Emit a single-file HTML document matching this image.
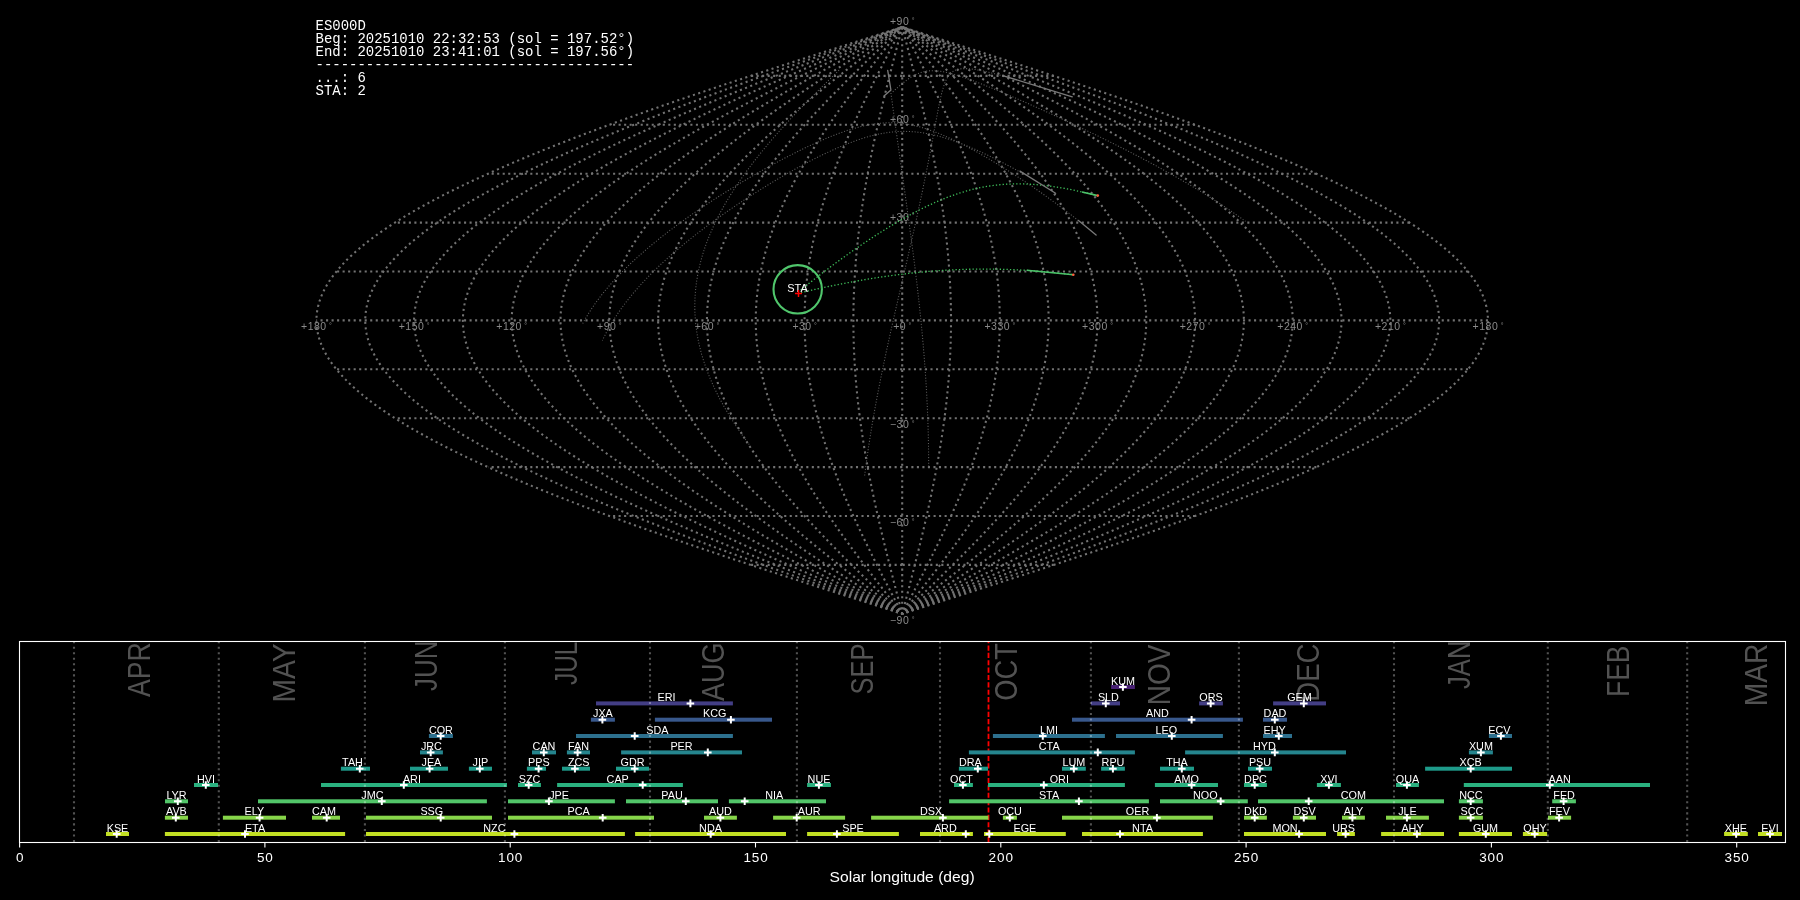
<!DOCTYPE html><html><head><meta charset="utf-8"><style>html,body{margin:0;padding:0;background:#000;width:1800px;height:900px;overflow:hidden}svg{display:block;will-change:transform}</style></head><body><svg width="1800" height="900" viewBox="0 0 1800 900"><rect width="1800" height="900" fill="#000"/><g stroke="#727272" stroke-width="2.08" stroke-dasharray="2.08 3.44" fill="none"><polyline stroke-dashoffset="1.04" points="902.20,613.80 904.76,612.98 907.31,612.17 909.87,611.36 912.42,610.54 914.98,609.72 917.53,608.91 920.09,608.10 922.64,607.28 925.20,606.46 927.75,605.65 930.30,604.84 932.86,604.02 935.41,603.20 937.96,602.39 940.51,601.57 943.06,600.76 945.61,599.94 948.16,599.13 950.71,598.31 953.25,597.50 955.80,596.68 958.34,595.87 960.89,595.05 963.43,594.24 965.97,593.42 968.51,592.61 971.05,591.79 973.59,590.98 976.12,590.16 978.66,589.35 981.19,588.53 983.72,587.72 986.25,586.90 988.78,586.09 991.31,585.27 993.83,584.46 996.36,583.64 998.88,582.83 1001.40,582.01 1003.92,581.20 1006.43,580.38 1008.95,579.57 1011.46,578.75 1013.97,577.94 1016.48,577.12 1018.98,576.31 1021.48,575.49 1023.99,574.68 1026.48,573.87 1028.98,573.05 1031.47,572.23 1033.97,571.42 1036.46,570.61 1038.94,569.79 1041.43,568.97 1043.91,568.16 1046.39,567.35 1048.86,566.53 1051.33,565.71 1053.80,564.90 1056.27,564.08 1058.74,563.27 1061.20,562.45 1063.66,561.64 1066.11,560.82 1068.56,560.01 1071.01,559.19 1073.46,558.38 1075.90,557.56 1078.34,556.75 1080.78,555.93 1083.21,555.12 1085.64,554.30 1088.06,553.49 1090.49,552.67 1092.90,551.86 1095.32,551.04 1097.73,550.23 1100.14,549.41 1102.54,548.60 1104.94,547.78 1107.34,546.97 1109.73,546.15 1112.12,545.34 1114.50,544.52 1116.88,543.71 1119.26,542.89 1121.63,542.08 1124.00,541.26 1126.36,540.45 1128.72,539.63 1131.07,538.82 1133.42,538.00 1135.77,537.19 1138.11,536.38 1140.45,535.56 1142.78,534.75 1145.11,533.93 1147.43,533.12 1149.75,532.30 1152.07,531.48 1154.37,530.67 1156.68,529.86 1158.98,529.04 1161.27,528.22 1163.56,527.41 1165.85,526.60 1168.13,525.78 1170.40,524.96 1172.67,524.15 1174.94,523.33 1177.20,522.52 1179.45,521.70 1181.70,520.89 1183.94,520.07 1186.18,519.26 1188.41,518.44 1190.64,517.63 1192.86,516.81 1195.08,516.00 1197.29,515.18 1199.49,514.37 1201.69,513.55 1203.89,512.74 1206.07,511.92 1208.26,511.11 1210.43,510.29 1212.60,509.48 1214.77,508.66 1216.93,507.85 1219.08,507.03 1221.23,506.22 1223.37,505.40 1225.50,504.59 1227.63,503.77 1229.75,502.96 1231.87,502.14 1233.98,501.33 1236.08,500.51 1238.18,499.70 1240.27,498.88 1242.35,498.07 1244.43,497.25 1246.50,496.44 1248.56,495.62 1250.62,494.81 1252.67,494.00 1254.72,493.18 1256.75,492.36 1258.79,491.55 1260.81,490.73 1262.83,489.92 1264.84,489.10 1266.84,488.29 1268.84,487.47 1270.83,486.66 1272.81,485.84 1274.79,485.03 1276.76,484.21 1278.72,483.40 1280.67,482.58 1282.62,481.77 1284.56,480.95 1286.49,480.14 1288.42,479.32 1290.33,478.51 1292.24,477.69 1294.15,476.88 1296.04,476.06 1297.93,475.25 1299.81,474.43 1301.68,473.62 1303.55,472.80 1305.41,471.99 1307.26,471.17 1309.10,470.36 1310.93,469.54 1312.76,468.73 1314.58,467.91 1316.39,467.10 1318.20,466.28 1319.99,465.47 1321.78,464.65 1323.56,463.84 1325.33,463.02 1327.09,462.21 1328.85,461.39 1330.59,460.58 1332.33,459.76 1334.06,458.95 1335.79,458.13 1337.50,457.32 1339.21,456.50 1340.91,455.69 1342.59,454.88 1344.28,454.06 1345.95,453.25 1347.61,452.43 1349.27,451.62 1350.92,450.80 1352.55,449.98 1354.18,449.17 1355.81,448.35 1357.42,447.54 1359.02,446.72 1360.62,445.91 1362.20,445.09 1363.78,444.28 1365.35,443.46 1366.91,442.65 1368.46,441.83 1370.01,441.02 1371.54,440.20 1373.06,439.39 1374.58,438.57 1376.09,437.76 1377.58,436.94 1379.07,436.13 1380.55,435.31 1382.02,434.50 1383.48,433.68 1384.94,432.87 1386.38,432.05 1387.81,431.24 1389.24,430.42 1390.65,429.61 1392.06,428.79 1393.46,427.98 1394.84,427.16 1396.22,426.35 1397.59,425.53 1398.95,424.72 1400.30,423.90 1401.64,423.09 1402.97,422.27 1404.29,421.46 1405.60,420.64 1406.90,419.83 1408.20,419.01 1409.48,418.20 1410.75,417.38 1412.02,416.57 1413.27,415.75 1414.51,414.94 1415.75,414.12 1416.97,413.31 1418.19,412.50 1419.39,411.68 1420.59,410.86 1421.77,410.05 1422.95,409.23 1424.11,408.42 1425.27,407.60 1426.41,406.79 1427.55,405.97 1428.67,405.16 1429.79,404.34 1430.89,403.53 1431.99,402.71 1433.08,401.90 1434.15,401.08 1435.22,400.27 1436.27,399.45 1437.31,398.64 1438.35,397.82 1439.37,397.01 1440.39,396.19 1441.39,395.38 1442.38,394.56 1443.37,393.75 1444.34,392.93 1445.30,392.12 1446.26,391.30 1447.20,390.49 1448.13,389.67 1449.05,388.86 1449.96,388.04 1450.86,387.23 1451.75,386.41 1452.63,385.60 1453.50,384.78 1454.36,383.97 1455.21,383.15 1456.04,382.34 1456.87,381.52 1457.69,380.71 1458.49,379.89 1459.29,379.08 1460.07,378.26 1460.85,377.45 1461.61,376.63 1462.36,375.82 1463.10,375.00 1463.83,374.19 1464.55,373.38 1465.26,372.56 1465.96,371.75 1466.65,370.93 1467.33,370.11 1468.00,369.30 1468.65,368.48 1469.30,367.67 1469.93,366.85 1470.56,366.04 1471.17,365.22 1471.77,364.41 1472.36,363.59 1472.94,362.78 1473.51,361.96 1474.07,361.15 1474.62,360.33 1475.16,359.52 1475.68,358.70 1476.20,357.89 1476.70,357.07 1477.19,356.26 1477.68,355.44 1478.15,354.63 1478.61,353.81 1479.06,353.00 1479.50,352.18 1479.92,351.37 1480.34,350.55 1480.74,349.74 1481.14,348.92 1481.52,348.11 1481.89,347.29 1482.26,346.48 1482.61,345.66 1482.94,344.85 1483.27,344.03 1483.59,343.22 1483.90,342.40 1484.19,341.59 1484.47,340.77 1484.75,339.96 1485.01,339.14 1485.26,338.33 1485.50,337.51 1485.73,336.70 1485.94,335.88 1486.15,335.07 1486.35,334.25 1486.53,333.44 1486.70,332.62 1486.86,331.81 1487.01,331.00 1487.15,330.18 1487.28,329.36 1487.40,328.55 1487.50,327.73 1487.60,326.92 1487.68,326.10 1487.76,325.29 1487.82,324.47 1487.87,323.66 1487.91,322.84 1487.93,322.03 1487.95,321.21 1487.96,320.40 1487.95,319.58 1487.93,318.77 1487.91,317.95 1487.87,317.14 1487.82,316.32 1487.76,315.51 1487.68,314.69 1487.60,313.88 1487.50,313.06 1487.40,312.25 1487.28,311.44 1487.15,310.62 1487.01,309.80 1486.86,308.99 1486.70,308.17 1486.53,307.36 1486.35,306.54 1486.15,305.73 1485.94,304.91 1485.73,304.10 1485.50,303.28 1485.26,302.47 1485.01,301.65 1484.75,300.84 1484.47,300.02 1484.19,299.21 1483.90,298.39 1483.59,297.58 1483.27,296.76 1482.94,295.95 1482.61,295.13 1482.26,294.32 1481.89,293.50 1481.52,292.69 1481.14,291.88 1480.74,291.06 1480.34,290.25 1479.92,289.43 1479.50,288.62 1479.06,287.80 1478.61,286.98 1478.15,286.17 1477.68,285.35 1477.19,284.54 1476.70,283.72 1476.20,282.91 1475.68,282.09 1475.16,281.28 1474.62,280.46 1474.07,279.65 1473.51,278.83 1472.94,278.02 1472.36,277.20 1471.77,276.39 1471.17,275.57 1470.56,274.76 1469.93,273.94 1469.30,273.13 1468.65,272.31 1468.00,271.50 1467.33,270.69 1466.65,269.87 1465.96,269.05 1465.26,268.24 1464.55,267.42 1463.83,266.61 1463.10,265.79 1462.36,264.98 1461.61,264.16 1460.85,263.35 1460.07,262.53 1459.29,261.72 1458.49,260.90 1457.69,260.09 1456.87,259.27 1456.04,258.46 1455.21,257.64 1454.36,256.83 1453.50,256.01 1452.63,255.20 1451.75,254.38 1450.86,253.57 1449.96,252.75 1449.05,251.94 1448.13,251.12 1447.20,250.31 1446.26,249.49 1445.30,248.68 1444.34,247.86 1443.37,247.05 1442.38,246.23 1441.39,245.42 1440.39,244.60 1439.37,243.79 1438.35,242.97 1437.31,242.16 1436.27,241.34 1435.22,240.53 1434.15,239.71 1433.08,238.90 1431.99,238.08 1430.89,237.27 1429.79,236.45 1428.67,235.64 1427.55,234.82 1426.41,234.01 1425.27,233.19 1424.11,232.38 1422.95,231.56 1421.77,230.75 1420.59,229.94 1419.39,229.12 1418.19,228.30 1416.97,227.49 1415.75,226.67 1414.51,225.86 1413.27,225.04 1412.02,224.23 1410.75,223.41 1409.48,222.60 1408.20,221.78 1406.90,220.97 1405.60,220.15 1404.29,219.34 1402.97,218.52 1401.64,217.71 1400.30,216.89 1398.95,216.08 1397.59,215.26 1396.22,214.45 1394.84,213.63 1393.46,212.82 1392.06,212.00 1390.65,211.19 1389.24,210.38 1387.81,209.56 1386.38,208.75 1384.94,207.93 1383.48,207.11 1382.02,206.30 1380.55,205.48 1379.07,204.67 1377.58,203.85 1376.09,203.04 1374.58,202.22 1373.06,201.41 1371.54,200.59 1370.01,199.78 1368.46,198.96 1366.91,198.15 1365.35,197.33 1363.78,196.52 1362.20,195.70 1360.62,194.89 1359.02,194.07 1357.42,193.26 1355.81,192.44 1354.18,191.63 1352.55,190.81 1350.92,190.00 1349.27,189.18 1347.61,188.37 1345.95,187.55 1344.28,186.74 1342.59,185.92 1340.91,185.11 1339.21,184.29 1337.50,183.48 1335.79,182.66 1334.06,181.85 1332.33,181.03 1330.59,180.22 1328.85,179.40 1327.09,178.59 1325.33,177.77 1323.56,176.96 1321.78,176.14 1319.99,175.33 1318.20,174.51 1316.39,173.70 1314.58,172.88 1312.76,172.07 1310.93,171.25 1309.10,170.44 1307.26,169.62 1305.41,168.81 1303.55,167.99 1301.68,167.18 1299.81,166.36 1297.93,165.55 1296.04,164.73 1294.15,163.92 1292.24,163.10 1290.33,162.29 1288.42,161.47 1286.49,160.66 1284.56,159.84 1282.62,159.03 1280.67,158.21 1278.72,157.40 1276.76,156.58 1274.79,155.77 1272.81,154.95 1270.83,154.14 1268.84,153.32 1266.84,152.51 1264.84,151.69 1262.83,150.88 1260.81,150.06 1258.79,149.25 1256.75,148.44 1254.72,147.62 1252.67,146.80 1250.62,145.99 1248.56,145.17 1246.50,144.36 1244.43,143.54 1242.35,142.73 1240.27,141.91 1238.18,141.10 1236.08,140.28 1233.98,139.47 1231.87,138.66 1229.75,137.84 1227.63,137.02 1225.50,136.21 1223.37,135.39 1221.23,134.58 1219.08,133.76 1216.93,132.95 1214.77,132.13 1212.60,131.32 1210.43,130.50 1208.26,129.69 1206.07,128.88 1203.89,128.06 1201.69,127.24 1199.49,126.43 1197.29,125.61 1195.08,124.80 1192.86,123.98 1190.64,123.17 1188.41,122.35 1186.18,121.54 1183.94,120.72 1181.70,119.91 1179.45,119.09 1177.20,118.28 1174.94,117.47 1172.67,116.65 1170.40,115.83 1168.13,115.02 1165.85,114.20 1163.56,113.39 1161.27,112.57 1158.98,111.76 1156.68,110.94 1154.37,110.13 1152.07,109.31 1149.75,108.50 1147.43,107.69 1145.11,106.87 1142.78,106.05 1140.45,105.24 1138.11,104.42 1135.77,103.61 1133.42,102.79 1131.07,101.98 1128.72,101.16 1126.36,100.35 1124.00,99.53 1121.63,98.72 1119.26,97.91 1116.88,97.09 1114.50,96.28 1112.12,95.46 1109.73,94.64 1107.34,93.83 1104.94,93.01 1102.54,92.20 1100.14,91.38 1097.73,90.57 1095.32,89.75 1092.90,88.94 1090.49,88.12 1088.06,87.31 1085.64,86.50 1083.21,85.68 1080.78,84.86 1078.34,84.05 1075.90,83.23 1073.46,82.42 1071.01,81.60 1068.56,80.79 1066.11,79.97 1063.66,79.16 1061.20,78.34 1058.74,77.53 1056.27,76.72 1053.80,75.90 1051.33,75.08 1048.86,74.27 1046.39,73.45 1043.91,72.64 1041.43,71.82 1038.94,71.01 1036.46,70.19 1033.97,69.38 1031.47,68.56 1028.98,67.75 1026.48,66.94 1023.99,66.12 1021.48,65.31 1018.98,64.49 1016.48,63.68 1013.97,62.86 1011.46,62.05 1008.95,61.23 1006.43,60.42 1003.92,59.60 1001.40,58.78 998.88,57.97 996.36,57.15 993.83,56.34 991.31,55.52 988.78,54.71 986.25,53.89 983.72,53.08 981.19,52.26 978.66,51.45 976.12,50.63 973.59,49.82 971.05,49.00 968.51,48.19 965.97,47.38 963.43,46.56 960.89,45.75 958.34,44.93 955.80,44.12 953.25,43.30 950.71,42.49 948.16,41.67 945.61,40.86 943.06,40.04 940.51,39.23 937.96,38.41 935.41,37.59 932.86,36.78 930.30,35.96 927.75,35.15 925.20,34.33 922.64,33.52 920.09,32.70 917.53,31.89 914.98,31.07 912.42,30.26 909.87,29.44 907.31,28.63 904.76,27.81 902.20,27.00"/><polyline stroke-dashoffset="1.04" points="902.20,613.80 904.54,612.98 906.89,612.17 909.23,611.36 911.57,610.54 913.91,609.72 916.26,608.91 918.60,608.10 920.94,607.28 923.28,606.46 925.62,605.65 927.96,604.84 930.30,604.02 932.64,603.20 934.98,602.39 937.32,601.57 939.66,600.76 941.99,599.94 944.33,599.13 946.66,598.31 949.00,597.50 951.33,596.68 953.66,595.87 956.00,595.05 958.33,594.24 960.66,593.42 962.98,592.61 965.31,591.79 967.64,590.98 969.96,590.16 972.29,589.35 974.61,588.53 976.93,587.72 979.25,586.90 981.57,586.09 983.88,585.27 986.20,584.46 988.51,583.64 990.82,582.83 993.13,582.01 995.44,581.20 997.75,580.38 1000.05,579.57 1002.35,578.75 1004.65,577.94 1006.95,577.12 1009.25,576.31 1011.54,575.49 1013.84,574.68 1016.13,573.87 1018.42,573.05 1020.70,572.23 1022.99,571.42 1025.27,570.61 1027.55,569.79 1029.82,568.97 1032.10,568.16 1034.37,567.35 1036.64,566.53 1038.91,565.71 1041.17,564.90 1043.43,564.08 1045.69,563.27 1047.95,562.45 1050.20,561.64 1052.45,560.82 1054.70,560.01 1056.94,559.19 1059.19,558.38 1061.43,557.56 1063.66,556.75 1065.89,555.93 1068.12,555.12 1070.35,554.30 1072.57,553.49 1074.79,552.67 1077.01,551.86 1079.23,551.04 1081.44,550.23 1083.64,549.41 1085.85,548.60 1088.05,547.78 1090.24,546.97 1092.43,546.15 1094.62,545.34 1096.81,544.52 1098.99,543.71 1101.17,542.89 1103.34,542.08 1105.51,541.26 1107.68,540.45 1109.84,539.63 1112.00,538.82 1114.15,538.00 1116.31,537.19 1118.45,536.38 1120.59,535.56 1122.73,534.75 1124.87,533.93 1127.00,533.12 1129.12,532.30 1131.24,531.48 1133.36,530.67 1135.47,529.86 1137.58,529.04 1139.68,528.22 1141.78,527.41 1143.88,526.60 1145.97,525.78 1148.05,524.96 1150.13,524.15 1152.21,523.33 1154.28,522.52 1156.35,521.70 1158.41,520.89 1160.46,520.07 1162.52,519.26 1164.56,518.44 1166.60,517.63 1168.64,516.81 1170.67,516.00 1172.70,515.18 1174.72,514.37 1176.74,513.55 1178.75,512.74 1180.75,511.92 1182.75,511.11 1184.75,510.29 1186.74,509.48 1188.72,508.66 1190.70,507.85 1192.67,507.03 1194.64,506.22 1196.60,505.40 1198.56,504.59 1200.51,503.77 1202.45,502.96 1204.39,502.14 1206.33,501.33 1208.26,500.51 1210.18,499.70 1212.09,498.88 1214.00,498.07 1215.91,497.25 1217.81,496.44 1219.70,495.62 1221.59,494.81 1223.47,494.00 1225.34,493.18 1227.21,492.36 1229.07,491.55 1230.93,490.73 1232.78,489.92 1234.62,489.10 1236.45,488.29 1238.29,487.47 1240.11,486.66 1241.93,485.84 1243.74,485.03 1245.54,484.21 1247.34,483.40 1249.13,482.58 1250.92,481.77 1252.69,480.95 1254.47,480.14 1256.23,479.32 1257.99,478.51 1259.74,477.69 1261.48,476.88 1263.22,476.06 1264.95,475.25 1266.68,474.43 1268.39,473.62 1270.10,472.80 1271.81,471.99 1273.50,471.17 1275.19,470.36 1276.87,469.54 1278.55,468.73 1280.22,467.91 1281.88,467.10 1283.53,466.28 1285.17,465.47 1286.81,464.65 1288.44,463.84 1290.07,463.02 1291.68,462.21 1293.29,461.39 1294.90,460.58 1296.49,459.76 1298.08,458.95 1299.65,458.13 1301.23,457.32 1302.79,456.50 1304.35,455.69 1305.90,454.88 1307.44,454.06 1308.97,453.25 1310.49,452.43 1312.01,451.62 1313.52,450.80 1315.02,449.98 1316.52,449.17 1318.00,448.35 1319.48,447.54 1320.95,446.72 1322.42,445.91 1323.87,445.09 1325.32,444.28 1326.76,443.46 1328.19,442.65 1329.61,441.83 1331.02,441.02 1332.43,440.20 1333.83,439.39 1335.21,438.57 1336.60,437.76 1337.97,436.94 1339.33,436.13 1340.69,435.31 1342.04,434.50 1343.38,433.68 1344.71,432.87 1346.03,432.05 1347.35,431.24 1348.65,430.42 1349.95,429.61 1351.24,428.79 1352.52,427.98 1353.79,427.16 1355.05,426.35 1356.31,425.53 1357.55,424.72 1358.79,423.90 1360.02,423.09 1361.24,422.27 1362.45,421.46 1363.65,420.64 1364.85,419.83 1366.03,419.01 1367.21,418.20 1368.37,417.38 1369.53,416.57 1370.68,415.75 1371.82,414.94 1372.95,414.12 1374.07,413.31 1375.19,412.50 1376.29,411.68 1377.39,410.86 1378.47,410.05 1379.55,409.23 1380.62,408.42 1381.68,407.60 1382.73,406.79 1383.77,405.97 1384.80,405.16 1385.82,404.34 1386.84,403.53 1387.84,402.71 1388.84,401.90 1389.82,401.08 1390.80,400.27 1391.76,399.45 1392.72,398.64 1393.67,397.82 1394.61,397.01 1395.54,396.19 1396.46,395.38 1397.37,394.56 1398.27,393.75 1399.16,392.93 1400.04,392.12 1400.92,391.30 1401.78,390.49 1402.64,389.67 1403.48,388.86 1404.31,388.04 1405.14,387.23 1405.96,386.41 1406.76,385.60 1407.56,384.78 1408.34,383.97 1409.12,383.15 1409.89,382.34 1410.65,381.52 1411.40,380.71 1412.13,379.89 1412.86,379.08 1413.58,378.26 1414.29,377.45 1414.99,376.63 1415.68,375.82 1416.36,375.00 1417.03,374.19 1417.69,373.38 1418.34,372.56 1418.98,371.75 1419.61,370.93 1420.24,370.11 1420.85,369.30 1421.45,368.48 1422.04,367.67 1422.62,366.85 1423.19,366.04 1423.76,365.22 1424.31,364.41 1424.85,363.59 1425.38,362.78 1425.90,361.96 1426.42,361.15 1426.92,360.33 1427.41,359.52 1427.89,358.70 1428.36,357.89 1428.83,357.07 1429.28,356.26 1429.72,355.44 1430.15,354.63 1430.57,353.81 1430.99,353.00 1431.39,352.18 1431.78,351.37 1432.16,350.55 1432.53,349.74 1432.89,348.92 1433.25,348.11 1433.59,347.29 1433.92,346.48 1434.24,345.66 1434.55,344.85 1434.85,344.03 1435.14,343.22 1435.42,342.40 1435.69,341.59 1435.95,340.77 1436.20,339.96 1436.44,339.14 1436.67,338.33 1436.89,337.51 1437.10,336.70 1437.30,335.88 1437.49,335.07 1437.67,334.25 1437.84,333.44 1437.99,332.62 1438.14,331.81 1438.28,331.00 1438.41,330.18 1438.52,329.36 1438.63,328.55 1438.73,327.73 1438.82,326.92 1438.89,326.10 1438.96,325.29 1439.02,324.47 1439.06,323.66 1439.10,322.84 1439.12,322.03 1439.14,321.21 1439.14,320.40 1439.14,319.58 1439.12,318.77 1439.10,317.95 1439.06,317.14 1439.02,316.32 1438.96,315.51 1438.89,314.69 1438.82,313.88 1438.73,313.06 1438.63,312.25 1438.52,311.44 1438.41,310.62 1438.28,309.80 1438.14,308.99 1437.99,308.17 1437.84,307.36 1437.67,306.54 1437.49,305.73 1437.30,304.91 1437.10,304.10 1436.89,303.28 1436.67,302.47 1436.44,301.65 1436.20,300.84 1435.95,300.02 1435.69,299.21 1435.42,298.39 1435.14,297.58 1434.85,296.76 1434.55,295.95 1434.24,295.13 1433.92,294.32 1433.59,293.50 1433.25,292.69 1432.89,291.88 1432.53,291.06 1432.16,290.25 1431.78,289.43 1431.39,288.62 1430.99,287.80 1430.57,286.98 1430.15,286.17 1429.72,285.35 1429.28,284.54 1428.83,283.72 1428.36,282.91 1427.89,282.09 1427.41,281.28 1426.92,280.46 1426.42,279.65 1425.90,278.83 1425.38,278.02 1424.85,277.20 1424.31,276.39 1423.76,275.57 1423.19,274.76 1422.62,273.94 1422.04,273.13 1421.45,272.31 1420.85,271.50 1420.24,270.69 1419.61,269.87 1418.98,269.05 1418.34,268.24 1417.69,267.42 1417.03,266.61 1416.36,265.79 1415.68,264.98 1414.99,264.16 1414.29,263.35 1413.58,262.53 1412.86,261.72 1412.13,260.90 1411.40,260.09 1410.65,259.27 1409.89,258.46 1409.12,257.64 1408.34,256.83 1407.56,256.01 1406.76,255.20 1405.96,254.38 1405.14,253.57 1404.31,252.75 1403.48,251.94 1402.64,251.12 1401.78,250.31 1400.92,249.49 1400.04,248.68 1399.16,247.86 1398.27,247.05 1397.37,246.23 1396.46,245.42 1395.54,244.60 1394.61,243.79 1393.67,242.97 1392.72,242.16 1391.76,241.34 1390.80,240.53 1389.82,239.71 1388.84,238.90 1387.84,238.08 1386.84,237.27 1385.82,236.45 1384.80,235.64 1383.77,234.82 1382.73,234.01 1381.68,233.19 1380.62,232.38 1379.55,231.56 1378.47,230.75 1377.39,229.94 1376.29,229.12 1375.19,228.30 1374.07,227.49 1372.95,226.67 1371.82,225.86 1370.68,225.04 1369.53,224.23 1368.37,223.41 1367.21,222.60 1366.03,221.78 1364.85,220.97 1363.65,220.15 1362.45,219.34 1361.24,218.52 1360.02,217.71 1358.79,216.89 1357.55,216.08 1356.31,215.26 1355.05,214.45 1353.79,213.63 1352.52,212.82 1351.24,212.00 1349.95,211.19 1348.65,210.38 1347.35,209.56 1346.03,208.75 1344.71,207.93 1343.38,207.11 1342.04,206.30 1340.69,205.48 1339.33,204.67 1337.97,203.85 1336.60,203.04 1335.21,202.22 1333.83,201.41 1332.43,200.59 1331.02,199.78 1329.61,198.96 1328.19,198.15 1326.76,197.33 1325.32,196.52 1323.87,195.70 1322.42,194.89 1320.95,194.07 1319.48,193.26 1318.00,192.44 1316.52,191.63 1315.02,190.81 1313.52,190.00 1312.01,189.18 1310.49,188.37 1308.97,187.55 1307.44,186.74 1305.90,185.92 1304.35,185.11 1302.79,184.29 1301.23,183.48 1299.65,182.66 1298.08,181.85 1296.49,181.03 1294.90,180.22 1293.29,179.40 1291.68,178.59 1290.07,177.77 1288.44,176.96 1286.81,176.14 1285.17,175.33 1283.53,174.51 1281.88,173.70 1280.22,172.88 1278.55,172.07 1276.87,171.25 1275.19,170.44 1273.50,169.62 1271.81,168.81 1270.10,167.99 1268.39,167.18 1266.68,166.36 1264.95,165.55 1263.22,164.73 1261.48,163.92 1259.74,163.10 1257.99,162.29 1256.23,161.47 1254.47,160.66 1252.69,159.84 1250.92,159.03 1249.13,158.21 1247.34,157.40 1245.54,156.58 1243.74,155.77 1241.93,154.95 1240.11,154.14 1238.29,153.32 1236.45,152.51 1234.62,151.69 1232.78,150.88 1230.93,150.06 1229.07,149.25 1227.21,148.44 1225.34,147.62 1223.47,146.80 1221.59,145.99 1219.70,145.17 1217.81,144.36 1215.91,143.54 1214.00,142.73 1212.09,141.91 1210.18,141.10 1208.26,140.28 1206.33,139.47 1204.39,138.66 1202.45,137.84 1200.51,137.02 1198.56,136.21 1196.60,135.39 1194.64,134.58 1192.67,133.76 1190.70,132.95 1188.72,132.13 1186.74,131.32 1184.75,130.50 1182.75,129.69 1180.75,128.88 1178.75,128.06 1176.74,127.24 1174.72,126.43 1172.70,125.61 1170.67,124.80 1168.64,123.98 1166.60,123.17 1164.56,122.35 1162.52,121.54 1160.46,120.72 1158.41,119.91 1156.35,119.09 1154.28,118.28 1152.21,117.47 1150.13,116.65 1148.05,115.83 1145.97,115.02 1143.88,114.20 1141.78,113.39 1139.68,112.57 1137.58,111.76 1135.47,110.94 1133.36,110.13 1131.24,109.31 1129.12,108.50 1127.00,107.69 1124.87,106.87 1122.73,106.05 1120.59,105.24 1118.45,104.42 1116.31,103.61 1114.15,102.79 1112.00,101.98 1109.84,101.16 1107.68,100.35 1105.51,99.53 1103.34,98.72 1101.17,97.91 1098.99,97.09 1096.81,96.28 1094.62,95.46 1092.43,94.64 1090.24,93.83 1088.05,93.01 1085.85,92.20 1083.64,91.38 1081.44,90.57 1079.23,89.75 1077.01,88.94 1074.79,88.12 1072.57,87.31 1070.35,86.50 1068.12,85.68 1065.89,84.86 1063.66,84.05 1061.43,83.23 1059.19,82.42 1056.94,81.60 1054.70,80.79 1052.45,79.97 1050.20,79.16 1047.95,78.34 1045.69,77.53 1043.43,76.72 1041.17,75.90 1038.91,75.08 1036.64,74.27 1034.37,73.45 1032.10,72.64 1029.82,71.82 1027.55,71.01 1025.27,70.19 1022.99,69.38 1020.70,68.56 1018.42,67.75 1016.13,66.94 1013.84,66.12 1011.54,65.31 1009.25,64.49 1006.95,63.68 1004.65,62.86 1002.35,62.05 1000.05,61.23 997.75,60.42 995.44,59.60 993.13,58.78 990.82,57.97 988.51,57.15 986.20,56.34 983.88,55.52 981.57,54.71 979.25,53.89 976.93,53.08 974.61,52.26 972.29,51.45 969.96,50.63 967.64,49.82 965.31,49.00 962.98,48.19 960.66,47.38 958.33,46.56 956.00,45.75 953.66,44.93 951.33,44.12 949.00,43.30 946.66,42.49 944.33,41.67 941.99,40.86 939.66,40.04 937.32,39.23 934.98,38.41 932.64,37.59 930.30,36.78 927.96,35.96 925.62,35.15 923.28,34.33 920.94,33.52 918.60,32.70 916.26,31.89 913.91,31.07 911.57,30.26 909.23,29.44 906.89,28.63 904.54,27.81 902.20,27.00"/><polyline stroke-dashoffset="1.04" points="902.20,613.80 904.33,612.98 906.46,612.17 908.59,611.36 910.72,610.54 912.85,609.72 914.98,608.91 917.11,608.10 919.24,607.28 921.36,606.46 923.49,605.65 925.62,604.84 927.75,604.02 929.87,603.20 932.00,602.39 934.13,601.57 936.25,600.76 938.37,599.94 940.50,599.13 942.62,598.31 944.74,597.50 946.86,596.68 948.99,595.87 951.10,595.05 953.22,594.24 955.34,593.42 957.46,592.61 959.57,591.79 961.69,590.98 963.80,590.16 965.91,589.35 968.02,588.53 970.13,587.72 972.24,586.90 974.35,586.09 976.46,585.27 978.56,584.46 980.66,583.64 982.76,582.83 984.86,582.01 986.96,581.20 989.06,580.38 991.15,579.57 993.25,578.75 995.34,577.94 997.43,577.12 999.52,576.31 1001.60,575.49 1003.69,574.68 1005.77,573.87 1007.85,573.05 1009.93,572.23 1012.01,571.42 1014.08,570.61 1016.15,569.79 1018.22,568.97 1020.29,568.16 1022.35,567.35 1024.42,566.53 1026.48,565.71 1028.54,564.90 1030.59,564.08 1032.65,563.27 1034.70,562.45 1036.75,561.64 1038.79,560.82 1040.84,560.01 1042.88,559.19 1044.92,558.38 1046.95,557.56 1048.98,556.75 1051.01,555.93 1053.04,555.12 1055.06,554.30 1057.09,553.49 1059.10,552.67 1061.12,551.86 1063.13,551.04 1065.14,550.23 1067.15,549.41 1069.15,548.60 1071.15,547.78 1073.15,546.97 1075.14,546.15 1077.13,545.34 1079.12,544.52 1081.10,543.71 1083.08,542.89 1085.06,542.08 1087.03,541.26 1089.00,540.45 1090.97,539.63 1092.93,538.82 1094.89,538.00 1096.84,537.19 1098.79,536.38 1100.74,535.56 1102.68,534.75 1104.62,533.93 1106.56,533.12 1108.49,532.30 1110.42,531.48 1112.35,530.67 1114.27,529.86 1116.18,529.04 1118.09,528.22 1120.00,527.41 1121.91,526.60 1123.81,525.78 1125.70,524.96 1127.59,524.15 1129.48,523.33 1131.36,522.52 1133.24,521.70 1135.12,520.89 1136.99,520.07 1138.85,519.26 1140.71,518.44 1142.57,517.63 1144.42,516.81 1146.27,516.00 1148.11,515.18 1149.94,514.37 1151.78,513.55 1153.61,512.74 1155.43,511.92 1157.25,511.11 1159.06,510.29 1160.87,509.48 1162.67,508.66 1164.47,507.85 1166.27,507.03 1168.05,506.22 1169.84,505.40 1171.62,504.59 1173.39,503.77 1175.16,502.96 1176.92,502.14 1178.68,501.33 1180.43,500.51 1182.18,499.70 1183.92,498.88 1185.66,498.07 1187.39,497.25 1189.12,496.44 1190.84,495.62 1192.55,494.81 1194.26,494.00 1195.96,493.18 1197.66,492.36 1199.35,491.55 1201.04,490.73 1202.72,489.92 1204.40,489.10 1206.07,488.29 1207.73,487.47 1209.39,486.66 1211.04,485.84 1212.69,485.03 1214.33,484.21 1215.96,483.40 1217.59,482.58 1219.22,481.77 1220.83,480.95 1222.44,480.14 1224.05,479.32 1225.64,478.51 1227.24,477.69 1228.82,476.88 1230.40,476.06 1231.98,475.25 1233.54,474.43 1235.10,473.62 1236.66,472.80 1238.21,471.99 1239.75,471.17 1241.28,470.36 1242.81,469.54 1244.33,468.73 1245.85,467.91 1247.36,467.10 1248.86,466.28 1250.36,465.47 1251.85,464.65 1253.33,463.84 1254.81,463.02 1256.28,462.21 1257.74,461.39 1259.20,460.58 1260.64,459.76 1262.09,458.95 1263.52,458.13 1264.95,457.32 1266.37,456.50 1267.79,455.69 1269.20,454.88 1270.60,454.06 1271.99,453.25 1273.38,452.43 1274.76,451.62 1276.13,450.80 1277.49,449.98 1278.85,449.17 1280.20,448.35 1281.55,447.54 1282.89,446.72 1284.21,445.91 1285.54,445.09 1286.85,444.28 1288.16,443.46 1289.46,442.65 1290.75,441.83 1292.04,441.02 1293.32,440.20 1294.59,439.39 1295.85,438.57 1297.11,437.76 1298.35,436.94 1299.59,436.13 1300.83,435.31 1302.05,434.50 1303.27,433.68 1304.48,432.87 1305.68,432.05 1306.88,431.24 1308.07,430.42 1309.24,429.61 1310.42,428.79 1311.58,427.98 1312.74,427.16 1313.88,426.35 1315.03,425.53 1316.16,424.72 1317.28,423.90 1318.40,423.09 1319.51,422.27 1320.61,421.46 1321.70,420.64 1322.79,419.83 1323.86,419.01 1324.93,418.20 1325.99,417.38 1327.05,416.57 1328.09,415.75 1329.13,414.94 1330.16,414.12 1331.18,413.31 1332.19,412.50 1333.19,411.68 1334.19,410.86 1335.18,410.05 1336.16,409.23 1337.13,408.42 1338.09,407.60 1339.04,406.79 1339.99,405.97 1340.93,405.16 1341.86,404.34 1342.78,403.53 1343.69,402.71 1344.60,401.90 1345.49,401.08 1346.38,400.27 1347.26,399.45 1348.13,398.64 1348.99,397.82 1349.84,397.01 1350.69,396.19 1351.53,395.38 1352.35,394.56 1353.17,393.75 1353.98,392.93 1354.79,392.12 1355.58,391.30 1356.36,390.49 1357.14,389.67 1357.91,388.86 1358.67,388.04 1359.42,387.23 1360.16,386.41 1360.89,385.60 1361.62,384.78 1362.33,383.97 1363.04,383.15 1363.74,382.34 1364.43,381.52 1365.11,380.71 1365.78,379.89 1366.44,379.08 1367.09,378.26 1367.74,377.45 1368.37,376.63 1369.00,375.82 1369.62,375.00 1370.23,374.19 1370.83,373.38 1371.42,372.56 1372.00,371.75 1372.58,370.93 1373.14,370.11 1373.70,369.30 1374.24,368.48 1374.78,367.67 1375.31,366.85 1375.83,366.04 1376.34,365.22 1376.84,364.41 1377.34,363.59 1377.82,362.78 1378.29,361.96 1378.76,361.15 1379.22,360.33 1379.66,359.52 1380.10,358.70 1380.53,357.89 1380.95,357.07 1381.36,356.26 1381.76,355.44 1382.16,354.63 1382.54,353.81 1382.91,353.00 1383.28,352.18 1383.64,351.37 1383.98,350.55 1384.32,349.74 1384.65,348.92 1384.97,348.11 1385.28,347.29 1385.58,346.48 1385.87,345.66 1386.15,344.85 1386.43,344.03 1386.69,343.22 1386.95,342.40 1387.19,341.59 1387.43,340.77 1387.66,339.96 1387.87,339.14 1388.08,338.33 1388.28,337.51 1388.47,336.70 1388.65,335.88 1388.83,335.07 1388.99,334.25 1389.14,333.44 1389.28,332.62 1389.42,331.81 1389.54,331.00 1389.66,330.18 1389.77,329.36 1389.87,328.55 1389.95,327.73 1390.03,326.92 1390.10,326.10 1390.16,325.29 1390.21,324.47 1390.26,323.66 1390.29,322.84 1390.31,322.03 1390.33,321.21 1390.33,320.40 1390.33,319.58 1390.31,318.77 1390.29,317.95 1390.26,317.14 1390.21,316.32 1390.16,315.51 1390.10,314.69 1390.03,313.88 1389.95,313.06 1389.87,312.25 1389.77,311.44 1389.66,310.62 1389.54,309.80 1389.42,308.99 1389.28,308.17 1389.14,307.36 1388.99,306.54 1388.83,305.73 1388.65,304.91 1388.47,304.10 1388.28,303.28 1388.08,302.47 1387.87,301.65 1387.66,300.84 1387.43,300.02 1387.19,299.21 1386.95,298.39 1386.69,297.58 1386.43,296.76 1386.15,295.95 1385.87,295.13 1385.58,294.32 1385.28,293.50 1384.97,292.69 1384.65,291.88 1384.32,291.06 1383.98,290.25 1383.64,289.43 1383.28,288.62 1382.91,287.80 1382.54,286.98 1382.16,286.17 1381.76,285.35 1381.36,284.54 1380.95,283.72 1380.53,282.91 1380.10,282.09 1379.66,281.28 1379.22,280.46 1378.76,279.65 1378.29,278.83 1377.82,278.02 1377.34,277.20 1376.84,276.39 1376.34,275.57 1375.83,274.76 1375.31,273.94 1374.78,273.13 1374.24,272.31 1373.70,271.50 1373.14,270.69 1372.58,269.87 1372.00,269.05 1371.42,268.24 1370.83,267.42 1370.23,266.61 1369.62,265.79 1369.00,264.98 1368.37,264.16 1367.74,263.35 1367.09,262.53 1366.44,261.72 1365.78,260.90 1365.11,260.09 1364.43,259.27 1363.74,258.46 1363.04,257.64 1362.33,256.83 1361.62,256.01 1360.89,255.20 1360.16,254.38 1359.42,253.57 1358.67,252.75 1357.91,251.94 1357.14,251.12 1356.36,250.31 1355.58,249.49 1354.79,248.68 1353.98,247.86 1353.17,247.05 1352.35,246.23 1351.53,245.42 1350.69,244.60 1349.84,243.79 1348.99,242.97 1348.13,242.16 1347.26,241.34 1346.38,240.53 1345.49,239.71 1344.60,238.90 1343.69,238.08 1342.78,237.27 1341.86,236.45 1340.93,235.64 1339.99,234.82 1339.04,234.01 1338.09,233.19 1337.13,232.38 1336.16,231.56 1335.18,230.75 1334.19,229.94 1333.19,229.12 1332.19,228.30 1331.18,227.49 1330.16,226.67 1329.13,225.86 1328.09,225.04 1327.05,224.23 1325.99,223.41 1324.93,222.60 1323.86,221.78 1322.79,220.97 1321.70,220.15 1320.61,219.34 1319.51,218.52 1318.40,217.71 1317.28,216.89 1316.16,216.08 1315.03,215.26 1313.88,214.45 1312.74,213.63 1311.58,212.82 1310.42,212.00 1309.24,211.19 1308.07,210.38 1306.88,209.56 1305.68,208.75 1304.48,207.93 1303.27,207.11 1302.05,206.30 1300.83,205.48 1299.59,204.67 1298.35,203.85 1297.11,203.04 1295.85,202.22 1294.59,201.41 1293.32,200.59 1292.04,199.78 1290.75,198.96 1289.46,198.15 1288.16,197.33 1286.85,196.52 1285.54,195.70 1284.21,194.89 1282.89,194.07 1281.55,193.26 1280.20,192.44 1278.85,191.63 1277.49,190.81 1276.13,190.00 1274.76,189.18 1273.38,188.37 1271.99,187.55 1270.60,186.74 1269.20,185.92 1267.79,185.11 1266.37,184.29 1264.95,183.48 1263.52,182.66 1262.09,181.85 1260.64,181.03 1259.20,180.22 1257.74,179.40 1256.28,178.59 1254.81,177.77 1253.33,176.96 1251.85,176.14 1250.36,175.33 1248.86,174.51 1247.36,173.70 1245.85,172.88 1244.33,172.07 1242.81,171.25 1241.28,170.44 1239.75,169.62 1238.21,168.81 1236.66,167.99 1235.10,167.18 1233.54,166.36 1231.98,165.55 1230.40,164.73 1228.82,163.92 1227.24,163.10 1225.64,162.29 1224.05,161.47 1222.44,160.66 1220.83,159.84 1219.22,159.03 1217.59,158.21 1215.96,157.40 1214.33,156.58 1212.69,155.77 1211.04,154.95 1209.39,154.14 1207.73,153.32 1206.07,152.51 1204.40,151.69 1202.72,150.88 1201.04,150.06 1199.35,149.25 1197.66,148.44 1195.96,147.62 1194.26,146.80 1192.55,145.99 1190.84,145.17 1189.12,144.36 1187.39,143.54 1185.66,142.73 1183.92,141.91 1182.18,141.10 1180.43,140.28 1178.68,139.47 1176.92,138.66 1175.16,137.84 1173.39,137.02 1171.62,136.21 1169.84,135.39 1168.05,134.58 1166.27,133.76 1164.47,132.95 1162.67,132.13 1160.87,131.32 1159.06,130.50 1157.25,129.69 1155.43,128.88 1153.61,128.06 1151.78,127.24 1149.94,126.43 1148.11,125.61 1146.27,124.80 1144.42,123.98 1142.57,123.17 1140.71,122.35 1138.85,121.54 1136.99,120.72 1135.12,119.91 1133.24,119.09 1131.36,118.28 1129.48,117.47 1127.59,116.65 1125.70,115.83 1123.81,115.02 1121.91,114.20 1120.00,113.39 1118.09,112.57 1116.18,111.76 1114.27,110.94 1112.35,110.13 1110.42,109.31 1108.49,108.50 1106.56,107.69 1104.62,106.87 1102.68,106.05 1100.74,105.24 1098.79,104.42 1096.84,103.61 1094.89,102.79 1092.93,101.98 1090.97,101.16 1089.00,100.35 1087.03,99.53 1085.06,98.72 1083.08,97.91 1081.10,97.09 1079.12,96.28 1077.13,95.46 1075.14,94.64 1073.15,93.83 1071.15,93.01 1069.15,92.20 1067.15,91.38 1065.14,90.57 1063.13,89.75 1061.12,88.94 1059.10,88.12 1057.09,87.31 1055.06,86.50 1053.04,85.68 1051.01,84.86 1048.98,84.05 1046.95,83.23 1044.92,82.42 1042.88,81.60 1040.84,80.79 1038.79,79.97 1036.75,79.16 1034.70,78.34 1032.65,77.53 1030.59,76.72 1028.54,75.90 1026.48,75.08 1024.42,74.27 1022.35,73.45 1020.29,72.64 1018.22,71.82 1016.15,71.01 1014.08,70.19 1012.01,69.38 1009.93,68.56 1007.85,67.75 1005.77,66.94 1003.69,66.12 1001.60,65.31 999.52,64.49 997.43,63.68 995.34,62.86 993.25,62.05 991.15,61.23 989.06,60.42 986.96,59.60 984.86,58.78 982.76,57.97 980.66,57.15 978.56,56.34 976.46,55.52 974.35,54.71 972.24,53.89 970.13,53.08 968.02,52.26 965.91,51.45 963.80,50.63 961.69,49.82 959.57,49.00 957.46,48.19 955.34,47.38 953.22,46.56 951.10,45.75 948.99,44.93 946.86,44.12 944.74,43.30 942.62,42.49 940.50,41.67 938.37,40.86 936.25,40.04 934.13,39.23 932.00,38.41 929.87,37.59 927.75,36.78 925.62,35.96 923.49,35.15 921.36,34.33 919.24,33.52 917.11,32.70 914.98,31.89 912.85,31.07 910.72,30.26 908.59,29.44 906.46,28.63 904.33,27.81 902.20,27.00"/><polyline stroke-dashoffset="1.04" points="902.20,613.80 904.12,612.98 906.03,612.17 907.95,611.36 909.87,610.54 911.78,609.72 913.70,608.91 915.62,608.10 917.53,607.28 919.45,606.46 921.36,605.65 923.28,604.84 925.19,604.02 927.11,603.20 929.02,602.39 930.93,601.57 932.85,600.76 934.76,599.94 936.67,599.13 938.58,598.31 940.49,597.50 942.40,596.68 944.31,595.87 946.21,595.05 948.12,594.24 950.03,593.42 951.93,592.61 953.84,591.79 955.74,590.98 957.64,590.16 959.54,589.35 961.44,588.53 963.34,587.72 965.24,586.90 967.14,586.09 969.03,585.27 970.92,584.46 972.82,583.64 974.71,582.83 976.60,582.01 978.49,581.20 980.37,580.38 982.26,579.57 984.14,578.75 986.03,577.94 987.91,577.12 989.79,576.31 991.66,575.49 993.54,574.68 995.41,573.87 997.29,573.05 999.16,572.23 1001.02,571.42 1002.89,570.61 1004.76,569.79 1006.62,568.97 1008.48,568.16 1010.34,567.35 1012.20,566.53 1014.05,565.71 1015.90,564.90 1017.75,564.08 1019.60,563.27 1021.45,562.45 1023.29,561.64 1025.13,560.82 1026.97,560.01 1028.81,559.19 1030.64,558.38 1032.48,557.56 1034.31,556.75 1036.13,555.93 1037.96,555.12 1039.78,554.30 1041.60,553.49 1043.41,552.67 1045.23,551.86 1047.04,551.04 1048.85,550.23 1050.65,549.41 1052.46,548.60 1054.26,547.78 1056.05,546.97 1057.85,546.15 1059.64,545.34 1061.43,544.52 1063.21,543.71 1064.99,542.89 1066.77,542.08 1068.55,541.26 1070.32,540.45 1072.09,539.63 1073.85,538.82 1075.62,538.00 1077.38,537.19 1079.13,536.38 1080.89,535.56 1082.64,534.75 1084.38,533.93 1086.12,533.12 1087.86,532.30 1089.60,531.48 1091.33,530.67 1093.06,529.86 1094.78,529.04 1096.50,528.22 1098.22,527.41 1099.94,526.60 1101.65,525.78 1103.35,524.96 1105.05,524.15 1106.75,523.33 1108.45,522.52 1110.14,521.70 1111.82,520.89 1113.51,520.07 1115.19,519.26 1116.86,518.44 1118.53,517.63 1120.20,516.81 1121.86,516.00 1123.52,515.18 1125.17,514.37 1126.82,513.55 1128.46,512.74 1130.11,511.92 1131.74,511.11 1133.37,510.29 1135.00,509.48 1136.63,508.66 1138.24,507.85 1139.86,507.03 1141.47,506.22 1143.07,505.40 1144.68,504.59 1146.27,503.77 1147.86,502.96 1149.45,502.14 1151.03,501.33 1152.61,500.51 1154.18,499.70 1155.75,498.88 1157.31,498.07 1158.87,497.25 1160.42,496.44 1161.97,495.62 1163.52,494.81 1165.05,494.00 1166.59,493.18 1168.12,492.36 1169.64,491.55 1171.16,490.73 1172.67,489.92 1174.18,489.10 1175.68,488.29 1177.18,487.47 1178.67,486.66 1180.16,485.84 1181.64,485.03 1183.12,484.21 1184.59,483.40 1186.05,482.58 1187.51,481.77 1188.97,480.95 1190.42,480.14 1191.86,479.32 1193.30,478.51 1194.73,477.69 1196.16,476.88 1197.58,476.06 1199.00,475.25 1200.41,474.43 1201.81,473.62 1203.21,472.80 1204.61,471.99 1205.99,471.17 1207.38,470.36 1208.75,469.54 1210.12,468.73 1211.49,467.91 1212.84,467.10 1214.20,466.28 1215.54,465.47 1216.88,464.65 1218.22,463.84 1219.55,463.02 1220.87,462.21 1222.19,461.39 1223.50,460.58 1224.80,459.76 1226.10,458.95 1227.39,458.13 1228.68,457.32 1229.96,456.50 1231.23,455.69 1232.50,454.88 1233.76,454.06 1235.01,453.25 1236.26,452.43 1237.50,451.62 1238.74,450.80 1239.97,449.98 1241.19,449.17 1242.40,448.35 1243.61,447.54 1244.82,446.72 1246.01,445.91 1247.20,445.09 1248.39,444.28 1249.56,443.46 1250.73,442.65 1251.90,441.83 1253.05,441.02 1254.20,440.20 1255.35,439.39 1256.48,438.57 1257.61,437.76 1258.74,436.94 1259.85,436.13 1260.96,435.31 1262.07,434.50 1263.16,433.68 1264.25,432.87 1265.33,432.05 1266.41,431.24 1267.48,430.42 1268.54,429.61 1269.59,428.79 1270.64,427.98 1271.68,427.16 1272.72,426.35 1273.74,425.53 1274.76,424.72 1275.77,423.90 1276.78,423.09 1277.78,422.27 1278.77,421.46 1279.75,420.64 1280.73,419.83 1281.70,419.01 1282.66,418.20 1283.61,417.38 1284.56,416.57 1285.50,415.75 1286.44,414.94 1287.36,414.12 1288.28,413.31 1289.19,412.50 1290.09,411.68 1290.99,410.86 1291.88,410.05 1292.76,409.23 1293.63,408.42 1294.50,407.60 1295.36,406.79 1296.21,405.97 1297.06,405.16 1297.89,404.34 1298.72,403.53 1299.54,402.71 1300.36,401.90 1301.16,401.08 1301.96,400.27 1302.75,399.45 1303.54,398.64 1304.31,397.82 1305.08,397.01 1305.84,396.19 1306.59,395.38 1307.34,394.56 1308.08,393.75 1308.81,392.93 1309.53,392.12 1310.24,391.30 1310.95,390.49 1311.65,389.67 1312.34,388.86 1313.02,388.04 1313.70,387.23 1314.36,386.41 1315.02,385.60 1315.67,384.78 1316.32,383.97 1316.95,383.15 1317.58,382.34 1318.20,381.52 1318.81,380.71 1319.42,379.89 1320.02,379.08 1320.60,378.26 1321.18,377.45 1321.76,376.63 1322.32,375.82 1322.88,375.00 1323.43,374.19 1323.97,373.38 1324.50,372.56 1325.02,371.75 1325.54,370.93 1326.05,370.11 1326.55,369.30 1327.04,368.48 1327.52,367.67 1328.00,366.85 1328.47,366.04 1328.93,365.22 1329.38,364.41 1329.82,363.59 1330.26,362.78 1330.68,361.96 1331.10,361.15 1331.51,360.33 1331.92,359.52 1332.31,358.70 1332.70,357.89 1333.08,357.07 1333.45,356.26 1333.81,355.44 1334.16,354.63 1334.51,353.81 1334.84,353.00 1335.17,352.18 1335.49,351.37 1335.80,350.55 1336.11,349.74 1336.40,348.92 1336.69,348.11 1336.97,347.29 1337.24,346.48 1337.50,345.66 1337.76,344.85 1338.00,344.03 1338.24,343.22 1338.47,342.40 1338.69,341.59 1338.91,340.77 1339.11,339.96 1339.31,339.14 1339.49,338.33 1339.67,337.51 1339.85,336.70 1340.01,335.88 1340.16,335.07 1340.31,334.25 1340.45,333.44 1340.58,332.62 1340.70,331.81 1340.81,331.00 1340.91,330.18 1341.01,329.36 1341.10,328.55 1341.18,327.73 1341.25,326.92 1341.31,326.10 1341.37,325.29 1341.41,324.47 1341.45,323.66 1341.48,322.84 1341.50,322.03 1341.51,321.21 1341.52,320.40 1341.51,319.58 1341.50,318.77 1341.48,317.95 1341.45,317.14 1341.41,316.32 1341.37,315.51 1341.31,314.69 1341.25,313.88 1341.18,313.06 1341.10,312.25 1341.01,311.44 1340.91,310.62 1340.81,309.80 1340.70,308.99 1340.58,308.17 1340.45,307.36 1340.31,306.54 1340.16,305.73 1340.01,304.91 1339.85,304.10 1339.67,303.28 1339.49,302.47 1339.31,301.65 1339.11,300.84 1338.91,300.02 1338.69,299.21 1338.47,298.39 1338.24,297.58 1338.00,296.76 1337.76,295.95 1337.50,295.13 1337.24,294.32 1336.97,293.50 1336.69,292.69 1336.40,291.88 1336.11,291.06 1335.80,290.25 1335.49,289.43 1335.17,288.62 1334.84,287.80 1334.51,286.98 1334.16,286.17 1333.81,285.35 1333.45,284.54 1333.08,283.72 1332.70,282.91 1332.31,282.09 1331.92,281.28 1331.51,280.46 1331.10,279.65 1330.68,278.83 1330.26,278.02 1329.82,277.20 1329.38,276.39 1328.93,275.57 1328.47,274.76 1328.00,273.94 1327.52,273.13 1327.04,272.31 1326.55,271.50 1326.05,270.69 1325.54,269.87 1325.02,269.05 1324.50,268.24 1323.97,267.42 1323.43,266.61 1322.88,265.79 1322.32,264.98 1321.76,264.16 1321.18,263.35 1320.60,262.53 1320.02,261.72 1319.42,260.90 1318.81,260.09 1318.20,259.27 1317.58,258.46 1316.95,257.64 1316.32,256.83 1315.67,256.01 1315.02,255.20 1314.36,254.38 1313.70,253.57 1313.02,252.75 1312.34,251.94 1311.65,251.12 1310.95,250.31 1310.24,249.49 1309.53,248.68 1308.81,247.86 1308.08,247.05 1307.34,246.23 1306.59,245.42 1305.84,244.60 1305.08,243.79 1304.31,242.97 1303.54,242.16 1302.75,241.34 1301.96,240.53 1301.16,239.71 1300.36,238.90 1299.54,238.08 1298.72,237.27 1297.89,236.45 1297.06,235.64 1296.21,234.82 1295.36,234.01 1294.50,233.19 1293.63,232.38 1292.76,231.56 1291.88,230.75 1290.99,229.94 1290.09,229.12 1289.19,228.30 1288.28,227.49 1287.36,226.67 1286.44,225.86 1285.50,225.04 1284.56,224.23 1283.61,223.41 1282.66,222.60 1281.70,221.78 1280.73,220.97 1279.75,220.15 1278.77,219.34 1277.78,218.52 1276.78,217.71 1275.77,216.89 1274.76,216.08 1273.74,215.26 1272.72,214.45 1271.68,213.63 1270.64,212.82 1269.59,212.00 1268.54,211.19 1267.48,210.38 1266.41,209.56 1265.33,208.75 1264.25,207.93 1263.16,207.11 1262.07,206.30 1260.96,205.48 1259.85,204.67 1258.74,203.85 1257.61,203.04 1256.48,202.22 1255.35,201.41 1254.20,200.59 1253.05,199.78 1251.90,198.96 1250.73,198.15 1249.56,197.33 1248.39,196.52 1247.20,195.70 1246.01,194.89 1244.82,194.07 1243.61,193.26 1242.40,192.44 1241.19,191.63 1239.97,190.81 1238.74,190.00 1237.50,189.18 1236.26,188.37 1235.01,187.55 1233.76,186.74 1232.50,185.92 1231.23,185.11 1229.96,184.29 1228.68,183.48 1227.39,182.66 1226.10,181.85 1224.80,181.03 1223.50,180.22 1222.19,179.40 1220.87,178.59 1219.55,177.77 1218.22,176.96 1216.88,176.14 1215.54,175.33 1214.20,174.51 1212.84,173.70 1211.49,172.88 1210.12,172.07 1208.75,171.25 1207.38,170.44 1205.99,169.62 1204.61,168.81 1203.21,167.99 1201.81,167.18 1200.41,166.36 1199.00,165.55 1197.58,164.73 1196.16,163.92 1194.73,163.10 1193.30,162.29 1191.86,161.47 1190.42,160.66 1188.97,159.84 1187.51,159.03 1186.05,158.21 1184.59,157.40 1183.12,156.58 1181.64,155.77 1180.16,154.95 1178.67,154.14 1177.18,153.32 1175.68,152.51 1174.18,151.69 1172.67,150.88 1171.16,150.06 1169.64,149.25 1168.12,148.44 1166.59,147.62 1165.05,146.80 1163.52,145.99 1161.97,145.17 1160.42,144.36 1158.87,143.54 1157.31,142.73 1155.75,141.91 1154.18,141.10 1152.61,140.28 1151.03,139.47 1149.45,138.66 1147.86,137.84 1146.27,137.02 1144.68,136.21 1143.07,135.39 1141.47,134.58 1139.86,133.76 1138.24,132.95 1136.63,132.13 1135.00,131.32 1133.37,130.50 1131.74,129.69 1130.11,128.88 1128.46,128.06 1126.82,127.24 1125.17,126.43 1123.52,125.61 1121.86,124.80 1120.20,123.98 1118.53,123.17 1116.86,122.35 1115.19,121.54 1113.51,120.72 1111.82,119.91 1110.14,119.09 1108.45,118.28 1106.75,117.47 1105.05,116.65 1103.35,115.83 1101.65,115.02 1099.94,114.20 1098.22,113.39 1096.50,112.57 1094.78,111.76 1093.06,110.94 1091.33,110.13 1089.60,109.31 1087.86,108.50 1086.12,107.69 1084.38,106.87 1082.64,106.05 1080.89,105.24 1079.13,104.42 1077.38,103.61 1075.62,102.79 1073.85,101.98 1072.09,101.16 1070.32,100.35 1068.55,99.53 1066.77,98.72 1064.99,97.91 1063.21,97.09 1061.43,96.28 1059.64,95.46 1057.85,94.64 1056.05,93.83 1054.26,93.01 1052.46,92.20 1050.65,91.38 1048.85,90.57 1047.04,89.75 1045.23,88.94 1043.41,88.12 1041.60,87.31 1039.78,86.50 1037.96,85.68 1036.13,84.86 1034.31,84.05 1032.48,83.23 1030.64,82.42 1028.81,81.60 1026.97,80.79 1025.13,79.97 1023.29,79.16 1021.45,78.34 1019.60,77.53 1017.75,76.72 1015.90,75.90 1014.05,75.08 1012.20,74.27 1010.34,73.45 1008.48,72.64 1006.62,71.82 1004.76,71.01 1002.89,70.19 1001.02,69.38 999.16,68.56 997.29,67.75 995.41,66.94 993.54,66.12 991.66,65.31 989.79,64.49 987.91,63.68 986.03,62.86 984.14,62.05 982.26,61.23 980.37,60.42 978.49,59.60 976.60,58.78 974.71,57.97 972.82,57.15 970.92,56.34 969.03,55.52 967.14,54.71 965.24,53.89 963.34,53.08 961.44,52.26 959.54,51.45 957.64,50.63 955.74,49.82 953.84,49.00 951.93,48.19 950.03,47.38 948.12,46.56 946.21,45.75 944.31,44.93 942.40,44.12 940.49,43.30 938.58,42.49 936.67,41.67 934.76,40.86 932.85,40.04 930.93,39.23 929.02,38.41 927.11,37.59 925.19,36.78 923.28,35.96 921.36,35.15 919.45,34.33 917.53,33.52 915.62,32.70 913.70,31.89 911.78,31.07 909.87,30.26 907.95,29.44 906.03,28.63 904.12,27.81 902.20,27.00"/><polyline stroke-dashoffset="1.04" points="902.20,613.80 903.90,612.98 905.61,612.17 907.31,611.36 909.02,610.54 910.72,609.72 912.42,608.91 914.13,608.10 915.83,607.28 917.53,606.46 919.23,605.65 920.94,604.84 922.64,604.02 924.34,603.20 926.04,602.39 927.74,601.57 929.44,600.76 931.14,599.94 932.84,599.13 934.54,598.31 936.23,597.50 937.93,596.68 939.63,595.87 941.32,595.05 943.02,594.24 944.71,593.42 946.41,592.61 948.10,591.79 949.79,590.98 951.48,590.16 953.17,589.35 954.86,588.53 956.55,587.72 958.23,586.90 959.92,586.09 961.60,585.27 963.29,584.46 964.97,583.64 966.65,582.83 968.33,582.01 970.01,581.20 971.69,580.38 973.36,579.57 975.04,578.75 976.71,577.94 978.38,577.12 980.05,576.31 981.72,575.49 983.39,574.68 985.06,573.87 986.72,573.05 988.38,572.23 990.04,571.42 991.70,570.61 993.36,569.79 995.02,568.97 996.67,568.16 998.32,567.35 999.97,566.53 1001.62,565.71 1003.27,564.90 1004.91,564.08 1006.56,563.27 1008.20,562.45 1009.84,561.64 1011.47,560.82 1013.11,560.01 1014.74,559.19 1016.37,558.38 1018.00,557.56 1019.63,556.75 1021.25,555.93 1022.87,555.12 1024.49,554.30 1026.11,553.49 1027.72,552.67 1029.34,551.86 1030.95,551.04 1032.55,550.23 1034.16,549.41 1035.76,548.60 1037.36,547.78 1038.96,546.97 1040.55,546.15 1042.14,545.34 1043.73,544.52 1045.32,543.71 1046.90,542.89 1048.49,542.08 1050.06,541.26 1051.64,540.45 1053.21,539.63 1054.78,538.82 1056.35,538.00 1057.91,537.19 1059.47,536.38 1061.03,535.56 1062.59,534.75 1064.14,533.93 1065.69,533.12 1067.23,532.30 1068.78,531.48 1070.32,530.67 1071.85,529.86 1073.39,529.04 1074.92,528.22 1076.44,527.41 1077.97,526.60 1079.49,525.78 1081.00,524.96 1082.51,524.15 1084.02,523.33 1085.53,522.52 1087.03,521.70 1088.53,520.89 1090.03,520.07 1091.52,519.26 1093.01,518.44 1094.49,517.63 1095.97,516.81 1097.45,516.00 1098.93,515.18 1100.40,514.37 1101.86,513.55 1103.32,512.74 1104.78,511.92 1106.24,511.11 1107.69,510.29 1109.14,509.48 1110.58,508.66 1112.02,507.85 1113.45,507.03 1114.88,506.22 1116.31,505.40 1117.73,504.59 1119.15,503.77 1120.57,502.96 1121.98,502.14 1123.38,501.33 1124.79,500.51 1126.18,499.70 1127.58,498.88 1128.97,498.07 1130.35,497.25 1131.73,496.44 1133.11,495.62 1134.48,494.81 1135.85,494.00 1137.21,493.18 1138.57,492.36 1139.92,491.55 1141.27,490.73 1142.62,489.92 1143.96,489.10 1145.29,488.29 1146.63,487.47 1147.95,486.66 1149.27,485.84 1150.59,485.03 1151.90,484.21 1153.21,483.40 1154.51,482.58 1155.81,481.77 1157.11,480.95 1158.39,480.14 1159.68,479.32 1160.96,478.51 1162.23,477.69 1163.50,476.88 1164.76,476.06 1166.02,475.25 1167.27,474.43 1168.52,473.62 1169.77,472.80 1171.01,471.99 1172.24,471.17 1173.47,470.36 1174.69,469.54 1175.91,468.73 1177.12,467.91 1178.33,467.10 1179.53,466.28 1180.73,465.47 1181.92,464.65 1183.11,463.84 1184.29,463.02 1185.46,462.21 1186.63,461.39 1187.80,460.58 1188.96,459.76 1190.11,458.95 1191.26,458.13 1192.40,457.32 1193.54,456.50 1194.67,455.69 1195.80,454.88 1196.92,454.06 1198.03,453.25 1199.14,452.43 1200.25,451.62 1201.34,450.80 1202.44,449.98 1203.52,449.17 1204.60,448.35 1205.68,447.54 1206.75,446.72 1207.81,445.91 1208.87,445.09 1209.92,444.28 1210.97,443.46 1212.01,442.65 1213.04,441.83 1214.07,441.02 1215.09,440.20 1216.11,439.39 1217.12,438.57 1218.12,437.76 1219.12,436.94 1220.12,436.13 1221.10,435.31 1222.08,434.50 1223.06,433.68 1224.02,432.87 1224.99,432.05 1225.94,431.24 1226.89,430.42 1227.84,429.61 1228.77,428.79 1229.70,427.98 1230.63,427.16 1231.55,426.35 1232.46,425.53 1233.37,424.72 1234.27,423.90 1235.16,423.09 1236.05,422.27 1236.93,421.46 1237.80,420.64 1238.67,419.83 1239.53,419.01 1240.39,418.20 1241.24,417.38 1242.08,416.57 1242.91,415.75 1243.74,414.94 1244.57,414.12 1245.38,413.31 1246.19,412.50 1246.99,411.68 1247.79,410.86 1248.58,410.05 1249.36,409.23 1250.14,408.42 1250.91,407.60 1251.68,406.79 1252.43,405.97 1253.18,405.16 1253.93,404.34 1254.66,403.53 1255.39,402.71 1256.12,401.90 1256.83,401.08 1257.54,400.27 1258.25,399.45 1258.94,398.64 1259.63,397.82 1260.32,397.01 1260.99,396.19 1261.66,395.38 1262.32,394.56 1262.98,393.75 1263.63,392.93 1264.27,392.12 1264.90,391.30 1265.53,390.49 1266.15,389.67 1266.77,388.86 1267.37,388.04 1267.97,387.23 1268.57,386.41 1269.15,385.60 1269.73,384.78 1270.31,383.97 1270.87,383.15 1271.43,382.34 1271.98,381.52 1272.52,380.71 1273.06,379.89 1273.59,379.08 1274.11,378.26 1274.63,377.45 1275.14,376.63 1275.64,375.82 1276.14,375.00 1276.62,374.19 1277.10,373.38 1277.58,372.56 1278.04,371.75 1278.50,370.93 1278.95,370.11 1279.40,369.30 1279.84,368.48 1280.27,367.67 1280.69,366.85 1281.10,366.04 1281.51,365.22 1281.91,364.41 1282.31,363.59 1282.70,362.78 1283.08,361.96 1283.45,361.15 1283.81,360.33 1284.17,359.52 1284.52,358.70 1284.86,357.89 1285.20,357.07 1285.53,356.26 1285.85,355.44 1286.16,354.63 1286.47,353.81 1286.77,353.00 1287.06,352.18 1287.35,351.37 1287.63,350.55 1287.90,349.74 1288.16,348.92 1288.41,348.11 1288.66,347.29 1288.90,346.48 1289.14,345.66 1289.36,344.85 1289.58,344.03 1289.79,343.22 1290.00,342.40 1290.19,341.59 1290.38,340.77 1290.56,339.96 1290.74,339.14 1290.91,338.33 1291.07,337.51 1291.22,336.70 1291.36,335.88 1291.50,335.07 1291.63,334.25 1291.75,333.44 1291.87,332.62 1291.98,331.81 1292.08,331.00 1292.17,330.18 1292.25,329.36 1292.33,328.55 1292.40,327.73 1292.47,326.92 1292.52,326.10 1292.57,325.29 1292.61,324.47 1292.64,323.66 1292.67,322.84 1292.69,322.03 1292.70,321.21 1292.70,320.40 1292.70,319.58 1292.69,318.77 1292.67,317.95 1292.64,317.14 1292.61,316.32 1292.57,315.51 1292.52,314.69 1292.47,313.88 1292.40,313.06 1292.33,312.25 1292.25,311.44 1292.17,310.62 1292.08,309.80 1291.98,308.99 1291.87,308.17 1291.75,307.36 1291.63,306.54 1291.50,305.73 1291.36,304.91 1291.22,304.10 1291.07,303.28 1290.91,302.47 1290.74,301.65 1290.56,300.84 1290.38,300.02 1290.19,299.21 1290.00,298.39 1289.79,297.58 1289.58,296.76 1289.36,295.95 1289.14,295.13 1288.90,294.32 1288.66,293.50 1288.41,292.69 1288.16,291.88 1287.90,291.06 1287.63,290.25 1287.35,289.43 1287.06,288.62 1286.77,287.80 1286.47,286.98 1286.16,286.17 1285.85,285.35 1285.53,284.54 1285.20,283.72 1284.86,282.91 1284.52,282.09 1284.17,281.28 1283.81,280.46 1283.45,279.65 1283.08,278.83 1282.70,278.02 1282.31,277.20 1281.91,276.39 1281.51,275.57 1281.10,274.76 1280.69,273.94 1280.27,273.13 1279.84,272.31 1279.40,271.50 1278.95,270.69 1278.50,269.87 1278.04,269.05 1277.58,268.24 1277.10,267.42 1276.62,266.61 1276.14,265.79 1275.64,264.98 1275.14,264.16 1274.63,263.35 1274.11,262.53 1273.59,261.72 1273.06,260.90 1272.52,260.09 1271.98,259.27 1271.43,258.46 1270.87,257.64 1270.31,256.83 1269.73,256.01 1269.15,255.20 1268.57,254.38 1267.97,253.57 1267.37,252.75 1266.77,251.94 1266.15,251.12 1265.53,250.31 1264.90,249.49 1264.27,248.68 1263.63,247.86 1262.98,247.05 1262.32,246.23 1261.66,245.42 1260.99,244.60 1260.32,243.79 1259.63,242.97 1258.94,242.16 1258.25,241.34 1257.54,240.53 1256.83,239.71 1256.12,238.90 1255.39,238.08 1254.66,237.27 1253.93,236.45 1253.18,235.64 1252.43,234.82 1251.68,234.01 1250.91,233.19 1250.14,232.38 1249.36,231.56 1248.58,230.75 1247.79,229.94 1246.99,229.12 1246.19,228.30 1245.38,227.49 1244.57,226.67 1243.74,225.86 1242.91,225.04 1242.08,224.23 1241.24,223.41 1240.39,222.60 1239.53,221.78 1238.67,220.97 1237.80,220.15 1236.93,219.34 1236.05,218.52 1235.16,217.71 1234.27,216.89 1233.37,216.08 1232.46,215.26 1231.55,214.45 1230.63,213.63 1229.70,212.82 1228.77,212.00 1227.84,211.19 1226.89,210.38 1225.94,209.56 1224.99,208.75 1224.02,207.93 1223.06,207.11 1222.08,206.30 1221.10,205.48 1220.12,204.67 1219.12,203.85 1218.12,203.04 1217.12,202.22 1216.11,201.41 1215.09,200.59 1214.07,199.78 1213.04,198.96 1212.01,198.15 1210.97,197.33 1209.92,196.52 1208.87,195.70 1207.81,194.89 1206.75,194.07 1205.68,193.26 1204.60,192.44 1203.52,191.63 1202.44,190.81 1201.34,190.00 1200.25,189.18 1199.14,188.37 1198.03,187.55 1196.92,186.74 1195.80,185.92 1194.67,185.11 1193.54,184.29 1192.40,183.48 1191.26,182.66 1190.11,181.85 1188.96,181.03 1187.80,180.22 1186.63,179.40 1185.46,178.59 1184.29,177.77 1183.11,176.96 1181.92,176.14 1180.73,175.33 1179.53,174.51 1178.33,173.70 1177.12,172.88 1175.91,172.07 1174.69,171.25 1173.47,170.44 1172.24,169.62 1171.01,168.81 1169.77,167.99 1168.52,167.18 1167.27,166.36 1166.02,165.55 1164.76,164.73 1163.50,163.92 1162.23,163.10 1160.96,162.29 1159.68,161.47 1158.39,160.66 1157.11,159.84 1155.81,159.03 1154.51,158.21 1153.21,157.40 1151.90,156.58 1150.59,155.77 1149.27,154.95 1147.95,154.14 1146.63,153.32 1145.29,152.51 1143.96,151.69 1142.62,150.88 1141.27,150.06 1139.92,149.25 1138.57,148.44 1137.21,147.62 1135.85,146.80 1134.48,145.99 1133.11,145.17 1131.73,144.36 1130.35,143.54 1128.97,142.73 1127.58,141.91 1126.18,141.10 1124.79,140.28 1123.38,139.47 1121.98,138.66 1120.57,137.84 1119.15,137.02 1117.73,136.21 1116.31,135.39 1114.88,134.58 1113.45,133.76 1112.02,132.95 1110.58,132.13 1109.14,131.32 1107.69,130.50 1106.24,129.69 1104.78,128.88 1103.32,128.06 1101.86,127.24 1100.40,126.43 1098.93,125.61 1097.45,124.80 1095.97,123.98 1094.49,123.17 1093.01,122.35 1091.52,121.54 1090.03,120.72 1088.53,119.91 1087.03,119.09 1085.53,118.28 1084.02,117.47 1082.51,116.65 1081.00,115.83 1079.49,115.02 1077.97,114.20 1076.44,113.39 1074.92,112.57 1073.39,111.76 1071.85,110.94 1070.32,110.13 1068.78,109.31 1067.23,108.50 1065.69,107.69 1064.14,106.87 1062.59,106.05 1061.03,105.24 1059.47,104.42 1057.91,103.61 1056.35,102.79 1054.78,101.98 1053.21,101.16 1051.64,100.35 1050.06,99.53 1048.49,98.72 1046.90,97.91 1045.32,97.09 1043.73,96.28 1042.14,95.46 1040.55,94.64 1038.96,93.83 1037.36,93.01 1035.76,92.20 1034.16,91.38 1032.55,90.57 1030.95,89.75 1029.34,88.94 1027.72,88.12 1026.11,87.31 1024.49,86.50 1022.87,85.68 1021.25,84.86 1019.63,84.05 1018.00,83.23 1016.37,82.42 1014.74,81.60 1013.11,80.79 1011.47,79.97 1009.84,79.16 1008.20,78.34 1006.56,77.53 1004.91,76.72 1003.27,75.90 1001.62,75.08 999.97,74.27 998.32,73.45 996.67,72.64 995.02,71.82 993.36,71.01 991.70,70.19 990.04,69.38 988.38,68.56 986.72,67.75 985.06,66.94 983.39,66.12 981.72,65.31 980.05,64.49 978.38,63.68 976.71,62.86 975.04,62.05 973.36,61.23 971.69,60.42 970.01,59.60 968.33,58.78 966.65,57.97 964.97,57.15 963.29,56.34 961.60,55.52 959.92,54.71 958.23,53.89 956.55,53.08 954.86,52.26 953.17,51.45 951.48,50.63 949.79,49.82 948.10,49.00 946.41,48.19 944.71,47.38 943.02,46.56 941.32,45.75 939.63,44.93 937.93,44.12 936.23,43.30 934.54,42.49 932.84,41.67 931.14,40.86 929.44,40.04 927.74,39.23 926.04,38.41 924.34,37.59 922.64,36.78 920.94,35.96 919.23,35.15 917.53,34.33 915.83,33.52 914.13,32.70 912.42,31.89 910.72,31.07 909.02,30.26 907.31,29.44 905.61,28.63 903.90,27.81 902.20,27.00"/><polyline stroke-dashoffset="1.04" points="902.20,613.80 903.69,612.98 905.18,612.17 906.67,611.36 908.16,610.54 909.65,609.72 911.14,608.91 912.63,608.10 914.12,607.28 915.61,606.46 917.10,605.65 918.59,604.84 920.08,604.02 921.57,603.20 923.06,602.39 924.55,601.57 926.04,600.76 927.52,599.94 929.01,599.13 930.49,598.31 931.98,597.50 933.47,596.68 934.95,595.87 936.43,595.05 937.92,594.24 939.40,593.42 940.88,592.61 942.36,591.79 943.84,590.98 945.32,590.16 946.80,589.35 948.28,588.53 949.75,587.72 951.23,586.90 952.71,586.09 954.18,585.27 955.65,584.46 957.12,583.64 958.60,582.83 960.07,582.01 961.53,581.20 963.00,580.38 964.47,579.57 965.93,578.75 967.40,577.94 968.86,577.12 970.32,576.31 971.78,575.49 973.24,574.68 974.70,573.87 976.16,573.05 977.61,572.23 979.06,571.42 980.52,570.61 981.97,569.79 983.42,568.97 984.86,568.16 986.31,567.35 987.75,566.53 989.20,565.71 990.64,564.90 992.08,564.08 993.51,563.27 994.95,562.45 996.38,561.64 997.82,560.82 999.25,560.01 1000.67,559.19 1002.10,558.38 1003.53,557.56 1004.95,556.75 1006.37,555.93 1007.79,555.12 1009.21,554.30 1010.62,553.49 1012.03,552.67 1013.44,551.86 1014.85,551.04 1016.26,550.23 1017.66,549.41 1019.07,548.60 1020.47,547.78 1021.86,546.97 1023.26,546.15 1024.65,545.34 1026.04,544.52 1027.43,543.71 1028.82,542.89 1030.20,542.08 1031.58,541.26 1032.96,540.45 1034.34,539.63 1035.71,538.82 1037.08,538.00 1038.45,537.19 1039.81,536.38 1041.18,535.56 1042.54,534.75 1043.90,533.93 1045.25,533.12 1046.60,532.30 1047.95,531.48 1049.30,530.67 1050.65,529.86 1051.99,529.04 1053.33,528.22 1054.66,527.41 1055.99,526.60 1057.32,525.78 1058.65,524.96 1059.98,524.15 1061.30,523.33 1062.61,522.52 1063.93,521.70 1065.24,520.89 1066.55,520.07 1067.86,519.26 1069.16,518.44 1070.46,517.63 1071.75,516.81 1073.05,516.00 1074.34,515.18 1075.62,514.37 1076.90,513.55 1078.18,512.74 1079.46,511.92 1080.73,511.11 1082.00,510.29 1083.27,509.48 1084.53,508.66 1085.79,507.85 1087.05,507.03 1088.30,506.22 1089.55,505.40 1090.79,504.59 1092.03,503.77 1093.27,502.96 1094.51,502.14 1095.74,501.33 1096.96,500.51 1098.19,499.70 1099.41,498.88 1100.62,498.07 1101.83,497.25 1103.04,496.44 1104.25,495.62 1105.45,494.81 1106.64,494.00 1107.83,493.18 1109.02,492.36 1110.21,491.55 1111.39,490.73 1112.57,489.92 1113.74,489.10 1114.91,488.29 1116.07,487.47 1117.23,486.66 1118.39,485.84 1119.54,485.03 1120.69,484.21 1121.83,483.40 1122.97,482.58 1124.11,481.77 1125.24,480.95 1126.37,480.14 1127.49,479.32 1128.61,478.51 1129.73,477.69 1130.84,476.88 1131.94,476.06 1133.04,475.25 1134.14,474.43 1135.23,473.62 1136.32,472.80 1137.40,471.99 1138.48,471.17 1139.56,470.36 1140.63,469.54 1141.69,468.73 1142.76,467.91 1143.81,467.10 1144.86,466.28 1145.91,465.47 1146.95,464.65 1147.99,463.84 1149.03,463.02 1150.05,462.21 1151.08,461.39 1152.10,460.58 1153.11,459.76 1154.12,458.95 1155.13,458.13 1156.13,457.32 1157.12,456.50 1158.11,455.69 1159.10,454.88 1160.08,454.06 1161.05,453.25 1162.02,452.43 1162.99,451.62 1163.95,450.80 1164.91,449.98 1165.86,449.17 1166.80,448.35 1167.74,447.54 1168.68,446.72 1169.61,445.91 1170.54,445.09 1171.46,444.28 1172.37,443.46 1173.28,442.65 1174.19,441.83 1175.09,441.02 1175.98,440.20 1176.87,439.39 1177.75,438.57 1178.63,437.76 1179.51,436.94 1180.38,436.13 1181.24,435.31 1182.10,434.50 1182.95,433.68 1183.80,432.87 1184.64,432.05 1185.47,431.24 1186.31,430.42 1187.13,429.61 1187.95,428.79 1188.77,427.98 1189.58,427.16 1190.38,426.35 1191.18,425.53 1191.97,424.72 1192.76,423.90 1193.54,423.09 1194.32,422.27 1195.09,421.46 1195.85,420.64 1196.61,419.83 1197.36,419.01 1198.11,418.20 1198.86,417.38 1199.59,416.57 1200.32,415.75 1201.05,414.94 1201.77,414.12 1202.48,413.31 1203.19,412.50 1203.90,411.68 1204.59,410.86 1205.28,410.05 1205.97,409.23 1206.65,408.42 1207.32,407.60 1207.99,406.79 1208.65,405.97 1209.31,405.16 1209.96,404.34 1210.61,403.53 1211.24,402.71 1211.88,401.90 1212.50,401.08 1213.13,400.27 1213.74,399.45 1214.35,398.64 1214.95,397.82 1215.55,397.01 1216.14,396.19 1216.73,395.38 1217.31,394.56 1217.88,393.75 1218.45,392.93 1219.01,392.12 1219.57,391.30 1220.12,390.49 1220.66,389.67 1221.20,388.86 1221.73,388.04 1222.25,387.23 1222.77,386.41 1223.28,385.60 1223.79,384.78 1224.29,383.97 1224.79,383.15 1225.28,382.34 1225.76,381.52 1226.23,380.71 1226.70,379.89 1227.17,379.08 1227.63,378.26 1228.08,377.45 1228.52,376.63 1228.96,375.82 1229.39,375.00 1229.82,374.19 1230.24,373.38 1230.65,372.56 1231.06,371.75 1231.46,370.93 1231.86,370.11 1232.25,369.30 1232.63,368.48 1233.01,367.67 1233.38,366.85 1233.74,366.04 1234.10,365.22 1234.45,364.41 1234.79,363.59 1235.13,362.78 1235.47,361.96 1235.79,361.15 1236.11,360.33 1236.42,359.52 1236.73,358.70 1237.03,357.89 1237.33,357.07 1237.61,356.26 1237.89,355.44 1238.17,354.63 1238.44,353.81 1238.70,353.00 1238.96,352.18 1239.20,351.37 1239.45,350.55 1239.68,349.74 1239.91,348.92 1240.14,348.11 1240.35,347.29 1240.57,346.48 1240.77,345.66 1240.97,344.85 1241.16,344.03 1241.34,343.22 1241.52,342.40 1241.69,341.59 1241.86,340.77 1242.02,339.96 1242.17,339.14 1242.32,338.33 1242.46,337.51 1242.59,336.70 1242.72,335.88 1242.84,335.07 1242.95,334.25 1243.06,333.44 1243.16,332.62 1243.25,331.81 1243.34,331.00 1243.42,330.18 1243.50,329.36 1243.57,328.55 1243.63,327.73 1243.68,326.92 1243.73,326.10 1243.77,325.29 1243.81,324.47 1243.84,323.66 1243.86,322.84 1243.88,322.03 1243.89,321.21 1243.89,320.40 1243.89,319.58 1243.88,318.77 1243.86,317.95 1243.84,317.14 1243.81,316.32 1243.77,315.51 1243.73,314.69 1243.68,313.88 1243.63,313.06 1243.57,312.25 1243.50,311.44 1243.42,310.62 1243.34,309.80 1243.25,308.99 1243.16,308.17 1243.06,307.36 1242.95,306.54 1242.84,305.73 1242.72,304.91 1242.59,304.10 1242.46,303.28 1242.32,302.47 1242.17,301.65 1242.02,300.84 1241.86,300.02 1241.69,299.21 1241.52,298.39 1241.34,297.58 1241.16,296.76 1240.97,295.95 1240.77,295.13 1240.57,294.32 1240.35,293.50 1240.14,292.69 1239.91,291.88 1239.68,291.06 1239.45,290.25 1239.20,289.43 1238.96,288.62 1238.70,287.80 1238.44,286.98 1238.17,286.17 1237.89,285.35 1237.61,284.54 1237.33,283.72 1237.03,282.91 1236.73,282.09 1236.42,281.28 1236.11,280.46 1235.79,279.65 1235.47,278.83 1235.13,278.02 1234.79,277.20 1234.45,276.39 1234.10,275.57 1233.74,274.76 1233.38,273.94 1233.01,273.13 1232.63,272.31 1232.25,271.50 1231.86,270.69 1231.46,269.87 1231.06,269.05 1230.65,268.24 1230.24,267.42 1229.82,266.61 1229.39,265.79 1228.96,264.98 1228.52,264.16 1228.08,263.35 1227.63,262.53 1227.17,261.72 1226.70,260.90 1226.23,260.09 1225.76,259.27 1225.28,258.46 1224.79,257.64 1224.29,256.83 1223.79,256.01 1223.28,255.20 1222.77,254.38 1222.25,253.57 1221.73,252.75 1221.20,251.94 1220.66,251.12 1220.12,250.31 1219.57,249.49 1219.01,248.68 1218.45,247.86 1217.88,247.05 1217.31,246.23 1216.73,245.42 1216.14,244.60 1215.55,243.79 1214.95,242.97 1214.35,242.16 1213.74,241.34 1213.13,240.53 1212.50,239.71 1211.88,238.90 1211.24,238.08 1210.61,237.27 1209.96,236.45 1209.31,235.64 1208.65,234.82 1207.99,234.01 1207.32,233.19 1206.65,232.38 1205.97,231.56 1205.28,230.75 1204.59,229.94 1203.90,229.12 1203.19,228.30 1202.48,227.49 1201.77,226.67 1201.05,225.86 1200.32,225.04 1199.59,224.23 1198.86,223.41 1198.11,222.60 1197.36,221.78 1196.61,220.97 1195.85,220.15 1195.09,219.34 1194.32,218.52 1193.54,217.71 1192.76,216.89 1191.97,216.08 1191.18,215.26 1190.38,214.45 1189.58,213.63 1188.77,212.82 1187.95,212.00 1187.13,211.19 1186.31,210.38 1185.47,209.56 1184.64,208.75 1183.80,207.93 1182.95,207.11 1182.10,206.30 1181.24,205.48 1180.38,204.67 1179.51,203.85 1178.63,203.04 1177.75,202.22 1176.87,201.41 1175.98,200.59 1175.09,199.78 1174.19,198.96 1173.28,198.15 1172.37,197.33 1171.46,196.52 1170.54,195.70 1169.61,194.89 1168.68,194.07 1167.74,193.26 1166.80,192.44 1165.86,191.63 1164.91,190.81 1163.95,190.00 1162.99,189.18 1162.02,188.37 1161.05,187.55 1160.08,186.74 1159.10,185.92 1158.11,185.11 1157.12,184.29 1156.13,183.48 1155.13,182.66 1154.12,181.85 1153.11,181.03 1152.10,180.22 1151.08,179.40 1150.05,178.59 1149.03,177.77 1147.99,176.96 1146.95,176.14 1145.91,175.33 1144.86,174.51 1143.81,173.70 1142.76,172.88 1141.69,172.07 1140.63,171.25 1139.56,170.44 1138.48,169.62 1137.40,168.81 1136.32,167.99 1135.23,167.18 1134.14,166.36 1133.04,165.55 1131.94,164.73 1130.84,163.92 1129.73,163.10 1128.61,162.29 1127.49,161.47 1126.37,160.66 1125.24,159.84 1124.11,159.03 1122.97,158.21 1121.83,157.40 1120.69,156.58 1119.54,155.77 1118.39,154.95 1117.23,154.14 1116.07,153.32 1114.91,152.51 1113.74,151.69 1112.57,150.88 1111.39,150.06 1110.21,149.25 1109.02,148.44 1107.83,147.62 1106.64,146.80 1105.45,145.99 1104.25,145.17 1103.04,144.36 1101.83,143.54 1100.62,142.73 1099.41,141.91 1098.19,141.10 1096.96,140.28 1095.74,139.47 1094.51,138.66 1093.27,137.84 1092.03,137.02 1090.79,136.21 1089.55,135.39 1088.30,134.58 1087.05,133.76 1085.79,132.95 1084.53,132.13 1083.27,131.32 1082.00,130.50 1080.73,129.69 1079.46,128.88 1078.18,128.06 1076.90,127.24 1075.62,126.43 1074.34,125.61 1073.05,124.80 1071.75,123.98 1070.46,123.17 1069.16,122.35 1067.86,121.54 1066.55,120.72 1065.24,119.91 1063.93,119.09 1062.61,118.28 1061.30,117.47 1059.98,116.65 1058.65,115.83 1057.32,115.02 1055.99,114.20 1054.66,113.39 1053.33,112.57 1051.99,111.76 1050.65,110.94 1049.30,110.13 1047.95,109.31 1046.60,108.50 1045.25,107.69 1043.90,106.87 1042.54,106.05 1041.18,105.24 1039.81,104.42 1038.45,103.61 1037.08,102.79 1035.71,101.98 1034.34,101.16 1032.96,100.35 1031.58,99.53 1030.20,98.72 1028.82,97.91 1027.43,97.09 1026.04,96.28 1024.65,95.46 1023.26,94.64 1021.86,93.83 1020.47,93.01 1019.07,92.20 1017.66,91.38 1016.26,90.57 1014.85,89.75 1013.44,88.94 1012.03,88.12 1010.62,87.31 1009.21,86.50 1007.79,85.68 1006.37,84.86 1004.95,84.05 1003.53,83.23 1002.10,82.42 1000.67,81.60 999.25,80.79 997.82,79.97 996.38,79.16 994.95,78.34 993.51,77.53 992.08,76.72 990.64,75.90 989.20,75.08 987.75,74.27 986.31,73.45 984.86,72.64 983.42,71.82 981.97,71.01 980.52,70.19 979.06,69.38 977.61,68.56 976.16,67.75 974.70,66.94 973.24,66.12 971.78,65.31 970.32,64.49 968.86,63.68 967.40,62.86 965.93,62.05 964.47,61.23 963.00,60.42 961.53,59.60 960.07,58.78 958.60,57.97 957.12,57.15 955.65,56.34 954.18,55.52 952.71,54.71 951.23,53.89 949.75,53.08 948.28,52.26 946.80,51.45 945.32,50.63 943.84,49.82 942.36,49.00 940.88,48.19 939.40,47.38 937.92,46.56 936.43,45.75 934.95,44.93 933.47,44.12 931.98,43.30 930.49,42.49 929.01,41.67 927.52,40.86 926.04,40.04 924.55,39.23 923.06,38.41 921.57,37.59 920.08,36.78 918.59,35.96 917.10,35.15 915.61,34.33 914.12,33.52 912.63,32.70 911.14,31.89 909.65,31.07 908.16,30.26 906.67,29.44 905.18,28.63 903.69,27.81 902.20,27.00"/><polyline stroke-dashoffset="1.04" points="902.20,613.80 903.48,612.98 904.76,612.17 906.03,611.36 907.31,610.54 908.59,609.72 909.87,608.91 911.14,608.10 912.42,607.28 913.70,606.46 914.98,605.65 916.25,604.84 917.53,604.02 918.80,603.20 920.08,602.39 921.36,601.57 922.63,600.76 923.90,599.94 925.18,599.13 926.45,598.31 927.73,597.50 929.00,596.68 930.27,595.87 931.54,595.05 932.81,594.24 934.08,593.42 935.35,592.61 936.62,591.79 937.89,590.98 939.16,590.16 940.43,589.35 941.69,588.53 942.96,587.72 944.23,586.90 945.49,586.09 946.75,585.27 948.02,584.46 949.28,583.64 950.54,582.83 951.80,582.01 953.06,581.20 954.32,580.38 955.57,579.57 956.83,578.75 958.08,577.94 959.34,577.12 960.59,576.31 961.84,575.49 963.09,574.68 964.34,573.87 965.59,573.05 966.84,572.23 968.08,571.42 969.33,570.61 970.57,569.79 971.81,568.97 973.05,568.16 974.29,567.35 975.53,566.53 976.77,565.71 978.00,564.90 979.24,564.08 980.47,563.27 981.70,562.45 982.93,561.64 984.16,560.82 985.38,560.01 986.61,559.19 987.83,558.38 989.05,557.56 990.27,556.75 991.49,555.93 992.70,555.12 993.92,554.30 995.13,553.49 996.34,552.67 997.55,551.86 998.76,551.04 999.96,550.23 1001.17,549.41 1002.37,548.60 1003.57,547.78 1004.77,546.97 1005.96,546.15 1007.16,545.34 1008.35,544.52 1009.54,543.71 1010.73,542.89 1011.91,542.08 1013.10,541.26 1014.28,540.45 1015.46,539.63 1016.64,538.82 1017.81,538.00 1018.98,537.19 1020.16,536.38 1021.32,535.56 1022.49,534.75 1023.65,533.93 1024.82,533.12 1025.98,532.30 1027.13,531.48 1028.29,530.67 1029.44,529.86 1030.59,529.04 1031.74,528.22 1032.88,527.41 1034.02,526.60 1035.16,525.78 1036.30,524.96 1037.44,524.15 1038.57,523.33 1039.70,522.52 1040.82,521.70 1041.95,520.89 1043.07,520.07 1044.19,519.26 1045.31,518.44 1046.42,517.63 1047.53,516.81 1048.64,516.00 1049.74,515.18 1050.85,514.37 1051.95,513.55 1053.04,512.74 1054.14,511.92 1055.23,511.11 1056.32,510.29 1057.40,509.48 1058.48,508.66 1059.56,507.85 1060.64,507.03 1061.71,506.22 1062.78,505.40 1063.85,504.59 1064.91,503.77 1065.98,502.96 1067.03,502.14 1068.09,501.33 1069.14,500.51 1070.19,499.70 1071.23,498.88 1072.28,498.07 1073.31,497.25 1074.35,496.44 1075.38,495.62 1076.41,494.81 1077.44,494.00 1078.46,493.18 1079.48,492.36 1080.49,491.55 1081.50,490.73 1082.51,489.92 1083.52,489.10 1084.52,488.29 1085.52,487.47 1086.51,486.66 1087.51,485.84 1088.49,485.03 1089.48,484.21 1090.46,483.40 1091.44,482.58 1092.41,481.77 1093.38,480.95 1094.35,480.14 1095.31,479.32 1096.27,478.51 1097.22,477.69 1098.17,476.88 1099.12,476.06 1100.07,475.25 1101.01,474.43 1101.94,473.62 1102.88,472.80 1103.80,471.99 1104.73,471.17 1105.65,470.36 1106.57,469.54 1107.48,468.73 1108.39,467.91 1109.30,467.10 1110.20,466.28 1111.10,465.47 1111.99,464.65 1112.88,463.84 1113.76,463.02 1114.65,462.21 1115.52,461.39 1116.40,460.58 1117.27,459.76 1118.13,458.95 1118.99,458.13 1119.85,457.32 1120.70,456.50 1121.55,455.69 1122.40,454.88 1123.24,454.06 1124.07,453.25 1124.91,452.43 1125.73,451.62 1126.56,450.80 1127.38,449.98 1128.19,449.17 1129.00,448.35 1129.81,447.54 1130.61,446.72 1131.41,445.91 1132.20,445.09 1132.99,444.28 1133.78,443.46 1134.56,442.65 1135.33,441.83 1136.10,441.02 1136.87,440.20 1137.63,439.39 1138.39,438.57 1139.14,437.76 1139.89,436.94 1140.64,436.13 1141.38,435.31 1142.11,434.50 1142.84,433.68 1143.57,432.87 1144.29,432.05 1145.01,431.24 1145.72,430.42 1146.43,429.61 1147.13,428.79 1147.83,427.98 1148.52,427.16 1149.21,426.35 1149.90,425.53 1150.57,424.72 1151.25,423.90 1151.92,423.09 1152.58,422.27 1153.25,421.46 1153.90,420.64 1154.55,419.83 1155.20,419.01 1155.84,418.20 1156.48,417.38 1157.11,416.57 1157.73,415.75 1158.36,414.94 1158.97,414.12 1159.59,413.31 1160.19,412.50 1160.80,411.68 1161.39,410.86 1161.99,410.05 1162.57,409.23 1163.16,408.42 1163.73,407.60 1164.31,406.79 1164.87,405.97 1165.44,405.16 1165.99,404.34 1166.55,403.53 1167.10,402.71 1167.64,401.90 1168.18,401.08 1168.71,400.27 1169.24,399.45 1169.76,398.64 1170.27,397.82 1170.79,397.01 1171.29,396.19 1171.80,395.38 1172.29,394.56 1172.78,393.75 1173.27,392.93 1173.75,392.12 1174.23,391.30 1174.70,390.49 1175.16,389.67 1175.63,388.86 1176.08,388.04 1176.53,387.23 1176.98,386.41 1177.42,385.60 1177.85,384.78 1178.28,383.97 1178.70,383.15 1179.12,382.34 1179.54,381.52 1179.94,380.71 1180.35,379.89 1180.74,379.08 1181.14,378.26 1181.52,377.45 1181.90,376.63 1182.28,375.82 1182.65,375.00 1183.02,374.19 1183.38,373.38 1183.73,372.56 1184.08,371.75 1184.43,370.93 1184.76,370.11 1185.10,369.30 1185.43,368.48 1185.75,367.67 1186.07,366.85 1186.38,366.04 1186.68,365.22 1186.99,364.41 1187.28,363.59 1187.57,362.78 1187.86,361.96 1188.14,361.15 1188.41,360.33 1188.68,359.52 1188.94,358.70 1189.20,357.89 1189.45,357.07 1189.70,356.26 1189.94,355.44 1190.17,354.63 1190.40,353.81 1190.63,353.00 1190.85,352.18 1191.06,351.37 1191.27,350.55 1191.47,349.74 1191.67,348.92 1191.86,348.11 1192.05,347.29 1192.23,346.48 1192.40,345.66 1192.57,344.85 1192.74,344.03 1192.89,343.22 1193.05,342.40 1193.20,341.59 1193.34,340.77 1193.47,339.96 1193.60,339.14 1193.73,338.33 1193.85,337.51 1193.96,336.70 1194.07,335.88 1194.18,335.07 1194.27,334.25 1194.36,333.44 1194.45,332.62 1194.53,331.81 1194.61,331.00 1194.68,330.18 1194.74,329.36 1194.80,328.55 1194.85,327.73 1194.90,326.92 1194.94,326.10 1194.98,325.29 1195.01,324.47 1195.03,323.66 1195.05,322.84 1195.07,322.03 1195.08,321.21 1195.08,320.40 1195.08,319.58 1195.07,318.77 1195.05,317.95 1195.03,317.14 1195.01,316.32 1194.98,315.51 1194.94,314.69 1194.90,313.88 1194.85,313.06 1194.80,312.25 1194.74,311.44 1194.68,310.62 1194.61,309.80 1194.53,308.99 1194.45,308.17 1194.36,307.36 1194.27,306.54 1194.18,305.73 1194.07,304.91 1193.96,304.10 1193.85,303.28 1193.73,302.47 1193.60,301.65 1193.47,300.84 1193.34,300.02 1193.20,299.21 1193.05,298.39 1192.89,297.58 1192.74,296.76 1192.57,295.95 1192.40,295.13 1192.23,294.32 1192.05,293.50 1191.86,292.69 1191.67,291.88 1191.47,291.06 1191.27,290.25 1191.06,289.43 1190.85,288.62 1190.63,287.80 1190.40,286.98 1190.17,286.17 1189.94,285.35 1189.70,284.54 1189.45,283.72 1189.20,282.91 1188.94,282.09 1188.68,281.28 1188.41,280.46 1188.14,279.65 1187.86,278.83 1187.57,278.02 1187.28,277.20 1186.99,276.39 1186.68,275.57 1186.38,274.76 1186.07,273.94 1185.75,273.13 1185.43,272.31 1185.10,271.50 1184.76,270.69 1184.43,269.87 1184.08,269.05 1183.73,268.24 1183.38,267.42 1183.02,266.61 1182.65,265.79 1182.28,264.98 1181.90,264.16 1181.52,263.35 1181.14,262.53 1180.74,261.72 1180.35,260.90 1179.94,260.09 1179.54,259.27 1179.12,258.46 1178.70,257.64 1178.28,256.83 1177.85,256.01 1177.42,255.20 1176.98,254.38 1176.53,253.57 1176.08,252.75 1175.63,251.94 1175.16,251.12 1174.70,250.31 1174.23,249.49 1173.75,248.68 1173.27,247.86 1172.78,247.05 1172.29,246.23 1171.80,245.42 1171.29,244.60 1170.79,243.79 1170.27,242.97 1169.76,242.16 1169.24,241.34 1168.71,240.53 1168.18,239.71 1167.64,238.90 1167.10,238.08 1166.55,237.27 1165.99,236.45 1165.44,235.64 1164.87,234.82 1164.31,234.01 1163.73,233.19 1163.16,232.38 1162.57,231.56 1161.99,230.75 1161.39,229.94 1160.80,229.12 1160.19,228.30 1159.59,227.49 1158.97,226.67 1158.36,225.86 1157.73,225.04 1157.11,224.23 1156.48,223.41 1155.84,222.60 1155.20,221.78 1154.55,220.97 1153.90,220.15 1153.25,219.34 1152.58,218.52 1151.92,217.71 1151.25,216.89 1150.57,216.08 1149.90,215.26 1149.21,214.45 1148.52,213.63 1147.83,212.82 1147.13,212.00 1146.43,211.19 1145.72,210.38 1145.01,209.56 1144.29,208.75 1143.57,207.93 1142.84,207.11 1142.11,206.30 1141.38,205.48 1140.64,204.67 1139.89,203.85 1139.14,203.04 1138.39,202.22 1137.63,201.41 1136.87,200.59 1136.10,199.78 1135.33,198.96 1134.56,198.15 1133.78,197.33 1132.99,196.52 1132.20,195.70 1131.41,194.89 1130.61,194.07 1129.81,193.26 1129.00,192.44 1128.19,191.63 1127.38,190.81 1126.56,190.00 1125.73,189.18 1124.91,188.37 1124.07,187.55 1123.24,186.74 1122.40,185.92 1121.55,185.11 1120.70,184.29 1119.85,183.48 1118.99,182.66 1118.13,181.85 1117.27,181.03 1116.40,180.22 1115.52,179.40 1114.65,178.59 1113.76,177.77 1112.88,176.96 1111.99,176.14 1111.10,175.33 1110.20,174.51 1109.30,173.70 1108.39,172.88 1107.48,172.07 1106.57,171.25 1105.65,170.44 1104.73,169.62 1103.80,168.81 1102.88,167.99 1101.94,167.18 1101.01,166.36 1100.07,165.55 1099.12,164.73 1098.17,163.92 1097.22,163.10 1096.27,162.29 1095.31,161.47 1094.35,160.66 1093.38,159.84 1092.41,159.03 1091.44,158.21 1090.46,157.40 1089.48,156.58 1088.49,155.77 1087.51,154.95 1086.51,154.14 1085.52,153.32 1084.52,152.51 1083.52,151.69 1082.51,150.88 1081.50,150.06 1080.49,149.25 1079.48,148.44 1078.46,147.62 1077.44,146.80 1076.41,145.99 1075.38,145.17 1074.35,144.36 1073.31,143.54 1072.28,142.73 1071.23,141.91 1070.19,141.10 1069.14,140.28 1068.09,139.47 1067.03,138.66 1065.98,137.84 1064.91,137.02 1063.85,136.21 1062.78,135.39 1061.71,134.58 1060.64,133.76 1059.56,132.95 1058.48,132.13 1057.40,131.32 1056.32,130.50 1055.23,129.69 1054.14,128.88 1053.04,128.06 1051.95,127.24 1050.85,126.43 1049.74,125.61 1048.64,124.80 1047.53,123.98 1046.42,123.17 1045.31,122.35 1044.19,121.54 1043.07,120.72 1041.95,119.91 1040.82,119.09 1039.70,118.28 1038.57,117.47 1037.44,116.65 1036.30,115.83 1035.16,115.02 1034.02,114.20 1032.88,113.39 1031.74,112.57 1030.59,111.76 1029.44,110.94 1028.29,110.13 1027.13,109.31 1025.98,108.50 1024.82,107.69 1023.65,106.87 1022.49,106.05 1021.32,105.24 1020.16,104.42 1018.98,103.61 1017.81,102.79 1016.64,101.98 1015.46,101.16 1014.28,100.35 1013.10,99.53 1011.91,98.72 1010.73,97.91 1009.54,97.09 1008.35,96.28 1007.16,95.46 1005.96,94.64 1004.77,93.83 1003.57,93.01 1002.37,92.20 1001.17,91.38 999.96,90.57 998.76,89.75 997.55,88.94 996.34,88.12 995.13,87.31 993.92,86.50 992.70,85.68 991.49,84.86 990.27,84.05 989.05,83.23 987.83,82.42 986.61,81.60 985.38,80.79 984.16,79.97 982.93,79.16 981.70,78.34 980.47,77.53 979.24,76.72 978.00,75.90 976.77,75.08 975.53,74.27 974.29,73.45 973.05,72.64 971.81,71.82 970.57,71.01 969.33,70.19 968.08,69.38 966.84,68.56 965.59,67.75 964.34,66.94 963.09,66.12 961.84,65.31 960.59,64.49 959.34,63.68 958.08,62.86 956.83,62.05 955.57,61.23 954.32,60.42 953.06,59.60 951.80,58.78 950.54,57.97 949.28,57.15 948.02,56.34 946.75,55.52 945.49,54.71 944.23,53.89 942.96,53.08 941.69,52.26 940.43,51.45 939.16,50.63 937.89,49.82 936.62,49.00 935.35,48.19 934.08,47.38 932.81,46.56 931.54,45.75 930.27,44.93 929.00,44.12 927.73,43.30 926.45,42.49 925.18,41.67 923.90,40.86 922.63,40.04 921.36,39.23 920.08,38.41 918.80,37.59 917.53,36.78 916.25,35.96 914.98,35.15 913.70,34.33 912.42,33.52 911.14,32.70 909.87,31.89 908.59,31.07 907.31,30.26 906.03,29.44 904.76,28.63 903.48,27.81 902.20,27.00"/><polyline stroke-dashoffset="1.04" points="902.20,613.80 903.26,612.98 904.33,612.17 905.39,611.36 906.46,610.54 907.52,609.72 908.59,608.91 909.65,608.10 910.72,607.28 911.78,606.46 912.85,605.65 913.91,604.84 914.97,604.02 916.04,603.20 917.10,602.39 918.16,601.57 919.23,600.76 920.29,599.94 921.35,599.13 922.41,598.31 923.47,597.50 924.53,596.68 925.59,595.87 926.65,595.05 927.71,594.24 928.77,593.42 929.83,592.61 930.89,591.79 931.94,590.98 933.00,590.16 934.06,589.35 935.11,588.53 936.17,587.72 937.22,586.90 938.28,586.09 939.33,585.27 940.38,584.46 941.43,583.64 942.48,582.83 943.53,582.01 944.58,581.20 945.63,580.38 946.68,579.57 947.72,578.75 948.77,577.94 949.81,577.12 950.86,576.31 951.90,575.49 952.94,574.68 953.99,573.87 955.03,573.05 956.06,572.23 957.10,571.42 958.14,570.61 959.18,569.79 960.21,568.97 961.24,568.16 962.28,567.35 963.31,566.53 964.34,565.71 965.37,564.90 966.40,564.08 967.42,563.27 968.45,562.45 969.47,561.64 970.50,560.82 971.52,560.01 972.54,559.19 973.56,558.38 974.58,557.56 975.59,556.75 976.61,555.93 977.62,555.12 978.63,554.30 979.64,553.49 980.65,552.67 981.66,551.86 982.67,551.04 983.67,550.23 984.67,549.41 985.68,548.60 986.68,547.78 987.67,546.97 988.67,546.15 989.67,545.34 990.66,544.52 991.65,543.71 992.64,542.89 993.63,542.08 994.61,541.26 995.60,540.45 996.58,539.63 997.56,538.82 998.54,538.00 999.52,537.19 1000.50,536.38 1001.47,535.56 1002.44,534.75 1003.41,533.93 1004.38,533.12 1005.35,532.30 1006.31,531.48 1007.27,530.67 1008.23,529.86 1009.19,529.04 1010.15,528.22 1011.10,527.41 1012.05,526.60 1013.00,525.78 1013.95,524.96 1014.90,524.15 1015.84,523.33 1016.78,522.52 1017.72,521.70 1018.66,520.89 1019.59,520.07 1020.53,519.26 1021.46,518.44 1022.38,517.63 1023.31,516.81 1024.23,516.00 1025.15,515.18 1026.07,514.37 1026.99,513.55 1027.90,512.74 1028.81,511.92 1029.72,511.11 1030.63,510.29 1031.53,509.48 1032.44,508.66 1033.34,507.85 1034.23,507.03 1035.13,506.22 1036.02,505.40 1036.91,504.59 1037.80,503.77 1038.68,502.96 1039.56,502.14 1040.44,501.33 1041.32,500.51 1042.19,499.70 1043.06,498.88 1043.93,498.07 1044.79,497.25 1045.66,496.44 1046.52,495.62 1047.38,494.81 1048.23,494.00 1049.08,493.18 1049.93,492.36 1050.78,491.55 1051.62,490.73 1052.46,489.92 1053.30,489.10 1054.13,488.29 1054.97,487.47 1055.80,486.66 1056.62,485.84 1057.44,485.03 1058.26,484.21 1059.08,483.40 1059.90,482.58 1060.71,481.77 1061.52,480.95 1062.32,480.14 1063.12,479.32 1063.92,478.51 1064.72,477.69 1065.51,476.88 1066.30,476.06 1067.09,475.25 1067.87,474.43 1068.65,473.62 1069.43,472.80 1070.20,471.99 1070.97,471.17 1071.74,470.36 1072.51,469.54 1073.27,468.73 1074.03,467.91 1074.78,467.10 1075.53,466.28 1076.28,465.47 1077.02,464.65 1077.77,463.84 1078.50,463.02 1079.24,462.21 1079.97,461.39 1080.70,460.58 1081.42,459.76 1082.14,458.95 1082.86,458.13 1083.58,457.32 1084.29,456.50 1084.99,455.69 1085.70,454.88 1086.40,454.06 1087.10,453.25 1087.79,452.43 1088.48,451.62 1089.16,450.80 1089.85,449.98 1090.53,449.17 1091.20,448.35 1091.87,447.54 1092.54,446.72 1093.21,445.91 1093.87,445.09 1094.53,444.28 1095.18,443.46 1095.83,442.65 1096.48,441.83 1097.12,441.02 1097.76,440.20 1098.39,439.39 1099.02,438.57 1099.65,437.76 1100.28,436.94 1100.90,436.13 1101.51,435.31 1102.13,434.50 1102.74,433.68 1103.34,432.87 1103.94,432.05 1104.54,431.24 1105.13,430.42 1105.72,429.61 1106.31,428.79 1106.89,427.98 1107.47,427.16 1108.04,426.35 1108.61,425.53 1109.18,424.72 1109.74,423.90 1110.30,423.09 1110.85,422.27 1111.40,421.46 1111.95,420.64 1112.49,419.83 1113.03,419.01 1113.57,418.20 1114.10,417.38 1114.62,416.57 1115.15,415.75 1115.66,414.94 1116.18,414.12 1116.69,413.31 1117.19,412.50 1117.70,411.68 1118.19,410.86 1118.69,410.05 1119.18,409.23 1119.66,408.42 1120.14,407.60 1120.62,406.79 1121.10,405.97 1121.56,405.16 1122.03,404.34 1122.49,403.53 1122.95,402.71 1123.40,401.90 1123.85,401.08 1124.29,400.27 1124.73,399.45 1125.16,398.64 1125.60,397.82 1126.02,397.01 1126.44,396.19 1126.86,395.38 1127.28,394.56 1127.69,393.75 1128.09,392.93 1128.49,392.12 1128.89,391.30 1129.28,390.49 1129.67,389.67 1130.05,388.86 1130.43,388.04 1130.81,387.23 1131.18,386.41 1131.55,385.60 1131.91,384.78 1132.27,383.97 1132.62,383.15 1132.97,382.34 1133.31,381.52 1133.65,380.71 1133.99,379.89 1134.32,379.08 1134.65,378.26 1134.97,377.45 1135.29,376.63 1135.60,375.82 1135.91,375.00 1136.21,374.19 1136.51,373.38 1136.81,372.56 1137.10,371.75 1137.39,370.93 1137.67,370.11 1137.95,369.30 1138.22,368.48 1138.49,367.67 1138.76,366.85 1139.02,366.04 1139.27,365.22 1139.52,364.41 1139.77,363.59 1140.01,362.78 1140.25,361.96 1140.48,361.15 1140.71,360.33 1140.93,359.52 1141.15,358.70 1141.37,357.89 1141.58,357.07 1141.78,356.26 1141.98,355.44 1142.18,354.63 1142.37,353.81 1142.56,353.00 1142.74,352.18 1142.92,351.37 1143.09,350.55 1143.26,349.74 1143.42,348.92 1143.58,348.11 1143.74,347.29 1143.89,346.48 1144.04,345.66 1144.18,344.85 1144.31,344.03 1144.45,343.22 1144.57,342.40 1144.70,341.59 1144.81,340.77 1144.93,339.96 1145.04,339.14 1145.14,338.33 1145.24,337.51 1145.34,336.70 1145.43,335.88 1145.51,335.07 1145.59,334.25 1145.67,333.44 1145.74,332.62 1145.81,331.81 1145.87,331.00 1145.93,330.18 1145.98,329.36 1146.03,328.55 1146.08,327.73 1146.12,326.92 1146.15,326.10 1146.18,325.29 1146.21,324.47 1146.23,323.66 1146.24,322.84 1146.26,322.03 1146.26,321.21 1146.27,320.40 1146.26,319.58 1146.26,318.77 1146.24,317.95 1146.23,317.14 1146.21,316.32 1146.18,315.51 1146.15,314.69 1146.12,313.88 1146.08,313.06 1146.03,312.25 1145.98,311.44 1145.93,310.62 1145.87,309.80 1145.81,308.99 1145.74,308.17 1145.67,307.36 1145.59,306.54 1145.51,305.73 1145.43,304.91 1145.34,304.10 1145.24,303.28 1145.14,302.47 1145.04,301.65 1144.93,300.84 1144.81,300.02 1144.70,299.21 1144.57,298.39 1144.45,297.58 1144.31,296.76 1144.18,295.95 1144.04,295.13 1143.89,294.32 1143.74,293.50 1143.58,292.69 1143.42,291.88 1143.26,291.06 1143.09,290.25 1142.92,289.43 1142.74,288.62 1142.56,287.80 1142.37,286.98 1142.18,286.17 1141.98,285.35 1141.78,284.54 1141.58,283.72 1141.37,282.91 1141.15,282.09 1140.93,281.28 1140.71,280.46 1140.48,279.65 1140.25,278.83 1140.01,278.02 1139.77,277.20 1139.52,276.39 1139.27,275.57 1139.02,274.76 1138.76,273.94 1138.49,273.13 1138.22,272.31 1137.95,271.50 1137.67,270.69 1137.39,269.87 1137.10,269.05 1136.81,268.24 1136.51,267.42 1136.21,266.61 1135.91,265.79 1135.60,264.98 1135.29,264.16 1134.97,263.35 1134.65,262.53 1134.32,261.72 1133.99,260.90 1133.65,260.09 1133.31,259.27 1132.97,258.46 1132.62,257.64 1132.27,256.83 1131.91,256.01 1131.55,255.20 1131.18,254.38 1130.81,253.57 1130.43,252.75 1130.05,251.94 1129.67,251.12 1129.28,250.31 1128.89,249.49 1128.49,248.68 1128.09,247.86 1127.69,247.05 1127.28,246.23 1126.86,245.42 1126.44,244.60 1126.02,243.79 1125.60,242.97 1125.16,242.16 1124.73,241.34 1124.29,240.53 1123.85,239.71 1123.40,238.90 1122.95,238.08 1122.49,237.27 1122.03,236.45 1121.56,235.64 1121.10,234.82 1120.62,234.01 1120.14,233.19 1119.66,232.38 1119.18,231.56 1118.69,230.75 1118.19,229.94 1117.70,229.12 1117.19,228.30 1116.69,227.49 1116.18,226.67 1115.66,225.86 1115.15,225.04 1114.62,224.23 1114.10,223.41 1113.57,222.60 1113.03,221.78 1112.49,220.97 1111.95,220.15 1111.40,219.34 1110.85,218.52 1110.30,217.71 1109.74,216.89 1109.18,216.08 1108.61,215.26 1108.04,214.45 1107.47,213.63 1106.89,212.82 1106.31,212.00 1105.72,211.19 1105.13,210.38 1104.54,209.56 1103.94,208.75 1103.34,207.93 1102.74,207.11 1102.13,206.30 1101.51,205.48 1100.90,204.67 1100.28,203.85 1099.65,203.04 1099.02,202.22 1098.39,201.41 1097.76,200.59 1097.12,199.78 1096.48,198.96 1095.83,198.15 1095.18,197.33 1094.53,196.52 1093.87,195.70 1093.21,194.89 1092.54,194.07 1091.87,193.26 1091.20,192.44 1090.53,191.63 1089.85,190.81 1089.16,190.00 1088.48,189.18 1087.79,188.37 1087.10,187.55 1086.40,186.74 1085.70,185.92 1084.99,185.11 1084.29,184.29 1083.58,183.48 1082.86,182.66 1082.14,181.85 1081.42,181.03 1080.70,180.22 1079.97,179.40 1079.24,178.59 1078.50,177.77 1077.77,176.96 1077.02,176.14 1076.28,175.33 1075.53,174.51 1074.78,173.70 1074.03,172.88 1073.27,172.07 1072.51,171.25 1071.74,170.44 1070.97,169.62 1070.20,168.81 1069.43,167.99 1068.65,167.18 1067.87,166.36 1067.09,165.55 1066.30,164.73 1065.51,163.92 1064.72,163.10 1063.92,162.29 1063.12,161.47 1062.32,160.66 1061.52,159.84 1060.71,159.03 1059.90,158.21 1059.08,157.40 1058.26,156.58 1057.44,155.77 1056.62,154.95 1055.80,154.14 1054.97,153.32 1054.13,152.51 1053.30,151.69 1052.46,150.88 1051.62,150.06 1050.78,149.25 1049.93,148.44 1049.08,147.62 1048.23,146.80 1047.38,145.99 1046.52,145.17 1045.66,144.36 1044.79,143.54 1043.93,142.73 1043.06,141.91 1042.19,141.10 1041.32,140.28 1040.44,139.47 1039.56,138.66 1038.68,137.84 1037.80,137.02 1036.91,136.21 1036.02,135.39 1035.13,134.58 1034.23,133.76 1033.34,132.95 1032.44,132.13 1031.53,131.32 1030.63,130.50 1029.72,129.69 1028.81,128.88 1027.90,128.06 1026.99,127.24 1026.07,126.43 1025.15,125.61 1024.23,124.80 1023.31,123.98 1022.38,123.17 1021.46,122.35 1020.53,121.54 1019.59,120.72 1018.66,119.91 1017.72,119.09 1016.78,118.28 1015.84,117.47 1014.90,116.65 1013.95,115.83 1013.00,115.02 1012.05,114.20 1011.10,113.39 1010.15,112.57 1009.19,111.76 1008.23,110.94 1007.27,110.13 1006.31,109.31 1005.35,108.50 1004.38,107.69 1003.41,106.87 1002.44,106.05 1001.47,105.24 1000.50,104.42 999.52,103.61 998.54,102.79 997.56,101.98 996.58,101.16 995.60,100.35 994.61,99.53 993.63,98.72 992.64,97.91 991.65,97.09 990.66,96.28 989.67,95.46 988.67,94.64 987.67,93.83 986.68,93.01 985.68,92.20 984.67,91.38 983.67,90.57 982.67,89.75 981.66,88.94 980.65,88.12 979.64,87.31 978.63,86.50 977.62,85.68 976.61,84.86 975.59,84.05 974.58,83.23 973.56,82.42 972.54,81.60 971.52,80.79 970.50,79.97 969.47,79.16 968.45,78.34 967.42,77.53 966.40,76.72 965.37,75.90 964.34,75.08 963.31,74.27 962.28,73.45 961.24,72.64 960.21,71.82 959.18,71.01 958.14,70.19 957.10,69.38 956.06,68.56 955.03,67.75 953.99,66.94 952.94,66.12 951.90,65.31 950.86,64.49 949.81,63.68 948.77,62.86 947.72,62.05 946.68,61.23 945.63,60.42 944.58,59.60 943.53,58.78 942.48,57.97 941.43,57.15 940.38,56.34 939.33,55.52 938.28,54.71 937.22,53.89 936.17,53.08 935.11,52.26 934.06,51.45 933.00,50.63 931.94,49.82 930.89,49.00 929.83,48.19 928.77,47.38 927.71,46.56 926.65,45.75 925.59,44.93 924.53,44.12 923.47,43.30 922.41,42.49 921.35,41.67 920.29,40.86 919.23,40.04 918.16,39.23 917.10,38.41 916.04,37.59 914.97,36.78 913.91,35.96 912.85,35.15 911.78,34.33 910.72,33.52 909.65,32.70 908.59,31.89 907.52,31.07 906.46,30.26 905.39,29.44 904.33,28.63 903.26,27.81 902.20,27.00"/><polyline stroke-dashoffset="1.04" points="902.20,613.80 903.05,612.98 903.90,612.17 904.76,611.36 905.61,610.54 906.46,609.72 907.31,608.91 908.16,608.10 909.01,607.28 909.87,606.46 910.72,605.65 911.57,604.84 912.42,604.02 913.27,603.20 914.12,602.39 914.97,601.57 915.82,600.76 916.67,599.94 917.52,599.13 918.37,598.31 919.22,597.50 920.07,596.68 920.91,595.87 921.76,595.05 922.61,594.24 923.46,593.42 924.30,592.61 925.15,591.79 926.00,590.98 926.84,590.16 927.69,589.35 928.53,588.53 929.37,587.72 930.22,586.90 931.06,586.09 931.90,585.27 932.74,584.46 933.59,583.64 934.43,582.83 935.27,582.01 936.11,581.20 936.94,580.38 937.78,579.57 938.62,578.75 939.46,577.94 940.29,577.12 941.13,576.31 941.96,575.49 942.80,574.68 943.63,573.87 944.46,573.05 945.29,572.23 946.12,571.42 946.95,570.61 947.78,569.79 948.61,568.97 949.44,568.16 950.26,567.35 951.09,566.53 951.91,565.71 952.73,564.90 953.56,564.08 954.38,563.27 955.20,562.45 956.02,561.64 956.84,560.82 957.65,560.01 958.47,559.19 959.29,558.38 960.10,557.56 960.91,556.75 961.73,555.93 962.54,555.12 963.35,554.30 964.15,553.49 964.96,552.67 965.77,551.86 966.57,551.04 967.38,550.23 968.18,549.41 968.98,548.60 969.78,547.78 970.58,546.97 971.38,546.15 972.17,545.34 972.97,544.52 973.76,543.71 974.55,542.89 975.34,542.08 976.13,541.26 976.92,540.45 977.71,539.63 978.49,538.82 979.27,538.00 980.06,537.19 980.84,536.38 981.62,535.56 982.39,534.75 983.17,533.93 983.94,533.12 984.72,532.30 985.49,531.48 986.26,530.67 987.03,529.86 987.79,529.04 988.56,528.22 989.32,527.41 990.08,526.60 990.84,525.78 991.60,524.96 992.36,524.15 993.11,523.33 993.87,522.52 994.62,521.70 995.37,520.89 996.11,520.07 996.86,519.26 997.60,518.44 998.35,517.63 999.09,516.81 999.83,516.00 1000.56,515.18 1001.30,514.37 1002.03,513.55 1002.76,512.74 1003.49,511.92 1004.22,511.11 1004.94,510.29 1005.67,509.48 1006.39,508.66 1007.11,507.85 1007.83,507.03 1008.54,506.22 1009.26,505.40 1009.97,504.59 1010.68,503.77 1011.38,502.96 1012.09,502.14 1012.79,501.33 1013.49,500.51 1014.19,499.70 1014.89,498.88 1015.58,498.07 1016.28,497.25 1016.97,496.44 1017.65,495.62 1018.34,494.81 1019.02,494.00 1019.71,493.18 1020.38,492.36 1021.06,491.55 1021.74,490.73 1022.41,489.92 1023.08,489.10 1023.75,488.29 1024.41,487.47 1025.08,486.66 1025.74,485.84 1026.40,485.03 1027.05,484.21 1027.71,483.40 1028.36,482.58 1029.01,481.77 1029.65,480.95 1030.30,480.14 1030.94,479.32 1031.58,478.51 1032.21,477.69 1032.85,476.88 1033.48,476.06 1034.11,475.25 1034.74,474.43 1035.36,473.62 1035.98,472.80 1036.60,471.99 1037.22,471.17 1037.83,470.36 1038.44,469.54 1039.05,468.73 1039.66,467.91 1040.26,467.10 1040.87,466.28 1041.46,465.47 1042.06,464.65 1042.65,463.84 1043.24,463.02 1043.83,462.21 1044.42,461.39 1045.00,460.58 1045.58,459.76 1046.15,458.95 1046.73,458.13 1047.30,457.32 1047.87,456.50 1048.44,455.69 1049.00,454.88 1049.56,454.06 1050.12,453.25 1050.67,452.43 1051.22,451.62 1051.77,450.80 1052.32,449.98 1052.86,449.17 1053.40,448.35 1053.94,447.54 1054.47,446.72 1055.01,445.91 1055.53,445.09 1056.06,444.28 1056.58,443.46 1057.10,442.65 1057.62,441.83 1058.14,441.02 1058.65,440.20 1059.15,439.39 1059.66,438.57 1060.16,437.76 1060.66,436.94 1061.16,436.13 1061.65,435.31 1062.14,434.50 1062.63,433.68 1063.11,432.87 1063.59,432.05 1064.07,431.24 1064.55,430.42 1065.02,429.61 1065.49,428.79 1065.95,427.98 1066.41,427.16 1066.87,426.35 1067.33,425.53 1067.78,424.72 1068.23,423.90 1068.68,423.09 1069.12,422.27 1069.56,421.46 1070.00,420.64 1070.43,419.83 1070.87,419.01 1071.29,418.20 1071.72,417.38 1072.14,416.57 1072.56,415.75 1072.97,414.94 1073.38,414.12 1073.79,413.31 1074.20,412.50 1074.60,411.68 1075.00,410.86 1075.39,410.05 1075.78,409.23 1076.17,408.42 1076.56,407.60 1076.94,406.79 1077.32,405.97 1077.69,405.16 1078.06,404.34 1078.43,403.53 1078.80,402.71 1079.16,401.90 1079.52,401.08 1079.87,400.27 1080.22,399.45 1080.57,398.64 1080.92,397.82 1081.26,397.01 1081.60,396.19 1081.93,395.38 1082.26,394.56 1082.59,393.75 1082.91,392.93 1083.23,392.12 1083.55,391.30 1083.87,390.49 1084.18,389.67 1084.48,388.86 1084.79,388.04 1085.09,387.23 1085.38,386.41 1085.68,385.60 1085.97,384.78 1086.25,383.97 1086.54,383.15 1086.81,382.34 1087.09,381.52 1087.36,380.71 1087.63,379.89 1087.90,379.08 1088.16,378.26 1088.42,377.45 1088.67,376.63 1088.92,375.82 1089.17,375.00 1089.41,374.19 1089.65,373.38 1089.89,372.56 1090.12,371.75 1090.35,370.93 1090.58,370.11 1090.80,369.30 1091.02,368.48 1091.23,367.67 1091.44,366.85 1091.65,366.04 1091.86,365.22 1092.06,364.41 1092.25,363.59 1092.45,362.78 1092.64,361.96 1092.82,361.15 1093.01,360.33 1093.19,359.52 1093.36,358.70 1093.53,357.89 1093.70,357.07 1093.86,356.26 1094.03,355.44 1094.18,354.63 1094.34,353.81 1094.49,353.00 1094.63,352.18 1094.77,351.37 1094.91,350.55 1095.05,349.74 1095.18,348.92 1095.31,348.11 1095.43,347.29 1095.55,346.48 1095.67,345.66 1095.78,344.85 1095.89,344.03 1096.00,343.22 1096.10,342.40 1096.20,341.59 1096.29,340.77 1096.38,339.96 1096.47,339.14 1096.55,338.33 1096.63,337.51 1096.71,336.70 1096.78,335.88 1096.85,335.07 1096.92,334.25 1096.98,333.44 1097.03,332.62 1097.09,331.81 1097.14,331.00 1097.18,330.18 1097.23,329.36 1097.27,328.55 1097.30,327.73 1097.33,326.92 1097.36,326.10 1097.39,325.29 1097.41,324.47 1097.42,323.66 1097.44,322.84 1097.44,322.03 1097.45,321.21 1097.45,320.40 1097.45,319.58 1097.44,318.77 1097.44,317.95 1097.42,317.14 1097.41,316.32 1097.39,315.51 1097.36,314.69 1097.33,313.88 1097.30,313.06 1097.27,312.25 1097.23,311.44 1097.18,310.62 1097.14,309.80 1097.09,308.99 1097.03,308.17 1096.98,307.36 1096.92,306.54 1096.85,305.73 1096.78,304.91 1096.71,304.10 1096.63,303.28 1096.55,302.47 1096.47,301.65 1096.38,300.84 1096.29,300.02 1096.20,299.21 1096.10,298.39 1096.00,297.58 1095.89,296.76 1095.78,295.95 1095.67,295.13 1095.55,294.32 1095.43,293.50 1095.31,292.69 1095.18,291.88 1095.05,291.06 1094.91,290.25 1094.77,289.43 1094.63,288.62 1094.49,287.80 1094.34,286.98 1094.18,286.17 1094.03,285.35 1093.86,284.54 1093.70,283.72 1093.53,282.91 1093.36,282.09 1093.19,281.28 1093.01,280.46 1092.82,279.65 1092.64,278.83 1092.45,278.02 1092.25,277.20 1092.06,276.39 1091.86,275.57 1091.65,274.76 1091.44,273.94 1091.23,273.13 1091.02,272.31 1090.80,271.50 1090.58,270.69 1090.35,269.87 1090.12,269.05 1089.89,268.24 1089.65,267.42 1089.41,266.61 1089.17,265.79 1088.92,264.98 1088.67,264.16 1088.42,263.35 1088.16,262.53 1087.90,261.72 1087.63,260.90 1087.36,260.09 1087.09,259.27 1086.81,258.46 1086.54,257.64 1086.25,256.83 1085.97,256.01 1085.68,255.20 1085.38,254.38 1085.09,253.57 1084.79,252.75 1084.48,251.94 1084.18,251.12 1083.87,250.31 1083.55,249.49 1083.23,248.68 1082.91,247.86 1082.59,247.05 1082.26,246.23 1081.93,245.42 1081.60,244.60 1081.26,243.79 1080.92,242.97 1080.57,242.16 1080.22,241.34 1079.87,240.53 1079.52,239.71 1079.16,238.90 1078.80,238.08 1078.43,237.27 1078.06,236.45 1077.69,235.64 1077.32,234.82 1076.94,234.01 1076.56,233.19 1076.17,232.38 1075.78,231.56 1075.39,230.75 1075.00,229.94 1074.60,229.12 1074.20,228.30 1073.79,227.49 1073.38,226.67 1072.97,225.86 1072.56,225.04 1072.14,224.23 1071.72,223.41 1071.29,222.60 1070.87,221.78 1070.43,220.97 1070.00,220.15 1069.56,219.34 1069.12,218.52 1068.68,217.71 1068.23,216.89 1067.78,216.08 1067.33,215.26 1066.87,214.45 1066.41,213.63 1065.95,212.82 1065.49,212.00 1065.02,211.19 1064.55,210.38 1064.07,209.56 1063.59,208.75 1063.11,207.93 1062.63,207.11 1062.14,206.30 1061.65,205.48 1061.16,204.67 1060.66,203.85 1060.16,203.04 1059.66,202.22 1059.15,201.41 1058.65,200.59 1058.14,199.78 1057.62,198.96 1057.10,198.15 1056.58,197.33 1056.06,196.52 1055.53,195.70 1055.01,194.89 1054.47,194.07 1053.94,193.26 1053.40,192.44 1052.86,191.63 1052.32,190.81 1051.77,190.00 1051.22,189.18 1050.67,188.37 1050.12,187.55 1049.56,186.74 1049.00,185.92 1048.44,185.11 1047.87,184.29 1047.30,183.48 1046.73,182.66 1046.15,181.85 1045.58,181.03 1045.00,180.22 1044.42,179.40 1043.83,178.59 1043.24,177.77 1042.65,176.96 1042.06,176.14 1041.46,175.33 1040.87,174.51 1040.26,173.70 1039.66,172.88 1039.05,172.07 1038.44,171.25 1037.83,170.44 1037.22,169.62 1036.60,168.81 1035.98,167.99 1035.36,167.18 1034.74,166.36 1034.11,165.55 1033.48,164.73 1032.85,163.92 1032.21,163.10 1031.58,162.29 1030.94,161.47 1030.30,160.66 1029.65,159.84 1029.01,159.03 1028.36,158.21 1027.71,157.40 1027.05,156.58 1026.40,155.77 1025.74,154.95 1025.08,154.14 1024.41,153.32 1023.75,152.51 1023.08,151.69 1022.41,150.88 1021.74,150.06 1021.06,149.25 1020.38,148.44 1019.71,147.62 1019.02,146.80 1018.34,145.99 1017.65,145.17 1016.97,144.36 1016.28,143.54 1015.58,142.73 1014.89,141.91 1014.19,141.10 1013.49,140.28 1012.79,139.47 1012.09,138.66 1011.38,137.84 1010.68,137.02 1009.97,136.21 1009.26,135.39 1008.54,134.58 1007.83,133.76 1007.11,132.95 1006.39,132.13 1005.67,131.32 1004.94,130.50 1004.22,129.69 1003.49,128.88 1002.76,128.06 1002.03,127.24 1001.30,126.43 1000.56,125.61 999.83,124.80 999.09,123.98 998.35,123.17 997.60,122.35 996.86,121.54 996.11,120.72 995.37,119.91 994.62,119.09 993.87,118.28 993.11,117.47 992.36,116.65 991.60,115.83 990.84,115.02 990.08,114.20 989.32,113.39 988.56,112.57 987.79,111.76 987.03,110.94 986.26,110.13 985.49,109.31 984.72,108.50 983.94,107.69 983.17,106.87 982.39,106.05 981.62,105.24 980.84,104.42 980.06,103.61 979.27,102.79 978.49,101.98 977.71,101.16 976.92,100.35 976.13,99.53 975.34,98.72 974.55,97.91 973.76,97.09 972.97,96.28 972.17,95.46 971.38,94.64 970.58,93.83 969.78,93.01 968.98,92.20 968.18,91.38 967.38,90.57 966.57,89.75 965.77,88.94 964.96,88.12 964.15,87.31 963.35,86.50 962.54,85.68 961.73,84.86 960.91,84.05 960.10,83.23 959.29,82.42 958.47,81.60 957.65,80.79 956.84,79.97 956.02,79.16 955.20,78.34 954.38,77.53 953.56,76.72 952.73,75.90 951.91,75.08 951.09,74.27 950.26,73.45 949.44,72.64 948.61,71.82 947.78,71.01 946.95,70.19 946.12,69.38 945.29,68.56 944.46,67.75 943.63,66.94 942.80,66.12 941.96,65.31 941.13,64.49 940.29,63.68 939.46,62.86 938.62,62.05 937.78,61.23 936.94,60.42 936.11,59.60 935.27,58.78 934.43,57.97 933.59,57.15 932.74,56.34 931.90,55.52 931.06,54.71 930.22,53.89 929.37,53.08 928.53,52.26 927.69,51.45 926.84,50.63 926.00,49.82 925.15,49.00 924.30,48.19 923.46,47.38 922.61,46.56 921.76,45.75 920.91,44.93 920.07,44.12 919.22,43.30 918.37,42.49 917.52,41.67 916.67,40.86 915.82,40.04 914.97,39.23 914.12,38.41 913.27,37.59 912.42,36.78 911.57,35.96 910.72,35.15 909.87,34.33 909.01,33.52 908.16,32.70 907.31,31.89 906.46,31.07 905.61,30.26 904.76,29.44 903.90,28.63 903.05,27.81 902.20,27.00"/><polyline stroke-dashoffset="1.04" points="902.20,613.80 902.84,612.98 903.48,612.17 904.12,611.36 904.76,610.54 905.39,609.72 906.03,608.91 906.67,608.10 907.31,607.28 907.95,606.46 908.59,605.65 909.23,604.84 909.86,604.02 910.50,603.20 911.14,602.39 911.78,601.57 912.42,600.76 913.05,599.94 913.69,599.13 914.33,598.31 914.96,597.50 915.60,596.68 916.24,595.87 916.87,595.05 917.51,594.24 918.14,593.42 918.78,592.61 919.41,591.79 920.05,590.98 920.68,590.16 921.31,589.35 921.95,588.53 922.58,587.72 923.21,586.90 923.85,586.09 924.48,585.27 925.11,584.46 925.74,583.64 926.37,582.83 927.00,582.01 927.63,581.20 928.26,580.38 928.89,579.57 929.51,578.75 930.14,577.94 930.77,577.12 931.40,576.31 932.02,575.49 932.65,574.68 933.27,573.87 933.90,573.05 934.52,572.23 935.14,571.42 935.76,570.61 936.39,569.79 937.01,568.97 937.63,568.16 938.25,567.35 938.87,566.53 939.48,565.71 940.10,564.90 940.72,564.08 941.33,563.27 941.95,562.45 942.56,561.64 943.18,560.82 943.79,560.01 944.40,559.19 945.01,558.38 945.63,557.56 946.24,556.75 946.84,555.93 947.45,555.12 948.06,554.30 948.67,553.49 949.27,552.67 949.88,551.86 950.48,551.04 951.08,550.23 951.68,549.41 952.29,548.60 952.89,547.78 953.48,546.97 954.08,546.15 954.68,545.34 955.28,544.52 955.87,543.71 956.46,542.89 957.06,542.08 957.65,541.26 958.24,540.45 958.83,539.63 959.42,538.82 960.01,538.00 960.59,537.19 961.18,536.38 961.76,535.56 962.35,534.75 962.93,533.93 963.51,533.12 964.09,532.30 964.67,531.48 965.24,530.67 965.82,529.86 966.39,529.04 966.97,528.22 967.54,527.41 968.11,526.60 968.68,525.78 969.25,524.96 969.82,524.15 970.38,523.33 970.95,522.52 971.51,521.70 972.07,520.89 972.64,520.07 973.20,519.26 973.75,518.44 974.31,517.63 974.87,516.81 975.42,516.00 975.97,515.18 976.52,514.37 977.07,513.55 977.62,512.74 978.17,511.92 978.71,511.11 979.26,510.29 979.80,509.48 980.34,508.66 980.88,507.85 981.42,507.03 981.96,506.22 982.49,505.40 983.03,504.59 983.56,503.77 984.09,502.96 984.62,502.14 985.14,501.33 985.67,500.51 986.19,499.70 986.72,498.88 987.24,498.07 987.76,497.25 988.27,496.44 988.79,495.62 989.31,494.81 989.82,494.00 990.33,493.18 990.84,492.36 991.35,491.55 991.85,490.73 992.36,489.92 992.86,489.10 993.36,488.29 993.86,487.47 994.36,486.66 994.85,485.84 995.35,485.03 995.84,484.21 996.33,483.40 996.82,482.58 997.30,481.77 997.79,480.95 998.27,480.14 998.75,479.32 999.23,478.51 999.71,477.69 1000.19,476.88 1000.66,476.06 1001.13,475.25 1001.60,474.43 1002.07,473.62 1002.54,472.80 1003.00,471.99 1003.46,471.17 1003.93,470.36 1004.38,469.54 1004.84,468.73 1005.30,467.91 1005.75,467.10 1006.20,466.28 1006.65,465.47 1007.09,464.65 1007.54,463.84 1007.98,463.02 1008.42,462.21 1008.86,461.39 1009.30,460.58 1009.73,459.76 1010.17,458.95 1010.60,458.13 1011.03,457.32 1011.45,456.50 1011.88,455.69 1012.30,454.88 1012.72,454.06 1013.14,453.25 1013.55,452.43 1013.97,451.62 1014.38,450.80 1014.79,449.98 1015.20,449.17 1015.60,448.35 1016.00,447.54 1016.41,446.72 1016.80,445.91 1017.20,445.09 1017.60,444.28 1017.99,443.46 1018.38,442.65 1018.77,441.83 1019.15,441.02 1019.53,440.20 1019.92,439.39 1020.29,438.57 1020.67,437.76 1021.05,436.94 1021.42,436.13 1021.79,435.31 1022.16,434.50 1022.52,433.68 1022.88,432.87 1023.24,432.05 1023.60,431.24 1023.96,430.42 1024.31,429.61 1024.66,428.79 1025.01,427.98 1025.36,427.16 1025.71,426.35 1026.05,425.53 1026.39,424.72 1026.72,423.90 1027.06,423.09 1027.39,422.27 1027.72,421.46 1028.05,420.64 1028.38,419.83 1028.70,419.01 1029.02,418.20 1029.34,417.38 1029.65,416.57 1029.97,415.75 1030.28,414.94 1030.59,414.12 1030.89,413.31 1031.20,412.50 1031.50,411.68 1031.80,410.86 1032.09,410.05 1032.39,409.23 1032.68,408.42 1032.97,407.60 1033.25,406.79 1033.54,405.97 1033.82,405.16 1034.10,404.34 1034.37,403.53 1034.65,402.71 1034.92,401.90 1035.19,401.08 1035.45,400.27 1035.72,399.45 1035.98,398.64 1036.24,397.82 1036.49,397.01 1036.75,396.19 1037.00,395.38 1037.25,394.56 1037.49,393.75 1037.74,392.93 1037.98,392.12 1038.21,391.30 1038.45,390.49 1038.68,389.67 1038.91,388.86 1039.14,388.04 1039.37,387.23 1039.59,386.41 1039.81,385.60 1040.02,384.78 1040.24,383.97 1040.45,383.15 1040.66,382.34 1040.87,381.52 1041.07,380.71 1041.27,379.89 1041.47,379.08 1041.67,378.26 1041.86,377.45 1042.05,376.63 1042.24,375.82 1042.43,375.00 1042.61,374.19 1042.79,373.38 1042.97,372.56 1043.14,371.75 1043.31,370.93 1043.48,370.11 1043.65,369.30 1043.81,368.48 1043.97,367.67 1044.13,366.85 1044.29,366.04 1044.44,365.22 1044.59,364.41 1044.74,363.59 1044.89,362.78 1045.03,361.96 1045.17,361.15 1045.30,360.33 1045.44,359.52 1045.57,358.70 1045.70,357.89 1045.83,357.07 1045.95,356.26 1046.07,355.44 1046.19,354.63 1046.30,353.81 1046.41,353.00 1046.52,352.18 1046.63,351.37 1046.73,350.55 1046.84,349.74 1046.93,348.92 1047.03,348.11 1047.12,347.29 1047.21,346.48 1047.30,345.66 1047.39,344.85 1047.47,344.03 1047.55,343.22 1047.62,342.40 1047.70,341.59 1047.77,340.77 1047.84,339.96 1047.90,339.14 1047.96,338.33 1048.02,337.51 1048.08,336.70 1048.14,335.88 1048.19,335.07 1048.24,334.25 1048.28,333.44 1048.33,332.62 1048.37,331.81 1048.40,331.00 1048.44,330.18 1048.47,329.36 1048.50,328.55 1048.53,327.73 1048.55,326.92 1048.57,326.10 1048.59,325.29 1048.60,324.47 1048.62,323.66 1048.63,322.84 1048.63,322.03 1048.64,321.21 1048.64,320.40 1048.64,319.58 1048.63,318.77 1048.63,317.95 1048.62,317.14 1048.60,316.32 1048.59,315.51 1048.57,314.69 1048.55,313.88 1048.53,313.06 1048.50,312.25 1048.47,311.44 1048.44,310.62 1048.40,309.80 1048.37,308.99 1048.33,308.17 1048.28,307.36 1048.24,306.54 1048.19,305.73 1048.14,304.91 1048.08,304.10 1048.02,303.28 1047.96,302.47 1047.90,301.65 1047.84,300.84 1047.77,300.02 1047.70,299.21 1047.62,298.39 1047.55,297.58 1047.47,296.76 1047.39,295.95 1047.30,295.13 1047.21,294.32 1047.12,293.50 1047.03,292.69 1046.93,291.88 1046.84,291.06 1046.73,290.25 1046.63,289.43 1046.52,288.62 1046.41,287.80 1046.30,286.98 1046.19,286.17 1046.07,285.35 1045.95,284.54 1045.83,283.72 1045.70,282.91 1045.57,282.09 1045.44,281.28 1045.30,280.46 1045.17,279.65 1045.03,278.83 1044.89,278.02 1044.74,277.20 1044.59,276.39 1044.44,275.57 1044.29,274.76 1044.13,273.94 1043.97,273.13 1043.81,272.31 1043.65,271.50 1043.48,270.69 1043.31,269.87 1043.14,269.05 1042.97,268.24 1042.79,267.42 1042.61,266.61 1042.43,265.79 1042.24,264.98 1042.05,264.16 1041.86,263.35 1041.67,262.53 1041.47,261.72 1041.27,260.90 1041.07,260.09 1040.87,259.27 1040.66,258.46 1040.45,257.64 1040.24,256.83 1040.02,256.01 1039.81,255.20 1039.59,254.38 1039.37,253.57 1039.14,252.75 1038.91,251.94 1038.68,251.12 1038.45,250.31 1038.21,249.49 1037.98,248.68 1037.74,247.86 1037.49,247.05 1037.25,246.23 1037.00,245.42 1036.75,244.60 1036.49,243.79 1036.24,242.97 1035.98,242.16 1035.72,241.34 1035.45,240.53 1035.19,239.71 1034.92,238.90 1034.65,238.08 1034.37,237.27 1034.10,236.45 1033.82,235.64 1033.54,234.82 1033.25,234.01 1032.97,233.19 1032.68,232.38 1032.39,231.56 1032.09,230.75 1031.80,229.94 1031.50,229.12 1031.20,228.30 1030.89,227.49 1030.59,226.67 1030.28,225.86 1029.97,225.04 1029.65,224.23 1029.34,223.41 1029.02,222.60 1028.70,221.78 1028.38,220.97 1028.05,220.15 1027.72,219.34 1027.39,218.52 1027.06,217.71 1026.72,216.89 1026.39,216.08 1026.05,215.26 1025.71,214.45 1025.36,213.63 1025.01,212.82 1024.66,212.00 1024.31,211.19 1023.96,210.38 1023.60,209.56 1023.24,208.75 1022.88,207.93 1022.52,207.11 1022.16,206.30 1021.79,205.48 1021.42,204.67 1021.05,203.85 1020.67,203.04 1020.29,202.22 1019.92,201.41 1019.53,200.59 1019.15,199.78 1018.77,198.96 1018.38,198.15 1017.99,197.33 1017.60,196.52 1017.20,195.70 1016.80,194.89 1016.41,194.07 1016.00,193.26 1015.60,192.44 1015.20,191.63 1014.79,190.81 1014.38,190.00 1013.97,189.18 1013.55,188.37 1013.14,187.55 1012.72,186.74 1012.30,185.92 1011.88,185.11 1011.45,184.29 1011.03,183.48 1010.60,182.66 1010.17,181.85 1009.73,181.03 1009.30,180.22 1008.86,179.40 1008.42,178.59 1007.98,177.77 1007.54,176.96 1007.09,176.14 1006.65,175.33 1006.20,174.51 1005.75,173.70 1005.30,172.88 1004.84,172.07 1004.38,171.25 1003.93,170.44 1003.46,169.62 1003.00,168.81 1002.54,167.99 1002.07,167.18 1001.60,166.36 1001.13,165.55 1000.66,164.73 1000.19,163.92 999.71,163.10 999.23,162.29 998.75,161.47 998.27,160.66 997.79,159.84 997.30,159.03 996.82,158.21 996.33,157.40 995.84,156.58 995.35,155.77 994.85,154.95 994.36,154.14 993.86,153.32 993.36,152.51 992.86,151.69 992.36,150.88 991.85,150.06 991.35,149.25 990.84,148.44 990.33,147.62 989.82,146.80 989.31,145.99 988.79,145.17 988.27,144.36 987.76,143.54 987.24,142.73 986.72,141.91 986.19,141.10 985.67,140.28 985.14,139.47 984.62,138.66 984.09,137.84 983.56,137.02 983.03,136.21 982.49,135.39 981.96,134.58 981.42,133.76 980.88,132.95 980.34,132.13 979.80,131.32 979.26,130.50 978.71,129.69 978.17,128.88 977.62,128.06 977.07,127.24 976.52,126.43 975.97,125.61 975.42,124.80 974.87,123.98 974.31,123.17 973.75,122.35 973.20,121.54 972.64,120.72 972.07,119.91 971.51,119.09 970.95,118.28 970.38,117.47 969.82,116.65 969.25,115.83 968.68,115.02 968.11,114.20 967.54,113.39 966.97,112.57 966.39,111.76 965.82,110.94 965.24,110.13 964.67,109.31 964.09,108.50 963.51,107.69 962.93,106.87 962.35,106.05 961.76,105.24 961.18,104.42 960.59,103.61 960.01,102.79 959.42,101.98 958.83,101.16 958.24,100.35 957.65,99.53 957.06,98.72 956.46,97.91 955.87,97.09 955.28,96.28 954.68,95.46 954.08,94.64 953.48,93.83 952.89,93.01 952.29,92.20 951.68,91.38 951.08,90.57 950.48,89.75 949.88,88.94 949.27,88.12 948.67,87.31 948.06,86.50 947.45,85.68 946.84,84.86 946.24,84.05 945.63,83.23 945.01,82.42 944.40,81.60 943.79,80.79 943.18,79.97 942.56,79.16 941.95,78.34 941.33,77.53 940.72,76.72 940.10,75.90 939.48,75.08 938.87,74.27 938.25,73.45 937.63,72.64 937.01,71.82 936.39,71.01 935.76,70.19 935.14,69.38 934.52,68.56 933.90,67.75 933.27,66.94 932.65,66.12 932.02,65.31 931.40,64.49 930.77,63.68 930.14,62.86 929.51,62.05 928.89,61.23 928.26,60.42 927.63,59.60 927.00,58.78 926.37,57.97 925.74,57.15 925.11,56.34 924.48,55.52 923.85,54.71 923.21,53.89 922.58,53.08 921.95,52.26 921.31,51.45 920.68,50.63 920.05,49.82 919.41,49.00 918.78,48.19 918.14,47.38 917.51,46.56 916.87,45.75 916.24,44.93 915.60,44.12 914.96,43.30 914.33,42.49 913.69,41.67 913.05,40.86 912.42,40.04 911.78,39.23 911.14,38.41 910.50,37.59 909.86,36.78 909.23,35.96 908.59,35.15 907.95,34.33 907.31,33.52 906.67,32.70 906.03,31.89 905.39,31.07 904.76,30.26 904.12,29.44 903.48,28.63 902.84,27.81 902.20,27.00"/><polyline stroke-dashoffset="1.04" points="902.20,613.80 902.63,612.98 903.05,612.17 903.48,611.36 903.90,610.54 904.33,609.72 904.76,608.91 905.18,608.10 905.61,607.28 906.03,606.46 906.46,605.65 906.88,604.84 907.31,604.02 907.73,603.20 908.16,602.39 908.59,601.57 909.01,600.76 909.43,599.94 909.86,599.13 910.28,598.31 910.71,597.50 911.13,596.68 911.56,595.87 911.98,595.05 912.40,594.24 912.83,593.42 913.25,592.61 913.67,591.79 914.10,590.98 914.52,590.16 914.94,589.35 915.36,588.53 915.79,587.72 916.21,586.90 916.63,586.09 917.05,585.27 917.47,584.46 917.89,583.64 918.31,582.83 918.73,582.01 919.15,581.20 919.57,580.38 919.99,579.57 920.41,578.75 920.83,577.94 921.25,577.12 921.66,576.31 922.08,575.49 922.50,574.68 922.91,573.87 923.33,573.05 923.75,572.23 924.16,571.42 924.58,570.61 924.99,569.79 925.40,568.97 925.82,568.16 926.23,567.35 926.64,566.53 927.06,565.71 927.47,564.90 927.88,564.08 928.29,563.27 928.70,562.45 929.11,561.64 929.52,560.82 929.93,560.01 930.34,559.19 930.74,558.38 931.15,557.56 931.56,556.75 931.96,555.93 932.37,555.12 932.77,554.30 933.18,553.49 933.58,552.67 933.98,551.86 934.39,551.04 934.79,550.23 935.19,549.41 935.59,548.60 935.99,547.78 936.39,546.97 936.79,546.15 937.19,545.34 937.58,544.52 937.98,543.71 938.38,542.89 938.77,542.08 939.17,541.26 939.56,540.45 939.95,539.63 940.35,538.82 940.74,538.00 941.13,537.19 941.52,536.38 941.91,535.56 942.30,534.75 942.68,533.93 943.07,533.12 943.46,532.30 943.84,531.48 944.23,530.67 944.61,529.86 945.00,529.04 945.38,528.22 945.76,527.41 946.14,526.60 946.52,525.78 946.90,524.96 947.28,524.15 947.66,523.33 948.03,522.52 948.41,521.70 948.78,520.89 949.16,520.07 949.53,519.26 949.90,518.44 950.27,517.63 950.64,516.81 951.01,516.00 951.38,515.18 951.75,514.37 952.12,513.55 952.48,512.74 952.85,511.92 953.21,511.11 953.57,510.29 953.93,509.48 954.29,508.66 954.65,507.85 955.01,507.03 955.37,506.22 955.73,505.40 956.08,504.59 956.44,503.77 956.79,502.96 957.14,502.14 957.50,501.33 957.85,500.51 958.20,499.70 958.54,498.88 958.89,498.07 959.24,497.25 959.58,496.44 959.93,495.62 960.27,494.81 960.61,494.00 960.95,493.18 961.29,492.36 961.63,491.55 961.97,490.73 962.30,489.92 962.64,489.10 962.97,488.29 963.31,487.47 963.64,486.66 963.97,485.84 964.30,485.03 964.63,484.21 964.95,483.40 965.28,482.58 965.60,481.77 965.93,480.95 966.25,480.14 966.57,479.32 966.89,478.51 967.21,477.69 967.52,476.88 967.84,476.06 968.16,475.25 968.47,474.43 968.78,473.62 969.09,472.80 969.40,471.99 969.71,471.17 970.02,470.36 970.32,469.54 970.63,468.73 970.93,467.91 971.23,467.10 971.53,466.28 971.83,465.47 972.13,464.65 972.43,463.84 972.72,463.02 973.02,462.21 973.31,461.39 973.60,460.58 973.89,459.76 974.18,458.95 974.46,458.13 974.75,457.32 975.03,456.50 975.32,455.69 975.60,454.88 975.88,454.06 976.16,453.25 976.44,452.43 976.71,451.62 976.99,450.80 977.26,449.98 977.53,449.17 977.80,448.35 978.07,447.54 978.34,446.72 978.60,445.91 978.87,445.09 979.13,444.28 979.39,443.46 979.65,442.65 979.91,441.83 980.17,441.02 980.42,440.20 980.68,439.39 980.93,438.57 981.18,437.76 981.43,436.94 981.68,436.13 981.93,435.31 982.17,434.50 982.41,433.68 982.66,432.87 982.90,432.05 983.14,431.24 983.37,430.42 983.61,429.61 983.84,428.79 984.08,427.98 984.31,427.16 984.54,426.35 984.77,425.53 984.99,424.72 985.22,423.90 985.44,423.09 985.66,422.27 985.88,421.46 986.10,420.64 986.32,419.83 986.53,419.01 986.75,418.20 986.96,417.38 987.17,416.57 987.38,415.75 987.59,414.94 987.79,414.12 988.00,413.31 988.20,412.50 988.40,411.68 988.60,410.86 988.80,410.05 988.99,409.23 989.19,408.42 989.38,407.60 989.57,406.79 989.76,405.97 989.95,405.16 990.13,404.34 990.32,403.53 990.50,402.71 990.68,401.90 990.86,401.08 991.04,400.27 991.21,399.45 991.39,398.64 991.56,397.82 991.73,397.01 991.90,396.19 992.07,395.38 992.23,394.56 992.39,393.75 992.56,392.93 992.72,392.12 992.88,391.30 993.03,390.49 993.19,389.67 993.34,388.86 993.49,388.04 993.64,387.23 993.79,386.41 993.94,385.60 994.08,384.78 994.23,383.97 994.37,383.15 994.51,382.34 994.65,381.52 994.78,380.71 994.92,379.89 995.05,379.08 995.18,378.26 995.31,377.45 995.43,376.63 995.56,375.82 995.68,375.00 995.81,374.19 995.93,373.38 996.04,372.56 996.16,371.75 996.28,370.93 996.39,370.11 996.50,369.30 996.61,368.48 996.72,367.67 996.82,366.85 996.93,366.04 997.03,365.22 997.13,364.41 997.23,363.59 997.32,362.78 997.42,361.96 997.51,361.15 997.60,360.33 997.69,359.52 997.78,358.70 997.87,357.89 997.95,357.07 998.03,356.26 998.11,355.44 998.19,354.63 998.27,353.81 998.34,353.00 998.42,352.18 998.49,351.37 998.56,350.55 998.62,349.74 998.69,348.92 998.75,348.11 998.82,347.29 998.88,346.48 998.93,345.66 998.99,344.85 999.05,344.03 999.10,343.22 999.15,342.40 999.20,341.59 999.25,340.77 999.29,339.96 999.33,339.14 999.38,338.33 999.42,337.51 999.45,336.70 999.49,335.88 999.53,335.07 999.56,334.25 999.59,333.44 999.62,332.62 999.64,331.81 999.67,331.00 999.69,330.18 999.71,329.36 999.73,328.55 999.75,327.73 999.77,326.92 999.78,326.10 999.79,325.29 999.80,324.47 999.81,323.66 999.82,322.84 999.82,322.03 999.83,321.21 999.83,320.40 999.83,319.58 999.82,318.77 999.82,317.95 999.81,317.14 999.80,316.32 999.79,315.51 999.78,314.69 999.77,313.88 999.75,313.06 999.73,312.25 999.71,311.44 999.69,310.62 999.67,309.80 999.64,308.99 999.62,308.17 999.59,307.36 999.56,306.54 999.53,305.73 999.49,304.91 999.45,304.10 999.42,303.28 999.38,302.47 999.33,301.65 999.29,300.84 999.25,300.02 999.20,299.21 999.15,298.39 999.10,297.58 999.05,296.76 998.99,295.95 998.93,295.13 998.88,294.32 998.82,293.50 998.75,292.69 998.69,291.88 998.62,291.06 998.56,290.25 998.49,289.43 998.42,288.62 998.34,287.80 998.27,286.98 998.19,286.17 998.11,285.35 998.03,284.54 997.95,283.72 997.87,282.91 997.78,282.09 997.69,281.28 997.60,280.46 997.51,279.65 997.42,278.83 997.32,278.02 997.23,277.20 997.13,276.39 997.03,275.57 996.93,274.76 996.82,273.94 996.72,273.13 996.61,272.31 996.50,271.50 996.39,270.69 996.28,269.87 996.16,269.05 996.04,268.24 995.93,267.42 995.81,266.61 995.68,265.79 995.56,264.98 995.43,264.16 995.31,263.35 995.18,262.53 995.05,261.72 994.92,260.90 994.78,260.09 994.65,259.27 994.51,258.46 994.37,257.64 994.23,256.83 994.08,256.01 993.94,255.20 993.79,254.38 993.64,253.57 993.49,252.75 993.34,251.94 993.19,251.12 993.03,250.31 992.88,249.49 992.72,248.68 992.56,247.86 992.39,247.05 992.23,246.23 992.07,245.42 991.90,244.60 991.73,243.79 991.56,242.97 991.39,242.16 991.21,241.34 991.04,240.53 990.86,239.71 990.68,238.90 990.50,238.08 990.32,237.27 990.13,236.45 989.95,235.64 989.76,234.82 989.57,234.01 989.38,233.19 989.19,232.38 988.99,231.56 988.80,230.75 988.60,229.94 988.40,229.12 988.20,228.30 988.00,227.49 987.79,226.67 987.59,225.86 987.38,225.04 987.17,224.23 986.96,223.41 986.75,222.60 986.53,221.78 986.32,220.97 986.10,220.15 985.88,219.34 985.66,218.52 985.44,217.71 985.22,216.89 984.99,216.08 984.77,215.26 984.54,214.45 984.31,213.63 984.08,212.82 983.84,212.00 983.61,211.19 983.37,210.38 983.14,209.56 982.90,208.75 982.66,207.93 982.41,207.11 982.17,206.30 981.93,205.48 981.68,204.67 981.43,203.85 981.18,203.04 980.93,202.22 980.68,201.41 980.42,200.59 980.17,199.78 979.91,198.96 979.65,198.15 979.39,197.33 979.13,196.52 978.87,195.70 978.60,194.89 978.34,194.07 978.07,193.26 977.80,192.44 977.53,191.63 977.26,190.81 976.99,190.00 976.71,189.18 976.44,188.37 976.16,187.55 975.88,186.74 975.60,185.92 975.32,185.11 975.03,184.29 974.75,183.48 974.46,182.66 974.18,181.85 973.89,181.03 973.60,180.22 973.31,179.40 973.02,178.59 972.72,177.77 972.43,176.96 972.13,176.14 971.83,175.33 971.53,174.51 971.23,173.70 970.93,172.88 970.63,172.07 970.32,171.25 970.02,170.44 969.71,169.62 969.40,168.81 969.09,167.99 968.78,167.18 968.47,166.36 968.16,165.55 967.84,164.73 967.52,163.92 967.21,163.10 966.89,162.29 966.57,161.47 966.25,160.66 965.93,159.84 965.60,159.03 965.28,158.21 964.95,157.40 964.63,156.58 964.30,155.77 963.97,154.95 963.64,154.14 963.31,153.32 962.97,152.51 962.64,151.69 962.30,150.88 961.97,150.06 961.63,149.25 961.29,148.44 960.95,147.62 960.61,146.80 960.27,145.99 959.93,145.17 959.58,144.36 959.24,143.54 958.89,142.73 958.54,141.91 958.20,141.10 957.85,140.28 957.50,139.47 957.14,138.66 956.79,137.84 956.44,137.02 956.08,136.21 955.73,135.39 955.37,134.58 955.01,133.76 954.65,132.95 954.29,132.13 953.93,131.32 953.57,130.50 953.21,129.69 952.85,128.88 952.48,128.06 952.12,127.24 951.75,126.43 951.38,125.61 951.01,124.80 950.64,123.98 950.27,123.17 949.90,122.35 949.53,121.54 949.16,120.72 948.78,119.91 948.41,119.09 948.03,118.28 947.66,117.47 947.28,116.65 946.90,115.83 946.52,115.02 946.14,114.20 945.76,113.39 945.38,112.57 945.00,111.76 944.61,110.94 944.23,110.13 943.84,109.31 943.46,108.50 943.07,107.69 942.68,106.87 942.30,106.05 941.91,105.24 941.52,104.42 941.13,103.61 940.74,102.79 940.35,101.98 939.95,101.16 939.56,100.35 939.17,99.53 938.77,98.72 938.38,97.91 937.98,97.09 937.58,96.28 937.19,95.46 936.79,94.64 936.39,93.83 935.99,93.01 935.59,92.20 935.19,91.38 934.79,90.57 934.39,89.75 933.98,88.94 933.58,88.12 933.18,87.31 932.77,86.50 932.37,85.68 931.96,84.86 931.56,84.05 931.15,83.23 930.74,82.42 930.34,81.60 929.93,80.79 929.52,79.97 929.11,79.16 928.70,78.34 928.29,77.53 927.88,76.72 927.47,75.90 927.06,75.08 926.64,74.27 926.23,73.45 925.82,72.64 925.40,71.82 924.99,71.01 924.58,70.19 924.16,69.38 923.75,68.56 923.33,67.75 922.91,66.94 922.50,66.12 922.08,65.31 921.66,64.49 921.25,63.68 920.83,62.86 920.41,62.05 919.99,61.23 919.57,60.42 919.15,59.60 918.73,58.78 918.31,57.97 917.89,57.15 917.47,56.34 917.05,55.52 916.63,54.71 916.21,53.89 915.79,53.08 915.36,52.26 914.94,51.45 914.52,50.63 914.10,49.82 913.67,49.00 913.25,48.19 912.83,47.38 912.40,46.56 911.98,45.75 911.56,44.93 911.13,44.12 910.71,43.30 910.28,42.49 909.86,41.67 909.43,40.86 909.01,40.04 908.59,39.23 908.16,38.41 907.73,37.59 907.31,36.78 906.88,35.96 906.46,35.15 906.03,34.33 905.61,33.52 905.18,32.70 904.76,31.89 904.33,31.07 903.90,30.26 903.48,29.44 903.05,28.63 902.63,27.81 902.20,27.00"/><polyline stroke-dashoffset="1.04" points="902.20,613.80 902.41,612.98 902.63,612.17 902.84,611.36 903.05,610.54 903.26,609.72 903.48,608.91 903.69,608.10 903.90,607.28 904.12,606.46 904.33,605.65 904.54,604.84 904.75,604.02 904.97,603.20 905.18,602.39 905.39,601.57 905.61,600.76 905.82,599.94 906.03,599.13 906.24,598.31 906.45,597.50 906.67,596.68 906.88,595.87 907.09,595.05 907.30,594.24 907.51,593.42 907.73,592.61 907.94,591.79 908.15,590.98 908.36,590.16 908.57,589.35 908.78,588.53 908.99,587.72 909.20,586.90 909.42,586.09 909.63,585.27 909.84,584.46 910.05,583.64 910.26,582.83 910.47,582.01 910.68,581.20 910.89,580.38 911.10,579.57 911.30,578.75 911.51,577.94 911.72,577.12 911.93,576.31 912.14,575.49 912.35,574.68 912.56,573.87 912.77,573.05 912.97,572.23 913.18,571.42 913.39,570.61 913.60,569.79 913.80,568.97 914.01,568.16 914.22,567.35 914.42,566.53 914.63,565.71 914.83,564.90 915.04,564.08 915.24,563.27 915.45,562.45 915.65,561.64 915.86,560.82 916.06,560.01 916.27,559.19 916.47,558.38 916.68,557.56 916.88,556.75 917.08,555.93 917.28,555.12 917.49,554.30 917.69,553.49 917.89,552.67 918.09,551.86 918.29,551.04 918.49,550.23 918.69,549.41 918.90,548.60 919.10,547.78 919.29,546.97 919.49,546.15 919.69,545.34 919.89,544.52 920.09,543.71 920.29,542.89 920.49,542.08 920.68,541.26 920.88,540.45 921.08,539.63 921.27,538.82 921.47,538.00 921.66,537.19 921.86,536.38 922.05,535.56 922.25,534.75 922.44,533.93 922.64,533.12 922.83,532.30 923.02,531.48 923.21,530.67 923.41,529.86 923.60,529.04 923.79,528.22 923.98,527.41 924.17,526.60 924.36,525.78 924.55,524.96 924.74,524.15 924.93,523.33 925.12,522.52 925.30,521.70 925.49,520.89 925.68,520.07 925.87,519.26 926.05,518.44 926.24,517.63 926.42,516.81 926.61,516.00 926.79,515.18 926.97,514.37 927.16,513.55 927.34,512.74 927.52,511.92 927.70,511.11 927.89,510.29 928.07,509.48 928.25,508.66 928.43,507.85 928.61,507.03 928.79,506.22 928.96,505.40 929.14,504.59 929.32,503.77 929.50,502.96 929.67,502.14 929.85,501.33 930.02,500.51 930.20,499.70 930.37,498.88 930.55,498.07 930.72,497.25 930.89,496.44 931.06,495.62 931.24,494.81 931.41,494.00 931.58,493.18 931.75,492.36 931.92,491.55 932.08,490.73 932.25,489.92 932.42,489.10 932.59,488.29 932.75,487.47 932.92,486.66 933.08,485.84 933.25,485.03 933.41,484.21 933.58,483.40 933.74,482.58 933.90,481.77 934.06,480.95 934.22,480.14 934.38,479.32 934.54,478.51 934.70,477.69 934.86,476.88 935.02,476.06 935.18,475.25 935.33,474.43 935.49,473.62 935.65,472.80 935.80,471.99 935.95,471.17 936.11,470.36 936.26,469.54 936.41,468.73 936.57,467.91 936.72,467.10 936.87,466.28 937.02,465.47 937.16,464.65 937.31,463.84 937.46,463.02 937.61,462.21 937.75,461.39 937.90,460.58 938.04,459.76 938.19,458.95 938.33,458.13 938.48,457.32 938.62,456.50 938.76,455.69 938.90,454.88 939.04,454.06 939.18,453.25 939.32,452.43 939.46,451.62 939.59,450.80 939.73,449.98 939.87,449.17 940.00,448.35 940.13,447.54 940.27,446.72 940.40,445.91 940.53,445.09 940.67,444.28 940.80,443.46 940.93,442.65 941.06,441.83 941.18,441.02 941.31,440.20 941.44,439.39 941.56,438.57 941.69,437.76 941.82,436.94 941.94,436.13 942.06,435.31 942.19,434.50 942.31,433.68 942.43,432.87 942.55,432.05 942.67,431.24 942.79,430.42 942.90,429.61 943.02,428.79 943.14,427.98 943.25,427.16 943.37,426.35 943.48,425.53 943.60,424.72 943.71,423.90 943.82,423.09 943.93,422.27 944.04,421.46 944.15,420.64 944.26,419.83 944.37,419.01 944.47,418.20 944.58,417.38 944.68,416.57 944.79,415.75 944.89,414.94 945.00,414.12 945.10,413.31 945.20,412.50 945.30,411.68 945.40,410.86 945.50,410.05 945.60,409.23 945.69,408.42 945.79,407.60 945.88,406.79 945.98,405.97 946.07,405.16 946.17,404.34 946.26,403.53 946.35,402.71 946.44,401.90 946.53,401.08 946.62,400.27 946.71,399.45 946.79,398.64 946.88,397.82 946.96,397.01 947.05,396.19 947.13,395.38 947.22,394.56 947.30,393.75 947.38,392.93 947.46,392.12 947.54,391.30 947.62,390.49 947.69,389.67 947.77,388.86 947.85,388.04 947.92,387.23 948.00,386.41 948.07,385.60 948.14,384.78 948.21,383.97 948.28,383.15 948.35,382.34 948.42,381.52 948.49,380.71 948.56,379.89 948.62,379.08 948.69,378.26 948.75,377.45 948.82,376.63 948.88,375.82 948.94,375.00 949.00,374.19 949.06,373.38 949.12,372.56 949.18,371.75 949.24,370.93 949.29,370.11 949.35,369.30 949.40,368.48 949.46,367.67 949.51,366.85 949.56,366.04 949.61,365.22 949.66,364.41 949.71,363.59 949.76,362.78 949.81,361.96 949.86,361.15 949.90,360.33 949.95,359.52 949.99,358.70 950.03,357.89 950.08,357.07 950.12,356.26 950.16,355.44 950.20,354.63 950.23,353.81 950.27,353.00 950.31,352.18 950.34,351.37 950.38,350.55 950.41,349.74 950.44,348.92 950.48,348.11 950.51,347.29 950.54,346.48 950.57,345.66 950.60,344.85 950.62,344.03 950.65,343.22 950.67,342.40 950.70,341.59 950.72,340.77 950.75,339.96 950.77,339.14 950.79,338.33 950.81,337.51 950.83,336.70 950.85,335.88 950.86,335.07 950.88,334.25 950.89,333.44 950.91,332.62 950.92,331.81 950.93,331.00 950.95,330.18 950.96,329.36 950.97,328.55 950.98,327.73 950.98,326.92 950.99,326.10 951.00,325.29 951.00,324.47 951.01,323.66 951.01,322.84 951.01,322.03 951.01,321.21 951.01,320.40 951.01,319.58 951.01,318.77 951.01,317.95 951.01,317.14 951.00,316.32 951.00,315.51 950.99,314.69 950.98,313.88 950.98,313.06 950.97,312.25 950.96,311.44 950.95,310.62 950.93,309.80 950.92,308.99 950.91,308.17 950.89,307.36 950.88,306.54 950.86,305.73 950.85,304.91 950.83,304.10 950.81,303.28 950.79,302.47 950.77,301.65 950.75,300.84 950.72,300.02 950.70,299.21 950.67,298.39 950.65,297.58 950.62,296.76 950.60,295.95 950.57,295.13 950.54,294.32 950.51,293.50 950.48,292.69 950.44,291.88 950.41,291.06 950.38,290.25 950.34,289.43 950.31,288.62 950.27,287.80 950.23,286.98 950.20,286.17 950.16,285.35 950.12,284.54 950.08,283.72 950.03,282.91 949.99,282.09 949.95,281.28 949.90,280.46 949.86,279.65 949.81,278.83 949.76,278.02 949.71,277.20 949.66,276.39 949.61,275.57 949.56,274.76 949.51,273.94 949.46,273.13 949.40,272.31 949.35,271.50 949.29,270.69 949.24,269.87 949.18,269.05 949.12,268.24 949.06,267.42 949.00,266.61 948.94,265.79 948.88,264.98 948.82,264.16 948.75,263.35 948.69,262.53 948.62,261.72 948.56,260.90 948.49,260.09 948.42,259.27 948.35,258.46 948.28,257.64 948.21,256.83 948.14,256.01 948.07,255.20 948.00,254.38 947.92,253.57 947.85,252.75 947.77,251.94 947.69,251.12 947.62,250.31 947.54,249.49 947.46,248.68 947.38,247.86 947.30,247.05 947.22,246.23 947.13,245.42 947.05,244.60 946.96,243.79 946.88,242.97 946.79,242.16 946.71,241.34 946.62,240.53 946.53,239.71 946.44,238.90 946.35,238.08 946.26,237.27 946.17,236.45 946.07,235.64 945.98,234.82 945.88,234.01 945.79,233.19 945.69,232.38 945.60,231.56 945.50,230.75 945.40,229.94 945.30,229.12 945.20,228.30 945.10,227.49 945.00,226.67 944.89,225.86 944.79,225.04 944.68,224.23 944.58,223.41 944.47,222.60 944.37,221.78 944.26,220.97 944.15,220.15 944.04,219.34 943.93,218.52 943.82,217.71 943.71,216.89 943.60,216.08 943.48,215.26 943.37,214.45 943.25,213.63 943.14,212.82 943.02,212.00 942.90,211.19 942.79,210.38 942.67,209.56 942.55,208.75 942.43,207.93 942.31,207.11 942.19,206.30 942.06,205.48 941.94,204.67 941.82,203.85 941.69,203.04 941.56,202.22 941.44,201.41 941.31,200.59 941.18,199.78 941.06,198.96 940.93,198.15 940.80,197.33 940.67,196.52 940.53,195.70 940.40,194.89 940.27,194.07 940.13,193.26 940.00,192.44 939.87,191.63 939.73,190.81 939.59,190.00 939.46,189.18 939.32,188.37 939.18,187.55 939.04,186.74 938.90,185.92 938.76,185.11 938.62,184.29 938.48,183.48 938.33,182.66 938.19,181.85 938.04,181.03 937.90,180.22 937.75,179.40 937.61,178.59 937.46,177.77 937.31,176.96 937.16,176.14 937.02,175.33 936.87,174.51 936.72,173.70 936.57,172.88 936.41,172.07 936.26,171.25 936.11,170.44 935.95,169.62 935.80,168.81 935.65,167.99 935.49,167.18 935.33,166.36 935.18,165.55 935.02,164.73 934.86,163.92 934.70,163.10 934.54,162.29 934.38,161.47 934.22,160.66 934.06,159.84 933.90,159.03 933.74,158.21 933.58,157.40 933.41,156.58 933.25,155.77 933.08,154.95 932.92,154.14 932.75,153.32 932.59,152.51 932.42,151.69 932.25,150.88 932.08,150.06 931.92,149.25 931.75,148.44 931.58,147.62 931.41,146.80 931.24,145.99 931.06,145.17 930.89,144.36 930.72,143.54 930.55,142.73 930.37,141.91 930.20,141.10 930.02,140.28 929.85,139.47 929.67,138.66 929.50,137.84 929.32,137.02 929.14,136.21 928.96,135.39 928.79,134.58 928.61,133.76 928.43,132.95 928.25,132.13 928.07,131.32 927.89,130.50 927.70,129.69 927.52,128.88 927.34,128.06 927.16,127.24 926.97,126.43 926.79,125.61 926.61,124.80 926.42,123.98 926.24,123.17 926.05,122.35 925.87,121.54 925.68,120.72 925.49,119.91 925.30,119.09 925.12,118.28 924.93,117.47 924.74,116.65 924.55,115.83 924.36,115.02 924.17,114.20 923.98,113.39 923.79,112.57 923.60,111.76 923.41,110.94 923.21,110.13 923.02,109.31 922.83,108.50 922.64,107.69 922.44,106.87 922.25,106.05 922.05,105.24 921.86,104.42 921.66,103.61 921.47,102.79 921.27,101.98 921.08,101.16 920.88,100.35 920.68,99.53 920.49,98.72 920.29,97.91 920.09,97.09 919.89,96.28 919.69,95.46 919.49,94.64 919.29,93.83 919.10,93.01 918.90,92.20 918.69,91.38 918.49,90.57 918.29,89.75 918.09,88.94 917.89,88.12 917.69,87.31 917.49,86.50 917.28,85.68 917.08,84.86 916.88,84.05 916.68,83.23 916.47,82.42 916.27,81.60 916.06,80.79 915.86,79.97 915.65,79.16 915.45,78.34 915.24,77.53 915.04,76.72 914.83,75.90 914.63,75.08 914.42,74.27 914.22,73.45 914.01,72.64 913.80,71.82 913.60,71.01 913.39,70.19 913.18,69.38 912.97,68.56 912.77,67.75 912.56,66.94 912.35,66.12 912.14,65.31 911.93,64.49 911.72,63.68 911.51,62.86 911.30,62.05 911.10,61.23 910.89,60.42 910.68,59.60 910.47,58.78 910.26,57.97 910.05,57.15 909.84,56.34 909.63,55.52 909.42,54.71 909.20,53.89 908.99,53.08 908.78,52.26 908.57,51.45 908.36,50.63 908.15,49.82 907.94,49.00 907.73,48.19 907.51,47.38 907.30,46.56 907.09,45.75 906.88,44.93 906.67,44.12 906.45,43.30 906.24,42.49 906.03,41.67 905.82,40.86 905.61,40.04 905.39,39.23 905.18,38.41 904.97,37.59 904.75,36.78 904.54,35.96 904.33,35.15 904.12,34.33 903.90,33.52 903.69,32.70 903.48,31.89 903.26,31.07 903.05,30.26 902.84,29.44 902.63,28.63 902.41,27.81 902.20,27.00"/><polyline stroke-dashoffset="1.04" points="902.20,613.80 902.20,612.98 902.20,612.17 902.20,611.36 902.20,610.54 902.20,609.72 902.20,608.91 902.20,608.10 902.20,607.28 902.20,606.46 902.20,605.65 902.20,604.84 902.20,604.02 902.20,603.20 902.20,602.39 902.20,601.57 902.20,600.76 902.20,599.94 902.20,599.13 902.20,598.31 902.20,597.50 902.20,596.68 902.20,595.87 902.20,595.05 902.20,594.24 902.20,593.42 902.20,592.61 902.20,591.79 902.20,590.98 902.20,590.16 902.20,589.35 902.20,588.53 902.20,587.72 902.20,586.90 902.20,586.09 902.20,585.27 902.20,584.46 902.20,583.64 902.20,582.83 902.20,582.01 902.20,581.20 902.20,580.38 902.20,579.57 902.20,578.75 902.20,577.94 902.20,577.12 902.20,576.31 902.20,575.49 902.20,574.68 902.20,573.87 902.20,573.05 902.20,572.23 902.20,571.42 902.20,570.61 902.20,569.79 902.20,568.97 902.20,568.16 902.20,567.35 902.20,566.53 902.20,565.71 902.20,564.90 902.20,564.08 902.20,563.27 902.20,562.45 902.20,561.64 902.20,560.82 902.20,560.01 902.20,559.19 902.20,558.38 902.20,557.56 902.20,556.75 902.20,555.93 902.20,555.12 902.20,554.30 902.20,553.49 902.20,552.67 902.20,551.86 902.20,551.04 902.20,550.23 902.20,549.41 902.20,548.60 902.20,547.78 902.20,546.97 902.20,546.15 902.20,545.34 902.20,544.52 902.20,543.71 902.20,542.89 902.20,542.08 902.20,541.26 902.20,540.45 902.20,539.63 902.20,538.82 902.20,538.00 902.20,537.19 902.20,536.38 902.20,535.56 902.20,534.75 902.20,533.93 902.20,533.12 902.20,532.30 902.20,531.48 902.20,530.67 902.20,529.86 902.20,529.04 902.20,528.22 902.20,527.41 902.20,526.60 902.20,525.78 902.20,524.96 902.20,524.15 902.20,523.33 902.20,522.52 902.20,521.70 902.20,520.89 902.20,520.07 902.20,519.26 902.20,518.44 902.20,517.63 902.20,516.81 902.20,516.00 902.20,515.18 902.20,514.37 902.20,513.55 902.20,512.74 902.20,511.92 902.20,511.11 902.20,510.29 902.20,509.48 902.20,508.66 902.20,507.85 902.20,507.03 902.20,506.22 902.20,505.40 902.20,504.59 902.20,503.77 902.20,502.96 902.20,502.14 902.20,501.33 902.20,500.51 902.20,499.70 902.20,498.88 902.20,498.07 902.20,497.25 902.20,496.44 902.20,495.62 902.20,494.81 902.20,494.00 902.20,493.18 902.20,492.36 902.20,491.55 902.20,490.73 902.20,489.92 902.20,489.10 902.20,488.29 902.20,487.47 902.20,486.66 902.20,485.84 902.20,485.03 902.20,484.21 902.20,483.40 902.20,482.58 902.20,481.77 902.20,480.95 902.20,480.14 902.20,479.32 902.20,478.51 902.20,477.69 902.20,476.88 902.20,476.06 902.20,475.25 902.20,474.43 902.20,473.62 902.20,472.80 902.20,471.99 902.20,471.17 902.20,470.36 902.20,469.54 902.20,468.73 902.20,467.91 902.20,467.10 902.20,466.28 902.20,465.47 902.20,464.65 902.20,463.84 902.20,463.02 902.20,462.21 902.20,461.39 902.20,460.58 902.20,459.76 902.20,458.95 902.20,458.13 902.20,457.32 902.20,456.50 902.20,455.69 902.20,454.88 902.20,454.06 902.20,453.25 902.20,452.43 902.20,451.62 902.20,450.80 902.20,449.98 902.20,449.17 902.20,448.35 902.20,447.54 902.20,446.72 902.20,445.91 902.20,445.09 902.20,444.28 902.20,443.46 902.20,442.65 902.20,441.83 902.20,441.02 902.20,440.20 902.20,439.39 902.20,438.57 902.20,437.76 902.20,436.94 902.20,436.13 902.20,435.31 902.20,434.50 902.20,433.68 902.20,432.87 902.20,432.05 902.20,431.24 902.20,430.42 902.20,429.61 902.20,428.79 902.20,427.98 902.20,427.16 902.20,426.35 902.20,425.53 902.20,424.72 902.20,423.90 902.20,423.09 902.20,422.27 902.20,421.46 902.20,420.64 902.20,419.83 902.20,419.01 902.20,418.20 902.20,417.38 902.20,416.57 902.20,415.75 902.20,414.94 902.20,414.12 902.20,413.31 902.20,412.50 902.20,411.68 902.20,410.86 902.20,410.05 902.20,409.23 902.20,408.42 902.20,407.60 902.20,406.79 902.20,405.97 902.20,405.16 902.20,404.34 902.20,403.53 902.20,402.71 902.20,401.90 902.20,401.08 902.20,400.27 902.20,399.45 902.20,398.64 902.20,397.82 902.20,397.01 902.20,396.19 902.20,395.38 902.20,394.56 902.20,393.75 902.20,392.93 902.20,392.12 902.20,391.30 902.20,390.49 902.20,389.67 902.20,388.86 902.20,388.04 902.20,387.23 902.20,386.41 902.20,385.60 902.20,384.78 902.20,383.97 902.20,383.15 902.20,382.34 902.20,381.52 902.20,380.71 902.20,379.89 902.20,379.08 902.20,378.26 902.20,377.45 902.20,376.63 902.20,375.82 902.20,375.00 902.20,374.19 902.20,373.38 902.20,372.56 902.20,371.75 902.20,370.93 902.20,370.11 902.20,369.30 902.20,368.48 902.20,367.67 902.20,366.85 902.20,366.04 902.20,365.22 902.20,364.41 902.20,363.59 902.20,362.78 902.20,361.96 902.20,361.15 902.20,360.33 902.20,359.52 902.20,358.70 902.20,357.89 902.20,357.07 902.20,356.26 902.20,355.44 902.20,354.63 902.20,353.81 902.20,353.00 902.20,352.18 902.20,351.37 902.20,350.55 902.20,349.74 902.20,348.92 902.20,348.11 902.20,347.29 902.20,346.48 902.20,345.66 902.20,344.85 902.20,344.03 902.20,343.22 902.20,342.40 902.20,341.59 902.20,340.77 902.20,339.96 902.20,339.14 902.20,338.33 902.20,337.51 902.20,336.70 902.20,335.88 902.20,335.07 902.20,334.25 902.20,333.44 902.20,332.62 902.20,331.81 902.20,331.00 902.20,330.18 902.20,329.36 902.20,328.55 902.20,327.73 902.20,326.92 902.20,326.10 902.20,325.29 902.20,324.47 902.20,323.66 902.20,322.84 902.20,322.03 902.20,321.21 902.20,320.40 902.20,319.58 902.20,318.77 902.20,317.95 902.20,317.14 902.20,316.32 902.20,315.51 902.20,314.69 902.20,313.88 902.20,313.06 902.20,312.25 902.20,311.44 902.20,310.62 902.20,309.80 902.20,308.99 902.20,308.17 902.20,307.36 902.20,306.54 902.20,305.73 902.20,304.91 902.20,304.10 902.20,303.28 902.20,302.47 902.20,301.65 902.20,300.84 902.20,300.02 902.20,299.21 902.20,298.39 902.20,297.58 902.20,296.76 902.20,295.95 902.20,295.13 902.20,294.32 902.20,293.50 902.20,292.69 902.20,291.88 902.20,291.06 902.20,290.25 902.20,289.43 902.20,288.62 902.20,287.80 902.20,286.98 902.20,286.17 902.20,285.35 902.20,284.54 902.20,283.72 902.20,282.91 902.20,282.09 902.20,281.28 902.20,280.46 902.20,279.65 902.20,278.83 902.20,278.02 902.20,277.20 902.20,276.39 902.20,275.57 902.20,274.76 902.20,273.94 902.20,273.13 902.20,272.31 902.20,271.50 902.20,270.69 902.20,269.87 902.20,269.05 902.20,268.24 902.20,267.42 902.20,266.61 902.20,265.79 902.20,264.98 902.20,264.16 902.20,263.35 902.20,262.53 902.20,261.72 902.20,260.90 902.20,260.09 902.20,259.27 902.20,258.46 902.20,257.64 902.20,256.83 902.20,256.01 902.20,255.20 902.20,254.38 902.20,253.57 902.20,252.75 902.20,251.94 902.20,251.12 902.20,250.31 902.20,249.49 902.20,248.68 902.20,247.86 902.20,247.05 902.20,246.23 902.20,245.42 902.20,244.60 902.20,243.79 902.20,242.97 902.20,242.16 902.20,241.34 902.20,240.53 902.20,239.71 902.20,238.90 902.20,238.08 902.20,237.27 902.20,236.45 902.20,235.64 902.20,234.82 902.20,234.01 902.20,233.19 902.20,232.38 902.20,231.56 902.20,230.75 902.20,229.94 902.20,229.12 902.20,228.30 902.20,227.49 902.20,226.67 902.20,225.86 902.20,225.04 902.20,224.23 902.20,223.41 902.20,222.60 902.20,221.78 902.20,220.97 902.20,220.15 902.20,219.34 902.20,218.52 902.20,217.71 902.20,216.89 902.20,216.08 902.20,215.26 902.20,214.45 902.20,213.63 902.20,212.82 902.20,212.00 902.20,211.19 902.20,210.38 902.20,209.56 902.20,208.75 902.20,207.93 902.20,207.11 902.20,206.30 902.20,205.48 902.20,204.67 902.20,203.85 902.20,203.04 902.20,202.22 902.20,201.41 902.20,200.59 902.20,199.78 902.20,198.96 902.20,198.15 902.20,197.33 902.20,196.52 902.20,195.70 902.20,194.89 902.20,194.07 902.20,193.26 902.20,192.44 902.20,191.63 902.20,190.81 902.20,190.00 902.20,189.18 902.20,188.37 902.20,187.55 902.20,186.74 902.20,185.92 902.20,185.11 902.20,184.29 902.20,183.48 902.20,182.66 902.20,181.85 902.20,181.03 902.20,180.22 902.20,179.40 902.20,178.59 902.20,177.77 902.20,176.96 902.20,176.14 902.20,175.33 902.20,174.51 902.20,173.70 902.20,172.88 902.20,172.07 902.20,171.25 902.20,170.44 902.20,169.62 902.20,168.81 902.20,167.99 902.20,167.18 902.20,166.36 902.20,165.55 902.20,164.73 902.20,163.92 902.20,163.10 902.20,162.29 902.20,161.47 902.20,160.66 902.20,159.84 902.20,159.03 902.20,158.21 902.20,157.40 902.20,156.58 902.20,155.77 902.20,154.95 902.20,154.14 902.20,153.32 902.20,152.51 902.20,151.69 902.20,150.88 902.20,150.06 902.20,149.25 902.20,148.44 902.20,147.62 902.20,146.80 902.20,145.99 902.20,145.17 902.20,144.36 902.20,143.54 902.20,142.73 902.20,141.91 902.20,141.10 902.20,140.28 902.20,139.47 902.20,138.66 902.20,137.84 902.20,137.02 902.20,136.21 902.20,135.39 902.20,134.58 902.20,133.76 902.20,132.95 902.20,132.13 902.20,131.32 902.20,130.50 902.20,129.69 902.20,128.88 902.20,128.06 902.20,127.24 902.20,126.43 902.20,125.61 902.20,124.80 902.20,123.98 902.20,123.17 902.20,122.35 902.20,121.54 902.20,120.72 902.20,119.91 902.20,119.09 902.20,118.28 902.20,117.47 902.20,116.65 902.20,115.83 902.20,115.02 902.20,114.20 902.20,113.39 902.20,112.57 902.20,111.76 902.20,110.94 902.20,110.13 902.20,109.31 902.20,108.50 902.20,107.69 902.20,106.87 902.20,106.05 902.20,105.24 902.20,104.42 902.20,103.61 902.20,102.79 902.20,101.98 902.20,101.16 902.20,100.35 902.20,99.53 902.20,98.72 902.20,97.91 902.20,97.09 902.20,96.28 902.20,95.46 902.20,94.64 902.20,93.83 902.20,93.01 902.20,92.20 902.20,91.38 902.20,90.57 902.20,89.75 902.20,88.94 902.20,88.12 902.20,87.31 902.20,86.50 902.20,85.68 902.20,84.86 902.20,84.05 902.20,83.23 902.20,82.42 902.20,81.60 902.20,80.79 902.20,79.97 902.20,79.16 902.20,78.34 902.20,77.53 902.20,76.72 902.20,75.90 902.20,75.08 902.20,74.27 902.20,73.45 902.20,72.64 902.20,71.82 902.20,71.01 902.20,70.19 902.20,69.38 902.20,68.56 902.20,67.75 902.20,66.94 902.20,66.12 902.20,65.31 902.20,64.49 902.20,63.68 902.20,62.86 902.20,62.05 902.20,61.23 902.20,60.42 902.20,59.60 902.20,58.78 902.20,57.97 902.20,57.15 902.20,56.34 902.20,55.52 902.20,54.71 902.20,53.89 902.20,53.08 902.20,52.26 902.20,51.45 902.20,50.63 902.20,49.82 902.20,49.00 902.20,48.19 902.20,47.38 902.20,46.56 902.20,45.75 902.20,44.93 902.20,44.12 902.20,43.30 902.20,42.49 902.20,41.67 902.20,40.86 902.20,40.04 902.20,39.23 902.20,38.41 902.20,37.59 902.20,36.78 902.20,35.96 902.20,35.15 902.20,34.33 902.20,33.52 902.20,32.70 902.20,31.89 902.20,31.07 902.20,30.26 902.20,29.44 902.20,28.63 902.20,27.81 902.20,27.00"/><polyline stroke-dashoffset="1.04" points="902.20,613.80 901.99,612.98 901.77,612.17 901.56,611.36 901.35,610.54 901.14,609.72 900.92,608.91 900.71,608.10 900.50,607.28 900.28,606.46 900.07,605.65 899.86,604.84 899.65,604.02 899.43,603.20 899.22,602.39 899.01,601.57 898.79,600.76 898.58,599.94 898.37,599.13 898.16,598.31 897.95,597.50 897.73,596.68 897.52,595.87 897.31,595.05 897.10,594.24 896.89,593.42 896.67,592.61 896.46,591.79 896.25,590.98 896.04,590.16 895.83,589.35 895.62,588.53 895.41,587.72 895.20,586.90 894.98,586.09 894.77,585.27 894.56,584.46 894.35,583.64 894.14,582.83 893.93,582.01 893.72,581.20 893.51,580.38 893.30,579.57 893.10,578.75 892.89,577.94 892.68,577.12 892.47,576.31 892.26,575.49 892.05,574.68 891.84,573.87 891.63,573.05 891.43,572.23 891.22,571.42 891.01,570.61 890.80,569.79 890.60,568.97 890.39,568.16 890.18,567.35 889.98,566.53 889.77,565.71 889.57,564.90 889.36,564.08 889.16,563.27 888.95,562.45 888.75,561.64 888.54,560.82 888.34,560.01 888.13,559.19 887.93,558.38 887.72,557.56 887.52,556.75 887.32,555.93 887.12,555.12 886.91,554.30 886.71,553.49 886.51,552.67 886.31,551.86 886.11,551.04 885.91,550.23 885.71,549.41 885.50,548.60 885.30,547.78 885.11,546.97 884.91,546.15 884.71,545.34 884.51,544.52 884.31,543.71 884.11,542.89 883.91,542.08 883.72,541.26 883.52,540.45 883.32,539.63 883.13,538.82 882.93,538.00 882.74,537.19 882.54,536.38 882.35,535.56 882.15,534.75 881.96,533.93 881.76,533.12 881.57,532.30 881.38,531.48 881.19,530.67 880.99,529.86 880.80,529.04 880.61,528.22 880.42,527.41 880.23,526.60 880.04,525.78 879.85,524.96 879.66,524.15 879.47,523.33 879.28,522.52 879.10,521.70 878.91,520.89 878.72,520.07 878.53,519.26 878.35,518.44 878.16,517.63 877.98,516.81 877.79,516.00 877.61,515.18 877.43,514.37 877.24,513.55 877.06,512.74 876.88,511.92 876.70,511.11 876.51,510.29 876.33,509.48 876.15,508.66 875.97,507.85 875.79,507.03 875.61,506.22 875.44,505.40 875.26,504.59 875.08,503.77 874.90,502.96 874.73,502.14 874.55,501.33 874.38,500.51 874.20,499.70 874.03,498.88 873.85,498.07 873.68,497.25 873.51,496.44 873.34,495.62 873.16,494.81 872.99,494.00 872.82,493.18 872.65,492.36 872.48,491.55 872.32,490.73 872.15,489.92 871.98,489.10 871.81,488.29 871.65,487.47 871.48,486.66 871.32,485.84 871.15,485.03 870.99,484.21 870.82,483.40 870.66,482.58 870.50,481.77 870.34,480.95 870.18,480.14 870.02,479.32 869.86,478.51 869.70,477.69 869.54,476.88 869.38,476.06 869.22,475.25 869.07,474.43 868.91,473.62 868.75,472.80 868.60,471.99 868.45,471.17 868.29,470.36 868.14,469.54 867.99,468.73 867.83,467.91 867.68,467.10 867.53,466.28 867.38,465.47 867.24,464.65 867.09,463.84 866.94,463.02 866.79,462.21 866.65,461.39 866.50,460.58 866.36,459.76 866.21,458.95 866.07,458.13 865.92,457.32 865.78,456.50 865.64,455.69 865.50,454.88 865.36,454.06 865.22,453.25 865.08,452.43 864.94,451.62 864.81,450.80 864.67,449.98 864.53,449.17 864.40,448.35 864.27,447.54 864.13,446.72 864.00,445.91 863.87,445.09 863.73,444.28 863.60,443.46 863.47,442.65 863.34,441.83 863.22,441.02 863.09,440.20 862.96,439.39 862.84,438.57 862.71,437.76 862.58,436.94 862.46,436.13 862.34,435.31 862.21,434.50 862.09,433.68 861.97,432.87 861.85,432.05 861.73,431.24 861.61,430.42 861.50,429.61 861.38,428.79 861.26,427.98 861.15,427.16 861.03,426.35 860.92,425.53 860.80,424.72 860.69,423.90 860.58,423.09 860.47,422.27 860.36,421.46 860.25,420.64 860.14,419.83 860.03,419.01 859.93,418.20 859.82,417.38 859.72,416.57 859.61,415.75 859.51,414.94 859.40,414.12 859.30,413.31 859.20,412.50 859.10,411.68 859.00,410.86 858.90,410.05 858.80,409.23 858.71,408.42 858.61,407.60 858.52,406.79 858.42,405.97 858.33,405.16 858.23,404.34 858.14,403.53 858.05,402.71 857.96,401.90 857.87,401.08 857.78,400.27 857.69,399.45 857.61,398.64 857.52,397.82 857.44,397.01 857.35,396.19 857.27,395.38 857.18,394.56 857.10,393.75 857.02,392.93 856.94,392.12 856.86,391.30 856.78,390.49 856.71,389.67 856.63,388.86 856.55,388.04 856.48,387.23 856.40,386.41 856.33,385.60 856.26,384.78 856.19,383.97 856.12,383.15 856.05,382.34 855.98,381.52 855.91,380.71 855.84,379.89 855.78,379.08 855.71,378.26 855.65,377.45 855.58,376.63 855.52,375.82 855.46,375.00 855.40,374.19 855.34,373.38 855.28,372.56 855.22,371.75 855.16,370.93 855.11,370.11 855.05,369.30 855.00,368.48 854.94,367.67 854.89,366.85 854.84,366.04 854.79,365.22 854.74,364.41 854.69,363.59 854.64,362.78 854.59,361.96 854.54,361.15 854.50,360.33 854.45,359.52 854.41,358.70 854.37,357.89 854.32,357.07 854.28,356.26 854.24,355.44 854.20,354.63 854.17,353.81 854.13,353.00 854.09,352.18 854.06,351.37 854.02,350.55 853.99,349.74 853.96,348.92 853.92,348.11 853.89,347.29 853.86,346.48 853.83,345.66 853.80,344.85 853.78,344.03 853.75,343.22 853.73,342.40 853.70,341.59 853.68,340.77 853.65,339.96 853.63,339.14 853.61,338.33 853.59,337.51 853.57,336.70 853.55,335.88 853.54,335.07 853.52,334.25 853.51,333.44 853.49,332.62 853.48,331.81 853.47,331.00 853.45,330.18 853.44,329.36 853.43,328.55 853.42,327.73 853.42,326.92 853.41,326.10 853.40,325.29 853.40,324.47 853.39,323.66 853.39,322.84 853.39,322.03 853.39,321.21 853.39,320.40 853.39,319.58 853.39,318.77 853.39,317.95 853.39,317.14 853.40,316.32 853.40,315.51 853.41,314.69 853.42,313.88 853.42,313.06 853.43,312.25 853.44,311.44 853.45,310.62 853.47,309.80 853.48,308.99 853.49,308.17 853.51,307.36 853.52,306.54 853.54,305.73 853.55,304.91 853.57,304.10 853.59,303.28 853.61,302.47 853.63,301.65 853.65,300.84 853.68,300.02 853.70,299.21 853.73,298.39 853.75,297.58 853.78,296.76 853.80,295.95 853.83,295.13 853.86,294.32 853.89,293.50 853.92,292.69 853.96,291.88 853.99,291.06 854.02,290.25 854.06,289.43 854.09,288.62 854.13,287.80 854.17,286.98 854.20,286.17 854.24,285.35 854.28,284.54 854.32,283.72 854.37,282.91 854.41,282.09 854.45,281.28 854.50,280.46 854.54,279.65 854.59,278.83 854.64,278.02 854.69,277.20 854.74,276.39 854.79,275.57 854.84,274.76 854.89,273.94 854.94,273.13 855.00,272.31 855.05,271.50 855.11,270.69 855.16,269.87 855.22,269.05 855.28,268.24 855.34,267.42 855.40,266.61 855.46,265.79 855.52,264.98 855.58,264.16 855.65,263.35 855.71,262.53 855.78,261.72 855.84,260.90 855.91,260.09 855.98,259.27 856.05,258.46 856.12,257.64 856.19,256.83 856.26,256.01 856.33,255.20 856.40,254.38 856.48,253.57 856.55,252.75 856.63,251.94 856.71,251.12 856.78,250.31 856.86,249.49 856.94,248.68 857.02,247.86 857.10,247.05 857.18,246.23 857.27,245.42 857.35,244.60 857.44,243.79 857.52,242.97 857.61,242.16 857.69,241.34 857.78,240.53 857.87,239.71 857.96,238.90 858.05,238.08 858.14,237.27 858.23,236.45 858.33,235.64 858.42,234.82 858.52,234.01 858.61,233.19 858.71,232.38 858.80,231.56 858.90,230.75 859.00,229.94 859.10,229.12 859.20,228.30 859.30,227.49 859.40,226.67 859.51,225.86 859.61,225.04 859.72,224.23 859.82,223.41 859.93,222.60 860.03,221.78 860.14,220.97 860.25,220.15 860.36,219.34 860.47,218.52 860.58,217.71 860.69,216.89 860.80,216.08 860.92,215.26 861.03,214.45 861.15,213.63 861.26,212.82 861.38,212.00 861.50,211.19 861.61,210.38 861.73,209.56 861.85,208.75 861.97,207.93 862.09,207.11 862.21,206.30 862.34,205.48 862.46,204.67 862.58,203.85 862.71,203.04 862.84,202.22 862.96,201.41 863.09,200.59 863.22,199.78 863.34,198.96 863.47,198.15 863.60,197.33 863.73,196.52 863.87,195.70 864.00,194.89 864.13,194.07 864.27,193.26 864.40,192.44 864.53,191.63 864.67,190.81 864.81,190.00 864.94,189.18 865.08,188.37 865.22,187.55 865.36,186.74 865.50,185.92 865.64,185.11 865.78,184.29 865.92,183.48 866.07,182.66 866.21,181.85 866.36,181.03 866.50,180.22 866.65,179.40 866.79,178.59 866.94,177.77 867.09,176.96 867.24,176.14 867.38,175.33 867.53,174.51 867.68,173.70 867.83,172.88 867.99,172.07 868.14,171.25 868.29,170.44 868.45,169.62 868.60,168.81 868.75,167.99 868.91,167.18 869.07,166.36 869.22,165.55 869.38,164.73 869.54,163.92 869.70,163.10 869.86,162.29 870.02,161.47 870.18,160.66 870.34,159.84 870.50,159.03 870.66,158.21 870.82,157.40 870.99,156.58 871.15,155.77 871.32,154.95 871.48,154.14 871.65,153.32 871.81,152.51 871.98,151.69 872.15,150.88 872.32,150.06 872.48,149.25 872.65,148.44 872.82,147.62 872.99,146.80 873.16,145.99 873.34,145.17 873.51,144.36 873.68,143.54 873.85,142.73 874.03,141.91 874.20,141.10 874.38,140.28 874.55,139.47 874.73,138.66 874.90,137.84 875.08,137.02 875.26,136.21 875.44,135.39 875.61,134.58 875.79,133.76 875.97,132.95 876.15,132.13 876.33,131.32 876.51,130.50 876.70,129.69 876.88,128.88 877.06,128.06 877.24,127.24 877.43,126.43 877.61,125.61 877.79,124.80 877.98,123.98 878.16,123.17 878.35,122.35 878.53,121.54 878.72,120.72 878.91,119.91 879.10,119.09 879.28,118.28 879.47,117.47 879.66,116.65 879.85,115.83 880.04,115.02 880.23,114.20 880.42,113.39 880.61,112.57 880.80,111.76 880.99,110.94 881.19,110.13 881.38,109.31 881.57,108.50 881.76,107.69 881.96,106.87 882.15,106.05 882.35,105.24 882.54,104.42 882.74,103.61 882.93,102.79 883.13,101.98 883.32,101.16 883.52,100.35 883.72,99.53 883.91,98.72 884.11,97.91 884.31,97.09 884.51,96.28 884.71,95.46 884.91,94.64 885.11,93.83 885.30,93.01 885.50,92.20 885.71,91.38 885.91,90.57 886.11,89.75 886.31,88.94 886.51,88.12 886.71,87.31 886.91,86.50 887.12,85.68 887.32,84.86 887.52,84.05 887.72,83.23 887.93,82.42 888.13,81.60 888.34,80.79 888.54,79.97 888.75,79.16 888.95,78.34 889.16,77.53 889.36,76.72 889.57,75.90 889.77,75.08 889.98,74.27 890.18,73.45 890.39,72.64 890.60,71.82 890.80,71.01 891.01,70.19 891.22,69.38 891.43,68.56 891.63,67.75 891.84,66.94 892.05,66.12 892.26,65.31 892.47,64.49 892.68,63.68 892.89,62.86 893.10,62.05 893.30,61.23 893.51,60.42 893.72,59.60 893.93,58.78 894.14,57.97 894.35,57.15 894.56,56.34 894.77,55.52 894.98,54.71 895.20,53.89 895.41,53.08 895.62,52.26 895.83,51.45 896.04,50.63 896.25,49.82 896.46,49.00 896.67,48.19 896.89,47.38 897.10,46.56 897.31,45.75 897.52,44.93 897.73,44.12 897.95,43.30 898.16,42.49 898.37,41.67 898.58,40.86 898.79,40.04 899.01,39.23 899.22,38.41 899.43,37.59 899.65,36.78 899.86,35.96 900.07,35.15 900.28,34.33 900.50,33.52 900.71,32.70 900.92,31.89 901.14,31.07 901.35,30.26 901.56,29.44 901.77,28.63 901.99,27.81 902.20,27.00"/><polyline stroke-dashoffset="1.04" points="902.20,613.80 901.77,612.98 901.35,612.17 900.92,611.36 900.50,610.54 900.07,609.72 899.64,608.91 899.22,608.10 898.79,607.28 898.37,606.46 897.94,605.65 897.52,604.84 897.09,604.02 896.67,603.20 896.24,602.39 895.81,601.57 895.39,600.76 894.97,599.94 894.54,599.13 894.12,598.31 893.69,597.50 893.27,596.68 892.84,595.87 892.42,595.05 892.00,594.24 891.57,593.42 891.15,592.61 890.73,591.79 890.30,590.98 889.88,590.16 889.46,589.35 889.04,588.53 888.61,587.72 888.19,586.90 887.77,586.09 887.35,585.27 886.93,584.46 886.51,583.64 886.09,582.83 885.67,582.01 885.25,581.20 884.83,580.38 884.41,579.57 883.99,578.75 883.57,577.94 883.15,577.12 882.74,576.31 882.32,575.49 881.90,574.68 881.49,573.87 881.07,573.05 880.65,572.23 880.24,571.42 879.82,570.61 879.41,569.79 879.00,568.97 878.58,568.16 878.17,567.35 877.76,566.53 877.34,565.71 876.93,564.90 876.52,564.08 876.11,563.27 875.70,562.45 875.29,561.64 874.88,560.82 874.47,560.01 874.06,559.19 873.66,558.38 873.25,557.56 872.84,556.75 872.44,555.93 872.03,555.12 871.63,554.30 871.22,553.49 870.82,552.67 870.42,551.86 870.01,551.04 869.61,550.23 869.21,549.41 868.81,548.60 868.41,547.78 868.01,546.97 867.61,546.15 867.21,545.34 866.82,544.52 866.42,543.71 866.02,542.89 865.63,542.08 865.23,541.26 864.84,540.45 864.45,539.63 864.05,538.82 863.66,538.00 863.27,537.19 862.88,536.38 862.49,535.56 862.10,534.75 861.72,533.93 861.33,533.12 860.94,532.30 860.56,531.48 860.17,530.67 859.79,529.86 859.40,529.04 859.02,528.22 858.64,527.41 858.26,526.60 857.88,525.78 857.50,524.96 857.12,524.15 856.74,523.33 856.37,522.52 855.99,521.70 855.62,520.89 855.24,520.07 854.87,519.26 854.50,518.44 854.13,517.63 853.76,516.81 853.39,516.00 853.02,515.18 852.65,514.37 852.28,513.55 851.92,512.74 851.55,511.92 851.19,511.11 850.83,510.29 850.47,509.48 850.11,508.66 849.75,507.85 849.39,507.03 849.03,506.22 848.67,505.40 848.32,504.59 847.96,503.77 847.61,502.96 847.26,502.14 846.90,501.33 846.55,500.51 846.20,499.70 845.86,498.88 845.51,498.07 845.16,497.25 844.82,496.44 844.47,495.62 844.13,494.81 843.79,494.00 843.45,493.18 843.11,492.36 842.77,491.55 842.43,490.73 842.10,489.92 841.76,489.10 841.43,488.29 841.09,487.47 840.76,486.66 840.43,485.84 840.10,485.03 839.77,484.21 839.45,483.40 839.12,482.58 838.80,481.77 838.47,480.95 838.15,480.14 837.83,479.32 837.51,478.51 837.19,477.69 836.88,476.88 836.56,476.06 836.24,475.25 835.93,474.43 835.62,473.62 835.31,472.80 835.00,471.99 834.69,471.17 834.38,470.36 834.08,469.54 833.77,468.73 833.47,467.91 833.17,467.10 832.87,466.28 832.57,465.47 832.27,464.65 831.97,463.84 831.68,463.02 831.38,462.21 831.09,461.39 830.80,460.58 830.51,459.76 830.22,458.95 829.94,458.13 829.65,457.32 829.37,456.50 829.08,455.69 828.80,454.88 828.52,454.06 828.24,453.25 827.96,452.43 827.69,451.62 827.41,450.80 827.14,449.98 826.87,449.17 826.60,448.35 826.33,447.54 826.06,446.72 825.80,445.91 825.53,445.09 825.27,444.28 825.01,443.46 824.75,442.65 824.49,441.83 824.23,441.02 823.98,440.20 823.72,439.39 823.47,438.57 823.22,437.76 822.97,436.94 822.72,436.13 822.47,435.31 822.23,434.50 821.99,433.68 821.74,432.87 821.50,432.05 821.26,431.24 821.03,430.42 820.79,429.61 820.56,428.79 820.32,427.98 820.09,427.16 819.86,426.35 819.63,425.53 819.41,424.72 819.18,423.90 818.96,423.09 818.74,422.27 818.52,421.46 818.30,420.64 818.08,419.83 817.87,419.01 817.65,418.20 817.44,417.38 817.23,416.57 817.02,415.75 816.81,414.94 816.61,414.12 816.40,413.31 816.20,412.50 816.00,411.68 815.80,410.86 815.60,410.05 815.41,409.23 815.21,408.42 815.02,407.60 814.83,406.79 814.64,405.97 814.45,405.16 814.27,404.34 814.08,403.53 813.90,402.71 813.72,401.90 813.54,401.08 813.36,400.27 813.19,399.45 813.01,398.64 812.84,397.82 812.67,397.01 812.50,396.19 812.33,395.38 812.17,394.56 812.01,393.75 811.84,392.93 811.68,392.12 811.52,391.30 811.37,390.49 811.21,389.67 811.06,388.86 810.91,388.04 810.76,387.23 810.61,386.41 810.46,385.60 810.32,384.78 810.17,383.97 810.03,383.15 809.89,382.34 809.75,381.52 809.62,380.71 809.48,379.89 809.35,379.08 809.22,378.26 809.09,377.45 808.97,376.63 808.84,375.82 808.72,375.00 808.59,374.19 808.47,373.38 808.36,372.56 808.24,371.75 808.12,370.93 808.01,370.11 807.90,369.30 807.79,368.48 807.68,367.67 807.58,366.85 807.47,366.04 807.37,365.22 807.27,364.41 807.17,363.59 807.08,362.78 806.98,361.96 806.89,361.15 806.80,360.33 806.71,359.52 806.62,358.70 806.53,357.89 806.45,357.07 806.37,356.26 806.29,355.44 806.21,354.63 806.13,353.81 806.06,353.00 805.98,352.18 805.91,351.37 805.84,350.55 805.78,349.74 805.71,348.92 805.65,348.11 805.58,347.29 805.52,346.48 805.47,345.66 805.41,344.85 805.35,344.03 805.30,343.22 805.25,342.40 805.20,341.59 805.15,340.77 805.11,339.96 805.07,339.14 805.02,338.33 804.98,337.51 804.95,336.70 804.91,335.88 804.87,335.07 804.84,334.25 804.81,333.44 804.78,332.62 804.76,331.81 804.73,331.00 804.71,330.18 804.69,329.36 804.67,328.55 804.65,327.73 804.63,326.92 804.62,326.10 804.61,325.29 804.60,324.47 804.59,323.66 804.58,322.84 804.58,322.03 804.57,321.21 804.57,320.40 804.57,319.58 804.58,318.77 804.58,317.95 804.59,317.14 804.60,316.32 804.61,315.51 804.62,314.69 804.63,313.88 804.65,313.06 804.67,312.25 804.69,311.44 804.71,310.62 804.73,309.80 804.76,308.99 804.78,308.17 804.81,307.36 804.84,306.54 804.87,305.73 804.91,304.91 804.95,304.10 804.98,303.28 805.02,302.47 805.07,301.65 805.11,300.84 805.15,300.02 805.20,299.21 805.25,298.39 805.30,297.58 805.35,296.76 805.41,295.95 805.47,295.13 805.52,294.32 805.58,293.50 805.65,292.69 805.71,291.88 805.78,291.06 805.84,290.25 805.91,289.43 805.98,288.62 806.06,287.80 806.13,286.98 806.21,286.17 806.29,285.35 806.37,284.54 806.45,283.72 806.53,282.91 806.62,282.09 806.71,281.28 806.80,280.46 806.89,279.65 806.98,278.83 807.08,278.02 807.17,277.20 807.27,276.39 807.37,275.57 807.47,274.76 807.58,273.94 807.68,273.13 807.79,272.31 807.90,271.50 808.01,270.69 808.12,269.87 808.24,269.05 808.36,268.24 808.47,267.42 808.59,266.61 808.72,265.79 808.84,264.98 808.97,264.16 809.09,263.35 809.22,262.53 809.35,261.72 809.48,260.90 809.62,260.09 809.75,259.27 809.89,258.46 810.03,257.64 810.17,256.83 810.32,256.01 810.46,255.20 810.61,254.38 810.76,253.57 810.91,252.75 811.06,251.94 811.21,251.12 811.37,250.31 811.52,249.49 811.68,248.68 811.84,247.86 812.01,247.05 812.17,246.23 812.33,245.42 812.50,244.60 812.67,243.79 812.84,242.97 813.01,242.16 813.19,241.34 813.36,240.53 813.54,239.71 813.72,238.90 813.90,238.08 814.08,237.27 814.27,236.45 814.45,235.64 814.64,234.82 814.83,234.01 815.02,233.19 815.21,232.38 815.41,231.56 815.60,230.75 815.80,229.94 816.00,229.12 816.20,228.30 816.40,227.49 816.61,226.67 816.81,225.86 817.02,225.04 817.23,224.23 817.44,223.41 817.65,222.60 817.87,221.78 818.08,220.97 818.30,220.15 818.52,219.34 818.74,218.52 818.96,217.71 819.18,216.89 819.41,216.08 819.63,215.26 819.86,214.45 820.09,213.63 820.32,212.82 820.56,212.00 820.79,211.19 821.03,210.38 821.26,209.56 821.50,208.75 821.74,207.93 821.99,207.11 822.23,206.30 822.47,205.48 822.72,204.67 822.97,203.85 823.22,203.04 823.47,202.22 823.72,201.41 823.98,200.59 824.23,199.78 824.49,198.96 824.75,198.15 825.01,197.33 825.27,196.52 825.53,195.70 825.80,194.89 826.06,194.07 826.33,193.26 826.60,192.44 826.87,191.63 827.14,190.81 827.41,190.00 827.69,189.18 827.96,188.37 828.24,187.55 828.52,186.74 828.80,185.92 829.08,185.11 829.37,184.29 829.65,183.48 829.94,182.66 830.22,181.85 830.51,181.03 830.80,180.22 831.09,179.40 831.38,178.59 831.68,177.77 831.97,176.96 832.27,176.14 832.57,175.33 832.87,174.51 833.17,173.70 833.47,172.88 833.77,172.07 834.08,171.25 834.38,170.44 834.69,169.62 835.00,168.81 835.31,167.99 835.62,167.18 835.93,166.36 836.24,165.55 836.56,164.73 836.88,163.92 837.19,163.10 837.51,162.29 837.83,161.47 838.15,160.66 838.47,159.84 838.80,159.03 839.12,158.21 839.45,157.40 839.77,156.58 840.10,155.77 840.43,154.95 840.76,154.14 841.09,153.32 841.43,152.51 841.76,151.69 842.10,150.88 842.43,150.06 842.77,149.25 843.11,148.44 843.45,147.62 843.79,146.80 844.13,145.99 844.47,145.17 844.82,144.36 845.16,143.54 845.51,142.73 845.86,141.91 846.20,141.10 846.55,140.28 846.90,139.47 847.26,138.66 847.61,137.84 847.96,137.02 848.32,136.21 848.67,135.39 849.03,134.58 849.39,133.76 849.75,132.95 850.11,132.13 850.47,131.32 850.83,130.50 851.19,129.69 851.55,128.88 851.92,128.06 852.28,127.24 852.65,126.43 853.02,125.61 853.39,124.80 853.76,123.98 854.13,123.17 854.50,122.35 854.87,121.54 855.24,120.72 855.62,119.91 855.99,119.09 856.37,118.28 856.74,117.47 857.12,116.65 857.50,115.83 857.88,115.02 858.26,114.20 858.64,113.39 859.02,112.57 859.40,111.76 859.79,110.94 860.17,110.13 860.56,109.31 860.94,108.50 861.33,107.69 861.72,106.87 862.10,106.05 862.49,105.24 862.88,104.42 863.27,103.61 863.66,102.79 864.05,101.98 864.45,101.16 864.84,100.35 865.23,99.53 865.63,98.72 866.02,97.91 866.42,97.09 866.82,96.28 867.21,95.46 867.61,94.64 868.01,93.83 868.41,93.01 868.81,92.20 869.21,91.38 869.61,90.57 870.01,89.75 870.42,88.94 870.82,88.12 871.22,87.31 871.63,86.50 872.03,85.68 872.44,84.86 872.84,84.05 873.25,83.23 873.66,82.42 874.06,81.60 874.47,80.79 874.88,79.97 875.29,79.16 875.70,78.34 876.11,77.53 876.52,76.72 876.93,75.90 877.34,75.08 877.76,74.27 878.17,73.45 878.58,72.64 879.00,71.82 879.41,71.01 879.82,70.19 880.24,69.38 880.65,68.56 881.07,67.75 881.49,66.94 881.90,66.12 882.32,65.31 882.74,64.49 883.15,63.68 883.57,62.86 883.99,62.05 884.41,61.23 884.83,60.42 885.25,59.60 885.67,58.78 886.09,57.97 886.51,57.15 886.93,56.34 887.35,55.52 887.77,54.71 888.19,53.89 888.61,53.08 889.04,52.26 889.46,51.45 889.88,50.63 890.30,49.82 890.73,49.00 891.15,48.19 891.57,47.38 892.00,46.56 892.42,45.75 892.84,44.93 893.27,44.12 893.69,43.30 894.12,42.49 894.54,41.67 894.97,40.86 895.39,40.04 895.81,39.23 896.24,38.41 896.67,37.59 897.09,36.78 897.52,35.96 897.94,35.15 898.37,34.33 898.79,33.52 899.22,32.70 899.64,31.89 900.07,31.07 900.50,30.26 900.92,29.44 901.35,28.63 901.77,27.81 902.20,27.00"/><polyline stroke-dashoffset="1.04" points="902.20,613.80 901.56,612.98 900.92,612.17 900.28,611.36 899.64,610.54 899.01,609.72 898.37,608.91 897.73,608.10 897.09,607.28 896.45,606.46 895.81,605.65 895.17,604.84 894.54,604.02 893.90,603.20 893.26,602.39 892.62,601.57 891.98,600.76 891.35,599.94 890.71,599.13 890.07,598.31 889.44,597.50 888.80,596.68 888.16,595.87 887.53,595.05 886.89,594.24 886.26,593.42 885.62,592.61 884.99,591.79 884.35,590.98 883.72,590.16 883.09,589.35 882.45,588.53 881.82,587.72 881.19,586.90 880.55,586.09 879.92,585.27 879.29,584.46 878.66,583.64 878.03,582.83 877.40,582.01 876.77,581.20 876.14,580.38 875.51,579.57 874.89,578.75 874.26,577.94 873.63,577.12 873.00,576.31 872.38,575.49 871.75,574.68 871.13,573.87 870.50,573.05 869.88,572.23 869.26,571.42 868.64,570.61 868.01,569.79 867.39,568.97 866.77,568.16 866.15,567.35 865.53,566.53 864.92,565.71 864.30,564.90 863.68,564.08 863.07,563.27 862.45,562.45 861.84,561.64 861.22,560.82 860.61,560.01 860.00,559.19 859.39,558.38 858.77,557.56 858.16,556.75 857.56,555.93 856.95,555.12 856.34,554.30 855.73,553.49 855.13,552.67 854.52,551.86 853.92,551.04 853.32,550.23 852.72,549.41 852.11,548.60 851.51,547.78 850.92,546.97 850.32,546.15 849.72,545.34 849.12,544.52 848.53,543.71 847.94,542.89 847.34,542.08 846.75,541.26 846.16,540.45 845.57,539.63 844.98,538.82 844.39,538.00 843.81,537.19 843.22,536.38 842.64,535.56 842.05,534.75 841.47,533.93 840.89,533.12 840.31,532.30 839.73,531.48 839.16,530.67 838.58,529.86 838.01,529.04 837.43,528.22 836.86,527.41 836.29,526.60 835.72,525.78 835.15,524.96 834.58,524.15 834.02,523.33 833.45,522.52 832.89,521.70 832.33,520.89 831.76,520.07 831.20,519.26 830.65,518.44 830.09,517.63 829.53,516.81 828.98,516.00 828.43,515.18 827.88,514.37 827.33,513.55 826.78,512.74 826.23,511.92 825.69,511.11 825.14,510.29 824.60,509.48 824.06,508.66 823.52,507.85 822.98,507.03 822.44,506.22 821.91,505.40 821.37,504.59 820.84,503.77 820.31,502.96 819.78,502.14 819.26,501.33 818.73,500.51 818.21,499.70 817.68,498.88 817.16,498.07 816.64,497.25 816.13,496.44 815.61,495.62 815.09,494.81 814.58,494.00 814.07,493.18 813.56,492.36 813.05,491.55 812.55,490.73 812.04,489.92 811.54,489.10 811.04,488.29 810.54,487.47 810.04,486.66 809.55,485.84 809.05,485.03 808.56,484.21 808.07,483.40 807.58,482.58 807.10,481.77 806.61,480.95 806.13,480.14 805.65,479.32 805.17,478.51 804.69,477.69 804.21,476.88 803.74,476.06 803.27,475.25 802.80,474.43 802.33,473.62 801.86,472.80 801.40,471.99 800.94,471.17 800.47,470.36 800.02,469.54 799.56,468.73 799.10,467.91 798.65,467.10 798.20,466.28 797.75,465.47 797.31,464.65 796.86,463.84 796.42,463.02 795.98,462.21 795.54,461.39 795.10,460.58 794.67,459.76 794.23,458.95 793.80,458.13 793.37,457.32 792.95,456.50 792.52,455.69 792.10,454.88 791.68,454.06 791.26,453.25 790.85,452.43 790.43,451.62 790.02,450.80 789.61,449.98 789.20,449.17 788.80,448.35 788.40,447.54 787.99,446.72 787.60,445.91 787.20,445.09 786.80,444.28 786.41,443.46 786.02,442.65 785.63,441.83 785.25,441.02 784.87,440.20 784.48,439.39 784.11,438.57 783.73,437.76 783.35,436.94 782.98,436.13 782.61,435.31 782.24,434.50 781.88,433.68 781.52,432.87 781.16,432.05 780.80,431.24 780.44,430.42 780.09,429.61 779.74,428.79 779.39,427.98 779.04,427.16 778.69,426.35 778.35,425.53 778.01,424.72 777.68,423.90 777.34,423.09 777.01,422.27 776.68,421.46 776.35,420.64 776.02,419.83 775.70,419.01 775.38,418.20 775.06,417.38 774.75,416.57 774.43,415.75 774.12,414.94 773.81,414.12 773.51,413.31 773.20,412.50 772.90,411.68 772.60,410.86 772.31,410.05 772.01,409.23 771.72,408.42 771.43,407.60 771.15,406.79 770.86,405.97 770.58,405.16 770.30,404.34 770.03,403.53 769.75,402.71 769.48,401.90 769.21,401.08 768.95,400.27 768.68,399.45 768.42,398.64 768.16,397.82 767.91,397.01 767.65,396.19 767.40,395.38 767.15,394.56 766.91,393.75 766.66,392.93 766.42,392.12 766.19,391.30 765.95,390.49 765.72,389.67 765.49,388.86 765.26,388.04 765.03,387.23 764.81,386.41 764.59,385.60 764.38,384.78 764.16,383.97 763.95,383.15 763.74,382.34 763.53,381.52 763.33,380.71 763.13,379.89 762.93,379.08 762.73,378.26 762.54,377.45 762.35,376.63 762.16,375.82 761.97,375.00 761.79,374.19 761.61,373.38 761.43,372.56 761.26,371.75 761.09,370.93 760.92,370.11 760.75,369.30 760.59,368.48 760.43,367.67 760.27,366.85 760.11,366.04 759.96,365.22 759.81,364.41 759.66,363.59 759.51,362.78 759.37,361.96 759.23,361.15 759.10,360.33 758.96,359.52 758.83,358.70 758.70,357.89 758.57,357.07 758.45,356.26 758.33,355.44 758.21,354.63 758.10,353.81 757.99,353.00 757.88,352.18 757.77,351.37 757.67,350.55 757.56,349.74 757.47,348.92 757.37,348.11 757.28,347.29 757.19,346.48 757.10,345.66 757.01,344.85 756.93,344.03 756.85,343.22 756.78,342.40 756.70,341.59 756.63,340.77 756.56,339.96 756.50,339.14 756.44,338.33 756.38,337.51 756.32,336.70 756.26,335.88 756.21,335.07 756.16,334.25 756.12,333.44 756.07,332.62 756.03,331.81 756.00,331.00 755.96,330.18 755.93,329.36 755.90,328.55 755.87,327.73 755.85,326.92 755.83,326.10 755.81,325.29 755.80,324.47 755.78,323.66 755.77,322.84 755.77,322.03 755.76,321.21 755.76,320.40 755.76,319.58 755.77,318.77 755.77,317.95 755.78,317.14 755.80,316.32 755.81,315.51 755.83,314.69 755.85,313.88 755.87,313.06 755.90,312.25 755.93,311.44 755.96,310.62 756.00,309.80 756.03,308.99 756.07,308.17 756.12,307.36 756.16,306.54 756.21,305.73 756.26,304.91 756.32,304.10 756.38,303.28 756.44,302.47 756.50,301.65 756.56,300.84 756.63,300.02 756.70,299.21 756.78,298.39 756.85,297.58 756.93,296.76 757.01,295.95 757.10,295.13 757.19,294.32 757.28,293.50 757.37,292.69 757.47,291.88 757.56,291.06 757.67,290.25 757.77,289.43 757.88,288.62 757.99,287.80 758.10,286.98 758.21,286.17 758.33,285.35 758.45,284.54 758.57,283.72 758.70,282.91 758.83,282.09 758.96,281.28 759.10,280.46 759.23,279.65 759.37,278.83 759.51,278.02 759.66,277.20 759.81,276.39 759.96,275.57 760.11,274.76 760.27,273.94 760.43,273.13 760.59,272.31 760.75,271.50 760.92,270.69 761.09,269.87 761.26,269.05 761.43,268.24 761.61,267.42 761.79,266.61 761.97,265.79 762.16,264.98 762.35,264.16 762.54,263.35 762.73,262.53 762.93,261.72 763.13,260.90 763.33,260.09 763.53,259.27 763.74,258.46 763.95,257.64 764.16,256.83 764.38,256.01 764.59,255.20 764.81,254.38 765.03,253.57 765.26,252.75 765.49,251.94 765.72,251.12 765.95,250.31 766.19,249.49 766.42,248.68 766.66,247.86 766.91,247.05 767.15,246.23 767.40,245.42 767.65,244.60 767.91,243.79 768.16,242.97 768.42,242.16 768.68,241.34 768.95,240.53 769.21,239.71 769.48,238.90 769.75,238.08 770.03,237.27 770.30,236.45 770.58,235.64 770.86,234.82 771.15,234.01 771.43,233.19 771.72,232.38 772.01,231.56 772.31,230.75 772.60,229.94 772.90,229.12 773.20,228.30 773.51,227.49 773.81,226.67 774.12,225.86 774.43,225.04 774.75,224.23 775.06,223.41 775.38,222.60 775.70,221.78 776.02,220.97 776.35,220.15 776.68,219.34 777.01,218.52 777.34,217.71 777.68,216.89 778.01,216.08 778.35,215.26 778.69,214.45 779.04,213.63 779.39,212.82 779.74,212.00 780.09,211.19 780.44,210.38 780.80,209.56 781.16,208.75 781.52,207.93 781.88,207.11 782.24,206.30 782.61,205.48 782.98,204.67 783.35,203.85 783.73,203.04 784.11,202.22 784.48,201.41 784.87,200.59 785.25,199.78 785.63,198.96 786.02,198.15 786.41,197.33 786.80,196.52 787.20,195.70 787.60,194.89 787.99,194.07 788.40,193.26 788.80,192.44 789.20,191.63 789.61,190.81 790.02,190.00 790.43,189.18 790.85,188.37 791.26,187.55 791.68,186.74 792.10,185.92 792.52,185.11 792.95,184.29 793.37,183.48 793.80,182.66 794.23,181.85 794.67,181.03 795.10,180.22 795.54,179.40 795.98,178.59 796.42,177.77 796.86,176.96 797.31,176.14 797.75,175.33 798.20,174.51 798.65,173.70 799.10,172.88 799.56,172.07 800.02,171.25 800.47,170.44 800.94,169.62 801.40,168.81 801.86,167.99 802.33,167.18 802.80,166.36 803.27,165.55 803.74,164.73 804.21,163.92 804.69,163.10 805.17,162.29 805.65,161.47 806.13,160.66 806.61,159.84 807.10,159.03 807.58,158.21 808.07,157.40 808.56,156.58 809.05,155.77 809.55,154.95 810.04,154.14 810.54,153.32 811.04,152.51 811.54,151.69 812.04,150.88 812.55,150.06 813.05,149.25 813.56,148.44 814.07,147.62 814.58,146.80 815.09,145.99 815.61,145.17 816.13,144.36 816.64,143.54 817.16,142.73 817.68,141.91 818.21,141.10 818.73,140.28 819.26,139.47 819.78,138.66 820.31,137.84 820.84,137.02 821.37,136.21 821.91,135.39 822.44,134.58 822.98,133.76 823.52,132.95 824.06,132.13 824.60,131.32 825.14,130.50 825.69,129.69 826.23,128.88 826.78,128.06 827.33,127.24 827.88,126.43 828.43,125.61 828.98,124.80 829.53,123.98 830.09,123.17 830.65,122.35 831.20,121.54 831.76,120.72 832.33,119.91 832.89,119.09 833.45,118.28 834.02,117.47 834.58,116.65 835.15,115.83 835.72,115.02 836.29,114.20 836.86,113.39 837.43,112.57 838.01,111.76 838.58,110.94 839.16,110.13 839.73,109.31 840.31,108.50 840.89,107.69 841.47,106.87 842.05,106.05 842.64,105.24 843.22,104.42 843.81,103.61 844.39,102.79 844.98,101.98 845.57,101.16 846.16,100.35 846.75,99.53 847.34,98.72 847.94,97.91 848.53,97.09 849.12,96.28 849.72,95.46 850.32,94.64 850.92,93.83 851.51,93.01 852.11,92.20 852.72,91.38 853.32,90.57 853.92,89.75 854.52,88.94 855.13,88.12 855.73,87.31 856.34,86.50 856.95,85.68 857.56,84.86 858.16,84.05 858.77,83.23 859.39,82.42 860.00,81.60 860.61,80.79 861.22,79.97 861.84,79.16 862.45,78.34 863.07,77.53 863.68,76.72 864.30,75.90 864.92,75.08 865.53,74.27 866.15,73.45 866.77,72.64 867.39,71.82 868.01,71.01 868.64,70.19 869.26,69.38 869.88,68.56 870.50,67.75 871.13,66.94 871.75,66.12 872.38,65.31 873.00,64.49 873.63,63.68 874.26,62.86 874.89,62.05 875.51,61.23 876.14,60.42 876.77,59.60 877.40,58.78 878.03,57.97 878.66,57.15 879.29,56.34 879.92,55.52 880.55,54.71 881.19,53.89 881.82,53.08 882.45,52.26 883.09,51.45 883.72,50.63 884.35,49.82 884.99,49.00 885.62,48.19 886.26,47.38 886.89,46.56 887.53,45.75 888.16,44.93 888.80,44.12 889.44,43.30 890.07,42.49 890.71,41.67 891.35,40.86 891.98,40.04 892.62,39.23 893.26,38.41 893.90,37.59 894.54,36.78 895.17,35.96 895.81,35.15 896.45,34.33 897.09,33.52 897.73,32.70 898.37,31.89 899.01,31.07 899.64,30.26 900.28,29.44 900.92,28.63 901.56,27.81 902.20,27.00"/><polyline stroke-dashoffset="1.04" points="902.20,613.80 901.35,612.98 900.50,612.17 899.64,611.36 898.79,610.54 897.94,609.72 897.09,608.91 896.24,608.10 895.39,607.28 894.53,606.46 893.68,605.65 892.83,604.84 891.98,604.02 891.13,603.20 890.28,602.39 889.43,601.57 888.58,600.76 887.73,599.94 886.88,599.13 886.03,598.31 885.18,597.50 884.33,596.68 883.49,595.87 882.64,595.05 881.79,594.24 880.94,593.42 880.10,592.61 879.25,591.79 878.40,590.98 877.56,590.16 876.71,589.35 875.87,588.53 875.03,587.72 874.18,586.90 873.34,586.09 872.50,585.27 871.66,584.46 870.81,583.64 869.97,582.83 869.13,582.01 868.29,581.20 867.46,580.38 866.62,579.57 865.78,578.75 864.94,577.94 864.11,577.12 863.27,576.31 862.44,575.49 861.60,574.68 860.77,573.87 859.94,573.05 859.11,572.23 858.28,571.42 857.45,570.61 856.62,569.79 855.79,568.97 854.96,568.16 854.14,567.35 853.31,566.53 852.49,565.71 851.67,564.90 850.84,564.08 850.02,563.27 849.20,562.45 848.38,561.64 847.56,560.82 846.75,560.01 845.93,559.19 845.11,558.38 844.30,557.56 843.49,556.75 842.67,555.93 841.86,555.12 841.05,554.30 840.25,553.49 839.44,552.67 838.63,551.86 837.83,551.04 837.02,550.23 836.22,549.41 835.42,548.60 834.62,547.78 833.82,546.97 833.02,546.15 832.23,545.34 831.43,544.52 830.64,543.71 829.85,542.89 829.06,542.08 828.27,541.26 827.48,540.45 826.69,539.63 825.91,538.82 825.13,538.00 824.34,537.19 823.56,536.38 822.78,535.56 822.01,534.75 821.23,533.93 820.46,533.12 819.68,532.30 818.91,531.48 818.14,530.67 817.37,529.86 816.61,529.04 815.84,528.22 815.08,527.41 814.32,526.60 813.56,525.78 812.80,524.96 812.04,524.15 811.29,523.33 810.53,522.52 809.78,521.70 809.03,520.89 808.29,520.07 807.54,519.26 806.80,518.44 806.05,517.63 805.31,516.81 804.57,516.00 803.84,515.18 803.10,514.37 802.37,513.55 801.64,512.74 800.91,511.92 800.18,511.11 799.46,510.29 798.73,509.48 798.01,508.66 797.29,507.85 796.57,507.03 795.86,506.22 795.14,505.40 794.43,504.59 793.72,503.77 793.02,502.96 792.31,502.14 791.61,501.33 790.91,500.51 790.21,499.70 789.51,498.88 788.82,498.07 788.12,497.25 787.43,496.44 786.75,495.62 786.06,494.81 785.38,494.00 784.69,493.18 784.02,492.36 783.34,491.55 782.66,490.73 781.99,489.92 781.32,489.10 780.65,488.29 779.99,487.47 779.32,486.66 778.66,485.84 778.00,485.03 777.35,484.21 776.69,483.40 776.04,482.58 775.39,481.77 774.75,480.95 774.10,480.14 773.46,479.32 772.82,478.51 772.19,477.69 771.55,476.88 770.92,476.06 770.29,475.25 769.66,474.43 769.04,473.62 768.42,472.80 767.80,471.99 767.18,471.17 766.57,470.36 765.96,469.54 765.35,468.73 764.74,467.91 764.14,467.10 763.53,466.28 762.94,465.47 762.34,464.65 761.75,463.84 761.16,463.02 760.57,462.21 759.98,461.39 759.40,460.58 758.82,459.76 758.25,458.95 757.67,458.13 757.10,457.32 756.53,456.50 755.96,455.69 755.40,454.88 754.84,454.06 754.28,453.25 753.73,452.43 753.18,451.62 752.63,450.80 752.08,449.98 751.54,449.17 751.00,448.35 750.46,447.54 749.93,446.72 749.39,445.91 748.87,445.09 748.34,444.28 747.82,443.46 747.30,442.65 746.78,441.83 746.26,441.02 745.75,440.20 745.25,439.39 744.74,438.57 744.24,437.76 743.74,436.94 743.24,436.13 742.75,435.31 742.26,434.50 741.77,433.68 741.29,432.87 740.81,432.05 740.33,431.24 739.85,430.42 739.38,429.61 738.91,428.79 738.45,427.98 737.99,427.16 737.53,426.35 737.07,425.53 736.62,424.72 736.17,423.90 735.72,423.09 735.28,422.27 734.84,421.46 734.40,420.64 733.97,419.83 733.53,419.01 733.11,418.20 732.68,417.38 732.26,416.57 731.84,415.75 731.43,414.94 731.02,414.12 730.61,413.31 730.20,412.50 729.80,411.68 729.40,410.86 729.01,410.05 728.62,409.23 728.23,408.42 727.84,407.60 727.46,406.79 727.08,405.97 726.71,405.16 726.34,404.34 725.97,403.53 725.60,402.71 725.24,401.90 724.88,401.08 724.53,400.27 724.18,399.45 723.83,398.64 723.48,397.82 723.14,397.01 722.80,396.19 722.47,395.38 722.14,394.56 721.81,393.75 721.49,392.93 721.17,392.12 720.85,391.30 720.53,390.49 720.22,389.67 719.92,388.86 719.61,388.04 719.31,387.23 719.02,386.41 718.72,385.60 718.43,384.78 718.15,383.97 717.86,383.15 717.59,382.34 717.31,381.52 717.04,380.71 716.77,379.89 716.50,379.08 716.24,378.26 715.98,377.45 715.73,376.63 715.48,375.82 715.23,375.00 714.99,374.19 714.75,373.38 714.51,372.56 714.28,371.75 714.05,370.93 713.82,370.11 713.60,369.30 713.38,368.48 713.17,367.67 712.96,366.85 712.75,366.04 712.54,365.22 712.34,364.41 712.15,363.59 711.95,362.78 711.76,361.96 711.58,361.15 711.39,360.33 711.21,359.52 711.04,358.70 710.87,357.89 710.70,357.07 710.54,356.26 710.37,355.44 710.22,354.63 710.06,353.81 709.91,353.00 709.77,352.18 709.63,351.37 709.49,350.55 709.35,349.74 709.22,348.92 709.09,348.11 708.97,347.29 708.85,346.48 708.73,345.66 708.62,344.85 708.51,344.03 708.40,343.22 708.30,342.40 708.20,341.59 708.11,340.77 708.02,339.96 707.93,339.14 707.85,338.33 707.77,337.51 707.69,336.70 707.62,335.88 707.55,335.07 707.48,334.25 707.42,333.44 707.37,332.62 707.31,331.81 707.26,331.00 707.22,330.18 707.17,329.36 707.13,328.55 707.10,327.73 707.07,326.92 707.04,326.10 707.01,325.29 706.99,324.47 706.98,323.66 706.96,322.84 706.96,322.03 706.95,321.21 706.95,320.40 706.95,319.58 706.96,318.77 706.96,317.95 706.98,317.14 706.99,316.32 707.01,315.51 707.04,314.69 707.07,313.88 707.10,313.06 707.13,312.25 707.17,311.44 707.22,310.62 707.26,309.80 707.31,308.99 707.37,308.17 707.42,307.36 707.48,306.54 707.55,305.73 707.62,304.91 707.69,304.10 707.77,303.28 707.85,302.47 707.93,301.65 708.02,300.84 708.11,300.02 708.20,299.21 708.30,298.39 708.40,297.58 708.51,296.76 708.62,295.95 708.73,295.13 708.85,294.32 708.97,293.50 709.09,292.69 709.22,291.88 709.35,291.06 709.49,290.25 709.63,289.43 709.77,288.62 709.91,287.80 710.06,286.98 710.22,286.17 710.37,285.35 710.54,284.54 710.70,283.72 710.87,282.91 711.04,282.09 711.21,281.28 711.39,280.46 711.58,279.65 711.76,278.83 711.95,278.02 712.15,277.20 712.34,276.39 712.54,275.57 712.75,274.76 712.96,273.94 713.17,273.13 713.38,272.31 713.60,271.50 713.82,270.69 714.05,269.87 714.28,269.05 714.51,268.24 714.75,267.42 714.99,266.61 715.23,265.79 715.48,264.98 715.73,264.16 715.98,263.35 716.24,262.53 716.50,261.72 716.77,260.90 717.04,260.09 717.31,259.27 717.59,258.46 717.86,257.64 718.15,256.83 718.43,256.01 718.72,255.20 719.02,254.38 719.31,253.57 719.61,252.75 719.92,251.94 720.22,251.12 720.53,250.31 720.85,249.49 721.17,248.68 721.49,247.86 721.81,247.05 722.14,246.23 722.47,245.42 722.80,244.60 723.14,243.79 723.48,242.97 723.83,242.16 724.18,241.34 724.53,240.53 724.88,239.71 725.24,238.90 725.60,238.08 725.97,237.27 726.34,236.45 726.71,235.64 727.08,234.82 727.46,234.01 727.84,233.19 728.23,232.38 728.62,231.56 729.01,230.75 729.40,229.94 729.80,229.12 730.20,228.30 730.61,227.49 731.02,226.67 731.43,225.86 731.84,225.04 732.26,224.23 732.68,223.41 733.11,222.60 733.53,221.78 733.97,220.97 734.40,220.15 734.84,219.34 735.28,218.52 735.72,217.71 736.17,216.89 736.62,216.08 737.07,215.26 737.53,214.45 737.99,213.63 738.45,212.82 738.91,212.00 739.38,211.19 739.85,210.38 740.33,209.56 740.81,208.75 741.29,207.93 741.77,207.11 742.26,206.30 742.75,205.48 743.24,204.67 743.74,203.85 744.24,203.04 744.74,202.22 745.25,201.41 745.75,200.59 746.26,199.78 746.78,198.96 747.30,198.15 747.82,197.33 748.34,196.52 748.87,195.70 749.39,194.89 749.93,194.07 750.46,193.26 751.00,192.44 751.54,191.63 752.08,190.81 752.63,190.00 753.18,189.18 753.73,188.37 754.28,187.55 754.84,186.74 755.40,185.92 755.96,185.11 756.53,184.29 757.10,183.48 757.67,182.66 758.25,181.85 758.82,181.03 759.40,180.22 759.98,179.40 760.57,178.59 761.16,177.77 761.75,176.96 762.34,176.14 762.94,175.33 763.53,174.51 764.14,173.70 764.74,172.88 765.35,172.07 765.96,171.25 766.57,170.44 767.18,169.62 767.80,168.81 768.42,167.99 769.04,167.18 769.66,166.36 770.29,165.55 770.92,164.73 771.55,163.92 772.19,163.10 772.82,162.29 773.46,161.47 774.10,160.66 774.75,159.84 775.39,159.03 776.04,158.21 776.69,157.40 777.35,156.58 778.00,155.77 778.66,154.95 779.32,154.14 779.99,153.32 780.65,152.51 781.32,151.69 781.99,150.88 782.66,150.06 783.34,149.25 784.02,148.44 784.69,147.62 785.38,146.80 786.06,145.99 786.75,145.17 787.43,144.36 788.12,143.54 788.82,142.73 789.51,141.91 790.21,141.10 790.91,140.28 791.61,139.47 792.31,138.66 793.02,137.84 793.72,137.02 794.43,136.21 795.14,135.39 795.86,134.58 796.57,133.76 797.29,132.95 798.01,132.13 798.73,131.32 799.46,130.50 800.18,129.69 800.91,128.88 801.64,128.06 802.37,127.24 803.10,126.43 803.84,125.61 804.57,124.80 805.31,123.98 806.05,123.17 806.80,122.35 807.54,121.54 808.29,120.72 809.03,119.91 809.78,119.09 810.53,118.28 811.29,117.47 812.04,116.65 812.80,115.83 813.56,115.02 814.32,114.20 815.08,113.39 815.84,112.57 816.61,111.76 817.37,110.94 818.14,110.13 818.91,109.31 819.68,108.50 820.46,107.69 821.23,106.87 822.01,106.05 822.78,105.24 823.56,104.42 824.34,103.61 825.13,102.79 825.91,101.98 826.69,101.16 827.48,100.35 828.27,99.53 829.06,98.72 829.85,97.91 830.64,97.09 831.43,96.28 832.23,95.46 833.02,94.64 833.82,93.83 834.62,93.01 835.42,92.20 836.22,91.38 837.02,90.57 837.83,89.75 838.63,88.94 839.44,88.12 840.25,87.31 841.05,86.50 841.86,85.68 842.67,84.86 843.49,84.05 844.30,83.23 845.11,82.42 845.93,81.60 846.75,80.79 847.56,79.97 848.38,79.16 849.20,78.34 850.02,77.53 850.84,76.72 851.67,75.90 852.49,75.08 853.31,74.27 854.14,73.45 854.96,72.64 855.79,71.82 856.62,71.01 857.45,70.19 858.28,69.38 859.11,68.56 859.94,67.75 860.77,66.94 861.60,66.12 862.44,65.31 863.27,64.49 864.11,63.68 864.94,62.86 865.78,62.05 866.62,61.23 867.46,60.42 868.29,59.60 869.13,58.78 869.97,57.97 870.81,57.15 871.66,56.34 872.50,55.52 873.34,54.71 874.18,53.89 875.03,53.08 875.87,52.26 876.71,51.45 877.56,50.63 878.40,49.82 879.25,49.00 880.10,48.19 880.94,47.38 881.79,46.56 882.64,45.75 883.49,44.93 884.33,44.12 885.18,43.30 886.03,42.49 886.88,41.67 887.73,40.86 888.58,40.04 889.43,39.23 890.28,38.41 891.13,37.59 891.98,36.78 892.83,35.96 893.68,35.15 894.53,34.33 895.39,33.52 896.24,32.70 897.09,31.89 897.94,31.07 898.79,30.26 899.64,29.44 900.50,28.63 901.35,27.81 902.20,27.00"/><polyline stroke-dashoffset="1.04" points="902.20,613.80 901.14,612.98 900.07,612.17 899.01,611.36 897.94,610.54 896.88,609.72 895.81,608.91 894.75,608.10 893.68,607.28 892.62,606.46 891.55,605.65 890.49,604.84 889.43,604.02 888.36,603.20 887.30,602.39 886.24,601.57 885.17,600.76 884.11,599.94 883.05,599.13 881.99,598.31 880.93,597.50 879.87,596.68 878.81,595.87 877.75,595.05 876.69,594.24 875.63,593.42 874.57,592.61 873.51,591.79 872.46,590.98 871.40,590.16 870.34,589.35 869.29,588.53 868.23,587.72 867.18,586.90 866.12,586.09 865.07,585.27 864.02,584.46 862.97,583.64 861.92,582.83 860.87,582.01 859.82,581.20 858.77,580.38 857.72,579.57 856.68,578.75 855.63,577.94 854.59,577.12 853.54,576.31 852.50,575.49 851.46,574.68 850.41,573.87 849.37,573.05 848.34,572.23 847.30,571.42 846.26,570.61 845.22,569.79 844.19,568.97 843.16,568.16 842.12,567.35 841.09,566.53 840.06,565.71 839.03,564.90 838.00,564.08 836.98,563.27 835.95,562.45 834.93,561.64 833.90,560.82 832.88,560.01 831.86,559.19 830.84,558.38 829.82,557.56 828.81,556.75 827.79,555.93 826.78,555.12 825.77,554.30 824.76,553.49 823.75,552.67 822.74,551.86 821.73,551.04 820.73,550.23 819.73,549.41 818.72,548.60 817.72,547.78 816.73,546.97 815.73,546.15 814.73,545.34 813.74,544.52 812.75,543.71 811.76,542.89 810.77,542.08 809.79,541.26 808.80,540.45 807.82,539.63 806.84,538.82 805.86,538.00 804.88,537.19 803.90,536.38 802.93,535.56 801.96,534.75 800.99,533.93 800.02,533.12 799.05,532.30 798.09,531.48 797.13,530.67 796.17,529.86 795.21,529.04 794.25,528.22 793.30,527.41 792.35,526.60 791.40,525.78 790.45,524.96 789.50,524.15 788.56,523.33 787.62,522.52 786.68,521.70 785.74,520.89 784.81,520.07 783.87,519.26 782.94,518.44 782.02,517.63 781.09,516.81 780.17,516.00 779.25,515.18 778.33,514.37 777.41,513.55 776.50,512.74 775.59,511.92 774.68,511.11 773.77,510.29 772.87,509.48 771.96,508.66 771.06,507.85 770.17,507.03 769.27,506.22 768.38,505.40 767.49,504.59 766.60,503.77 765.72,502.96 764.84,502.14 763.96,501.33 763.08,500.51 762.21,499.70 761.34,498.88 760.47,498.07 759.61,497.25 758.74,496.44 757.88,495.62 757.02,494.81 756.17,494.00 755.32,493.18 754.47,492.36 753.62,491.55 752.78,490.73 751.94,489.92 751.10,489.10 750.27,488.29 749.43,487.47 748.60,486.66 747.78,485.84 746.96,485.03 746.14,484.21 745.32,483.40 744.50,482.58 743.69,481.77 742.88,480.95 742.08,480.14 741.28,479.32 740.48,478.51 739.68,477.69 738.89,476.88 738.10,476.06 737.31,475.25 736.53,474.43 735.75,473.62 734.97,472.80 734.20,471.99 733.43,471.17 732.66,470.36 731.89,469.54 731.13,468.73 730.37,467.91 729.62,467.10 728.87,466.28 728.12,465.47 727.38,464.65 726.63,463.84 725.90,463.02 725.16,462.21 724.43,461.39 723.70,460.58 722.98,459.76 722.26,458.95 721.54,458.13 720.82,457.32 720.11,456.50 719.41,455.69 718.70,454.88 718.00,454.06 717.30,453.25 716.61,452.43 715.92,451.62 715.24,450.80 714.55,449.98 713.87,449.17 713.20,448.35 712.53,447.54 711.86,446.72 711.19,445.91 710.53,445.09 709.87,444.28 709.22,443.46 708.57,442.65 707.92,441.83 707.28,441.02 706.64,440.20 706.01,439.39 705.38,438.57 704.75,437.76 704.12,436.94 703.50,436.13 702.89,435.31 702.27,434.50 701.66,433.68 701.06,432.87 700.46,432.05 699.86,431.24 699.27,430.42 698.68,429.61 698.09,428.79 697.51,427.98 696.93,427.16 696.36,426.35 695.79,425.53 695.22,424.72 694.66,423.90 694.10,423.09 693.55,422.27 693.00,421.46 692.45,420.64 691.91,419.83 691.37,419.01 690.83,418.20 690.30,417.38 689.78,416.57 689.25,415.75 688.74,414.94 688.22,414.12 687.71,413.31 687.21,412.50 686.70,411.68 686.21,410.86 685.71,410.05 685.22,409.23 684.74,408.42 684.26,407.60 683.78,406.79 683.30,405.97 682.84,405.16 682.37,404.34 681.91,403.53 681.45,402.71 681.00,401.90 680.55,401.08 680.11,400.27 679.67,399.45 679.24,398.64 678.80,397.82 678.38,397.01 677.96,396.19 677.54,395.38 677.12,394.56 676.71,393.75 676.31,392.93 675.91,392.12 675.51,391.30 675.12,390.49 674.73,389.67 674.35,388.86 673.97,388.04 673.59,387.23 673.22,386.41 672.85,385.60 672.49,384.78 672.13,383.97 671.78,383.15 671.43,382.34 671.09,381.52 670.75,380.71 670.41,379.89 670.08,379.08 669.75,378.26 669.43,377.45 669.11,376.63 668.80,375.82 668.49,375.00 668.19,374.19 667.89,373.38 667.59,372.56 667.30,371.75 667.01,370.93 666.73,370.11 666.45,369.30 666.18,368.48 665.91,367.67 665.64,366.85 665.38,366.04 665.13,365.22 664.88,364.41 664.63,363.59 664.39,362.78 664.15,361.96 663.92,361.15 663.69,360.33 663.47,359.52 663.25,358.70 663.03,357.89 662.82,357.07 662.62,356.26 662.42,355.44 662.22,354.63 662.03,353.81 661.84,353.00 661.66,352.18 661.48,351.37 661.31,350.55 661.14,349.74 660.98,348.92 660.82,348.11 660.66,347.29 660.51,346.48 660.36,345.66 660.22,344.85 660.09,344.03 659.95,343.22 659.83,342.40 659.70,341.59 659.59,340.77 659.47,339.96 659.36,339.14 659.26,338.33 659.16,337.51 659.06,336.70 658.97,335.88 658.89,335.07 658.81,334.25 658.73,333.44 658.66,332.62 658.59,331.81 658.53,331.00 658.47,330.18 658.42,329.36 658.37,328.55 658.32,327.73 658.28,326.92 658.25,326.10 658.22,325.29 658.19,324.47 658.17,323.66 658.16,322.84 658.14,322.03 658.14,321.21 658.13,320.40 658.14,319.58 658.14,318.77 658.16,317.95 658.17,317.14 658.19,316.32 658.22,315.51 658.25,314.69 658.28,313.88 658.32,313.06 658.37,312.25 658.42,311.44 658.47,310.62 658.53,309.80 658.59,308.99 658.66,308.17 658.73,307.36 658.81,306.54 658.89,305.73 658.97,304.91 659.06,304.10 659.16,303.28 659.26,302.47 659.36,301.65 659.47,300.84 659.59,300.02 659.70,299.21 659.83,298.39 659.95,297.58 660.09,296.76 660.22,295.95 660.36,295.13 660.51,294.32 660.66,293.50 660.82,292.69 660.98,291.88 661.14,291.06 661.31,290.25 661.48,289.43 661.66,288.62 661.84,287.80 662.03,286.98 662.22,286.17 662.42,285.35 662.62,284.54 662.82,283.72 663.03,282.91 663.25,282.09 663.47,281.28 663.69,280.46 663.92,279.65 664.15,278.83 664.39,278.02 664.63,277.20 664.88,276.39 665.13,275.57 665.38,274.76 665.64,273.94 665.91,273.13 666.18,272.31 666.45,271.50 666.73,270.69 667.01,269.87 667.30,269.05 667.59,268.24 667.89,267.42 668.19,266.61 668.49,265.79 668.80,264.98 669.11,264.16 669.43,263.35 669.75,262.53 670.08,261.72 670.41,260.90 670.75,260.09 671.09,259.27 671.43,258.46 671.78,257.64 672.13,256.83 672.49,256.01 672.85,255.20 673.22,254.38 673.59,253.57 673.97,252.75 674.35,251.94 674.73,251.12 675.12,250.31 675.51,249.49 675.91,248.68 676.31,247.86 676.71,247.05 677.12,246.23 677.54,245.42 677.96,244.60 678.38,243.79 678.80,242.97 679.24,242.16 679.67,241.34 680.11,240.53 680.55,239.71 681.00,238.90 681.45,238.08 681.91,237.27 682.37,236.45 682.84,235.64 683.30,234.82 683.78,234.01 684.26,233.19 684.74,232.38 685.22,231.56 685.71,230.75 686.21,229.94 686.70,229.12 687.21,228.30 687.71,227.49 688.22,226.67 688.74,225.86 689.25,225.04 689.78,224.23 690.30,223.41 690.83,222.60 691.37,221.78 691.91,220.97 692.45,220.15 693.00,219.34 693.55,218.52 694.10,217.71 694.66,216.89 695.22,216.08 695.79,215.26 696.36,214.45 696.93,213.63 697.51,212.82 698.09,212.00 698.68,211.19 699.27,210.38 699.86,209.56 700.46,208.75 701.06,207.93 701.66,207.11 702.27,206.30 702.89,205.48 703.50,204.67 704.12,203.85 704.75,203.04 705.38,202.22 706.01,201.41 706.64,200.59 707.28,199.78 707.92,198.96 708.57,198.15 709.22,197.33 709.87,196.52 710.53,195.70 711.19,194.89 711.86,194.07 712.53,193.26 713.20,192.44 713.87,191.63 714.55,190.81 715.24,190.00 715.92,189.18 716.61,188.37 717.30,187.55 718.00,186.74 718.70,185.92 719.41,185.11 720.11,184.29 720.82,183.48 721.54,182.66 722.26,181.85 722.98,181.03 723.70,180.22 724.43,179.40 725.16,178.59 725.90,177.77 726.63,176.96 727.38,176.14 728.12,175.33 728.87,174.51 729.62,173.70 730.37,172.88 731.13,172.07 731.89,171.25 732.66,170.44 733.43,169.62 734.20,168.81 734.97,167.99 735.75,167.18 736.53,166.36 737.31,165.55 738.10,164.73 738.89,163.92 739.68,163.10 740.48,162.29 741.28,161.47 742.08,160.66 742.88,159.84 743.69,159.03 744.50,158.21 745.32,157.40 746.14,156.58 746.96,155.77 747.78,154.95 748.60,154.14 749.43,153.32 750.27,152.51 751.10,151.69 751.94,150.88 752.78,150.06 753.62,149.25 754.47,148.44 755.32,147.62 756.17,146.80 757.02,145.99 757.88,145.17 758.74,144.36 759.61,143.54 760.47,142.73 761.34,141.91 762.21,141.10 763.08,140.28 763.96,139.47 764.84,138.66 765.72,137.84 766.60,137.02 767.49,136.21 768.38,135.39 769.27,134.58 770.17,133.76 771.06,132.95 771.96,132.13 772.87,131.32 773.77,130.50 774.68,129.69 775.59,128.88 776.50,128.06 777.41,127.24 778.33,126.43 779.25,125.61 780.17,124.80 781.09,123.98 782.02,123.17 782.94,122.35 783.87,121.54 784.81,120.72 785.74,119.91 786.68,119.09 787.62,118.28 788.56,117.47 789.50,116.65 790.45,115.83 791.40,115.02 792.35,114.20 793.30,113.39 794.25,112.57 795.21,111.76 796.17,110.94 797.13,110.13 798.09,109.31 799.05,108.50 800.02,107.69 800.99,106.87 801.96,106.05 802.93,105.24 803.90,104.42 804.88,103.61 805.86,102.79 806.84,101.98 807.82,101.16 808.80,100.35 809.79,99.53 810.77,98.72 811.76,97.91 812.75,97.09 813.74,96.28 814.73,95.46 815.73,94.64 816.73,93.83 817.72,93.01 818.72,92.20 819.73,91.38 820.73,90.57 821.73,89.75 822.74,88.94 823.75,88.12 824.76,87.31 825.77,86.50 826.78,85.68 827.79,84.86 828.81,84.05 829.82,83.23 830.84,82.42 831.86,81.60 832.88,80.79 833.90,79.97 834.93,79.16 835.95,78.34 836.98,77.53 838.00,76.72 839.03,75.90 840.06,75.08 841.09,74.27 842.12,73.45 843.16,72.64 844.19,71.82 845.22,71.01 846.26,70.19 847.30,69.38 848.34,68.56 849.37,67.75 850.41,66.94 851.46,66.12 852.50,65.31 853.54,64.49 854.59,63.68 855.63,62.86 856.68,62.05 857.72,61.23 858.77,60.42 859.82,59.60 860.87,58.78 861.92,57.97 862.97,57.15 864.02,56.34 865.07,55.52 866.12,54.71 867.18,53.89 868.23,53.08 869.29,52.26 870.34,51.45 871.40,50.63 872.46,49.82 873.51,49.00 874.57,48.19 875.63,47.38 876.69,46.56 877.75,45.75 878.81,44.93 879.87,44.12 880.93,43.30 881.99,42.49 883.05,41.67 884.11,40.86 885.17,40.04 886.24,39.23 887.30,38.41 888.36,37.59 889.43,36.78 890.49,35.96 891.55,35.15 892.62,34.33 893.68,33.52 894.75,32.70 895.81,31.89 896.88,31.07 897.94,30.26 899.01,29.44 900.07,28.63 901.14,27.81 902.20,27.00"/><polyline stroke-dashoffset="1.04" points="902.20,613.80 900.92,612.98 899.64,612.17 898.37,611.36 897.09,610.54 895.81,609.72 894.53,608.91 893.26,608.10 891.98,607.28 890.70,606.46 889.42,605.65 888.15,604.84 886.87,604.02 885.60,603.20 884.32,602.39 883.04,601.57 881.77,600.76 880.50,599.94 879.22,599.13 877.95,598.31 876.67,597.50 875.40,596.68 874.13,595.87 872.86,595.05 871.59,594.24 870.32,593.42 869.05,592.61 867.78,591.79 866.51,590.98 865.24,590.16 863.97,589.35 862.71,588.53 861.44,587.72 860.17,586.90 858.91,586.09 857.65,585.27 856.38,584.46 855.12,583.64 853.86,582.83 852.60,582.01 851.34,581.20 850.08,580.38 848.83,579.57 847.57,578.75 846.32,577.94 845.06,577.12 843.81,576.31 842.56,575.49 841.31,574.68 840.06,573.87 838.81,573.05 837.56,572.23 836.32,571.42 835.07,570.61 833.83,569.79 832.59,568.97 831.35,568.16 830.11,567.35 828.87,566.53 827.63,565.71 826.40,564.90 825.16,564.08 823.93,563.27 822.70,562.45 821.47,561.64 820.24,560.82 819.02,560.01 817.79,559.19 816.57,558.38 815.35,557.56 814.13,556.75 812.91,555.93 811.70,555.12 810.48,554.30 809.27,553.49 808.06,552.67 806.85,551.86 805.64,551.04 804.44,550.23 803.23,549.41 802.03,548.60 800.83,547.78 799.63,546.97 798.44,546.15 797.24,545.34 796.05,544.52 794.86,543.71 793.67,542.89 792.49,542.08 791.30,541.26 790.12,540.45 788.94,539.63 787.76,538.82 786.59,538.00 785.42,537.19 784.24,536.38 783.08,535.56 781.91,534.75 780.75,533.93 779.58,533.12 778.42,532.30 777.27,531.48 776.11,530.67 774.96,529.86 773.81,529.04 772.66,528.22 771.52,527.41 770.38,526.60 769.24,525.78 768.10,524.96 766.96,524.15 765.83,523.33 764.70,522.52 763.58,521.70 762.45,520.89 761.33,520.07 760.21,519.26 759.09,518.44 757.98,517.63 756.87,516.81 755.76,516.00 754.66,515.18 753.55,514.37 752.45,513.55 751.36,512.74 750.26,511.92 749.17,511.11 748.08,510.29 747.00,509.48 745.92,508.66 744.84,507.85 743.76,507.03 742.69,506.22 741.62,505.40 740.55,504.59 739.49,503.77 738.42,502.96 737.37,502.14 736.31,501.33 735.26,500.51 734.21,499.70 733.17,498.88 732.12,498.07 731.09,497.25 730.05,496.44 729.02,495.62 727.99,494.81 726.96,494.00 725.94,493.18 724.92,492.36 723.91,491.55 722.90,490.73 721.89,489.92 720.88,489.10 719.88,488.29 718.88,487.47 717.89,486.66 716.89,485.84 715.91,485.03 714.92,484.21 713.94,483.40 712.96,482.58 711.99,481.77 711.02,480.95 710.05,480.14 709.09,479.32 708.13,478.51 707.18,477.69 706.23,476.88 705.28,476.06 704.33,475.25 703.39,474.43 702.46,473.62 701.52,472.80 700.60,471.99 699.67,471.17 698.75,470.36 697.83,469.54 696.92,468.73 696.01,467.91 695.10,467.10 694.20,466.28 693.30,465.47 692.41,464.65 691.52,463.84 690.64,463.02 689.75,462.21 688.88,461.39 688.00,460.58 687.13,459.76 686.27,458.95 685.41,458.13 684.55,457.32 683.70,456.50 682.85,455.69 682.00,454.88 681.16,454.06 680.33,453.25 679.49,452.43 678.67,451.62 677.84,450.80 677.02,449.98 676.21,449.17 675.40,448.35 674.59,447.54 673.79,446.72 672.99,445.91 672.20,445.09 671.41,444.28 670.62,443.46 669.84,442.65 669.07,441.83 668.30,441.02 667.53,440.20 666.77,439.39 666.01,438.57 665.26,437.76 664.51,436.94 663.76,436.13 663.02,435.31 662.29,434.50 661.56,433.68 660.83,432.87 660.11,432.05 659.39,431.24 658.68,430.42 657.97,429.61 657.27,428.79 656.57,427.98 655.88,427.16 655.19,426.35 654.50,425.53 653.83,424.72 653.15,423.90 652.48,423.09 651.82,422.27 651.15,421.46 650.50,420.64 649.85,419.83 649.20,419.01 648.56,418.20 647.92,417.38 647.29,416.57 646.67,415.75 646.04,414.94 645.43,414.12 644.81,413.31 644.21,412.50 643.60,411.68 643.01,410.86 642.41,410.05 641.83,409.23 641.24,408.42 640.67,407.60 640.09,406.79 639.53,405.97 638.96,405.16 638.41,404.34 637.85,403.53 637.30,402.71 636.76,401.90 636.22,401.08 635.69,400.27 635.16,399.45 634.64,398.64 634.13,397.82 633.61,397.01 633.11,396.19 632.60,395.38 632.11,394.56 631.62,393.75 631.13,392.93 630.65,392.12 630.17,391.30 629.70,390.49 629.24,389.67 628.77,388.86 628.32,388.04 627.87,387.23 627.42,386.41 626.98,385.60 626.55,384.78 626.12,383.97 625.70,383.15 625.28,382.34 624.86,381.52 624.46,380.71 624.05,379.89 623.66,379.08 623.26,378.26 622.88,377.45 622.50,376.63 622.12,375.82 621.75,375.00 621.38,374.19 621.02,373.38 620.67,372.56 620.32,371.75 619.97,370.93 619.64,370.11 619.30,369.30 618.97,368.48 618.65,367.67 618.33,366.85 618.02,366.04 617.72,365.22 617.41,364.41 617.12,363.59 616.83,362.78 616.54,361.96 616.26,361.15 615.99,360.33 615.72,359.52 615.46,358.70 615.20,357.89 614.95,357.07 614.70,356.26 614.46,355.44 614.23,354.63 614.00,353.81 613.77,353.00 613.55,352.18 613.34,351.37 613.13,350.55 612.93,349.74 612.73,348.92 612.54,348.11 612.35,347.29 612.17,346.48 612.00,345.66 611.83,344.85 611.66,344.03 611.51,343.22 611.35,342.40 611.20,341.59 611.06,340.77 610.93,339.96 610.80,339.14 610.67,338.33 610.55,337.51 610.44,336.70 610.33,335.88 610.22,335.07 610.13,334.25 610.04,333.44 609.95,332.62 609.87,331.81 609.79,331.00 609.72,330.18 609.66,329.36 609.60,328.55 609.55,327.73 609.50,326.92 609.46,326.10 609.42,325.29 609.39,324.47 609.37,323.66 609.35,322.84 609.33,322.03 609.32,321.21 609.32,320.40 609.32,319.58 609.33,318.77 609.35,317.95 609.37,317.14 609.39,316.32 609.42,315.51 609.46,314.69 609.50,313.88 609.55,313.06 609.60,312.25 609.66,311.44 609.72,310.62 609.79,309.80 609.87,308.99 609.95,308.17 610.04,307.36 610.13,306.54 610.22,305.73 610.33,304.91 610.44,304.10 610.55,303.28 610.67,302.47 610.80,301.65 610.93,300.84 611.06,300.02 611.20,299.21 611.35,298.39 611.51,297.58 611.66,296.76 611.83,295.95 612.00,295.13 612.17,294.32 612.35,293.50 612.54,292.69 612.73,291.88 612.93,291.06 613.13,290.25 613.34,289.43 613.55,288.62 613.77,287.80 614.00,286.98 614.23,286.17 614.46,285.35 614.70,284.54 614.95,283.72 615.20,282.91 615.46,282.09 615.72,281.28 615.99,280.46 616.26,279.65 616.54,278.83 616.83,278.02 617.12,277.20 617.41,276.39 617.72,275.57 618.02,274.76 618.33,273.94 618.65,273.13 618.97,272.31 619.30,271.50 619.64,270.69 619.97,269.87 620.32,269.05 620.67,268.24 621.02,267.42 621.38,266.61 621.75,265.79 622.12,264.98 622.50,264.16 622.88,263.35 623.26,262.53 623.66,261.72 624.05,260.90 624.46,260.09 624.86,259.27 625.28,258.46 625.70,257.64 626.12,256.83 626.55,256.01 626.98,255.20 627.42,254.38 627.87,253.57 628.32,252.75 628.77,251.94 629.24,251.12 629.70,250.31 630.17,249.49 630.65,248.68 631.13,247.86 631.62,247.05 632.11,246.23 632.60,245.42 633.11,244.60 633.61,243.79 634.13,242.97 634.64,242.16 635.16,241.34 635.69,240.53 636.22,239.71 636.76,238.90 637.30,238.08 637.85,237.27 638.41,236.45 638.96,235.64 639.53,234.82 640.09,234.01 640.67,233.19 641.24,232.38 641.83,231.56 642.41,230.75 643.01,229.94 643.60,229.12 644.21,228.30 644.81,227.49 645.43,226.67 646.04,225.86 646.67,225.04 647.29,224.23 647.92,223.41 648.56,222.60 649.20,221.78 649.85,220.97 650.50,220.15 651.15,219.34 651.82,218.52 652.48,217.71 653.15,216.89 653.83,216.08 654.50,215.26 655.19,214.45 655.88,213.63 656.57,212.82 657.27,212.00 657.97,211.19 658.68,210.38 659.39,209.56 660.11,208.75 660.83,207.93 661.56,207.11 662.29,206.30 663.02,205.48 663.76,204.67 664.51,203.85 665.26,203.04 666.01,202.22 666.77,201.41 667.53,200.59 668.30,199.78 669.07,198.96 669.84,198.15 670.62,197.33 671.41,196.52 672.20,195.70 672.99,194.89 673.79,194.07 674.59,193.26 675.40,192.44 676.21,191.63 677.02,190.81 677.84,190.00 678.67,189.18 679.49,188.37 680.33,187.55 681.16,186.74 682.00,185.92 682.85,185.11 683.70,184.29 684.55,183.48 685.41,182.66 686.27,181.85 687.13,181.03 688.00,180.22 688.88,179.40 689.75,178.59 690.64,177.77 691.52,176.96 692.41,176.14 693.30,175.33 694.20,174.51 695.10,173.70 696.01,172.88 696.92,172.07 697.83,171.25 698.75,170.44 699.67,169.62 700.60,168.81 701.52,167.99 702.46,167.18 703.39,166.36 704.33,165.55 705.28,164.73 706.23,163.92 707.18,163.10 708.13,162.29 709.09,161.47 710.05,160.66 711.02,159.84 711.99,159.03 712.96,158.21 713.94,157.40 714.92,156.58 715.91,155.77 716.89,154.95 717.89,154.14 718.88,153.32 719.88,152.51 720.88,151.69 721.89,150.88 722.90,150.06 723.91,149.25 724.92,148.44 725.94,147.62 726.96,146.80 727.99,145.99 729.02,145.17 730.05,144.36 731.09,143.54 732.12,142.73 733.17,141.91 734.21,141.10 735.26,140.28 736.31,139.47 737.37,138.66 738.42,137.84 739.49,137.02 740.55,136.21 741.62,135.39 742.69,134.58 743.76,133.76 744.84,132.95 745.92,132.13 747.00,131.32 748.08,130.50 749.17,129.69 750.26,128.88 751.36,128.06 752.45,127.24 753.55,126.43 754.66,125.61 755.76,124.80 756.87,123.98 757.98,123.17 759.09,122.35 760.21,121.54 761.33,120.72 762.45,119.91 763.58,119.09 764.70,118.28 765.83,117.47 766.96,116.65 768.10,115.83 769.24,115.02 770.38,114.20 771.52,113.39 772.66,112.57 773.81,111.76 774.96,110.94 776.11,110.13 777.27,109.31 778.42,108.50 779.58,107.69 780.75,106.87 781.91,106.05 783.08,105.24 784.24,104.42 785.42,103.61 786.59,102.79 787.76,101.98 788.94,101.16 790.12,100.35 791.30,99.53 792.49,98.72 793.67,97.91 794.86,97.09 796.05,96.28 797.24,95.46 798.44,94.64 799.63,93.83 800.83,93.01 802.03,92.20 803.23,91.38 804.44,90.57 805.64,89.75 806.85,88.94 808.06,88.12 809.27,87.31 810.48,86.50 811.70,85.68 812.91,84.86 814.13,84.05 815.35,83.23 816.57,82.42 817.79,81.60 819.02,80.79 820.24,79.97 821.47,79.16 822.70,78.34 823.93,77.53 825.16,76.72 826.40,75.90 827.63,75.08 828.87,74.27 830.11,73.45 831.35,72.64 832.59,71.82 833.83,71.01 835.07,70.19 836.32,69.38 837.56,68.56 838.81,67.75 840.06,66.94 841.31,66.12 842.56,65.31 843.81,64.49 845.06,63.68 846.32,62.86 847.57,62.05 848.83,61.23 850.08,60.42 851.34,59.60 852.60,58.78 853.86,57.97 855.12,57.15 856.38,56.34 857.65,55.52 858.91,54.71 860.17,53.89 861.44,53.08 862.71,52.26 863.97,51.45 865.24,50.63 866.51,49.82 867.78,49.00 869.05,48.19 870.32,47.38 871.59,46.56 872.86,45.75 874.13,44.93 875.40,44.12 876.67,43.30 877.95,42.49 879.22,41.67 880.50,40.86 881.77,40.04 883.04,39.23 884.32,38.41 885.60,37.59 886.87,36.78 888.15,35.96 889.42,35.15 890.70,34.33 891.98,33.52 893.26,32.70 894.53,31.89 895.81,31.07 897.09,30.26 898.37,29.44 899.64,28.63 900.92,27.81 902.20,27.00"/><polyline stroke-dashoffset="1.04" points="902.20,613.80 900.71,612.98 899.22,612.17 897.73,611.36 896.24,610.54 894.75,609.72 893.26,608.91 891.77,608.10 890.28,607.28 888.79,606.46 887.30,605.65 885.81,604.84 884.32,604.02 882.83,603.20 881.34,602.39 879.85,601.57 878.36,600.76 876.88,599.94 875.39,599.13 873.91,598.31 872.42,597.50 870.93,596.68 869.45,595.87 867.97,595.05 866.48,594.24 865.00,593.42 863.52,592.61 862.04,591.79 860.56,590.98 859.08,590.16 857.60,589.35 856.12,588.53 854.65,587.72 853.17,586.90 851.69,586.09 850.22,585.27 848.75,584.46 847.28,583.64 845.80,582.83 844.33,582.01 842.87,581.20 841.40,580.38 839.93,579.57 838.47,578.75 837.00,577.94 835.54,577.12 834.08,576.31 832.62,575.49 831.16,574.68 829.70,573.87 828.24,573.05 826.79,572.23 825.34,571.42 823.88,570.61 822.43,569.79 820.98,568.97 819.54,568.16 818.09,567.35 816.65,566.53 815.20,565.71 813.76,564.90 812.32,564.08 810.89,563.27 809.45,562.45 808.02,561.64 806.58,560.82 805.15,560.01 803.73,559.19 802.30,558.38 800.87,557.56 799.45,556.75 798.03,555.93 796.61,555.12 795.19,554.30 793.78,553.49 792.37,552.67 790.96,551.86 789.55,551.04 788.14,550.23 786.74,549.41 785.33,548.60 783.93,547.78 782.54,546.97 781.14,546.15 779.75,545.34 778.36,544.52 776.97,543.71 775.58,542.89 774.20,542.08 772.82,541.26 771.44,540.45 770.06,539.63 768.69,538.82 767.32,538.00 765.95,537.19 764.59,536.38 763.22,535.56 761.86,534.75 760.50,533.93 759.15,533.12 757.80,532.30 756.45,531.48 755.10,530.67 753.75,529.86 752.41,529.04 751.07,528.22 749.74,527.41 748.41,526.60 747.08,525.78 745.75,524.96 744.42,524.15 743.10,523.33 741.79,522.52 740.47,521.70 739.16,520.89 737.85,520.07 736.54,519.26 735.24,518.44 733.94,517.63 732.65,516.81 731.35,516.00 730.06,515.18 728.78,514.37 727.50,513.55 726.22,512.74 724.94,511.92 723.67,511.11 722.40,510.29 721.13,509.48 719.87,508.66 718.61,507.85 717.35,507.03 716.10,506.22 714.85,505.40 713.61,504.59 712.37,503.77 711.13,502.96 709.89,502.14 708.66,501.33 707.44,500.51 706.21,499.70 704.99,498.88 703.78,498.07 702.57,497.25 701.36,496.44 700.15,495.62 698.95,494.81 697.76,494.00 696.57,493.18 695.38,492.36 694.19,491.55 693.01,490.73 691.83,489.92 690.66,489.10 689.49,488.29 688.33,487.47 687.17,486.66 686.01,485.84 684.86,485.03 683.71,484.21 682.57,483.40 681.43,482.58 680.29,481.77 679.16,480.95 678.03,480.14 676.91,479.32 675.79,478.51 674.67,477.69 673.56,476.88 672.46,476.06 671.36,475.25 670.26,474.43 669.17,473.62 668.08,472.80 667.00,471.99 665.92,471.17 664.84,470.36 663.77,469.54 662.71,468.73 661.64,467.91 660.59,467.10 659.54,466.28 658.49,465.47 657.45,464.65 656.41,463.84 655.37,463.02 654.35,462.21 653.32,461.39 652.30,460.58 651.29,459.76 650.28,458.95 649.27,458.13 648.27,457.32 647.28,456.50 646.29,455.69 645.30,454.88 644.32,454.06 643.35,453.25 642.38,452.43 641.41,451.62 640.45,450.80 639.49,449.98 638.54,449.17 637.60,448.35 636.66,447.54 635.72,446.72 634.79,445.91 633.86,445.09 632.94,444.28 632.03,443.46 631.12,442.65 630.21,441.83 629.31,441.02 628.42,440.20 627.53,439.39 626.65,438.57 625.77,437.76 624.89,436.94 624.02,436.13 623.16,435.31 622.30,434.50 621.45,433.68 620.60,432.87 619.76,432.05 618.93,431.24 618.09,430.42 617.27,429.61 616.45,428.79 615.63,427.98 614.82,427.16 614.02,426.35 613.22,425.53 612.43,424.72 611.64,423.90 610.86,423.09 610.08,422.27 609.31,421.46 608.55,420.64 607.79,419.83 607.04,419.01 606.29,418.20 605.54,417.38 604.81,416.57 604.08,415.75 603.35,414.94 602.63,414.12 601.92,413.31 601.21,412.50 600.50,411.68 599.81,410.86 599.12,410.05 598.43,409.23 597.75,408.42 597.08,407.60 596.41,406.79 595.75,405.97 595.09,405.16 594.44,404.34 593.79,403.53 593.16,402.71 592.52,401.90 591.90,401.08 591.27,400.27 590.66,399.45 590.05,398.64 589.45,397.82 588.85,397.01 588.26,396.19 587.67,395.38 587.09,394.56 586.52,393.75 585.95,392.93 585.39,392.12 584.83,391.30 584.28,390.49 583.74,389.67 583.20,388.86 582.67,388.04 582.15,387.23 581.63,386.41 581.12,385.60 580.61,384.78 580.11,383.97 579.61,383.15 579.12,382.34 578.64,381.52 578.17,380.71 577.70,379.89 577.23,379.08 576.77,378.26 576.32,377.45 575.88,376.63 575.44,375.82 575.01,375.00 574.58,374.19 574.16,373.38 573.75,372.56 573.34,371.75 572.94,370.93 572.54,370.11 572.15,369.30 571.77,368.48 571.39,367.67 571.02,366.85 570.66,366.04 570.30,365.22 569.95,364.41 569.61,363.59 569.27,362.78 568.93,361.96 568.61,361.15 568.29,360.33 567.98,359.52 567.67,358.70 567.37,357.89 567.07,357.07 566.79,356.26 566.51,355.44 566.23,354.63 565.96,353.81 565.70,353.00 565.44,352.18 565.20,351.37 564.95,350.55 564.72,349.74 564.49,348.92 564.26,348.11 564.05,347.29 563.83,346.48 563.63,345.66 563.43,344.85 563.24,344.03 563.06,343.22 562.88,342.40 562.71,341.59 562.54,340.77 562.38,339.96 562.23,339.14 562.08,338.33 561.94,337.51 561.81,336.70 561.68,335.88 561.56,335.07 561.45,334.25 561.34,333.44 561.24,332.62 561.15,331.81 561.06,331.00 560.98,330.18 560.90,329.36 560.83,328.55 560.77,327.73 560.72,326.92 560.67,326.10 560.63,325.29 560.59,324.47 560.56,323.66 560.54,322.84 560.52,322.03 560.51,321.21 560.51,320.40 560.51,319.58 560.52,318.77 560.54,317.95 560.56,317.14 560.59,316.32 560.63,315.51 560.67,314.69 560.72,313.88 560.77,313.06 560.83,312.25 560.90,311.44 560.98,310.62 561.06,309.80 561.15,308.99 561.24,308.17 561.34,307.36 561.45,306.54 561.56,305.73 561.68,304.91 561.81,304.10 561.94,303.28 562.08,302.47 562.23,301.65 562.38,300.84 562.54,300.02 562.71,299.21 562.88,298.39 563.06,297.58 563.24,296.76 563.43,295.95 563.63,295.13 563.83,294.32 564.05,293.50 564.26,292.69 564.49,291.88 564.72,291.06 564.95,290.25 565.20,289.43 565.44,288.62 565.70,287.80 565.96,286.98 566.23,286.17 566.51,285.35 566.79,284.54 567.07,283.72 567.37,282.91 567.67,282.09 567.98,281.28 568.29,280.46 568.61,279.65 568.93,278.83 569.27,278.02 569.61,277.20 569.95,276.39 570.30,275.57 570.66,274.76 571.02,273.94 571.39,273.13 571.77,272.31 572.15,271.50 572.54,270.69 572.94,269.87 573.34,269.05 573.75,268.24 574.16,267.42 574.58,266.61 575.01,265.79 575.44,264.98 575.88,264.16 576.32,263.35 576.77,262.53 577.23,261.72 577.70,260.90 578.17,260.09 578.64,259.27 579.12,258.46 579.61,257.64 580.11,256.83 580.61,256.01 581.12,255.20 581.63,254.38 582.15,253.57 582.67,252.75 583.20,251.94 583.74,251.12 584.28,250.31 584.83,249.49 585.39,248.68 585.95,247.86 586.52,247.05 587.09,246.23 587.67,245.42 588.26,244.60 588.85,243.79 589.45,242.97 590.05,242.16 590.66,241.34 591.27,240.53 591.90,239.71 592.52,238.90 593.16,238.08 593.79,237.27 594.44,236.45 595.09,235.64 595.75,234.82 596.41,234.01 597.08,233.19 597.75,232.38 598.43,231.56 599.12,230.75 599.81,229.94 600.50,229.12 601.21,228.30 601.92,227.49 602.63,226.67 603.35,225.86 604.08,225.04 604.81,224.23 605.54,223.41 606.29,222.60 607.04,221.78 607.79,220.97 608.55,220.15 609.31,219.34 610.08,218.52 610.86,217.71 611.64,216.89 612.43,216.08 613.22,215.26 614.02,214.45 614.82,213.63 615.63,212.82 616.45,212.00 617.27,211.19 618.09,210.38 618.93,209.56 619.76,208.75 620.60,207.93 621.45,207.11 622.30,206.30 623.16,205.48 624.02,204.67 624.89,203.85 625.77,203.04 626.65,202.22 627.53,201.41 628.42,200.59 629.31,199.78 630.21,198.96 631.12,198.15 632.03,197.33 632.94,196.52 633.86,195.70 634.79,194.89 635.72,194.07 636.66,193.26 637.60,192.44 638.54,191.63 639.49,190.81 640.45,190.00 641.41,189.18 642.38,188.37 643.35,187.55 644.32,186.74 645.30,185.92 646.29,185.11 647.28,184.29 648.27,183.48 649.27,182.66 650.28,181.85 651.29,181.03 652.30,180.22 653.32,179.40 654.35,178.59 655.37,177.77 656.41,176.96 657.45,176.14 658.49,175.33 659.54,174.51 660.59,173.70 661.64,172.88 662.71,172.07 663.77,171.25 664.84,170.44 665.92,169.62 667.00,168.81 668.08,167.99 669.17,167.18 670.26,166.36 671.36,165.55 672.46,164.73 673.56,163.92 674.67,163.10 675.79,162.29 676.91,161.47 678.03,160.66 679.16,159.84 680.29,159.03 681.43,158.21 682.57,157.40 683.71,156.58 684.86,155.77 686.01,154.95 687.17,154.14 688.33,153.32 689.49,152.51 690.66,151.69 691.83,150.88 693.01,150.06 694.19,149.25 695.38,148.44 696.57,147.62 697.76,146.80 698.95,145.99 700.15,145.17 701.36,144.36 702.57,143.54 703.78,142.73 704.99,141.91 706.21,141.10 707.44,140.28 708.66,139.47 709.89,138.66 711.13,137.84 712.37,137.02 713.61,136.21 714.85,135.39 716.10,134.58 717.35,133.76 718.61,132.95 719.87,132.13 721.13,131.32 722.40,130.50 723.67,129.69 724.94,128.88 726.22,128.06 727.50,127.24 728.78,126.43 730.06,125.61 731.35,124.80 732.65,123.98 733.94,123.17 735.24,122.35 736.54,121.54 737.85,120.72 739.16,119.91 740.47,119.09 741.79,118.28 743.10,117.47 744.42,116.65 745.75,115.83 747.08,115.02 748.41,114.20 749.74,113.39 751.07,112.57 752.41,111.76 753.75,110.94 755.10,110.13 756.45,109.31 757.80,108.50 759.15,107.69 760.50,106.87 761.86,106.05 763.22,105.24 764.59,104.42 765.95,103.61 767.32,102.79 768.69,101.98 770.06,101.16 771.44,100.35 772.82,99.53 774.20,98.72 775.58,97.91 776.97,97.09 778.36,96.28 779.75,95.46 781.14,94.64 782.54,93.83 783.93,93.01 785.33,92.20 786.74,91.38 788.14,90.57 789.55,89.75 790.96,88.94 792.37,88.12 793.78,87.31 795.19,86.50 796.61,85.68 798.03,84.86 799.45,84.05 800.87,83.23 802.30,82.42 803.73,81.60 805.15,80.79 806.58,79.97 808.02,79.16 809.45,78.34 810.89,77.53 812.32,76.72 813.76,75.90 815.20,75.08 816.65,74.27 818.09,73.45 819.54,72.64 820.98,71.82 822.43,71.01 823.88,70.19 825.34,69.38 826.79,68.56 828.24,67.75 829.70,66.94 831.16,66.12 832.62,65.31 834.08,64.49 835.54,63.68 837.00,62.86 838.47,62.05 839.93,61.23 841.40,60.42 842.87,59.60 844.33,58.78 845.80,57.97 847.28,57.15 848.75,56.34 850.22,55.52 851.69,54.71 853.17,53.89 854.65,53.08 856.12,52.26 857.60,51.45 859.08,50.63 860.56,49.82 862.04,49.00 863.52,48.19 865.00,47.38 866.48,46.56 867.97,45.75 869.45,44.93 870.93,44.12 872.42,43.30 873.91,42.49 875.39,41.67 876.88,40.86 878.36,40.04 879.85,39.23 881.34,38.41 882.83,37.59 884.32,36.78 885.81,35.96 887.30,35.15 888.79,34.33 890.28,33.52 891.77,32.70 893.26,31.89 894.75,31.07 896.24,30.26 897.73,29.44 899.22,28.63 900.71,27.81 902.20,27.00"/><polyline stroke-dashoffset="1.04" points="902.20,613.80 900.50,612.98 898.79,612.17 897.09,611.36 895.38,610.54 893.68,609.72 891.98,608.91 890.27,608.10 888.57,607.28 886.87,606.46 885.17,605.65 883.46,604.84 881.76,604.02 880.06,603.20 878.36,602.39 876.66,601.57 874.96,600.76 873.26,599.94 871.56,599.13 869.86,598.31 868.17,597.50 866.47,596.68 864.77,595.87 863.08,595.05 861.38,594.24 859.69,593.42 857.99,592.61 856.30,591.79 854.61,590.98 852.92,590.16 851.23,589.35 849.54,588.53 847.85,587.72 846.17,586.90 844.48,586.09 842.80,585.27 841.11,584.46 839.43,583.64 837.75,582.83 836.07,582.01 834.39,581.20 832.71,580.38 831.04,579.57 829.36,578.75 827.69,577.94 826.02,577.12 824.35,576.31 822.68,575.49 821.01,574.68 819.34,573.87 817.68,573.05 816.02,572.23 814.36,571.42 812.70,570.61 811.04,569.79 809.38,568.97 807.73,568.16 806.08,567.35 804.43,566.53 802.78,565.71 801.13,564.90 799.49,564.08 797.84,563.27 796.20,562.45 794.56,561.64 792.93,560.82 791.29,560.01 789.66,559.19 788.03,558.38 786.40,557.56 784.77,556.75 783.15,555.93 781.53,555.12 779.91,554.30 778.29,553.49 776.68,552.67 775.06,551.86 773.45,551.04 771.85,550.23 770.24,549.41 768.64,548.60 767.04,547.78 765.44,546.97 763.85,546.15 762.26,545.34 760.67,544.52 759.08,543.71 757.50,542.89 755.91,542.08 754.34,541.26 752.76,540.45 751.19,539.63 749.62,538.82 748.05,538.00 746.49,537.19 744.93,536.38 743.37,535.56 741.81,534.75 740.26,533.93 738.71,533.12 737.17,532.30 735.62,531.48 734.08,530.67 732.55,529.86 731.01,529.04 729.48,528.22 727.96,527.41 726.43,526.60 724.91,525.78 723.40,524.96 721.89,524.15 720.38,523.33 718.87,522.52 717.37,521.70 715.87,520.89 714.37,520.07 712.88,519.26 711.39,518.44 709.91,517.63 708.43,516.81 706.95,516.00 705.47,515.18 704.00,514.37 702.54,513.55 701.08,512.74 699.62,511.92 698.16,511.11 696.71,510.29 695.26,509.48 693.82,508.66 692.38,507.85 690.95,507.03 689.52,506.22 688.09,505.40 686.67,504.59 685.25,503.77 683.83,502.96 682.42,502.14 681.02,501.33 679.61,500.51 678.22,499.70 676.82,498.88 675.43,498.07 674.05,497.25 672.67,496.44 671.29,495.62 669.92,494.81 668.55,494.00 667.19,493.18 665.83,492.36 664.48,491.55 663.13,490.73 661.78,489.92 660.44,489.10 659.11,488.29 657.77,487.47 656.45,486.66 655.13,485.84 653.81,485.03 652.50,484.21 651.19,483.40 649.89,482.58 648.59,481.77 647.29,480.95 646.01,480.14 644.72,479.32 643.44,478.51 642.17,477.69 640.90,476.88 639.64,476.06 638.38,475.25 637.13,474.43 635.88,473.62 634.63,472.80 633.39,471.99 632.16,471.17 630.93,470.36 629.71,469.54 628.49,468.73 627.28,467.91 626.07,467.10 624.87,466.28 623.67,465.47 622.48,464.65 621.29,463.84 620.11,463.02 618.94,462.21 617.77,461.39 616.60,460.58 615.44,459.76 614.29,458.95 613.14,458.13 612.00,457.32 610.86,456.50 609.73,455.69 608.60,454.88 607.48,454.06 606.37,453.25 605.26,452.43 604.15,451.62 603.06,450.80 601.96,449.98 600.88,449.17 599.80,448.35 598.72,447.54 597.65,446.72 596.59,445.91 595.53,445.09 594.48,444.28 593.43,443.46 592.39,442.65 591.36,441.83 590.33,441.02 589.31,440.20 588.29,439.39 587.28,438.57 586.28,437.76 585.28,436.94 584.28,436.13 583.30,435.31 582.32,434.50 581.34,433.68 580.38,432.87 579.41,432.05 578.46,431.24 577.51,430.42 576.56,429.61 575.63,428.79 574.70,427.98 573.77,427.16 572.85,426.35 571.94,425.53 571.03,424.72 570.13,423.90 569.24,423.09 568.35,422.27 567.47,421.46 566.60,420.64 565.73,419.83 564.87,419.01 564.01,418.20 563.16,417.38 562.32,416.57 561.49,415.75 560.66,414.94 559.83,414.12 559.02,413.31 558.21,412.50 557.41,411.68 556.61,410.86 555.82,410.05 555.04,409.23 554.26,408.42 553.49,407.60 552.72,406.79 551.97,405.97 551.22,405.16 550.47,404.34 549.74,403.53 549.01,402.71 548.28,401.90 547.57,401.08 546.86,400.27 546.15,399.45 545.46,398.64 544.77,397.82 544.08,397.01 543.41,396.19 542.74,395.38 542.08,394.56 541.42,393.75 540.77,392.93 540.13,392.12 539.50,391.30 538.87,390.49 538.25,389.67 537.63,388.86 537.03,388.04 536.43,387.23 535.83,386.41 535.25,385.60 534.67,384.78 534.09,383.97 533.53,383.15 532.97,382.34 532.42,381.52 531.88,380.71 531.34,379.89 530.81,379.08 530.29,378.26 529.77,377.45 529.26,376.63 528.76,375.82 528.26,375.00 527.78,374.19 527.30,373.38 526.82,372.56 526.36,371.75 525.90,370.93 525.45,370.11 525.00,369.30 524.56,368.48 524.13,367.67 523.71,366.85 523.30,366.04 522.89,365.22 522.49,364.41 522.09,363.59 521.70,362.78 521.32,361.96 520.95,361.15 520.59,360.33 520.23,359.52 519.88,358.70 519.54,357.89 519.20,357.07 518.87,356.26 518.55,355.44 518.24,354.63 517.93,353.81 517.63,353.00 517.34,352.18 517.05,351.37 516.77,350.55 516.50,349.74 516.24,348.92 515.99,348.11 515.74,347.29 515.50,346.48 515.26,345.66 515.04,344.85 514.82,344.03 514.61,343.22 514.40,342.40 514.21,341.59 514.02,340.77 513.84,339.96 513.66,339.14 513.49,338.33 513.33,337.51 513.18,336.70 513.04,335.88 512.90,335.07 512.77,334.25 512.65,333.44 512.53,332.62 512.42,331.81 512.32,331.00 512.23,330.18 512.15,329.36 512.07,328.55 512.00,327.73 511.93,326.92 511.88,326.10 511.83,325.29 511.79,324.47 511.76,323.66 511.73,322.84 511.71,322.03 511.70,321.21 511.70,320.40 511.70,319.58 511.71,318.77 511.73,317.95 511.76,317.14 511.79,316.32 511.83,315.51 511.88,314.69 511.93,313.88 512.00,313.06 512.07,312.25 512.15,311.44 512.23,310.62 512.32,309.80 512.42,308.99 512.53,308.17 512.65,307.36 512.77,306.54 512.90,305.73 513.04,304.91 513.18,304.10 513.33,303.28 513.49,302.47 513.66,301.65 513.84,300.84 514.02,300.02 514.21,299.21 514.40,298.39 514.61,297.58 514.82,296.76 515.04,295.95 515.26,295.13 515.50,294.32 515.74,293.50 515.99,292.69 516.24,291.88 516.50,291.06 516.77,290.25 517.05,289.43 517.34,288.62 517.63,287.80 517.93,286.98 518.24,286.17 518.55,285.35 518.87,284.54 519.20,283.72 519.54,282.91 519.88,282.09 520.23,281.28 520.59,280.46 520.95,279.65 521.32,278.83 521.70,278.02 522.09,277.20 522.49,276.39 522.89,275.57 523.30,274.76 523.71,273.94 524.13,273.13 524.56,272.31 525.00,271.50 525.45,270.69 525.90,269.87 526.36,269.05 526.82,268.24 527.30,267.42 527.78,266.61 528.26,265.79 528.76,264.98 529.26,264.16 529.77,263.35 530.29,262.53 530.81,261.72 531.34,260.90 531.88,260.09 532.42,259.27 532.97,258.46 533.53,257.64 534.09,256.83 534.67,256.01 535.25,255.20 535.83,254.38 536.43,253.57 537.03,252.75 537.63,251.94 538.25,251.12 538.87,250.31 539.50,249.49 540.13,248.68 540.77,247.86 541.42,247.05 542.08,246.23 542.74,245.42 543.41,244.60 544.08,243.79 544.77,242.97 545.46,242.16 546.15,241.34 546.86,240.53 547.57,239.71 548.28,238.90 549.01,238.08 549.74,237.27 550.47,236.45 551.22,235.64 551.97,234.82 552.72,234.01 553.49,233.19 554.26,232.38 555.04,231.56 555.82,230.75 556.61,229.94 557.41,229.12 558.21,228.30 559.02,227.49 559.83,226.67 560.66,225.86 561.49,225.04 562.32,224.23 563.16,223.41 564.01,222.60 564.87,221.78 565.73,220.97 566.60,220.15 567.47,219.34 568.35,218.52 569.24,217.71 570.13,216.89 571.03,216.08 571.94,215.26 572.85,214.45 573.77,213.63 574.70,212.82 575.63,212.00 576.56,211.19 577.51,210.38 578.46,209.56 579.41,208.75 580.38,207.93 581.34,207.11 582.32,206.30 583.30,205.48 584.28,204.67 585.28,203.85 586.28,203.04 587.28,202.22 588.29,201.41 589.31,200.59 590.33,199.78 591.36,198.96 592.39,198.15 593.43,197.33 594.48,196.52 595.53,195.70 596.59,194.89 597.65,194.07 598.72,193.26 599.80,192.44 600.88,191.63 601.96,190.81 603.06,190.00 604.15,189.18 605.26,188.37 606.37,187.55 607.48,186.74 608.60,185.92 609.73,185.11 610.86,184.29 612.00,183.48 613.14,182.66 614.29,181.85 615.44,181.03 616.60,180.22 617.77,179.40 618.94,178.59 620.11,177.77 621.29,176.96 622.48,176.14 623.67,175.33 624.87,174.51 626.07,173.70 627.28,172.88 628.49,172.07 629.71,171.25 630.93,170.44 632.16,169.62 633.39,168.81 634.63,167.99 635.88,167.18 637.13,166.36 638.38,165.55 639.64,164.73 640.90,163.92 642.17,163.10 643.44,162.29 644.72,161.47 646.01,160.66 647.29,159.84 648.59,159.03 649.89,158.21 651.19,157.40 652.50,156.58 653.81,155.77 655.13,154.95 656.45,154.14 657.77,153.32 659.11,152.51 660.44,151.69 661.78,150.88 663.13,150.06 664.48,149.25 665.83,148.44 667.19,147.62 668.55,146.80 669.92,145.99 671.29,145.17 672.67,144.36 674.05,143.54 675.43,142.73 676.82,141.91 678.22,141.10 679.61,140.28 681.02,139.47 682.42,138.66 683.83,137.84 685.25,137.02 686.67,136.21 688.09,135.39 689.52,134.58 690.95,133.76 692.38,132.95 693.82,132.13 695.26,131.32 696.71,130.50 698.16,129.69 699.62,128.88 701.08,128.06 702.54,127.24 704.00,126.43 705.47,125.61 706.95,124.80 708.43,123.98 709.91,123.17 711.39,122.35 712.88,121.54 714.37,120.72 715.87,119.91 717.37,119.09 718.87,118.28 720.38,117.47 721.89,116.65 723.40,115.83 724.91,115.02 726.43,114.20 727.96,113.39 729.48,112.57 731.01,111.76 732.55,110.94 734.08,110.13 735.62,109.31 737.17,108.50 738.71,107.69 740.26,106.87 741.81,106.05 743.37,105.24 744.93,104.42 746.49,103.61 748.05,102.79 749.62,101.98 751.19,101.16 752.76,100.35 754.34,99.53 755.91,98.72 757.50,97.91 759.08,97.09 760.67,96.28 762.26,95.46 763.85,94.64 765.44,93.83 767.04,93.01 768.64,92.20 770.24,91.38 771.85,90.57 773.45,89.75 775.06,88.94 776.68,88.12 778.29,87.31 779.91,86.50 781.53,85.68 783.15,84.86 784.77,84.05 786.40,83.23 788.03,82.42 789.66,81.60 791.29,80.79 792.93,79.97 794.56,79.16 796.20,78.34 797.84,77.53 799.49,76.72 801.13,75.90 802.78,75.08 804.43,74.27 806.08,73.45 807.73,72.64 809.38,71.82 811.04,71.01 812.70,70.19 814.36,69.38 816.02,68.56 817.68,67.75 819.34,66.94 821.01,66.12 822.68,65.31 824.35,64.49 826.02,63.68 827.69,62.86 829.36,62.05 831.04,61.23 832.71,60.42 834.39,59.60 836.07,58.78 837.75,57.97 839.43,57.15 841.11,56.34 842.80,55.52 844.48,54.71 846.17,53.89 847.85,53.08 849.54,52.26 851.23,51.45 852.92,50.63 854.61,49.82 856.30,49.00 857.99,48.19 859.69,47.38 861.38,46.56 863.08,45.75 864.77,44.93 866.47,44.12 868.17,43.30 869.86,42.49 871.56,41.67 873.26,40.86 874.96,40.04 876.66,39.23 878.36,38.41 880.06,37.59 881.76,36.78 883.46,35.96 885.17,35.15 886.87,34.33 888.57,33.52 890.27,32.70 891.98,31.89 893.68,31.07 895.38,30.26 897.09,29.44 898.79,28.63 900.50,27.81 902.20,27.00"/><polyline stroke-dashoffset="1.04" points="902.20,613.80 900.28,612.98 898.37,612.17 896.45,611.36 894.53,610.54 892.62,609.72 890.70,608.91 888.78,608.10 886.87,607.28 884.95,606.46 883.04,605.65 881.12,604.84 879.21,604.02 877.29,603.20 875.38,602.39 873.47,601.57 871.55,600.76 869.64,599.94 867.73,599.13 865.82,598.31 863.91,597.50 862.00,596.68 860.09,595.87 858.19,595.05 856.28,594.24 854.37,593.42 852.47,592.61 850.56,591.79 848.66,590.98 846.76,590.16 844.86,589.35 842.96,588.53 841.06,587.72 839.16,586.90 837.26,586.09 835.37,585.27 833.48,584.46 831.58,583.64 829.69,582.83 827.80,582.01 825.91,581.20 824.03,580.38 822.14,579.57 820.26,578.75 818.37,577.94 816.49,577.12 814.61,576.31 812.74,575.49 810.86,574.68 808.99,573.87 807.11,573.05 805.24,572.23 803.38,571.42 801.51,570.61 799.64,569.79 797.78,568.97 795.92,568.16 794.06,567.35 792.20,566.53 790.35,565.71 788.50,564.90 786.65,564.08 784.80,563.27 782.95,562.45 781.11,561.64 779.27,560.82 777.43,560.01 775.59,559.19 773.76,558.38 771.92,557.56 770.09,556.75 768.27,555.93 766.44,555.12 764.62,554.30 762.80,553.49 760.99,552.67 759.17,551.86 757.36,551.04 755.55,550.23 753.75,549.41 751.94,548.60 750.14,547.78 748.35,546.97 746.55,546.15 744.76,545.34 742.97,544.52 741.19,543.71 739.41,542.89 737.63,542.08 735.85,541.26 734.08,540.45 732.31,539.63 730.55,538.82 728.78,538.00 727.02,537.19 725.27,536.38 723.51,535.56 721.76,534.75 720.02,533.93 718.28,533.12 716.54,532.30 714.80,531.48 713.07,530.67 711.34,529.86 709.62,529.04 707.90,528.22 706.18,527.41 704.46,526.60 702.75,525.78 701.05,524.96 699.35,524.15 697.65,523.33 695.95,522.52 694.26,521.70 692.58,520.89 690.89,520.07 689.21,519.26 687.54,518.44 685.87,517.63 684.20,516.81 682.54,516.00 680.88,515.18 679.23,514.37 677.58,513.55 675.94,512.74 674.29,511.92 672.66,511.11 671.03,510.29 669.40,509.48 667.77,508.66 666.16,507.85 664.54,507.03 662.93,506.22 661.33,505.40 659.72,504.59 658.13,503.77 656.54,502.96 654.95,502.14 653.37,501.33 651.79,500.51 650.22,499.70 648.65,498.88 647.09,498.07 645.53,497.25 643.98,496.44 642.43,495.62 640.88,494.81 639.35,494.00 637.81,493.18 636.28,492.36 634.76,491.55 633.24,490.73 631.73,489.92 630.22,489.10 628.72,488.29 627.22,487.47 625.73,486.66 624.24,485.84 622.76,485.03 621.28,484.21 619.81,483.40 618.35,482.58 616.89,481.77 615.43,480.95 613.98,480.14 612.54,479.32 611.10,478.51 609.67,477.69 608.24,476.88 606.82,476.06 605.40,475.25 603.99,474.43 602.59,473.62 601.19,472.80 599.79,471.99 598.41,471.17 597.02,470.36 595.65,469.54 594.28,468.73 592.91,467.91 591.56,467.10 590.20,466.28 588.86,465.47 587.52,464.65 586.18,463.84 584.85,463.02 583.53,462.21 582.21,461.39 580.90,460.58 579.60,459.76 578.30,458.95 577.01,458.13 575.72,457.32 574.44,456.50 573.17,455.69 571.90,454.88 570.64,454.06 569.39,453.25 568.14,452.43 566.90,451.62 565.66,450.80 564.43,449.98 563.21,449.17 562.00,448.35 560.79,447.54 559.58,446.72 558.39,445.91 557.20,445.09 556.01,444.28 554.84,443.46 553.67,442.65 552.50,441.83 551.35,441.02 550.20,440.20 549.05,439.39 547.92,438.57 546.79,437.76 545.66,436.94 544.55,436.13 543.44,435.31 542.33,434.50 541.24,433.68 540.15,432.87 539.07,432.05 537.99,431.24 536.92,430.42 535.86,429.61 534.81,428.79 533.76,427.98 532.72,427.16 531.68,426.35 530.66,425.53 529.64,424.72 528.63,423.90 527.62,423.09 526.62,422.27 525.63,421.46 524.65,420.64 523.67,419.83 522.70,419.01 521.74,418.20 520.79,417.38 519.84,416.57 518.90,415.75 517.96,414.94 517.04,414.12 516.12,413.31 515.21,412.50 514.31,411.68 513.41,410.86 512.52,410.05 511.64,409.23 510.77,408.42 509.90,407.60 509.04,406.79 508.19,405.97 507.34,405.16 506.51,404.34 505.68,403.53 504.86,402.71 504.04,401.90 503.24,401.08 502.44,400.27 501.65,399.45 500.86,398.64 500.09,397.82 499.32,397.01 498.56,396.19 497.81,395.38 497.06,394.56 496.32,393.75 495.59,392.93 494.87,392.12 494.16,391.30 493.45,390.49 492.75,389.67 492.06,388.86 491.38,388.04 490.70,387.23 490.04,386.41 489.38,385.60 488.73,384.78 488.08,383.97 487.45,383.15 486.82,382.34 486.20,381.52 485.59,380.71 484.98,379.89 484.38,379.08 483.80,378.26 483.22,377.45 482.64,376.63 482.08,375.82 481.52,375.00 480.97,374.19 480.43,373.38 479.90,372.56 479.38,371.75 478.86,370.93 478.35,370.11 477.85,369.30 477.36,368.48 476.88,367.67 476.40,366.85 475.93,366.04 475.47,365.22 475.02,364.41 474.58,363.59 474.14,362.78 473.72,361.96 473.30,361.15 472.89,360.33 472.48,359.52 472.09,358.70 471.70,357.89 471.32,357.07 470.95,356.26 470.59,355.44 470.24,354.63 469.89,353.81 469.56,353.00 469.23,352.18 468.91,351.37 468.60,350.55 468.29,349.74 468.00,348.92 467.71,348.11 467.43,347.29 467.16,346.48 466.90,345.66 466.64,344.85 466.40,344.03 466.16,343.22 465.93,342.40 465.71,341.59 465.49,340.77 465.29,339.96 465.09,339.14 464.91,338.33 464.73,337.51 464.55,336.70 464.39,335.88 464.24,335.07 464.09,334.25 463.95,333.44 463.82,332.62 463.70,331.81 463.59,331.00 463.49,330.18 463.39,329.36 463.30,328.55 463.22,327.73 463.15,326.92 463.09,326.10 463.03,325.29 462.99,324.47 462.95,323.66 462.92,322.84 462.90,322.03 462.89,321.21 462.88,320.40 462.89,319.58 462.90,318.77 462.92,317.95 462.95,317.14 462.99,316.32 463.03,315.51 463.09,314.69 463.15,313.88 463.22,313.06 463.30,312.25 463.39,311.44 463.49,310.62 463.59,309.80 463.70,308.99 463.82,308.17 463.95,307.36 464.09,306.54 464.24,305.73 464.39,304.91 464.55,304.10 464.73,303.28 464.91,302.47 465.09,301.65 465.29,300.84 465.49,300.02 465.71,299.21 465.93,298.39 466.16,297.58 466.40,296.76 466.64,295.95 466.90,295.13 467.16,294.32 467.43,293.50 467.71,292.69 468.00,291.88 468.29,291.06 468.60,290.25 468.91,289.43 469.23,288.62 469.56,287.80 469.89,286.98 470.24,286.17 470.59,285.35 470.95,284.54 471.32,283.72 471.70,282.91 472.09,282.09 472.48,281.28 472.89,280.46 473.30,279.65 473.72,278.83 474.14,278.02 474.58,277.20 475.02,276.39 475.47,275.57 475.93,274.76 476.40,273.94 476.88,273.13 477.36,272.31 477.85,271.50 478.35,270.69 478.86,269.87 479.38,269.05 479.90,268.24 480.43,267.42 480.97,266.61 481.52,265.79 482.08,264.98 482.64,264.16 483.22,263.35 483.80,262.53 484.38,261.72 484.98,260.90 485.59,260.09 486.20,259.27 486.82,258.46 487.45,257.64 488.08,256.83 488.73,256.01 489.38,255.20 490.04,254.38 490.70,253.57 491.38,252.75 492.06,251.94 492.75,251.12 493.45,250.31 494.16,249.49 494.87,248.68 495.59,247.86 496.32,247.05 497.06,246.23 497.81,245.42 498.56,244.60 499.32,243.79 500.09,242.97 500.86,242.16 501.65,241.34 502.44,240.53 503.24,239.71 504.04,238.90 504.86,238.08 505.68,237.27 506.51,236.45 507.34,235.64 508.19,234.82 509.04,234.01 509.90,233.19 510.77,232.38 511.64,231.56 512.52,230.75 513.41,229.94 514.31,229.12 515.21,228.30 516.12,227.49 517.04,226.67 517.96,225.86 518.90,225.04 519.84,224.23 520.79,223.41 521.74,222.60 522.70,221.78 523.67,220.97 524.65,220.15 525.63,219.34 526.62,218.52 527.62,217.71 528.63,216.89 529.64,216.08 530.66,215.26 531.68,214.45 532.72,213.63 533.76,212.82 534.81,212.00 535.86,211.19 536.92,210.38 537.99,209.56 539.07,208.75 540.15,207.93 541.24,207.11 542.33,206.30 543.44,205.48 544.55,204.67 545.66,203.85 546.79,203.04 547.92,202.22 549.05,201.41 550.20,200.59 551.35,199.78 552.50,198.96 553.67,198.15 554.84,197.33 556.01,196.52 557.20,195.70 558.39,194.89 559.58,194.07 560.79,193.26 562.00,192.44 563.21,191.63 564.43,190.81 565.66,190.00 566.90,189.18 568.14,188.37 569.39,187.55 570.64,186.74 571.90,185.92 573.17,185.11 574.44,184.29 575.72,183.48 577.01,182.66 578.30,181.85 579.60,181.03 580.90,180.22 582.21,179.40 583.53,178.59 584.85,177.77 586.18,176.96 587.52,176.14 588.86,175.33 590.20,174.51 591.56,173.70 592.91,172.88 594.28,172.07 595.65,171.25 597.02,170.44 598.41,169.62 599.79,168.81 601.19,167.99 602.59,167.18 603.99,166.36 605.40,165.55 606.82,164.73 608.24,163.92 609.67,163.10 611.10,162.29 612.54,161.47 613.98,160.66 615.43,159.84 616.89,159.03 618.35,158.21 619.81,157.40 621.28,156.58 622.76,155.77 624.24,154.95 625.73,154.14 627.22,153.32 628.72,152.51 630.22,151.69 631.73,150.88 633.24,150.06 634.76,149.25 636.28,148.44 637.81,147.62 639.35,146.80 640.88,145.99 642.43,145.17 643.98,144.36 645.53,143.54 647.09,142.73 648.65,141.91 650.22,141.10 651.79,140.28 653.37,139.47 654.95,138.66 656.54,137.84 658.13,137.02 659.72,136.21 661.33,135.39 662.93,134.58 664.54,133.76 666.16,132.95 667.77,132.13 669.40,131.32 671.03,130.50 672.66,129.69 674.29,128.88 675.94,128.06 677.58,127.24 679.23,126.43 680.88,125.61 682.54,124.80 684.20,123.98 685.87,123.17 687.54,122.35 689.21,121.54 690.89,120.72 692.58,119.91 694.26,119.09 695.95,118.28 697.65,117.47 699.35,116.65 701.05,115.83 702.75,115.02 704.46,114.20 706.18,113.39 707.90,112.57 709.62,111.76 711.34,110.94 713.07,110.13 714.80,109.31 716.54,108.50 718.28,107.69 720.02,106.87 721.76,106.05 723.51,105.24 725.27,104.42 727.02,103.61 728.78,102.79 730.55,101.98 732.31,101.16 734.08,100.35 735.85,99.53 737.63,98.72 739.41,97.91 741.19,97.09 742.97,96.28 744.76,95.46 746.55,94.64 748.35,93.83 750.14,93.01 751.94,92.20 753.75,91.38 755.55,90.57 757.36,89.75 759.17,88.94 760.99,88.12 762.80,87.31 764.62,86.50 766.44,85.68 768.27,84.86 770.09,84.05 771.92,83.23 773.76,82.42 775.59,81.60 777.43,80.79 779.27,79.97 781.11,79.16 782.95,78.34 784.80,77.53 786.65,76.72 788.50,75.90 790.35,75.08 792.20,74.27 794.06,73.45 795.92,72.64 797.78,71.82 799.64,71.01 801.51,70.19 803.38,69.38 805.24,68.56 807.11,67.75 808.99,66.94 810.86,66.12 812.74,65.31 814.61,64.49 816.49,63.68 818.37,62.86 820.26,62.05 822.14,61.23 824.03,60.42 825.91,59.60 827.80,58.78 829.69,57.97 831.58,57.15 833.48,56.34 835.37,55.52 837.26,54.71 839.16,53.89 841.06,53.08 842.96,52.26 844.86,51.45 846.76,50.63 848.66,49.82 850.56,49.00 852.47,48.19 854.37,47.38 856.28,46.56 858.19,45.75 860.09,44.93 862.00,44.12 863.91,43.30 865.82,42.49 867.73,41.67 869.64,40.86 871.55,40.04 873.47,39.23 875.38,38.41 877.29,37.59 879.21,36.78 881.12,35.96 883.04,35.15 884.95,34.33 886.87,33.52 888.78,32.70 890.70,31.89 892.62,31.07 894.53,30.26 896.45,29.44 898.37,28.63 900.28,27.81 902.20,27.00"/><polyline stroke-dashoffset="1.04" points="902.20,613.80 900.07,612.98 897.94,612.17 895.81,611.36 893.68,610.54 891.55,609.72 889.42,608.91 887.29,608.10 885.16,607.28 883.04,606.46 880.91,605.65 878.78,604.84 876.65,604.02 874.53,603.20 872.40,602.39 870.27,601.57 868.15,600.76 866.03,599.94 863.90,599.13 861.78,598.31 859.66,597.50 857.54,596.68 855.41,595.87 853.30,595.05 851.18,594.24 849.06,593.42 846.94,592.61 844.83,591.79 842.71,590.98 840.60,590.16 838.49,589.35 836.38,588.53 834.27,587.72 832.16,586.90 830.05,586.09 827.94,585.27 825.84,584.46 823.74,583.64 821.64,582.83 819.54,582.01 817.44,581.20 815.34,580.38 813.25,579.57 811.15,578.75 809.06,577.94 806.97,577.12 804.88,576.31 802.80,575.49 800.71,574.68 798.63,573.87 796.55,573.05 794.47,572.23 792.39,571.42 790.32,570.61 788.25,569.79 786.18,568.97 784.11,568.16 782.05,567.35 779.98,566.53 777.92,565.71 775.86,564.90 773.81,564.08 771.75,563.27 769.70,562.45 767.65,561.64 765.61,560.82 763.56,560.01 761.52,559.19 759.48,558.38 757.45,557.56 755.42,556.75 753.39,555.93 751.36,555.12 749.34,554.30 747.31,553.49 745.30,552.67 743.28,551.86 741.27,551.04 739.26,550.23 737.25,549.41 735.25,548.60 733.25,547.78 731.25,546.97 729.26,546.15 727.27,545.34 725.28,544.52 723.30,543.71 721.32,542.89 719.34,542.08 717.37,541.26 715.40,540.45 713.43,539.63 711.47,538.82 709.51,538.00 707.56,537.19 705.61,536.38 703.66,535.56 701.72,534.75 699.78,533.93 697.84,533.12 695.91,532.30 693.98,531.48 692.05,530.67 690.13,529.86 688.22,529.04 686.31,528.22 684.40,527.41 682.49,526.60 680.59,525.78 678.70,524.96 676.81,524.15 674.92,523.33 673.04,522.52 671.16,521.70 669.28,520.89 667.41,520.07 665.55,519.26 663.69,518.44 661.83,517.63 659.98,516.81 658.13,516.00 656.29,515.18 654.46,514.37 652.62,513.55 650.79,512.74 648.97,511.92 647.15,511.11 645.34,510.29 643.53,509.48 641.73,508.66 639.93,507.85 638.13,507.03 636.35,506.22 634.56,505.40 632.78,504.59 631.01,503.77 629.24,502.96 627.48,502.14 625.72,501.33 623.97,500.51 622.22,499.70 620.48,498.88 618.74,498.07 617.01,497.25 615.28,496.44 613.56,495.62 611.85,494.81 610.14,494.00 608.44,493.18 606.74,492.36 605.05,491.55 603.36,490.73 601.68,489.92 600.00,489.10 598.33,488.29 596.67,487.47 595.01,486.66 593.36,485.84 591.71,485.03 590.07,484.21 588.44,483.40 586.81,482.58 585.18,481.77 583.57,480.95 581.96,480.14 580.35,479.32 578.76,478.51 577.16,477.69 575.58,476.88 574.00,476.06 572.42,475.25 570.86,474.43 569.30,473.62 567.74,472.80 566.19,471.99 564.65,471.17 563.12,470.36 561.59,469.54 560.07,468.73 558.55,467.91 557.04,467.10 555.54,466.28 554.04,465.47 552.55,464.65 551.07,463.84 549.59,463.02 548.12,462.21 546.66,461.39 545.20,460.58 543.76,459.76 542.31,458.95 540.88,458.13 539.45,457.32 538.03,456.50 536.61,455.69 535.20,454.88 533.80,454.06 532.41,453.25 531.02,452.43 529.64,451.62 528.27,450.80 526.91,449.98 525.55,449.17 524.20,448.35 522.85,447.54 521.51,446.72 520.19,445.91 518.86,445.09 517.55,444.28 516.24,443.46 514.94,442.65 513.65,441.83 512.36,441.02 511.08,440.20 509.81,439.39 508.55,438.57 507.29,437.76 506.05,436.94 504.81,436.13 503.57,435.31 502.35,434.50 501.13,433.68 499.92,432.87 498.72,432.05 497.52,431.24 496.33,430.42 495.16,429.61 493.98,428.79 492.82,427.98 491.66,427.16 490.52,426.35 489.37,425.53 488.24,424.72 487.12,423.90 486.00,423.09 484.89,422.27 483.79,421.46 482.70,420.64 481.61,419.83 480.54,419.01 479.47,418.20 478.41,417.38 477.35,416.57 476.31,415.75 475.27,414.94 474.24,414.12 473.22,413.31 472.21,412.50 471.21,411.68 470.21,410.86 469.22,410.05 468.24,409.23 467.27,408.42 466.31,407.60 465.36,406.79 464.41,405.97 463.47,405.16 462.54,404.34 461.62,403.53 460.71,402.71 459.80,401.90 458.91,401.08 458.02,400.27 457.14,399.45 456.27,398.64 455.41,397.82 454.56,397.01 453.71,396.19 452.87,395.38 452.05,394.56 451.23,393.75 450.42,392.93 449.61,392.12 448.82,391.30 448.04,390.49 447.26,389.67 446.49,388.86 445.73,388.04 444.98,387.23 444.24,386.41 443.51,385.60 442.78,384.78 442.07,383.97 441.36,383.15 440.66,382.34 439.97,381.52 439.29,380.71 438.62,379.89 437.96,379.08 437.31,378.26 436.66,377.45 436.03,376.63 435.40,375.82 434.78,375.00 434.17,374.19 433.57,373.38 432.98,372.56 432.40,371.75 431.82,370.93 431.26,370.11 430.70,369.30 430.16,368.48 429.62,367.67 429.09,366.85 428.57,366.04 428.06,365.22 427.56,364.41 427.06,363.59 426.58,362.78 426.11,361.96 425.64,361.15 425.18,360.33 424.74,359.52 424.30,358.70 423.87,357.89 423.45,357.07 423.04,356.26 422.64,355.44 422.24,354.63 421.86,353.81 421.49,353.00 421.12,352.18 420.76,351.37 420.42,350.55 420.08,349.74 419.75,348.92 419.43,348.11 419.12,347.29 418.82,346.48 418.53,345.66 418.25,344.85 417.97,344.03 417.71,343.22 417.45,342.40 417.21,341.59 416.97,340.77 416.74,339.96 416.53,339.14 416.32,338.33 416.12,337.51 415.93,336.70 415.75,335.88 415.57,335.07 415.41,334.25 415.26,333.44 415.12,332.62 414.98,331.81 414.86,331.00 414.74,330.18 414.63,329.36 414.53,328.55 414.45,327.73 414.37,326.92 414.30,326.10 414.24,325.29 414.19,324.47 414.14,323.66 414.11,322.84 414.09,322.03 414.07,321.21 414.07,320.40 414.07,319.58 414.09,318.77 414.11,317.95 414.14,317.14 414.19,316.32 414.24,315.51 414.30,314.69 414.37,313.88 414.45,313.06 414.53,312.25 414.63,311.44 414.74,310.62 414.86,309.80 414.98,308.99 415.12,308.17 415.26,307.36 415.41,306.54 415.57,305.73 415.75,304.91 415.93,304.10 416.12,303.28 416.32,302.47 416.53,301.65 416.74,300.84 416.97,300.02 417.21,299.21 417.45,298.39 417.71,297.58 417.97,296.76 418.25,295.95 418.53,295.13 418.82,294.32 419.12,293.50 419.43,292.69 419.75,291.88 420.08,291.06 420.42,290.25 420.76,289.43 421.12,288.62 421.49,287.80 421.86,286.98 422.24,286.17 422.64,285.35 423.04,284.54 423.45,283.72 423.87,282.91 424.30,282.09 424.74,281.28 425.18,280.46 425.64,279.65 426.11,278.83 426.58,278.02 427.06,277.20 427.56,276.39 428.06,275.57 428.57,274.76 429.09,273.94 429.62,273.13 430.16,272.31 430.70,271.50 431.26,270.69 431.82,269.87 432.40,269.05 432.98,268.24 433.57,267.42 434.17,266.61 434.78,265.79 435.40,264.98 436.03,264.16 436.66,263.35 437.31,262.53 437.96,261.72 438.62,260.90 439.29,260.09 439.97,259.27 440.66,258.46 441.36,257.64 442.07,256.83 442.78,256.01 443.51,255.20 444.24,254.38 444.98,253.57 445.73,252.75 446.49,251.94 447.26,251.12 448.04,250.31 448.82,249.49 449.61,248.68 450.42,247.86 451.23,247.05 452.05,246.23 452.87,245.42 453.71,244.60 454.56,243.79 455.41,242.97 456.27,242.16 457.14,241.34 458.02,240.53 458.91,239.71 459.80,238.90 460.71,238.08 461.62,237.27 462.54,236.45 463.47,235.64 464.41,234.82 465.36,234.01 466.31,233.19 467.27,232.38 468.24,231.56 469.22,230.75 470.21,229.94 471.21,229.12 472.21,228.30 473.22,227.49 474.24,226.67 475.27,225.86 476.31,225.04 477.35,224.23 478.41,223.41 479.47,222.60 480.54,221.78 481.61,220.97 482.70,220.15 483.79,219.34 484.89,218.52 486.00,217.71 487.12,216.89 488.24,216.08 489.37,215.26 490.52,214.45 491.66,213.63 492.82,212.82 493.98,212.00 495.16,211.19 496.33,210.38 497.52,209.56 498.72,208.75 499.92,207.93 501.13,207.11 502.35,206.30 503.57,205.48 504.81,204.67 506.05,203.85 507.29,203.04 508.55,202.22 509.81,201.41 511.08,200.59 512.36,199.78 513.65,198.96 514.94,198.15 516.24,197.33 517.55,196.52 518.86,195.70 520.19,194.89 521.51,194.07 522.85,193.26 524.20,192.44 525.55,191.63 526.91,190.81 528.27,190.00 529.64,189.18 531.02,188.37 532.41,187.55 533.80,186.74 535.20,185.92 536.61,185.11 538.03,184.29 539.45,183.48 540.88,182.66 542.31,181.85 543.76,181.03 545.20,180.22 546.66,179.40 548.12,178.59 549.59,177.77 551.07,176.96 552.55,176.14 554.04,175.33 555.54,174.51 557.04,173.70 558.55,172.88 560.07,172.07 561.59,171.25 563.12,170.44 564.65,169.62 566.19,168.81 567.74,167.99 569.30,167.18 570.86,166.36 572.42,165.55 574.00,164.73 575.58,163.92 577.16,163.10 578.76,162.29 580.35,161.47 581.96,160.66 583.57,159.84 585.18,159.03 586.81,158.21 588.44,157.40 590.07,156.58 591.71,155.77 593.36,154.95 595.01,154.14 596.67,153.32 598.33,152.51 600.00,151.69 601.68,150.88 603.36,150.06 605.05,149.25 606.74,148.44 608.44,147.62 610.14,146.80 611.85,145.99 613.56,145.17 615.28,144.36 617.01,143.54 618.74,142.73 620.48,141.91 622.22,141.10 623.97,140.28 625.72,139.47 627.48,138.66 629.24,137.84 631.01,137.02 632.78,136.21 634.56,135.39 636.35,134.58 638.13,133.76 639.93,132.95 641.73,132.13 643.53,131.32 645.34,130.50 647.15,129.69 648.97,128.88 650.79,128.06 652.62,127.24 654.46,126.43 656.29,125.61 658.13,124.80 659.98,123.98 661.83,123.17 663.69,122.35 665.55,121.54 667.41,120.72 669.28,119.91 671.16,119.09 673.04,118.28 674.92,117.47 676.81,116.65 678.70,115.83 680.59,115.02 682.49,114.20 684.40,113.39 686.31,112.57 688.22,111.76 690.13,110.94 692.05,110.13 693.98,109.31 695.91,108.50 697.84,107.69 699.78,106.87 701.72,106.05 703.66,105.24 705.61,104.42 707.56,103.61 709.51,102.79 711.47,101.98 713.43,101.16 715.40,100.35 717.37,99.53 719.34,98.72 721.32,97.91 723.30,97.09 725.28,96.28 727.27,95.46 729.26,94.64 731.25,93.83 733.25,93.01 735.25,92.20 737.25,91.38 739.26,90.57 741.27,89.75 743.28,88.94 745.30,88.12 747.31,87.31 749.34,86.50 751.36,85.68 753.39,84.86 755.42,84.05 757.45,83.23 759.48,82.42 761.52,81.60 763.56,80.79 765.61,79.97 767.65,79.16 769.70,78.34 771.75,77.53 773.81,76.72 775.86,75.90 777.92,75.08 779.98,74.27 782.05,73.45 784.11,72.64 786.18,71.82 788.25,71.01 790.32,70.19 792.39,69.38 794.47,68.56 796.55,67.75 798.63,66.94 800.71,66.12 802.80,65.31 804.88,64.49 806.97,63.68 809.06,62.86 811.15,62.05 813.25,61.23 815.34,60.42 817.44,59.60 819.54,58.78 821.64,57.97 823.74,57.15 825.84,56.34 827.94,55.52 830.05,54.71 832.16,53.89 834.27,53.08 836.38,52.26 838.49,51.45 840.60,50.63 842.71,49.82 844.83,49.00 846.94,48.19 849.06,47.38 851.18,46.56 853.30,45.75 855.41,44.93 857.54,44.12 859.66,43.30 861.78,42.49 863.90,41.67 866.03,40.86 868.15,40.04 870.27,39.23 872.40,38.41 874.53,37.59 876.65,36.78 878.78,35.96 880.91,35.15 883.04,34.33 885.16,33.52 887.29,32.70 889.42,31.89 891.55,31.07 893.68,30.26 895.81,29.44 897.94,28.63 900.07,27.81 902.20,27.00"/><polyline stroke-dashoffset="1.04" points="902.20,613.80 899.86,612.98 897.51,612.17 895.17,611.36 892.83,610.54 890.49,609.72 888.14,608.91 885.80,608.10 883.46,607.28 881.12,606.46 878.78,605.65 876.44,604.84 874.10,604.02 871.76,603.20 869.42,602.39 867.08,601.57 864.74,600.76 862.41,599.94 860.07,599.13 857.74,598.31 855.40,597.50 853.07,596.68 850.74,595.87 848.40,595.05 846.07,594.24 843.74,593.42 841.42,592.61 839.09,591.79 836.76,590.98 834.44,590.16 832.11,589.35 829.79,588.53 827.47,587.72 825.15,586.90 822.83,586.09 820.52,585.27 818.20,584.46 815.89,583.64 813.58,582.83 811.27,582.01 808.96,581.20 806.65,580.38 804.35,579.57 802.05,578.75 799.75,577.94 797.45,577.12 795.15,576.31 792.86,575.49 790.56,574.68 788.27,573.87 785.98,573.05 783.70,572.23 781.41,571.42 779.13,570.61 776.85,569.79 774.58,568.97 772.30,568.16 770.03,567.35 767.76,566.53 765.49,565.71 763.23,564.90 760.97,564.08 758.71,563.27 756.45,562.45 754.20,561.64 751.95,560.82 749.70,560.01 747.46,559.19 745.21,558.38 742.97,557.56 740.74,556.75 738.51,555.93 736.28,555.12 734.05,554.30 731.83,553.49 729.61,552.67 727.39,551.86 725.17,551.04 722.96,550.23 720.76,549.41 718.55,548.60 716.35,547.78 714.16,546.97 711.97,546.15 709.78,545.34 707.59,544.52 705.41,543.71 703.23,542.89 701.06,542.08 698.89,541.26 696.72,540.45 694.56,539.63 692.40,538.82 690.25,538.00 688.09,537.19 685.95,536.38 683.81,535.56 681.67,534.75 679.53,533.93 677.40,533.12 675.28,532.30 673.16,531.48 671.04,530.67 668.93,529.86 666.82,529.04 664.72,528.22 662.62,527.41 660.52,526.60 658.43,525.78 656.35,524.96 654.27,524.15 652.19,523.33 650.12,522.52 648.05,521.70 645.99,520.89 643.94,520.07 641.88,519.26 639.84,518.44 637.80,517.63 635.76,516.81 633.73,516.00 631.70,515.18 629.68,514.37 627.66,513.55 625.65,512.74 623.65,511.92 621.65,511.11 619.65,510.29 617.66,509.48 615.68,508.66 613.70,507.85 611.73,507.03 609.76,506.22 607.80,505.40 605.84,504.59 603.89,503.77 601.95,502.96 600.01,502.14 598.07,501.33 596.14,500.51 594.22,499.70 592.31,498.88 590.40,498.07 588.49,497.25 586.59,496.44 584.70,495.62 582.81,494.81 580.93,494.00 579.06,493.18 577.19,492.36 575.33,491.55 573.47,490.73 571.62,489.92 569.78,489.10 567.95,488.29 566.11,487.47 564.29,486.66 562.47,485.84 560.66,485.03 558.86,484.21 557.06,483.40 555.27,482.58 553.48,481.77 551.71,480.95 549.93,480.14 548.17,479.32 546.41,478.51 544.66,477.69 542.92,476.88 541.18,476.06 539.45,475.25 537.72,474.43 536.01,473.62 534.30,472.80 532.59,471.99 530.90,471.17 529.21,470.36 527.53,469.54 525.85,468.73 524.18,467.91 522.52,467.10 520.87,466.28 519.23,465.47 517.59,464.65 515.96,463.84 514.33,463.02 512.72,462.21 511.11,461.39 509.50,460.58 507.91,459.76 506.32,458.95 504.75,458.13 503.17,457.32 501.61,456.50 500.05,455.69 498.50,454.88 496.96,454.06 495.43,453.25 493.91,452.43 492.39,451.62 490.88,450.80 489.38,449.98 487.88,449.17 486.40,448.35 484.92,447.54 483.45,446.72 481.98,445.91 480.53,445.09 479.08,444.28 477.64,443.46 476.21,442.65 474.79,441.83 473.38,441.02 471.97,440.20 470.57,439.39 469.19,438.57 467.80,437.76 466.43,436.94 465.07,436.13 463.71,435.31 462.36,434.50 461.02,433.68 459.69,432.87 458.37,432.05 457.05,431.24 455.75,430.42 454.45,429.61 453.16,428.79 451.88,427.98 450.61,427.16 449.35,426.35 448.09,425.53 446.85,424.72 445.61,423.90 444.38,423.09 443.16,422.27 441.95,421.46 440.75,420.64 439.55,419.83 438.37,419.01 437.19,418.20 436.03,417.38 434.87,416.57 433.72,415.75 432.58,414.94 431.45,414.12 430.33,413.31 429.21,412.50 428.11,411.68 427.01,410.86 425.93,410.05 424.85,409.23 423.78,408.42 422.72,407.60 421.67,406.79 420.63,405.97 419.60,405.16 418.58,404.34 417.56,403.53 416.56,402.71 415.56,401.90 414.58,401.08 413.60,400.27 412.64,399.45 411.68,398.64 410.73,397.82 409.79,397.01 408.86,396.19 407.94,395.38 407.03,394.56 406.13,393.75 405.24,392.93 404.36,392.12 403.48,391.30 402.62,390.49 401.76,389.67 400.92,388.86 400.09,388.04 399.26,387.23 398.44,386.41 397.64,385.60 396.84,384.78 396.06,383.97 395.28,383.15 394.51,382.34 393.75,381.52 393.00,380.71 392.27,379.89 391.54,379.08 390.82,378.26 390.11,377.45 389.41,376.63 388.72,375.82 388.04,375.00 387.37,374.19 386.71,373.38 386.06,372.56 385.42,371.75 384.79,370.93 384.16,370.11 383.55,369.30 382.95,368.48 382.36,367.67 381.78,366.85 381.21,366.04 380.64,365.22 380.09,364.41 379.55,363.59 379.02,362.78 378.50,361.96 377.98,361.15 377.48,360.33 376.99,359.52 376.51,358.70 376.04,357.89 375.57,357.07 375.12,356.26 374.68,355.44 374.25,354.63 373.83,353.81 373.41,353.00 373.01,352.18 372.62,351.37 372.24,350.55 371.87,349.74 371.51,348.92 371.15,348.11 370.81,347.29 370.48,346.48 370.16,345.66 369.85,344.85 369.55,344.03 369.26,343.22 368.98,342.40 368.71,341.59 368.45,340.77 368.20,339.96 367.96,339.14 367.73,338.33 367.51,337.51 367.30,336.70 367.10,335.88 366.91,335.07 366.73,334.25 366.56,333.44 366.41,332.62 366.26,331.81 366.12,331.00 365.99,330.18 365.88,329.36 365.77,328.55 365.67,327.73 365.58,326.92 365.51,326.10 365.44,325.29 365.38,324.47 365.34,323.66 365.30,322.84 365.28,322.03 365.26,321.21 365.26,320.40 365.26,319.58 365.28,318.77 365.30,317.95 365.34,317.14 365.38,316.32 365.44,315.51 365.51,314.69 365.58,313.88 365.67,313.06 365.77,312.25 365.88,311.44 365.99,310.62 366.12,309.80 366.26,308.99 366.41,308.17 366.56,307.36 366.73,306.54 366.91,305.73 367.10,304.91 367.30,304.10 367.51,303.28 367.73,302.47 367.96,301.65 368.20,300.84 368.45,300.02 368.71,299.21 368.98,298.39 369.26,297.58 369.55,296.76 369.85,295.95 370.16,295.13 370.48,294.32 370.81,293.50 371.15,292.69 371.51,291.88 371.87,291.06 372.24,290.25 372.62,289.43 373.01,288.62 373.41,287.80 373.83,286.98 374.25,286.17 374.68,285.35 375.12,284.54 375.57,283.72 376.04,282.91 376.51,282.09 376.99,281.28 377.48,280.46 377.98,279.65 378.50,278.83 379.02,278.02 379.55,277.20 380.09,276.39 380.64,275.57 381.21,274.76 381.78,273.94 382.36,273.13 382.95,272.31 383.55,271.50 384.16,270.69 384.79,269.87 385.42,269.05 386.06,268.24 386.71,267.42 387.37,266.61 388.04,265.79 388.72,264.98 389.41,264.16 390.11,263.35 390.82,262.53 391.54,261.72 392.27,260.90 393.00,260.09 393.75,259.27 394.51,258.46 395.28,257.64 396.06,256.83 396.84,256.01 397.64,255.20 398.44,254.38 399.26,253.57 400.09,252.75 400.92,251.94 401.76,251.12 402.62,250.31 403.48,249.49 404.36,248.68 405.24,247.86 406.13,247.05 407.03,246.23 407.94,245.42 408.86,244.60 409.79,243.79 410.73,242.97 411.68,242.16 412.64,241.34 413.60,240.53 414.58,239.71 415.56,238.90 416.56,238.08 417.56,237.27 418.58,236.45 419.60,235.64 420.63,234.82 421.67,234.01 422.72,233.19 423.78,232.38 424.85,231.56 425.93,230.75 427.01,229.94 428.11,229.12 429.21,228.30 430.33,227.49 431.45,226.67 432.58,225.86 433.72,225.04 434.87,224.23 436.03,223.41 437.19,222.60 438.37,221.78 439.55,220.97 440.75,220.15 441.95,219.34 443.16,218.52 444.38,217.71 445.61,216.89 446.85,216.08 448.09,215.26 449.35,214.45 450.61,213.63 451.88,212.82 453.16,212.00 454.45,211.19 455.75,210.38 457.05,209.56 458.37,208.75 459.69,207.93 461.02,207.11 462.36,206.30 463.71,205.48 465.07,204.67 466.43,203.85 467.80,203.04 469.19,202.22 470.57,201.41 471.97,200.59 473.38,199.78 474.79,198.96 476.21,198.15 477.64,197.33 479.08,196.52 480.53,195.70 481.98,194.89 483.45,194.07 484.92,193.26 486.40,192.44 487.88,191.63 489.38,190.81 490.88,190.00 492.39,189.18 493.91,188.37 495.43,187.55 496.96,186.74 498.50,185.92 500.05,185.11 501.61,184.29 503.17,183.48 504.75,182.66 506.32,181.85 507.91,181.03 509.50,180.22 511.11,179.40 512.72,178.59 514.33,177.77 515.96,176.96 517.59,176.14 519.23,175.33 520.87,174.51 522.52,173.70 524.18,172.88 525.85,172.07 527.53,171.25 529.21,170.44 530.90,169.62 532.59,168.81 534.30,167.99 536.01,167.18 537.72,166.36 539.45,165.55 541.18,164.73 542.92,163.92 544.66,163.10 546.41,162.29 548.17,161.47 549.93,160.66 551.71,159.84 553.48,159.03 555.27,158.21 557.06,157.40 558.86,156.58 560.66,155.77 562.47,154.95 564.29,154.14 566.11,153.32 567.95,152.51 569.78,151.69 571.62,150.88 573.47,150.06 575.33,149.25 577.19,148.44 579.06,147.62 580.93,146.80 582.81,145.99 584.70,145.17 586.59,144.36 588.49,143.54 590.40,142.73 592.31,141.91 594.22,141.10 596.14,140.28 598.07,139.47 600.01,138.66 601.95,137.84 603.89,137.02 605.84,136.21 607.80,135.39 609.76,134.58 611.73,133.76 613.70,132.95 615.68,132.13 617.66,131.32 619.65,130.50 621.65,129.69 623.65,128.88 625.65,128.06 627.66,127.24 629.68,126.43 631.70,125.61 633.73,124.80 635.76,123.98 637.80,123.17 639.84,122.35 641.88,121.54 643.94,120.72 645.99,119.91 648.05,119.09 650.12,118.28 652.19,117.47 654.27,116.65 656.35,115.83 658.43,115.02 660.52,114.20 662.62,113.39 664.72,112.57 666.82,111.76 668.93,110.94 671.04,110.13 673.16,109.31 675.28,108.50 677.40,107.69 679.53,106.87 681.67,106.05 683.81,105.24 685.95,104.42 688.09,103.61 690.25,102.79 692.40,101.98 694.56,101.16 696.72,100.35 698.89,99.53 701.06,98.72 703.23,97.91 705.41,97.09 707.59,96.28 709.78,95.46 711.97,94.64 714.16,93.83 716.35,93.01 718.55,92.20 720.76,91.38 722.96,90.57 725.17,89.75 727.39,88.94 729.61,88.12 731.83,87.31 734.05,86.50 736.28,85.68 738.51,84.86 740.74,84.05 742.97,83.23 745.21,82.42 747.46,81.60 749.70,80.79 751.95,79.97 754.20,79.16 756.45,78.34 758.71,77.53 760.97,76.72 763.23,75.90 765.49,75.08 767.76,74.27 770.03,73.45 772.30,72.64 774.58,71.82 776.85,71.01 779.13,70.19 781.41,69.38 783.70,68.56 785.98,67.75 788.27,66.94 790.56,66.12 792.86,65.31 795.15,64.49 797.45,63.68 799.75,62.86 802.05,62.05 804.35,61.23 806.65,60.42 808.96,59.60 811.27,58.78 813.58,57.97 815.89,57.15 818.20,56.34 820.52,55.52 822.83,54.71 825.15,53.89 827.47,53.08 829.79,52.26 832.11,51.45 834.44,50.63 836.76,49.82 839.09,49.00 841.42,48.19 843.74,47.38 846.07,46.56 848.40,45.75 850.74,44.93 853.07,44.12 855.40,43.30 857.74,42.49 860.07,41.67 862.41,40.86 864.74,40.04 867.08,39.23 869.42,38.41 871.76,37.59 874.10,36.78 876.44,35.96 878.78,35.15 881.12,34.33 883.46,33.52 885.80,32.70 888.14,31.89 890.49,31.07 892.83,30.26 895.17,29.44 897.51,28.63 899.86,27.81 902.20,27.00"/><polyline stroke-dashoffset="1.04" points="902.20,613.80 899.64,612.98 897.09,612.17 894.53,611.36 891.98,610.54 889.42,609.72 886.87,608.91 884.31,608.10 881.76,607.28 879.20,606.46 876.65,605.65 874.10,604.84 871.54,604.02 868.99,603.20 866.44,602.39 863.89,601.57 861.34,600.76 858.79,599.94 856.24,599.13 853.69,598.31 851.15,597.50 848.60,596.68 846.06,595.87 843.51,595.05 840.97,594.24 838.43,593.42 835.89,592.61 833.35,591.79 830.81,590.98 828.28,590.16 825.74,589.35 823.21,588.53 820.68,587.72 818.15,586.90 815.62,586.09 813.09,585.27 810.57,584.46 808.04,583.64 805.52,582.83 803.00,582.01 800.48,581.20 797.97,580.38 795.45,579.57 792.94,578.75 790.43,577.94 787.92,577.12 785.42,576.31 782.92,575.49 780.41,574.68 777.92,573.87 775.42,573.05 772.93,572.23 770.43,571.42 767.94,570.61 765.46,569.79 762.97,568.97 760.49,568.16 758.01,567.35 755.54,566.53 753.07,565.71 750.60,564.90 748.13,564.08 745.66,563.27 743.20,562.45 740.74,561.64 738.29,560.82 735.84,560.01 733.39,559.19 730.94,558.38 728.50,557.56 726.06,556.75 723.62,555.93 721.19,555.12 718.76,554.30 716.34,553.49 713.91,552.67 711.50,551.86 709.08,551.04 706.67,550.23 704.26,549.41 701.86,548.60 699.46,547.78 697.06,546.97 694.67,546.15 692.28,545.34 689.90,544.52 687.52,543.71 685.14,542.89 682.77,542.08 680.40,541.26 678.04,540.45 675.68,539.63 673.33,538.82 670.98,538.00 668.63,537.19 666.29,536.38 663.95,535.56 661.62,534.75 659.29,533.93 656.97,533.12 654.65,532.30 652.33,531.48 650.03,530.67 647.72,529.86 645.42,529.04 643.13,528.22 640.84,527.41 638.55,526.60 636.27,525.78 634.00,524.96 631.73,524.15 629.46,523.33 627.20,522.52 624.95,521.70 622.70,520.89 620.46,520.07 618.22,519.26 615.99,518.44 613.76,517.63 611.54,516.81 609.32,516.00 607.11,515.18 604.91,514.37 602.71,513.55 600.51,512.74 598.33,511.92 596.14,511.11 593.97,510.29 591.80,509.48 589.63,508.66 587.47,507.85 585.32,507.03 583.17,506.22 581.03,505.40 578.90,504.59 576.77,503.77 574.65,502.96 572.53,502.14 570.42,501.33 568.32,500.51 566.22,499.70 564.13,498.88 562.05,498.07 559.97,497.25 557.90,496.44 555.84,495.62 553.78,494.81 551.73,494.00 549.68,493.18 547.65,492.36 545.61,491.55 543.59,490.73 541.57,489.92 539.56,489.10 537.56,488.29 535.56,487.47 533.57,486.66 531.59,485.84 529.61,485.03 527.64,484.21 525.68,483.40 523.73,482.58 521.78,481.77 519.84,480.95 517.91,480.14 515.98,479.32 514.07,478.51 512.16,477.69 510.25,476.88 508.36,476.06 506.47,475.25 504.59,474.43 502.72,473.62 500.85,472.80 498.99,471.99 497.14,471.17 495.30,470.36 493.47,469.54 491.64,468.73 489.82,467.91 488.01,467.10 486.20,466.28 484.41,465.47 482.62,464.65 480.84,463.84 479.07,463.02 477.31,462.21 475.55,461.39 473.81,460.58 472.07,459.76 470.34,458.95 468.61,458.13 466.90,457.32 465.19,456.50 463.49,455.69 461.81,454.88 460.12,454.06 458.45,453.25 456.79,452.43 455.13,451.62 453.48,450.80 451.85,449.98 450.22,449.17 448.59,448.35 446.98,447.54 445.38,446.72 443.78,445.91 442.20,445.09 440.62,444.28 439.05,443.46 437.49,442.65 435.94,441.83 434.39,441.02 432.86,440.20 431.34,439.39 429.82,438.57 428.31,437.76 426.82,436.94 425.33,436.13 423.85,435.31 422.38,434.50 420.92,433.68 419.46,432.87 418.02,432.05 416.59,431.24 415.16,430.42 413.75,429.61 412.34,428.79 410.94,427.98 409.56,427.16 408.18,426.35 406.81,425.53 405.45,424.72 404.10,423.90 402.76,423.09 401.43,422.27 400.11,421.46 398.80,420.64 397.50,419.83 396.20,419.01 394.92,418.20 393.65,417.38 392.38,416.57 391.13,415.75 389.89,414.94 388.65,414.12 387.43,413.31 386.21,412.50 385.01,411.68 383.81,410.86 382.63,410.05 381.45,409.23 380.29,408.42 379.13,407.60 377.99,406.79 376.85,405.97 375.73,405.16 374.61,404.34 373.51,403.53 372.41,402.71 371.32,401.90 370.25,401.08 369.18,400.27 368.13,399.45 367.09,398.64 366.05,397.82 365.03,397.01 364.01,396.19 363.01,395.38 362.02,394.56 361.03,393.75 360.06,392.93 359.10,392.12 358.14,391.30 357.20,390.49 356.27,389.67 355.35,388.86 354.44,388.04 353.54,387.23 352.65,386.41 351.77,385.60 350.90,384.78 350.04,383.97 349.19,383.15 348.36,382.34 347.53,381.52 346.71,380.71 345.91,379.89 345.11,379.08 344.33,378.26 343.55,377.45 342.79,376.63 342.04,375.82 341.30,375.00 340.57,374.19 339.85,373.38 339.14,372.56 338.44,371.75 337.75,370.93 337.07,370.11 336.40,369.30 335.75,368.48 335.10,367.67 334.47,366.85 333.84,366.04 333.23,365.22 332.63,364.41 332.04,363.59 331.46,362.78 330.89,361.96 330.33,361.15 329.78,360.33 329.24,359.52 328.72,358.70 328.20,357.89 327.70,357.07 327.21,356.26 326.72,355.44 326.25,354.63 325.79,353.81 325.34,353.00 324.90,352.18 324.48,351.37 324.06,350.55 323.66,349.74 323.26,348.92 322.88,348.11 322.51,347.29 322.14,346.48 321.79,345.66 321.46,344.85 321.13,344.03 320.81,343.22 320.50,342.40 320.21,341.59 319.93,340.77 319.65,339.96 319.39,339.14 319.14,338.33 318.90,337.51 318.67,336.70 318.46,335.88 318.25,335.07 318.05,334.25 317.87,333.44 317.70,332.62 317.54,331.81 317.39,331.00 317.25,330.18 317.12,329.36 317.00,328.55 316.90,327.73 316.80,326.92 316.72,326.10 316.64,325.29 316.58,324.47 316.53,323.66 316.49,322.84 316.47,322.03 316.45,321.21 316.44,320.40 316.45,319.58 316.47,318.77 316.49,317.95 316.53,317.14 316.58,316.32 316.64,315.51 316.72,314.69 316.80,313.88 316.90,313.06 317.00,312.25 317.12,311.44 317.25,310.62 317.39,309.80 317.54,308.99 317.70,308.17 317.87,307.36 318.05,306.54 318.25,305.73 318.46,304.91 318.67,304.10 318.90,303.28 319.14,302.47 319.39,301.65 319.65,300.84 319.93,300.02 320.21,299.21 320.50,298.39 320.81,297.58 321.13,296.76 321.46,295.95 321.79,295.13 322.14,294.32 322.51,293.50 322.88,292.69 323.26,291.88 323.66,291.06 324.06,290.25 324.48,289.43 324.90,288.62 325.34,287.80 325.79,286.98 326.25,286.17 326.72,285.35 327.21,284.54 327.70,283.72 328.20,282.91 328.72,282.09 329.24,281.28 329.78,280.46 330.33,279.65 330.89,278.83 331.46,278.02 332.04,277.20 332.63,276.39 333.23,275.57 333.84,274.76 334.47,273.94 335.10,273.13 335.75,272.31 336.40,271.50 337.07,270.69 337.75,269.87 338.44,269.05 339.14,268.24 339.85,267.42 340.57,266.61 341.30,265.79 342.04,264.98 342.79,264.16 343.55,263.35 344.33,262.53 345.11,261.72 345.91,260.90 346.71,260.09 347.53,259.27 348.36,258.46 349.19,257.64 350.04,256.83 350.90,256.01 351.77,255.20 352.65,254.38 353.54,253.57 354.44,252.75 355.35,251.94 356.27,251.12 357.20,250.31 358.14,249.49 359.10,248.68 360.06,247.86 361.03,247.05 362.02,246.23 363.01,245.42 364.01,244.60 365.03,243.79 366.05,242.97 367.09,242.16 368.13,241.34 369.18,240.53 370.25,239.71 371.32,238.90 372.41,238.08 373.51,237.27 374.61,236.45 375.73,235.64 376.85,234.82 377.99,234.01 379.13,233.19 380.29,232.38 381.45,231.56 382.63,230.75 383.81,229.94 385.01,229.12 386.21,228.30 387.43,227.49 388.65,226.67 389.89,225.86 391.13,225.04 392.38,224.23 393.65,223.41 394.92,222.60 396.20,221.78 397.50,220.97 398.80,220.15 400.11,219.34 401.43,218.52 402.76,217.71 404.10,216.89 405.45,216.08 406.81,215.26 408.18,214.45 409.56,213.63 410.94,212.82 412.34,212.00 413.75,211.19 415.16,210.38 416.59,209.56 418.02,208.75 419.46,207.93 420.92,207.11 422.38,206.30 423.85,205.48 425.33,204.67 426.82,203.85 428.31,203.04 429.82,202.22 431.34,201.41 432.86,200.59 434.39,199.78 435.94,198.96 437.49,198.15 439.05,197.33 440.62,196.52 442.20,195.70 443.78,194.89 445.38,194.07 446.98,193.26 448.59,192.44 450.22,191.63 451.85,190.81 453.48,190.00 455.13,189.18 456.79,188.37 458.45,187.55 460.12,186.74 461.81,185.92 463.49,185.11 465.19,184.29 466.90,183.48 468.61,182.66 470.34,181.85 472.07,181.03 473.81,180.22 475.55,179.40 477.31,178.59 479.07,177.77 480.84,176.96 482.62,176.14 484.41,175.33 486.20,174.51 488.01,173.70 489.82,172.88 491.64,172.07 493.47,171.25 495.30,170.44 497.14,169.62 498.99,168.81 500.85,167.99 502.72,167.18 504.59,166.36 506.47,165.55 508.36,164.73 510.25,163.92 512.16,163.10 514.07,162.29 515.98,161.47 517.91,160.66 519.84,159.84 521.78,159.03 523.73,158.21 525.68,157.40 527.64,156.58 529.61,155.77 531.59,154.95 533.57,154.14 535.56,153.32 537.56,152.51 539.56,151.69 541.57,150.88 543.59,150.06 545.61,149.25 547.65,148.44 549.68,147.62 551.73,146.80 553.78,145.99 555.84,145.17 557.90,144.36 559.97,143.54 562.05,142.73 564.13,141.91 566.22,141.10 568.32,140.28 570.42,139.47 572.53,138.66 574.65,137.84 576.77,137.02 578.90,136.21 581.03,135.39 583.17,134.58 585.32,133.76 587.47,132.95 589.63,132.13 591.80,131.32 593.97,130.50 596.14,129.69 598.33,128.88 600.51,128.06 602.71,127.24 604.91,126.43 607.11,125.61 609.32,124.80 611.54,123.98 613.76,123.17 615.99,122.35 618.22,121.54 620.46,120.72 622.70,119.91 624.95,119.09 627.20,118.28 629.46,117.47 631.73,116.65 634.00,115.83 636.27,115.02 638.55,114.20 640.84,113.39 643.13,112.57 645.42,111.76 647.72,110.94 650.03,110.13 652.33,109.31 654.65,108.50 656.97,107.69 659.29,106.87 661.62,106.05 663.95,105.24 666.29,104.42 668.63,103.61 670.98,102.79 673.33,101.98 675.68,101.16 678.04,100.35 680.40,99.53 682.77,98.72 685.14,97.91 687.52,97.09 689.90,96.28 692.28,95.46 694.67,94.64 697.06,93.83 699.46,93.01 701.86,92.20 704.26,91.38 706.67,90.57 709.08,89.75 711.50,88.94 713.91,88.12 716.34,87.31 718.76,86.50 721.19,85.68 723.62,84.86 726.06,84.05 728.50,83.23 730.94,82.42 733.39,81.60 735.84,80.79 738.29,79.97 740.74,79.16 743.20,78.34 745.66,77.53 748.13,76.72 750.60,75.90 753.07,75.08 755.54,74.27 758.01,73.45 760.49,72.64 762.97,71.82 765.46,71.01 767.94,70.19 770.43,69.38 772.93,68.56 775.42,67.75 777.92,66.94 780.41,66.12 782.92,65.31 785.42,64.49 787.92,63.68 790.43,62.86 792.94,62.05 795.45,61.23 797.97,60.42 800.48,59.60 803.00,58.78 805.52,57.97 808.04,57.15 810.57,56.34 813.09,55.52 815.62,54.71 818.15,53.89 820.68,53.08 823.21,52.26 825.74,51.45 828.28,50.63 830.81,49.82 833.35,49.00 835.89,48.19 838.43,47.38 840.97,46.56 843.51,45.75 846.06,44.93 848.60,44.12 851.15,43.30 853.69,42.49 856.24,41.67 858.79,40.86 861.34,40.04 863.89,39.23 866.44,38.41 868.99,37.59 871.54,36.78 874.10,35.96 876.65,35.15 879.20,34.33 881.76,33.52 884.31,32.70 886.87,31.89 889.42,31.07 891.98,30.26 894.53,29.44 897.09,28.63 899.64,27.81 902.20,27.00"/><path d="M902.20 564.90L750.60 564.90M1053.80 564.90L902.20 564.90"/><path d="M902.20 516.00L609.32 516.00M1195.08 516.00L902.20 516.00"/><path d="M902.20 467.10L488.01 467.10M1316.39 467.10L902.20 467.10"/><path d="M902.20 418.20L394.92 418.20M1409.48 418.20L902.20 418.20"/><path d="M902.20 369.30L336.40 369.30M1468.00 369.30L902.20 369.30"/><path d="M902.20 320.40L316.44 320.40M1487.96 320.40L902.20 320.40"/><path d="M902.20 271.50L336.40 271.50M1468.00 271.50L902.20 271.50"/><path d="M902.20 222.60L394.92 222.60M1409.48 222.60L902.20 222.60"/><path d="M902.20 173.70L488.01 173.70M1316.39 173.70L902.20 173.70"/><path d="M902.20 124.80L609.32 124.80M1195.08 124.80L902.20 124.80"/><path d="M902.20 75.90L750.60 75.90M1053.80 75.90L902.20 75.90"/></g><g font-family="Liberation Sans, sans-serif" font-size="10.5" fill="#8a8a8a" letter-spacing="0.5"><text x="1488.3" y="329.8" text-anchor="middle">+180<tspan font-size="7" dx="2.4" dy="-2.2">°</tspan></text><text x="1390.6" y="329.8" text-anchor="middle">+210<tspan font-size="7" dx="2.4" dy="-2.2">°</tspan></text><text x="1293.0" y="329.8" text-anchor="middle">+240<tspan font-size="7" dx="2.4" dy="-2.2">°</tspan></text><text x="1195.4" y="329.8" text-anchor="middle">+270<tspan font-size="7" dx="2.4" dy="-2.2">°</tspan></text><text x="1097.8" y="329.8" text-anchor="middle">+300<tspan font-size="7" dx="2.4" dy="-2.2">°</tspan></text><text x="1000.1" y="329.8" text-anchor="middle">+330<tspan font-size="7" dx="2.4" dy="-2.2">°</tspan></text><text x="902.5" y="329.8" text-anchor="middle">+0<tspan font-size="7" dx="2.4" dy="-2.2">°</tspan></text><text x="804.9" y="329.8" text-anchor="middle">+30<tspan font-size="7" dx="2.4" dy="-2.2">°</tspan></text><text x="707.2" y="329.8" text-anchor="middle">+60<tspan font-size="7" dx="2.4" dy="-2.2">°</tspan></text><text x="609.6" y="329.8" text-anchor="middle">+90<tspan font-size="7" dx="2.4" dy="-2.2">°</tspan></text><text x="512.0" y="329.8" text-anchor="middle">+120<tspan font-size="7" dx="2.4" dy="-2.2">°</tspan></text><text x="414.4" y="329.8" text-anchor="middle">+150<tspan font-size="7" dx="2.4" dy="-2.2">°</tspan></text><text x="316.7" y="329.8" text-anchor="middle">+180<tspan font-size="7" dx="2.4" dy="-2.2">°</tspan></text><text x="902.5" y="220.6" text-anchor="middle">+30<tspan font-size="7" dx="2.4" dy="-2.2">°</tspan></text><text x="902.5" y="122.8" text-anchor="middle">+60<tspan font-size="7" dx="2.4" dy="-2.2">°</tspan></text><text x="902.5" y="25.0" text-anchor="middle">+90<tspan font-size="7" dx="2.4" dy="-2.2">°</tspan></text><text x="902.5" y="428.3" text-anchor="middle">−30<tspan font-size="7" dx="2.4" dy="-2.2">°</tspan></text><text x="902.5" y="526.1" text-anchor="middle">−60<tspan font-size="7" dx="2.4" dy="-2.2">°</tspan></text><text x="902.5" y="623.9" text-anchor="middle">−90<tspan font-size="7" dx="2.4" dy="-2.2">°</tspan></text></g><g font-family="Liberation Mono, monospace" font-size="13.97" fill="#fff"><text x="315.5" y="29.7" xml:space="preserve">ES000D</text><text x="315.5" y="42.8" xml:space="preserve">Beg: 20251010 22:32:53 (sol = 197.52°)</text><text x="315.5" y="55.8" xml:space="preserve">End: 20251010 23:41:01 (sol = 197.56°)</text><text x="315.5" y="68.9" xml:space="preserve">--------------------------------------</text><text x="315.5" y="81.9" xml:space="preserve">...: 6</text><text x="315.5" y="95.0" xml:space="preserve">STA: 2</text></g><g font-family="Liberation Sans, sans-serif" font-size="31" fill="#525252"><text transform="translate(149.6,642.3) rotate(-90) scale(0.858,1)" text-anchor="end">APR</text><text transform="translate(294.6,643.4) rotate(-90) scale(0.913,1)" text-anchor="end">MAY</text><text transform="translate(436.6,640.6) rotate(-90) scale(0.835,1)" text-anchor="end">JUN</text><text transform="translate(577.0,641.5) rotate(-90) scale(0.791,1)" text-anchor="end">JUL</text><text transform="translate(723.8,642.5) rotate(-90) scale(0.871,1)" text-anchor="end">AUG</text><text transform="translate(872.5,643.5) rotate(-90) scale(0.821,1)" text-anchor="end">SEP</text><text transform="translate(1016.8,643.1) rotate(-90) scale(0.881,1)" text-anchor="end">OCT</text><text transform="translate(1169.8,644.5) rotate(-90) scale(0.903,1)" text-anchor="end">NOV</text><text transform="translate(1318.5,643.5) rotate(-90) scale(0.891,1)" text-anchor="end">DEC</text><text transform="translate(1469.5,640.5) rotate(-90) scale(0.829,1)" text-anchor="end">JAN</text><text transform="translate(1628.6,645.5) rotate(-90) scale(0.854,1)" text-anchor="end">FEB</text><text transform="translate(1766.6,643.5) rotate(-90) scale(0.911,1)" text-anchor="end">MAR</text></g><line x1="988.5" y1="842" x2="988.5" y2="642" stroke="#f00" stroke-width="1.8" stroke-dasharray="5.14 2.22"/><g><rect x="106.0" y="832.0" width="23.0" height="4" fill="#c2df23"/><rect x="164.9" y="832.0" width="180.2" height="4" fill="#c2df23"/><rect x="366.0" y="832.0" width="258.9" height="4" fill="#c2df23"/><rect x="635.1" y="832.0" width="150.9" height="4" fill="#c2df23"/><rect x="807.1" y="832.0" width="91.8" height="4" fill="#c2df23"/><rect x="920.0" y="832.0" width="52.9" height="4" fill="#c2df23"/><rect x="984.0" y="832.0" width="81.8" height="4" fill="#c2df23"/><rect x="1082.0" y="832.0" width="120.9" height="4" fill="#c2df23"/><rect x="1244.0" y="832.0" width="82.0" height="4" fill="#c2df23"/><rect x="1337.1" y="832.0" width="17.8" height="4" fill="#c2df23"/><rect x="1381.1" y="832.0" width="62.9" height="4" fill="#c2df23"/><rect x="1458.9" y="832.0" width="53.1" height="4" fill="#c2df23"/><rect x="1522.9" y="832.0" width="24.2" height="4" fill="#c2df23"/><rect x="1724.1" y="832.0" width="23.7" height="4" fill="#c2df23"/><rect x="1758.0" y="832.0" width="24.0" height="4" fill="#c2df23"/><rect x="164.9" y="815.7" width="23.1" height="4" fill="#86d549"/><rect x="222.9" y="815.7" width="63.1" height="4" fill="#86d549"/><rect x="312.0" y="815.7" width="28.0" height="4" fill="#86d549"/><rect x="366.0" y="815.7" width="126.0" height="4" fill="#86d549"/><rect x="508.0" y="815.7" width="146.0" height="4" fill="#86d549"/><rect x="704.0" y="815.7" width="32.9" height="4" fill="#86d549"/><rect x="773.1" y="815.7" width="72.0" height="4" fill="#86d549"/><rect x="871.1" y="815.7" width="117.3" height="4" fill="#86d549"/><rect x="1002.9" y="815.7" width="14.0" height="4" fill="#86d549"/><rect x="1062.0" y="815.7" width="150.9" height="4" fill="#86d549"/><rect x="1244.0" y="815.7" width="22.9" height="4" fill="#86d549"/><rect x="1292.9" y="815.7" width="23.1" height="4" fill="#86d549"/><rect x="1342.0" y="815.7" width="22.9" height="4" fill="#86d549"/><rect x="1386.0" y="815.7" width="42.9" height="4" fill="#86d549"/><rect x="1458.9" y="815.7" width="24.0" height="4" fill="#86d549"/><rect x="1548.0" y="815.7" width="23.1" height="4" fill="#86d549"/><rect x="165.0" y="799.3" width="23.0" height="4" fill="#52c569"/><rect x="258.0" y="799.3" width="228.9" height="4" fill="#52c569"/><rect x="508.0" y="799.3" width="106.9" height="4" fill="#52c569"/><rect x="626.0" y="799.3" width="92.0" height="4" fill="#52c569"/><rect x="728.9" y="799.3" width="97.1" height="4" fill="#52c569"/><rect x="949.1" y="799.3" width="199.8" height="4" fill="#52c569"/><rect x="1160.0" y="799.3" width="87.8" height="4" fill="#52c569"/><rect x="1258.0" y="799.3" width="186.0" height="4" fill="#52c569"/><rect x="1458.9" y="799.3" width="24.0" height="4" fill="#52c569"/><rect x="1552.2" y="799.3" width="23.7" height="4" fill="#52c569"/><rect x="194.0" y="783.0" width="24.0" height="4" fill="#2ab07f"/><rect x="321.0" y="783.0" width="186.0" height="4" fill="#2ab07f"/><rect x="518.0" y="783.0" width="22.9" height="4" fill="#2ab07f"/><rect x="557.1" y="783.0" width="125.8" height="4" fill="#2ab07f"/><rect x="807.1" y="783.0" width="23.8" height="4" fill="#2ab07f"/><rect x="954.0" y="783.0" width="18.9" height="4" fill="#2ab07f"/><rect x="988.0" y="783.0" width="136.9" height="4" fill="#2ab07f"/><rect x="1154.9" y="783.0" width="63.1" height="4" fill="#2ab07f"/><rect x="1244.0" y="783.0" width="22.9" height="4" fill="#2ab07f"/><rect x="1316.9" y="783.0" width="24.0" height="4" fill="#2ab07f"/><rect x="1396.0" y="783.0" width="22.9" height="4" fill="#2ab07f"/><rect x="1463.8" y="783.0" width="186.2" height="4" fill="#2ab07f"/><rect x="340.9" y="766.7" width="29.1" height="4" fill="#1e9b8a"/><rect x="410.0" y="766.7" width="38.0" height="4" fill="#1e9b8a"/><rect x="468.9" y="766.7" width="23.1" height="4" fill="#1e9b8a"/><rect x="526.9" y="766.7" width="19.1" height="4" fill="#1e9b8a"/><rect x="562.0" y="766.7" width="28.0" height="4" fill="#1e9b8a"/><rect x="616.0" y="766.7" width="33.0" height="4" fill="#1e9b8a"/><rect x="958.9" y="766.7" width="29.1" height="4" fill="#1e9b8a"/><rect x="1062.0" y="766.7" width="23.8" height="4" fill="#1e9b8a"/><rect x="1101.1" y="766.7" width="23.8" height="4" fill="#1e9b8a"/><rect x="1160.0" y="766.7" width="34.0" height="4" fill="#1e9b8a"/><rect x="1248.0" y="766.7" width="24.0" height="4" fill="#1e9b8a"/><rect x="1425.1" y="766.7" width="86.9" height="4" fill="#1e9b8a"/><rect x="420.0" y="750.4" width="22.9" height="4" fill="#25858e"/><rect x="532.0" y="750.4" width="24.0" height="4" fill="#25858e"/><rect x="566.9" y="750.4" width="23.1" height="4" fill="#25858e"/><rect x="621.1" y="750.4" width="120.9" height="4" fill="#25858e"/><rect x="968.9" y="750.4" width="166.0" height="4" fill="#25858e"/><rect x="1185.1" y="750.4" width="160.9" height="4" fill="#25858e"/><rect x="1468.9" y="750.4" width="24.0" height="4" fill="#25858e"/><rect x="428.9" y="734.0" width="24.0" height="4" fill="#2d708e"/><rect x="576.0" y="734.0" width="156.9" height="4" fill="#2d708e"/><rect x="992.9" y="734.0" width="112.0" height="4" fill="#2d708e"/><rect x="1116.0" y="734.0" width="106.9" height="4" fill="#2d708e"/><rect x="1263.0" y="734.0" width="29.0" height="4" fill="#2d708e"/><rect x="1488.9" y="734.0" width="23.1" height="4" fill="#2d708e"/><rect x="590.9" y="717.7" width="24.0" height="4" fill="#38588c"/><rect x="654.9" y="717.7" width="117.1" height="4" fill="#38588c"/><rect x="1072.0" y="717.7" width="170.9" height="4" fill="#38588c"/><rect x="1263.0" y="717.7" width="24.0" height="4" fill="#38588c"/><rect x="596.0" y="701.4" width="136.9" height="4" fill="#433e85"/><rect x="1090.9" y="701.4" width="29.1" height="4" fill="#433e85"/><rect x="1199.1" y="701.4" width="23.8" height="4" fill="#433e85"/><rect x="1273.1" y="701.4" width="52.9" height="4" fill="#433e85"/><rect x="1111.1" y="685.0" width="23.8" height="4" fill="#482173"/></g><g stroke="#fff" stroke-opacity="0.32" stroke-width="2.08" stroke-dasharray="2.08 3.44"><line x1="74.0" y1="842" x2="74.0" y2="642"/><line x1="218.8" y1="842" x2="218.8" y2="642"/><line x1="364.9" y1="842" x2="364.9" y2="642"/><line x1="504.9" y1="842" x2="504.9" y2="642"/><line x1="650.0" y1="842" x2="650.0" y2="642"/><line x1="796.9" y1="842" x2="796.9" y2="642"/><line x1="940.0" y1="842" x2="940.0" y2="642"/><line x1="1090.9" y1="842" x2="1090.9" y2="642"/><line x1="1238.9" y1="842" x2="1238.9" y2="642"/><line x1="1394.0" y1="842" x2="1394.0" y2="642"/><line x1="1547.8" y1="842" x2="1547.8" y2="642"/><line x1="1687.2" y1="842" x2="1687.2" y2="642"/></g><path d="M112.9 834.0h7.6M116.7 830.2v7.6M241.2 834.0h7.6M245.0 830.2v7.6M510.6 834.0h7.6M514.4 830.2v7.6M706.9 834.0h7.6M710.7 830.2v7.6M833.1 834.0h7.6M836.9 830.2v7.6M962.0 834.0h7.6M965.8 830.2v7.6M985.5 834.0h7.6M989.3 830.2v7.6M1116.2 834.0h7.6M1120.0 830.2v7.6M1295.3 834.0h7.6M1299.1 830.2v7.6M1341.8 834.0h7.6M1345.6 830.2v7.6M1413.1 834.0h7.6M1416.9 830.2v7.6M1482.0 834.0h7.6M1485.8 830.2v7.6M1530.9 834.0h7.6M1534.7 830.2v7.6M1732.3 834.0h7.6M1736.1 830.2v7.6M1766.2 834.0h7.6M1770.0 830.2v7.6M172.0 817.7h7.6M175.8 813.9v7.6M255.8 817.7h7.6M259.6 813.9v7.6M322.9 817.7h7.6M326.7 813.9v7.6M436.9 817.7h7.6M440.7 813.9v7.6M598.9 817.7h7.6M602.7 813.9v7.6M716.6 817.7h7.6M720.4 813.9v7.6M792.9 817.7h7.6M796.7 813.9v7.6M939.1 817.7h7.6M942.9 813.9v7.6M1006.0 817.7h7.6M1009.8 813.9v7.6M1153.1 817.7h7.6M1156.9 813.9v7.6M1250.9 817.7h7.6M1254.7 813.9v7.6M1300.0 817.7h7.6M1303.8 813.9v7.6M1348.6 817.7h7.6M1352.4 813.9v7.6M1403.1 817.7h7.6M1406.9 813.9v7.6M1466.9 817.7h7.6M1470.7 813.9v7.6M1555.3 817.7h7.6M1559.1 813.9v7.6M174.0 801.3h7.6M177.8 797.5v7.6M378.0 801.3h7.6M381.8 797.5v7.6M545.1 801.3h7.6M548.9 797.5v7.6M682.0 801.3h7.6M685.8 797.5v7.6M740.9 801.3h7.6M744.7 797.5v7.6M1075.1 801.3h7.6M1078.9 797.5v7.6M1216.9 801.3h7.6M1220.7 797.5v7.6M1304.9 801.3h7.6M1308.7 797.5v7.6M1466.9 801.3h7.6M1470.7 797.5v7.6M1559.8 801.3h7.6M1563.6 797.5v7.6M202.0 785.0h7.6M205.8 781.2v7.6M400.0 785.0h7.6M403.8 781.2v7.6M524.9 785.0h7.6M528.7 781.2v7.6M638.9 785.0h7.6M642.7 781.2v7.6M815.1 785.0h7.6M818.9 781.2v7.6M959.1 785.0h7.6M962.9 781.2v7.6M1040.0 785.0h7.6M1043.8 781.2v7.6M1187.8 785.0h7.6M1191.6 781.2v7.6M1250.9 785.0h7.6M1254.7 781.2v7.6M1325.1 785.0h7.6M1328.9 781.2v7.6M1403.1 785.0h7.6M1406.9 781.2v7.6M1546.0 785.0h7.6M1549.8 781.2v7.6M356.0 768.7h7.6M359.8 764.9v7.6M425.8 768.7h7.6M429.6 764.9v7.6M476.0 768.7h7.6M479.8 764.9v7.6M534.8 768.7h7.6M538.6 764.9v7.6M571.1 768.7h7.6M574.9 764.9v7.6M630.9 768.7h7.6M634.7 764.9v7.6M974.0 768.7h7.6M977.8 764.9v7.6M1070.0 768.7h7.6M1073.8 764.9v7.6M1109.1 768.7h7.6M1112.9 764.9v7.6M1178.0 768.7h7.6M1181.8 764.9v7.6M1255.9 768.7h7.6M1259.7 764.9v7.6M1466.9 768.7h7.6M1470.7 764.9v7.6M426.9 752.4h7.6M430.7 748.6v7.6M540.0 752.4h7.6M543.8 748.6v7.6M573.8 752.4h7.6M577.6 748.6v7.6M704.0 752.4h7.6M707.8 748.6v7.6M1094.0 752.4h7.6M1097.8 748.6v7.6M1271.0 752.4h7.6M1274.8 748.6v7.6M1477.1 752.4h7.6M1480.9 748.6v7.6M436.9 736.0h7.6M440.7 732.2v7.6M630.9 736.0h7.6M634.7 732.2v7.6M1039.0 736.0h7.6M1042.8 732.2v7.6M1168.0 736.0h7.6M1171.8 732.2v7.6M1275.0 736.0h7.6M1278.8 732.2v7.6M1497.1 736.0h7.6M1500.9 732.2v7.6M598.6 719.7h7.6M602.4 715.9v7.6M727.1 719.7h7.6M730.9 715.9v7.6M1187.8 719.7h7.6M1191.6 715.9v7.6M1271.0 719.7h7.6M1274.8 715.9v7.6M686.6 703.4h7.6M690.4 699.6v7.6M1102.0 703.4h7.6M1105.8 699.6v7.6M1206.9 703.4h7.6M1210.7 699.6v7.6M1300.0 703.4h7.6M1303.8 699.6v7.6M1119.1 687.0h7.6M1122.9 683.2v7.6" stroke="#fff" stroke-width="2" fill="none"/><g font-family="Liberation Sans, sans-serif" font-size="10.8" fill="#fff" text-anchor="middle"><text x="117.5" y="831.6">KSE</text><text x="255.0" y="831.6">ETA</text><text x="494.4" y="831.6">NZC</text><text x="710.5" y="831.6">NDA</text><text x="853.0" y="831.6">SPE</text><text x="945.3" y="831.6">ARD</text><text x="1024.9" y="831.6">EGE</text><text x="1142.5" y="831.6">NTA</text><text x="1285.0" y="831.6">MON</text><text x="1343.6" y="831.6">URS</text><text x="1412.5" y="831.6">AHY</text><text x="1485.5" y="831.6">GUM</text><text x="1535.0" y="831.6">QHY</text><text x="1735.9" y="831.6">XHE</text><text x="1770.0" y="831.6">EVI</text><text x="176.4" y="815.3">AVB</text><text x="254.4" y="815.3">ELY</text><text x="323.9" y="815.3">CAM</text><text x="431.8" y="815.3">SSG</text><text x="578.7" y="815.3">PCA</text><text x="720.5" y="815.3">AUD</text><text x="809.1" y="815.3">AUR</text><text x="931.1" y="815.3">DSX</text><text x="1009.9" y="815.3">OCU</text><text x="1137.5" y="815.3">OER</text><text x="1255.5" y="815.3">DKD</text><text x="1304.5" y="815.3">DSV</text><text x="1353.5" y="815.3">ALY</text><text x="1407.5" y="815.3">JLE</text><text x="1471.9" y="815.3">SCC</text><text x="1559.5" y="815.3">FEV</text><text x="176.5" y="798.9">LYR</text><text x="372.4" y="798.9">JMC</text><text x="559.1" y="798.9">JPE</text><text x="672.0" y="798.9">PAU</text><text x="774.2" y="798.9">NIA</text><text x="1049.0" y="798.9">STA</text><text x="1205.3" y="798.9">NOO</text><text x="1353.3" y="798.9">COM</text><text x="1470.9" y="798.9">NCC</text><text x="1564.1" y="798.9">FED</text><text x="206.0" y="782.6">HVI</text><text x="411.9" y="782.6">ARI</text><text x="529.5" y="782.6">SZC</text><text x="617.7" y="782.6">CAP</text><text x="819.0" y="782.6">NUE</text><text x="961.4" y="782.6">OCT</text><text x="1059.3" y="782.6">ORI</text><text x="1186.5" y="782.6">AMO</text><text x="1255.5" y="782.6">DPC</text><text x="1328.9" y="782.6">XVI</text><text x="1407.5" y="782.6">QUA</text><text x="1559.6" y="782.6">AAN</text><text x="352.5" y="766.3">TAH</text><text x="431.4" y="766.3">JEA</text><text x="480.4" y="766.3">JIP</text><text x="538.8" y="766.3">PPS</text><text x="578.7" y="766.3">ZCS</text><text x="632.5" y="766.3">GDR</text><text x="970.3" y="766.3">DRA</text><text x="1073.9" y="766.3">LUM</text><text x="1113.0" y="766.3">RPU</text><text x="1177.0" y="766.3">THA</text><text x="1260.0" y="766.3">PSU</text><text x="1470.7" y="766.3">XCB</text><text x="431.4" y="750.0">JRC</text><text x="544.0" y="750.0">CAN</text><text x="578.5" y="750.0">FAN</text><text x="681.5" y="750.0">PER</text><text x="1049.2" y="750.0">CTA</text><text x="1264.4" y="750.0">HYD</text><text x="1480.9" y="750.0">XUM</text><text x="440.9" y="733.6">COR</text><text x="657.3" y="733.6">SDA</text><text x="1048.9" y="733.6">LMI</text><text x="1166.4" y="733.6">LEO</text><text x="1274.7" y="733.6">EHY</text><text x="1499.4" y="733.6">ECV</text><text x="602.9" y="717.3">JXA</text><text x="714.8" y="717.3">KCG</text><text x="1157.5" y="717.3">AND</text><text x="1275.0" y="717.3">DAD</text><text x="666.6" y="701.0">ERI</text><text x="1108.4" y="701.0">SLD</text><text x="1211.0" y="701.0">ORS</text><text x="1299.5" y="701.0">GEM</text><text x="1123.0" y="684.6">KUM</text></g><rect x="19.5" y="641.5" width="1766" height="201" fill="none" stroke="#fff" stroke-width="1.1"/><path d="M19.6 842.5v4.9M264.9 842.5v4.9M510.2 842.5v4.9M755.5 842.5v4.9M1000.8 842.5v4.9M1246.1 842.5v4.9M1491.4 842.5v4.9M1736.7 842.5v4.9" stroke="#fff" stroke-width="1.1"/><g font-family="Liberation Sans, sans-serif" font-size="13.5" fill="#fff" text-anchor="middle"><g letter-spacing="0.9"><text x="20.1" y="861.8">0</text><text x="265.3" y="861.8">50</text><text x="510.6" y="861.8">100</text><text x="756.0" y="861.8">150</text><text x="1001.2" y="861.8">200</text><text x="1246.5" y="861.8">250</text><text x="1491.8" y="861.8">300</text><text x="1737.1" y="861.8">350</text></g><text x="902.1" y="881.7" font-size="14.6" textLength="145" lengthAdjust="spacingAndGlyphs">Solar longitude (deg)</text></g><circle cx="797.7" cy="289.3" r="24.2" fill="none" stroke="#50c66c" stroke-width="2.1"/><path d="M1078.38 220.63L1077.55 219.96L1076.71 219.30L1075.87 218.63L1075.02 217.96L1074.18 217.30L1073.33 216.63L1072.48 215.97L1071.63 215.30L1070.78 214.64L1069.93 213.98L1069.07 213.32L1068.22 212.66L1067.36 212.00L1066.50 211.34L1065.64 210.68L1064.77 210.02L1063.91 209.37L1063.04 208.71L1062.18 208.06L1061.31 207.40L1060.44 206.75L1059.57 206.10L1058.69 205.45L1057.82 204.80L1056.94 204.15L1056.07 203.50L1055.19 202.85L1054.31 202.21L1053.43 201.56L1052.54 200.92L1051.66 200.27L1050.78 199.63L1049.89 198.99L1049.00 198.35L1048.12 197.71L1047.23 197.07L1046.34 196.43L1045.45 195.80L1044.55 195.16L1043.66 194.53L1042.77 193.89L1041.87 193.26L1040.98 192.63L1040.08 192.00L1039.18 191.37L1038.28 190.75L1037.39 190.12L1036.49 189.49L1035.59 188.87L1034.68 188.25L1033.78 187.63L1032.88 187.01L1031.98 186.39L1031.07 185.77L1030.17 185.16L1029.26 184.54L1028.36 183.93L1027.45 183.32L1026.54 182.71L1025.64 182.10L1024.73 181.49L1023.82 180.88L1022.91 180.28L1022.00 179.68L1021.09 179.07L1020.18 178.47L1019.27 177.88L1018.36 177.28L1017.45 176.68L1016.54 176.09L1015.63 175.50L1014.72 174.91L1013.81 174.32L1012.90 173.73L1011.99 173.15L1011.08 172.56L1010.17 171.98L1009.25 171.40L1008.34 170.82L1007.43 170.24L1006.52 169.67L1005.61 169.10L1004.70 168.53L1003.79 167.96L1002.88 167.39L1001.97 166.82L1001.06 166.26L1000.15 165.70L999.24 165.14L998.33 164.58L997.42 164.03L996.51 163.48L995.60 162.93L994.70 162.38L993.79 161.83L992.88 161.29L991.97 160.74L991.07 160.20L990.16 159.67L989.26 159.13L988.35 158.60L987.45 158.07L986.55 157.54L985.65 157.02L984.74 156.49L983.84 155.97L982.94 155.45L982.04 154.94L981.14 154.43L980.25 153.92L979.35 153.41L978.45 152.91L977.56 152.40L976.66 151.90L975.77 151.41L974.88 150.91L973.98 150.42L973.09 149.94L972.20 149.45L971.31 148.97L970.43 148.49L969.54 148.02L968.65 147.54L967.77 147.07L966.88 146.61L966.00 146.14L965.12 145.69L964.24 145.23L963.36 144.78L962.48 144.33L961.61 143.88L960.73 143.44L959.85 143.00L958.98 142.56L958.11 142.13L957.24 141.70L956.37 141.28L955.50 140.85L954.63 140.44L953.77 140.02L952.90 139.61L952.04 139.21L951.18 138.80L950.32 138.41L949.46 138.01L948.60 137.62L947.74 137.23L946.89 136.85L946.03 136.47L945.18 136.10L944.33 135.73L943.48 135.37L942.63 135.01L941.78 134.65L940.93 134.30L940.09 133.95L939.24 133.61L938.40 133.27L937.56 132.93L936.72 132.60L935.88 132.28L935.04 131.96L934.21 131.64L933.37 131.33L932.54 131.03L931.70 130.73L930.87 130.43L930.04 130.14L929.21 129.86L928.39 129.58L927.56 129.30L926.73 129.03L925.91 128.77L925.08 128.51L924.26 128.25L923.44 128.00L922.62 127.76L921.80 127.52L920.98 127.29L920.16 127.06L919.35 126.84L918.53 126.62L917.71 126.41L916.90 126.21L916.09 126.01L915.27 125.81L914.46 125.63L913.65 125.44L912.84 125.27L912.03 125.10L911.22 124.93L910.41 124.77L909.60 124.62L908.79 124.47L907.98 124.33L907.17 124.20L906.36 124.07L905.56 123.95L904.75 123.83L903.94 123.72L903.13 123.61L902.33 123.52L901.52 123.42L900.71 123.34L899.91 123.26L899.10 123.18L898.29 123.12L897.48 123.06L896.67 123.00L895.87 122.95L895.06 122.91L894.25 122.87L893.44 122.84L892.63 122.82L891.82 122.80L891.01 122.79L890.19 122.79L889.38 122.79L888.57 122.80L887.75 122.81L886.94 122.83L886.12 122.86L885.30 122.89L884.49 122.93L883.67 122.98L882.85 123.03L882.02 123.09L881.20 123.15L880.38 123.22L879.55 123.30L878.73 123.38L877.90 123.47L877.07 123.57L876.24 123.67L875.41 123.77L874.57 123.89L873.74 124.01L872.90 124.13L872.06 124.27L871.22 124.40L870.38 124.55L869.54 124.70L868.69 124.85L867.84 125.02L866.99 125.18L866.14 125.36L865.29 125.54L864.44 125.72L863.58 125.91L862.72 126.11L861.86 126.31L861.00 126.52L860.13 126.73L859.27 126.95L858.40 127.18L857.53 127.41L856.65 127.64L855.78 127.88L854.90 128.13L854.02 128.38L853.14 128.64L852.25 128.90L851.37 129.17L850.48 129.44L849.59 129.72L848.70 130.00L847.80 130.29L846.90 130.58L846.00 130.88L845.10 131.18L844.20 131.49L843.29 131.80L842.38 132.12L841.47 132.44L840.56 132.77L839.64 133.10L838.73 133.44L837.81 133.78L836.89 134.13L835.96 134.48L835.03 134.83L834.11 135.19L833.18 135.55L832.24 135.92L831.31 136.29L830.37 136.67L829.43 137.05L828.49 137.43L827.55 137.82L826.60 138.21L825.65 138.61L824.70 139.01L823.75 139.41L822.80 139.82L821.84 140.23L820.89 140.65L819.93 141.07L818.96 141.49L818.00 141.92L817.04 142.35L816.07 142.78L815.10 143.22L814.13 143.66L813.16 144.11L812.18 144.55L811.21 145.01L810.23 145.46L809.25 145.92L808.27 146.38L807.29 146.84L806.30 147.31L805.32 147.78L804.33 148.26L803.34 148.73L802.35 149.21L801.36 149.70L800.37 150.18L799.37 150.67L798.38 151.17L797.38 151.66L796.38 152.16L795.38 152.66L794.38 153.16L793.38 153.67L792.38 154.18L791.37 154.69L790.37 155.20L789.36 155.72L788.35 156.24L787.35 156.76L786.34 157.28L785.33 157.81L784.32 158.34L783.30 158.87L782.29 159.40L781.28 159.94L780.26 160.48L779.25 161.02L778.23 161.56L777.22 162.11L776.20 162.66L775.18 163.20L774.17 163.76L773.15 164.31L772.13 164.87L771.11 165.42L770.09 165.99L769.07 166.55L768.05 167.11L767.03 167.68L766.01 168.25L764.99 168.82L763.97 169.39L762.94 169.96L761.92 170.54L760.90 171.11L759.88 171.69L758.86 172.28L757.84 172.86L756.81 173.44L755.79 174.03L754.77 174.62L753.75 175.21L752.73 175.80L751.71 176.39L750.69 176.99L749.67 177.58L748.65 178.18L747.63 178.78L746.61 179.38L745.59 179.98L744.57 180.59L743.55 181.19L742.54 181.80L741.52 182.41L740.50 183.02L739.49 183.63L738.47 184.24L737.46 184.85L736.44 185.47L735.43 186.09L734.42 186.70L733.41 187.32L732.40 187.94L731.39 188.56L730.38 189.19L729.37 189.81L728.37 190.44L727.36 191.06L726.36 191.69L725.35 192.32L724.35 192.95L723.35 193.58L722.35 194.21L721.35 194.85L720.35 195.48L719.36 196.12L718.36 196.76L717.37 197.39L716.38 198.03L715.38 198.67L714.40 199.31L713.41 199.96L712.42 200.60L711.44 201.24L710.45 201.89L709.47 202.53L708.49 203.18L707.51 203.83L706.53 204.48L705.56 205.13L704.58 205.78L703.61 206.43L702.64 207.08L701.67 207.74L700.71 208.39L699.74 209.05L698.78 209.70L697.82 210.36L696.86 211.02L695.90 211.67L694.95 212.33L693.99 212.99L693.04 213.65L692.09 214.32L691.14 214.98L690.20 215.64L689.26 216.31L688.32 216.97L687.38 217.64L686.44 218.30L685.51 218.97L684.58 219.64L683.65 220.30L682.72 220.97L681.80 221.64L680.87 222.31L679.95 222.98L679.04 223.66L678.12 224.33L677.21 225.00L676.30 225.67L675.39 226.35L674.48 227.02L673.58 227.70L672.68 228.37L671.79 229.05L670.89 229.73L670.00 230.40L669.11 231.08L668.22 231.76L667.34 232.44L666.46 233.12L665.58 233.80L664.70 234.48L663.83 235.16L662.96 235.85L662.09 236.53L661.23 237.21L660.37 237.89L659.51 238.58L658.66 239.26L657.80 239.95L656.95 240.63L656.11 241.32L655.27 242.01L654.43 242.69L653.59 243.38L652.75 244.07L651.92 244.76L651.10 245.44L650.27 246.13L649.45 246.82L648.63 247.51L647.82 248.20L647.01 248.89L646.20 249.59L645.39 250.28L644.59 250.97L643.79 251.66L643.00 252.35L642.21 253.05L641.42 253.74L640.63 254.43L639.85 255.13L639.07 255.82L638.30 256.52L637.53 257.21L636.76 257.91L636.00 258.60L635.24 259.30L634.48 260.00L633.73 260.69L632.98 261.39L632.23 262.09L631.49 262.78L630.75 263.48L630.01 264.18L629.28 264.88L628.55 265.58L627.83 266.28L627.11 266.98L626.39 267.68L625.68 268.38L624.97 269.08L624.26 269.78L623.56 270.48L622.86 271.18L622.17 271.88L621.48 272.58L620.79 273.28L620.11 273.99L619.43 274.69L618.76 275.39L618.09 276.09L617.42 276.80L616.76 277.50L616.10 278.20L615.45 278.91L614.80 279.61L614.15 280.31L613.51 281.02L612.87 281.72L612.23 282.43L611.60 283.13L610.98 283.84L610.35 284.54L609.74 285.25L609.12 285.95L608.51 286.66L607.91 287.36L607.30 288.07L606.71 288.77L606.11 289.48L605.52 290.19L604.94 290.89L604.36 291.60L603.78 292.31L603.21 293.01L602.64 293.72L602.08 294.43L601.52 295.13L600.96 295.84L600.41 296.55L599.86 297.26L599.32 297.96L598.78 298.67L598.25 299.38L597.72 300.09L597.20 300.80L596.68 301.50L596.16 302.21L595.65 302.92L595.14 303.63L594.64 304.34L594.14 305.05L593.65 305.75L593.16 306.46L592.67 307.17L592.19 307.88L591.71 308.59L591.24 309.30L590.77 310.01L590.31 310.72L589.85 311.43L589.40 312.14L588.95 312.84L588.50 313.55L588.06 314.26L587.63 314.97L587.20 315.68L586.77 316.39L586.35 317.10L585.93 317.81L585.52 318.52L585.11 319.23L584.70 319.94L584.31 320.65L583.91 321.36L583.52 322.07L583.13 322.77L582.75 323.48L582.38 324.19L582.01 324.90M1020.95 172.53L1019.99 171.99L1019.03 171.46L1018.08 170.93L1017.12 170.40L1016.16 169.88L1015.21 169.35L1014.25 168.83L1013.30 168.32L1012.34 167.80L1011.39 167.28L1010.44 166.77L1009.48 166.26L1008.53 165.76L1007.58 165.25L1006.63 164.75L1005.68 164.25L1004.73 163.75L1003.79 163.26L1002.84 162.76L1001.89 162.27L1000.95 161.79L1000.00 161.30L999.06 160.82L998.12 160.34L997.17 159.86L996.23 159.39L995.29 158.92L994.36 158.45L993.42 157.98L992.48 157.52L991.55 157.06L990.61 156.60L989.68 156.15L988.75 155.70L987.82 155.25L986.89 154.80L985.96 154.36L985.03 153.92L984.11 153.49L983.18 153.05L982.26 152.62L981.34 152.20L980.42 151.78L979.50 151.36L978.58 150.94L977.66 150.53L976.75 150.12L975.83 149.71L974.92 149.31L974.01 148.91L973.10 148.51L972.19 148.12L971.29 147.73L970.38 147.35L969.48 146.97L968.58 146.59L967.68 146.22L966.78 145.85L965.88 145.48L964.98 145.12L964.09 144.76L963.20 144.41L962.31 144.06L961.42 143.71L960.53 143.37L959.64 143.03L958.76 142.69L957.88 142.36L956.99 142.04L956.11 141.72L955.24 141.40L954.36 141.09L953.48 140.78L952.61 140.47L951.74 140.17L950.87 139.88L950.00 139.59L949.13 139.30L948.27 139.02L947.40 138.74L946.54 138.47L945.68 138.20L944.82 137.94L943.96 137.68L943.10 137.43L942.25 137.18L941.40 136.93L940.54 136.70L939.69 136.46L938.84 136.23L938.00 136.01L937.15 135.79L936.30 135.57L935.46 135.36L934.62 135.16L933.78 134.96L932.94 134.77L932.10 134.58L931.26 134.39L930.43 134.22L929.59 134.04L928.76 133.87L927.92 133.71L927.09 133.55L926.26 133.40L925.43 133.26L924.61 133.11L923.78 132.98L922.95 132.85L922.13 132.72L921.30 132.60L920.48 132.49L919.66 132.38L918.83 132.28L918.01 132.18L917.19 132.09L916.37 132.00L915.55 131.92L914.74 131.85L913.92 131.78L913.10 131.71L912.28 131.65L911.47 131.60L910.65 131.55L909.84 131.51L909.02 131.48L908.21 131.45L907.39 131.42L906.58 131.40L905.77 131.39L904.95 131.38L904.14 131.38L903.33 131.39L902.51 131.40L901.70 131.41L900.89 131.43L900.07 131.46L899.26 131.49L898.45 131.53L897.63 131.57L896.82 131.62L896.00 131.68L895.19 131.74L894.37 131.80L893.56 131.88L892.74 131.95L891.93 132.04L891.11 132.13L890.29 132.22L889.47 132.32L888.66 132.43L887.84 132.54L887.02 132.65L886.20 132.77L885.38 132.90L884.55 133.03L883.73 133.17L882.91 133.32L882.08 133.47L881.26 133.62L880.43 133.78L879.61 133.94L878.78 134.11L877.95 134.29L877.12 134.47L876.29 134.66L875.46 134.85L874.62 135.04L873.79 135.25L872.95 135.45L872.12 135.66L871.28 135.88L870.44 136.10L869.60 136.33L868.76 136.56L867.91 136.80L867.07 137.04L866.22 137.28L865.38 137.53L864.53 137.79L863.68 138.05L862.83 138.32L861.98 138.59L861.12 138.86L860.27 139.14L859.41 139.42L858.55 139.71L857.69 140.00L856.83 140.30L855.97 140.60L855.11 140.91L854.24 141.22L853.38 141.53L852.51 141.85L851.64 142.18L850.77 142.50L849.90 142.84L849.02 143.17L848.15 143.51L847.27 143.85L846.39 144.20L845.51 144.55L844.63 144.91L843.75 145.27L842.87 145.63L841.98 146.00L841.09 146.37L840.21 146.75L839.32 147.13L838.42 147.51L837.53 147.90L836.64 148.29L835.74 148.68L834.85 149.08L833.95 149.48L833.05 149.88L832.15 150.29L831.25 150.70L830.34 151.12L829.44 151.53L828.53 151.95L827.63 152.38L826.72 152.81L825.81 153.24L824.90 153.67L823.99 154.11L823.07 154.55L822.16 154.99L821.24 155.44L820.33 155.89L819.41 156.34L818.49 156.80L817.57 157.25L816.65 157.72L815.73 158.18L814.81 158.65L813.88 159.12L812.96 159.59L812.03 160.06L811.11 160.54L810.18 161.02L809.25 161.51L808.32 161.99L807.39 162.48L806.46 162.97L805.53 163.46L804.60 163.96L803.66 164.46L802.73 164.96L801.79 165.46L800.86 165.97L799.92 166.48L798.98 166.99L798.05 167.50L797.11 168.02L796.17 168.53L795.23 169.05L794.29 169.58L793.35 170.10L792.41 170.63L791.47 171.15L790.53 171.68L789.59 172.22L788.65 172.75L787.71 173.29L786.76 173.83L785.82 174.37L784.88 174.91L783.93 175.45L782.99 176.00L782.05 176.55L781.10 177.10L780.16 177.65L779.22 178.21L778.27 178.76L777.33 179.32L776.38 179.88L775.44 180.44L774.50 181.00L773.55 181.57L772.61 182.13L771.67 182.70L770.72 183.27L769.78 183.84L768.84 184.42L767.89 184.99L766.95 185.57L766.01 186.14L765.07 186.72L764.13 187.30L763.18 187.89L762.24 188.47L761.30 189.05L760.36 189.64L759.42 190.23L758.48 190.82L757.55 191.41L756.61 192.00L755.67 192.59L754.74 193.19L753.80 193.79L752.86 194.38L751.93 194.98L751.00 195.58L750.06 196.18L749.13 196.79L748.20 197.39L747.27 198.00L746.34 198.60L745.41 199.21L744.48 199.82L743.55 200.43L742.63 201.04L741.70 201.65L740.78 202.27L739.85 202.88L738.93 203.50L738.01 204.11L737.09 204.73L736.17 205.35L735.26 205.97L734.34 206.59L733.42 207.22L732.51 207.84L731.60 208.46L730.69 209.09L729.78 209.71L728.87 210.34L727.96 210.97L727.05 211.60L726.15 212.23L725.25 212.86L724.34 213.49L723.44 214.12L722.54 214.76L721.65 215.39L720.75 216.03L719.86 216.66L718.96 217.30L718.07 217.94L717.18 218.58L716.30 219.22L715.41 219.86L714.53 220.50L713.64 221.14L712.76 221.79L711.88 222.43L711.01 223.07L710.13 223.72L709.26 224.37L708.39 225.01L707.52 225.66L706.65 226.31L705.78 226.96L704.92 227.61L704.06 228.26L703.20 228.91L702.34 229.56L701.49 230.21L700.63 230.87L699.78 231.52L698.93 232.17L698.08 232.83L697.24 233.48L696.40 234.14L695.55 234.80L694.72 235.45L693.88 236.11L693.05 236.77L692.21 237.43L691.38 238.09L690.56 238.75L689.73 239.41L688.91 240.07L688.09 240.74L687.27 241.40L686.46 242.06L685.64 242.73L684.83 243.39L684.03 244.06L683.22 244.72L682.42 245.39L681.62 246.05L680.82 246.72L680.03 247.39L679.23 248.06L678.44 248.72L677.66 249.39L676.87 250.06L676.09 250.73L675.31 251.40L674.53 252.07L673.76 252.74L672.99 253.41L672.22 254.09L671.46 254.76L670.69 255.43L669.93 256.10L669.18 256.78L668.42 257.45L667.67 258.13L666.92 258.80L666.18 259.48L665.44 260.15L664.70 260.83L663.96 261.50L663.23 262.18L662.50 262.86L661.77 263.54L661.04 264.21L660.32 264.89L659.60 265.57L658.89 266.25L658.18 266.93L657.47 267.61L656.76 268.29L656.06 268.97L655.36 269.65L654.66 270.33L653.97 271.01L653.28 271.69L652.59 272.37L651.91 273.05L651.23 273.73L650.55 274.42L649.87 275.10L649.20 275.78L648.54 276.46L647.87 277.15L647.21 277.83L646.55 278.51L645.90 279.20L645.25 279.88L644.60 280.57L643.96 281.25L643.32 281.94L642.68 282.62L642.04 283.31L641.41 283.99L640.79 284.68L640.16 285.36L639.54 286.05L638.93 286.74L638.31 287.42L637.71 288.11L637.10 288.80L636.50 289.48L635.90 290.17L635.30 290.86L634.71 291.55L634.12 292.23L633.54 292.92L632.96 293.61L632.38 294.30L631.81 294.99L631.24 295.68L630.67 296.36L630.11 297.05L629.55 297.74L628.99 298.43L628.44 299.12L627.90 299.81L627.35 300.50L626.81 301.19L626.27 301.88L625.74 302.57L625.21 303.26L624.69 303.95L624.16 304.64L623.65 305.33L623.13 306.02L622.62 306.71L622.12 307.40L621.61 308.09L621.11 308.78L620.62 309.47L620.13 310.16L619.64 310.85L619.16 311.54L618.68 312.23L618.20 312.92L617.73 313.61L617.26 314.30L616.80 314.99L616.34 315.68L615.88 316.37L615.43 317.07L614.98 317.76L614.54 318.45L614.10 319.14L613.66 319.83L613.23 320.52L612.80 321.21L612.38 321.90L611.95 322.59L611.54 323.28L611.12 323.98L610.72 324.67L610.31 325.36L609.91 326.05L609.51 326.74L609.12 327.43L608.73 328.12L608.35 328.81L607.97 329.50L607.59 330.19L607.22 330.88L606.85 331.57L606.48 332.26L606.12 332.95L605.77 333.64L605.41 334.33L605.07 335.02L604.72 335.71L604.38 336.40L604.04 337.09L603.71 337.78L603.38 338.47L603.06 339.16L602.74 339.85L602.42 340.54M839.06 70.24L838.27 70.99L837.48 71.75L836.69 72.52L835.89 73.28L835.10 74.04L834.31 74.81L833.51 75.58L832.71 76.35L831.91 77.12L831.12 77.89L830.32 78.67L829.52 79.44L828.72 80.22L827.92 81.00L827.12 81.77L826.32 82.55L825.52 83.33L824.72 84.12L823.92 84.90L823.12 85.68L822.32 86.46L821.52 87.25L820.73 88.03L819.93 88.82L819.13 89.61L818.34 90.39L817.54 91.18L816.75 91.97L815.95 92.76L815.16 93.55L814.37 94.34L813.58 95.13L812.78 95.92L811.99 96.71L811.21 97.51L810.42 98.30L809.63 99.09L808.85 99.89L808.06 100.68L807.28 101.47L806.50 102.27L805.72 103.06L804.94 103.86L804.16 104.66L803.39 105.45L802.61 106.25L801.84 107.05L801.06 107.84L800.29 108.64L799.53 109.44L798.76 110.24L797.99 111.04L797.23 111.84L796.46 112.63L795.70 113.43L794.94 114.23L794.19 115.03L793.43 115.83L792.68 116.63L791.92 117.43L791.17 118.24L790.42 119.04L789.68 119.84L788.93 120.64L788.19 121.44L787.45 122.24L786.71 123.04L785.97 123.85L785.23 124.65L784.50 125.45L783.77 126.25L783.04 127.06L782.31 127.86L781.58 128.66L780.86 129.47L780.14 130.27L779.42 131.07L778.70 131.88L777.99 132.68L777.27 133.49L776.56 134.29L775.85 135.10L775.15 135.90L774.44 136.70L773.74 137.51L773.04 138.31L772.34 139.12L771.65 139.92L770.95 140.73L770.26 141.53L769.58 142.34L768.89 143.15L768.21 143.95L767.53 144.76L766.85 145.56L766.17 146.37L765.50 147.17L764.82 147.98L764.16 148.79L763.49 149.59L762.83 150.40L762.16 151.21L761.51 152.01L760.85 152.82L760.20 153.63L759.54 154.43L758.90 155.24L758.25 156.05L757.61 156.85L756.97 157.66L756.33 158.47L755.69 159.28L755.06 160.08L754.43 160.89L753.80 161.70L753.18 162.51L752.55 163.31L751.94 164.12L751.32 164.93L750.71 165.74L750.09 166.54L749.49 167.35L748.88 168.16L748.28 168.97L747.68 169.78L747.08 170.58L746.49 171.39L745.90 172.20L745.31 173.01L744.72 173.82L744.14 174.63L743.56 175.43L742.99 176.24L742.41 177.05L741.84 177.86L741.27 178.67L740.71 179.48L740.15 180.29L739.59 181.09L739.03 181.90L738.48 182.71L737.93 183.52L737.38 184.33L736.84 185.14L736.30 185.95L735.76 186.76L735.23 187.57L734.70 188.38L734.17 189.19L733.64 189.99L733.12 190.80L732.60 191.61L732.09 192.42L731.58 193.23L731.07 194.04L730.56 194.85L730.06 195.66L729.56 196.47L729.06 197.28L728.57 198.09L728.08 198.90L727.59 199.71L727.11 200.52L726.63 201.33L726.15 202.14L725.68 202.95L725.21 203.76L724.74 204.57L724.28 205.38L723.82 206.19L723.36 207.00L722.91 207.81L722.46 208.62L722.01 209.42L721.57 210.23L721.13 211.04L720.69 211.85L720.26 212.66L719.83 213.48L719.40 214.29L718.98 215.10L718.56 215.91L718.14 216.72L717.73 217.53L717.32 218.34L716.91 219.15L716.51 219.96L716.11 220.77L715.72 221.58L715.32 222.39L714.94 223.20L714.55 224.01L714.17 224.82L713.79 225.63L713.42 226.44L713.05 227.25L712.68 228.06L712.32 228.87L711.96 229.68L711.60 230.49L711.25 231.30L710.90 232.11L710.55 232.92L710.21 233.73L709.87 234.54L709.54 235.35L709.20 236.16L708.88 236.98L708.55 237.79L708.23 238.60L707.92 239.41L707.60 240.22L707.29 241.03L706.99 241.84L706.69 242.65L706.39 243.46L706.09 244.27L705.80 245.08L705.51 245.89L705.23 246.70L704.95 247.51L704.67 248.33L704.40 249.14L704.13 249.95L703.87 250.76L703.61 251.57L703.35 252.38L703.09 253.19L702.84 254.00L702.60 254.81L702.36 255.62L702.12 256.43L701.88 257.24L701.65 258.06L701.42 258.87L701.20 259.68L700.98 260.49L700.76 261.30L700.55 262.11L700.34 262.92L700.14 263.73L699.94 264.54L699.74 265.35L699.55 266.17L699.36 266.98L699.17 267.79L698.99 268.60L698.81 269.41L698.64 270.22L698.47 271.03L698.30 271.84L698.14 272.65L697.98 273.47L697.82 274.28L697.67 275.09L697.52 275.90L697.38 276.71L697.24 277.52L697.11 278.33L696.97 279.14L696.85 279.95L696.72 280.77L696.60 281.58L696.49 282.39L696.37 283.20L696.26 284.01L696.16 284.82L696.06 285.63L695.96 286.44L695.87 287.25L695.78 288.07L695.69 288.88L695.61 289.69L695.54 290.50L695.46 291.31L695.39 292.12L695.33 292.93L695.26 293.74L695.21 294.56L695.15 295.37L695.10 296.18L695.06 296.99L695.01 297.80L694.98 298.61L694.94 299.42L694.91 300.23L694.88 301.05L694.86 301.86L694.84 302.67L694.83 303.48L694.82 304.29L694.81 305.10L694.81 305.91L694.81 306.72L694.81 307.54L694.82 308.35L694.83 309.16L694.85 309.97L694.87 310.78L694.89 311.59L694.92 312.40L694.95 313.21L694.99 314.03L695.03 314.84L695.07 315.65L695.12 316.46L695.17 317.27L695.23 318.08L695.29 318.89L695.35 319.70L695.42 320.52L695.49 321.33L695.56 322.14L695.64 322.95L695.72 323.76L695.81 324.57L695.90 325.38L695.99 326.19L696.09 327.01L696.19 327.82L696.30 328.63L696.41 329.44L696.52 330.25L696.64 331.06L696.76 331.87L696.89 332.68L697.02 333.50L697.15 334.31L697.29 335.12L697.43 335.93L697.57 336.74L697.72 337.55L697.88 338.36L698.03 339.17L698.19 339.99L698.36 340.80L698.52 341.61L698.70 342.42L698.87 343.23L699.05 344.04L699.23 344.85L699.42 345.66L699.61 346.48L699.81 347.29L700.01 348.10L700.21 348.91L700.41 349.72L700.62 350.53L700.84 351.34L701.06 352.15L701.28 352.97L701.50 353.78L701.73 354.59L701.96 355.40L702.20 356.21L702.44 357.02L702.68 357.83L702.93 358.64L703.18 359.45L703.44 360.27L703.70 361.08L703.96 361.89L704.23 362.70L704.50 363.51L704.77 364.32L705.05 365.13L705.33 365.94L705.62 366.75L705.90 367.57L706.20 368.38L706.49 369.19L706.79 370.00L707.10 370.81L707.40 371.62L707.72 372.43L708.03 373.24L708.35 374.05L708.67 374.87L709.00 375.68L709.32 376.49L709.66 377.30L709.99 378.11L710.33 378.92L710.68 379.73L711.03 380.54L711.38 381.35L711.73 382.16L712.09 382.98L712.45 383.79L712.82 384.60L713.18 385.41L713.56 386.22L713.93 387.03L714.31 387.84L714.69 388.65L715.08 389.46L715.47 390.27L715.87 391.08L716.26 391.89L716.66 392.71L717.07 393.52L717.47 394.33L717.89 395.14L718.30 395.95L718.72 396.76L719.14 397.57L719.56 398.38L719.99 399.19L720.42 400.00L720.86 400.81L721.30 401.62L721.74 402.43L722.18 403.24L722.63 404.06L723.09 404.87L723.54 405.68L724.00 406.49L724.46 407.30L724.93 408.11L725.40 408.92L725.87 409.73L726.34 410.54L726.82 411.35L727.30 412.16L727.79 412.97L728.28 413.78L728.77 414.59L729.27 415.40L729.76 416.21L730.27 417.02L730.77 417.83L731.28 418.64L731.79 419.45L732.30 420.26L732.82 421.07L733.34 421.88L733.87 422.69L734.39 423.51L734.92 424.32L735.46 425.13L735.99 425.94L736.53 426.75L737.08 427.56L737.62 428.37L738.17 429.18L738.72 429.99L739.28 430.80L739.84 431.61L740.40 432.42L740.96 433.23L741.53 434.04L742.10 434.85L742.67 435.66L743.25 436.46L743.83 437.27L744.41 438.08L744.99 438.89L745.58 439.70L746.17 440.51L746.77 441.32L747.36 442.13L747.96 442.94L748.57 443.75L749.17 444.56M890.53 90.17L890.63 90.95L890.74 91.72L890.85 92.50L890.95 93.28L891.06 94.06L891.17 94.84L891.27 95.62L891.38 96.41L891.49 97.19L891.59 97.97L891.70 98.76L891.81 99.54L891.91 100.33L892.02 101.11L892.13 101.90L892.24 102.69L892.34 103.47L892.45 104.26L892.56 105.05L892.67 105.84L892.78 106.63L892.89 107.42L892.99 108.21L893.10 109.00L893.21 109.79L893.32 110.58L893.43 111.38L893.54 112.17L893.65 112.96L893.76 113.75L893.87 114.55L893.98 115.34L894.08 116.14L894.19 116.93L894.30 117.72L894.41 118.52L894.52 119.32L894.63 120.11L894.75 120.91L894.86 121.70L894.97 122.50L895.08 123.30L895.19 124.09L895.30 124.89L895.41 125.69L895.52 126.49L895.63 127.29L895.74 128.08L895.85 128.88L895.97 129.68L896.08 130.48L896.19 131.28L896.30 132.08L896.41 132.88L896.53 133.68L896.64 134.48L896.75 135.28L896.86 136.08L896.98 136.88L897.09 137.68L897.20 138.48L897.31 139.28L897.43 140.08L897.54 140.88L897.65 141.69L897.76 142.49L897.88 143.29L897.99 144.09L898.10 144.89L898.22 145.69L898.33 146.50L898.44 147.30L898.56 148.10L898.67 148.90L898.79 149.71L898.90 150.51L899.01 151.31L899.13 152.12L899.24 152.92L899.35 153.72L899.47 154.53L899.58 155.33L899.70 156.13L899.81 156.94L899.92 157.74L900.04 158.55L900.15 159.35L900.27 160.16L900.38 160.96L900.50 161.76L900.61 162.57L900.72 163.37L900.84 164.18L900.95 164.98L901.07 165.79L901.18 166.59L901.30 167.40L901.41 168.20L901.53 169.01L901.64 169.81L901.76 170.62L901.87 171.42L901.98 172.23L902.10 173.04L902.21 173.84L902.33 174.65L902.44 175.45L902.56 176.26L902.67 177.06L902.79 177.87L902.90 178.68L903.02 179.48L903.13 180.29L903.25 181.09L903.36 181.90L903.47 182.71L903.59 183.51L903.70 184.32L903.82 185.13L903.93 185.93L904.05 186.74L904.16 187.55L904.27 188.35L904.39 189.16L904.50 189.97L904.62 190.77L904.73 191.58L904.85 192.39L904.96 193.20L905.07 194.00L905.19 194.81L905.30 195.62L905.41 196.42L905.53 197.23L905.64 198.04L905.76 198.85L905.87 199.65L905.98 200.46L906.10 201.27L906.21 202.08L906.32 202.88L906.44 203.69L906.55 204.50L906.66 205.31L906.78 206.11L906.89 206.92L907.00 207.73L907.11 208.54L907.23 209.35L907.34 210.15L907.45 210.96L907.56 211.77L907.68 212.58L907.79 213.39L907.90 214.19L908.01 215.00L908.12 215.81L908.23 216.62L908.35 217.43L908.46 218.24L908.57 219.04L908.68 219.85L908.79 220.66L908.90 221.47L909.01 222.28L909.12 223.09L909.23 223.89L909.35 224.70L909.46 225.51L909.57 226.32L909.68 227.13L909.79 227.94L909.90 228.75L910.01 229.55L910.11 230.36L910.22 231.17L910.33 231.98L910.44 232.79L910.55 233.60L910.66 234.41L910.77 235.21L910.88 236.02L910.98 236.83L911.09 237.64L911.20 238.45L911.31 239.26L911.42 240.07L911.52 240.88L911.63 241.69L911.74 242.49L911.84 243.30L911.95 244.11L912.06 244.92L912.16 245.73L912.27 246.54L912.38 247.35L912.48 248.16L912.59 248.97L912.69 249.78L912.80 250.59L912.90 251.39L913.01 252.20L913.11 253.01L913.22 253.82L913.32 254.63L913.42 255.44L913.53 256.25L913.63 257.06L913.74 257.87L913.84 258.68L913.94 259.49L914.04 260.30L914.15 261.11L914.25 261.92L914.35 262.72L914.45 263.53L914.55 264.34L914.66 265.15L914.76 265.96L914.86 266.77L914.96 267.58L915.06 268.39L915.16 269.20L915.26 270.01L915.36 270.82L915.46 271.63L915.56 272.44L915.66 273.25L915.75 274.06L915.85 274.87L915.95 275.68L916.05 276.49L916.15 277.29L916.24 278.10L916.34 278.91L916.44 279.72L916.53 280.53L916.63 281.34L916.73 282.15L916.82 282.96L916.92 283.77L917.01 284.58L917.11 285.39L917.20 286.20L917.30 287.01L917.39 287.82L917.48 288.63L917.58 289.44L917.67 290.25L917.76 291.06L917.86 291.87L917.95 292.68L918.04 293.49L918.13 294.30L918.22 295.11L918.31 295.92L918.41 296.73L918.50 297.54L918.59 298.35L918.68 299.16L918.77 299.97L918.85 300.77L918.94 301.58L919.03 302.39L919.12 303.20L919.21 304.01L919.30 304.82L919.38 305.63L919.47 306.44L919.56 307.25L919.64 308.06L919.73 308.87L919.82 309.68L919.90 310.49L919.99 311.30L920.07 312.11L920.16 312.92L920.24 313.73L920.32 314.54L920.41 315.35L920.49 316.16L920.57 316.97L920.65 317.78L920.74 318.59L920.82 319.40L920.90 320.21L920.98 321.02L921.06 321.83L921.14 322.64L921.22 323.45L921.30 324.26L921.38 325.07L921.46 325.88L921.54 326.69L921.62 327.50L921.69 328.31L921.77 329.12L921.85 329.93L921.92 330.74L922.00 331.55L922.08 332.36L922.15 333.17L922.23 333.98L922.30 334.79L922.38 335.59L922.45 336.40L922.52 337.21L922.60 338.02L922.67 338.83L922.74 339.64L922.81 340.45L922.89 341.26L922.96 342.07L923.03 342.88L923.10 343.69L923.17 344.50L923.24 345.31L923.31 346.12L923.38 346.93L923.45 347.74L923.51 348.55L923.58 349.36L923.65 350.17L923.72 350.98L923.78 351.79L923.85 352.60L923.91 353.41L923.98 354.22L924.04 355.03L924.11 355.84L924.17 356.65L924.24 357.46L924.30 358.27L924.36 359.08L924.42 359.89L924.49 360.69L924.55 361.50L924.61 362.31L924.67 363.12L924.73 363.93L924.79 364.74L924.85 365.55L924.91 366.36L924.97 367.17L925.03 367.98L925.08 368.79L925.14 369.60L925.20 370.41L925.25 371.22L925.31 372.03L925.37 372.84L925.42 373.65L925.48 374.46L925.53 375.27L925.58 376.08L925.64 376.88L925.69 377.69L925.74 378.50L925.80 379.31L925.85 380.12L925.90 380.93L925.95 381.74L926.00 382.55L926.05 383.36L926.10 384.17L926.15 384.98L926.20 385.79L926.24 386.60L926.29 387.41L926.34 388.21L926.39 389.02L926.43 389.83L926.48 390.64L926.52 391.45L926.57 392.26L926.61 393.07L926.66 393.88L926.70 394.69L926.74 395.50L926.79 396.31L926.83 397.11L926.87 397.92L926.91 398.73L926.95 399.54L926.99 400.35L927.03 401.16L927.07 401.97L927.11 402.78L927.15 403.59L927.19 404.40L927.22 405.20L927.26 406.01L927.30 406.82L927.33 407.63L927.37 408.44L927.41 409.25L927.44 410.06L927.47 410.87L927.51 411.67L927.54 412.48L927.57 413.29L927.61 414.10L927.64 414.91L927.67 415.72L927.70 416.53L927.73 417.33L927.76 418.14L927.79 418.95L927.82 419.76L927.85 420.57L927.88 421.38L927.90 422.18L927.93 422.99L927.96 423.80L927.98 424.61L928.01 425.42L928.04 426.22L928.06 427.03L928.08 427.84L928.11 428.65L928.13 429.46L928.15 430.27L928.18 431.07L928.20 431.88L928.22 432.69L928.24 433.50L928.26 434.30L928.28 435.11L928.30 435.92L928.32 436.73L928.34 437.54L928.36 438.34L928.37 439.15L928.39 439.96L928.41 440.77L928.42 441.57L928.44 442.38L928.45 443.19L928.47 444.00L928.48 444.80L928.49 445.61L928.51 446.42L928.52 447.22L928.53 448.03L928.54 448.84L928.56 449.65L928.57 450.45L928.58 451.26L928.59 452.07L928.60 452.87L928.60 453.68L928.61 454.49L928.62 455.29L928.63 456.10L928.63 456.91L928.64 457.71L928.65 458.52L928.65 459.33L928.66 460.13L928.66 460.94L928.66 461.74L928.67 462.55L928.67 463.36L928.67 464.16L928.68 464.97L928.68 465.77L928.68 466.58M892.84 91.83L893.47 91.23L894.10 90.65L894.74 90.06L895.37 89.49L896.00 88.91L896.64 88.35L897.27 87.78L897.90 87.23L898.53 86.68L899.16 86.13L899.79 85.59L900.42 85.06L901.05 84.53L901.68 84.01L902.31 83.50L902.94 82.99L903.58 82.50L904.21 82.00L904.84 81.52L905.47 81.04L906.10 80.57L906.73 80.11L907.36 79.66L908.00 79.21L908.63 78.78L909.27 78.35L909.90 77.93L910.54 77.52L911.18 77.13L911.82 76.74L912.46 76.36L913.11 75.99L913.76 75.63L914.41 75.28L915.06 74.95L915.71 74.62L916.37 74.31L917.03 74.01L917.70 73.72L918.37 73.44L919.04 73.17L919.72 72.92L920.40 72.68L921.09 72.45L921.78 72.24L922.48 72.04L923.19 71.85L923.90 71.68L924.62 71.52L925.34 71.37L926.07 71.24L926.81 71.12L927.56 71.02L928.31 70.93L929.08 70.86L929.85 70.80L930.63 70.76L931.42 70.73L932.23 70.71L933.04 70.71L933.86 70.73L934.69 70.76L935.53 70.80L936.39 70.86L937.25 70.93L938.13 71.02L939.01 71.13L939.91 71.24L940.83 71.37L941.75 71.52L942.68 71.68L943.63 71.85L944.59 72.04L945.57 72.24L946.55 72.46L947.55 72.69L948.56 72.93L949.58 73.18L950.62 73.44L951.67 73.72L952.73 74.01L953.80 74.32L954.88 74.63L955.98 74.96L957.09 75.29L958.21 75.64L959.35 76.00L960.49 76.37L961.65 76.75L962.82 77.14L964.00 77.53L965.19 77.94L966.39 78.36L967.60 78.79L968.83 79.22L970.06 79.67L971.30 80.12L972.56 80.58L973.82 81.05L975.09 81.53L976.38 82.02L977.67 82.51L978.97 83.01L980.28 83.51L981.60 84.03L982.92 84.55L984.26 85.07L985.60 85.61L986.95 86.15L988.31 86.69L989.68 87.24L991.05 87.80L992.43 88.36L993.82 88.93L995.21 89.50L996.61 90.08L998.01 90.66L999.43 91.25L1000.84 91.84L1002.27 92.44L1003.69 93.04L1005.13 93.64L1006.57 94.25L1008.01 94.87L1009.46 95.48L1010.91 96.11L1012.37 96.73L1013.83 97.36L1015.30 97.99L1016.77 98.63L1018.24 99.27L1019.72 99.91L1021.20 100.56L1022.68 101.20L1024.17 101.86L1025.66 102.51L1027.15 103.17L1028.65 103.83L1030.15 104.49L1031.65 105.16L1033.15 105.83L1034.66 106.50L1036.17 107.17L1037.68 107.85L1039.19 108.52L1040.70 109.20L1042.22 109.89L1043.73 110.57L1045.25 111.26L1046.77 111.95L1048.29 112.64L1049.81 113.33L1051.33 114.02L1052.86 114.72L1054.38 115.42L1055.91 116.12L1057.43 116.82L1058.96 117.53L1060.49 118.23L1062.01 118.94L1063.54 119.65L1065.07 120.36L1066.60 121.07L1068.12 121.78L1069.65 122.50L1071.18 123.21L1072.70 123.93L1074.23 124.65L1075.76 125.37L1077.28 126.09L1078.81 126.81L1080.33 127.54L1081.86 128.26L1083.38 128.99L1084.90 129.71L1086.42 130.44L1087.94 131.17L1089.46 131.90L1090.98 132.64L1092.49 133.37L1094.01 134.10L1095.52 134.84L1097.03 135.57L1098.54 136.31L1100.05 137.05L1101.56 137.79L1103.07 138.52L1104.57 139.27L1106.07 140.01L1107.57 140.75L1109.07 141.49L1110.57 142.24L1112.06 142.98L1113.55 143.73L1115.05 144.47L1116.53 145.22L1118.02 145.97L1119.50 146.71L1120.98 147.46L1122.46 148.21L1123.94 148.96L1125.41 149.71L1126.88 150.47L1128.35 151.22L1129.82 151.97L1131.28 152.73L1132.74 153.48L1134.19 154.24L1135.65 154.99L1137.10 155.75L1138.55 156.50L1139.99 157.26L1141.44 158.02L1142.88 158.78L1144.31 159.54L1145.74 160.29L1147.17 161.05L1148.60 161.81L1150.02 162.58L1151.44 163.34L1152.86 164.10L1154.27 164.86L1155.68 165.62L1157.08 166.39L1158.49 167.15L1159.89 167.91L1161.28 168.68L1162.67 169.44L1164.06 170.21L1165.44 170.98L1166.82 171.74L1168.20 172.51L1169.57 173.28L1170.93 174.04L1172.30 174.81L1173.66 175.58L1175.01 176.35L1176.37 177.12L1177.71 177.88L1179.06 178.65L1180.39 179.42L1181.73 180.19L1183.06 180.96L1184.39 181.74L1185.71 182.51L1187.02 183.28L1188.34 184.05L1189.65 184.82L1190.95 185.59L1192.25 186.37L1193.54 187.14L1194.83 187.91L1196.12 188.69L1197.40 189.46L1198.68 190.24L1199.95 191.01L1201.21 191.78L1202.48 192.56L1203.73 193.33L1204.98 194.11L1206.23 194.89L1207.47 195.66L1208.71 196.44L1209.94 197.21L1211.17 197.99L1212.39 198.77L1213.61 199.54L1214.82 200.32L1216.03 201.10L1217.23 201.88L1218.43 202.66L1219.62 203.43L1220.81 204.21L1221.99 204.99L1223.16 205.77L1224.33 206.55L1225.50 207.33L1226.66 208.11L1227.81 208.89L1228.96 209.67L1230.10 210.45L1231.24 211.23L1232.37 212.01L1233.50 212.79L1234.62 213.57L1235.73 214.35L1236.84 215.13L1237.95 215.91L1239.05 216.69L1240.14 217.47L1241.23 218.26L1242.31 219.04L1243.38 219.82L1244.45 220.60L1245.52 221.38M1003.27 76.01L1001.73 75.59L1000.21 75.17L998.71 74.77L997.22 74.38L995.76 74.00L994.32 73.63L992.90 73.27L991.50 72.93L990.12 72.59L988.77 72.27L987.44 71.95L986.13 71.65L984.84 71.37L983.58 71.09L982.34 70.83L981.12 70.59L979.93 70.35L978.76 70.13L977.62 69.93L976.50 69.74L975.41 69.56L974.34 69.40L973.30 69.25L972.28 69.12L971.28 69.00L970.31 68.90L969.37 68.81L968.44 68.74L967.55 68.68L966.67 68.64L965.82 68.62L965.00 68.61L964.19 68.61L963.41 68.63L962.66 68.67L961.92 68.73L961.21 68.79L960.52 68.88L959.85 68.98L959.20 69.09L958.57 69.22L957.95 69.37L957.36 69.53L956.79 69.70L956.24 69.89L955.70 70.09L955.18 70.31L954.67 70.54L954.19 70.78L953.72 71.04L953.26 71.31L952.82 71.60L952.39 71.89L951.97 72.20L951.57 72.53L951.18 72.86L950.80 73.20L950.44 73.56L950.09 73.93L949.74 74.31L949.41 74.70L949.08 75.10L948.77 75.51L948.47 75.93L948.17 76.35L947.88 76.79L947.60 77.24L947.33 77.70L947.06 78.16L946.80 78.64L946.55 79.12L946.31 79.61L946.07 80.11L945.83 80.61L945.60 81.12L945.38 81.64L945.16 82.17L944.95 82.70L944.74 83.24L944.54 83.79L944.33 84.34L944.14 84.90L943.95 85.46L943.76 86.03L943.57 86.61L943.39 87.19L943.21 87.77L943.03 88.36L942.85 88.96L942.68 89.56L942.51 90.16L942.35 90.77L942.18 91.39L942.02 92.01L941.86 92.63L941.70 93.25L941.54 93.88L941.39 94.52L941.23 95.15L941.08 95.79L940.93 96.44L940.78 97.09L940.63 97.74L940.48 98.39L940.34 99.05L940.19 99.71L940.05 100.37L939.90 101.04L939.76 101.71L939.62 102.38L939.48 103.05L939.34 103.73L939.20 104.41L939.06 105.09L938.92 105.77L938.78 106.46L938.64 107.15L938.51 107.84L938.37 108.53L938.23 109.22L938.10 109.92L937.96 110.62L937.83 111.32L937.69 112.02L937.56 112.73L937.42 113.43L937.29 114.14L937.15 114.85L937.02 115.56L936.89 116.28L936.75 116.99L936.62 117.71L936.48 118.42L936.35 119.14L936.21 119.86L936.08 120.58L935.95 121.31L935.81 122.03L935.68 122.76L935.54 123.49L935.41 124.21L935.27 124.94L935.14 125.67L935.00 126.41L934.87 127.14L934.73 127.87L934.60 128.61L934.46 129.34L934.33 130.08L934.19 130.82L934.05 131.56L933.92 132.30L933.78 133.04L933.64 133.78L933.50 134.53L933.37 135.27L933.23 136.02L933.09 136.76L932.95 137.51L932.81 138.26L932.67 139.00L932.53 139.75L932.40 140.50L932.25 141.25L932.11 142.01L931.97 142.76L931.83 143.51L931.69 144.26L931.55 145.02L931.41 145.77L931.27 146.53L931.12 147.29L930.98 148.04L930.84 148.80L930.69 149.56L930.55 150.32L930.40 151.08L930.26 151.84L930.12 152.60L929.97 153.36L929.82 154.12L929.68 154.88L929.53 155.64L929.38 156.41L929.24 157.17L929.09 157.93L928.94 158.70L928.79 159.46L928.64 160.23L928.50 161.00L928.35 161.76L928.20 162.53L928.05 163.30L927.90 164.07L927.74 164.83L927.59 165.60L927.44 166.37L927.29 167.14L927.14 167.91L926.98 168.68L926.83 169.45L926.68 170.22L926.52 170.99L926.37 171.77L926.21 172.54L926.06 173.31L925.90 174.08L925.75 174.86L925.59 175.63L925.44 176.41L925.28 177.18L925.12 177.95L924.96 178.73L924.81 179.50L924.65 180.28L924.49 181.06L924.33 181.83L924.17 182.61L924.01 183.38L923.85 184.16L923.69 184.94L923.53 185.72L923.37 186.49L923.21 187.27L923.05 188.05L922.89 188.83L922.72 189.61L922.56 190.39L922.40 191.17L922.23 191.95L922.07 192.73L921.91 193.51L921.74 194.29L921.58 195.07L921.41 195.85L921.25 196.63L921.08 197.41L920.92 198.19L920.75 198.97L920.58 199.75L920.42 200.54L920.25 201.32L920.08 202.10L919.91 202.88L919.75 203.67L919.58 204.45L919.41 205.23L919.24 206.02L919.07 206.80L918.90 207.58L918.73 208.37L918.56 209.15L918.39 209.94L918.22 210.72L918.05 211.50L917.88 212.29L917.71 213.07L917.54 213.86L917.36 214.64L917.19 215.43L917.02 216.22L916.85 217.00L916.67 217.79L916.50 218.57L916.33 219.36L916.15 220.15L915.98 220.93L915.80 221.72L915.63 222.50L915.46 223.29L915.28 224.08L915.11 224.87L914.93 225.65L914.75 226.44L914.58 227.23L914.40 228.01L914.23 228.80L914.05 229.59L913.87 230.38L913.70 231.17L913.52 231.95L913.34 232.74L913.16 233.53L912.99 234.32L912.81 235.11L912.63 235.90L912.45 236.69L912.27 237.47L912.10 238.26L911.92 239.05L911.74 239.84L911.56 240.63L911.38 241.42L911.20 242.21L911.02 243.00L910.84 243.79L910.66 244.58L910.48 245.37L910.30 246.16L910.12 246.95L909.94 247.74L909.76 248.53L909.58 249.32L909.40 250.11L909.22 250.90L909.04 251.69L908.86 252.48L908.67 253.27L908.49 254.06L908.31 254.85L908.13 255.64L907.95 256.43L907.77 257.23L907.58 258.02L907.40 258.81L907.22 259.60L907.04 260.39L906.86 261.18L906.67 261.97L906.49 262.76L906.31 263.56L906.13 264.35L905.94 265.14L905.76 265.93L905.58 266.72L905.39 267.51L905.21 268.31L905.03 269.10L904.84 269.89L904.66 270.68L904.48 271.47L904.30 272.27L904.11 273.06L903.93 273.85L903.75 274.64L903.56 275.44L903.38 276.23L903.20 277.02L903.01 277.81L902.83 278.60L902.65 279.40L902.46 280.19L902.28 280.98L902.10 281.78L901.91 282.57L901.73 283.36L901.54 284.15L901.36 284.95L901.18 285.74L900.99 286.53L900.81 287.32L900.63 288.12L900.44 288.91L900.26 289.70L900.08 290.50L899.90 291.29L899.71 292.08L899.53 292.88L899.35 293.67L899.16 294.46L898.98 295.26L898.80 296.05L898.61 296.84L898.43 297.63L898.25 298.43L898.07 299.22L897.88 300.01L897.70 300.81L897.52 301.60L897.34 302.39L897.15 303.19L896.97 303.98L896.79 304.77L896.61 305.57L896.43 306.36L896.24 307.16L896.06 307.95L895.88 308.74L895.70 309.54L895.52 310.33L895.34 311.12L895.16 311.92L894.98 312.71L894.79 313.50L894.61 314.30L894.43 315.09L894.25 315.88L894.07 316.68L893.89 317.47L893.71 318.26L893.53 319.06L893.35 319.85L893.17 320.64L892.99 321.44L892.82 322.23L892.64 323.03L892.46 323.82L892.28 324.61L892.10 325.41L891.92 326.20L891.74 326.99L891.57 327.79L891.39 328.58L891.21 329.37L891.03 330.17L890.86 330.96L890.68 331.75L890.50 332.55L890.33 333.34L890.15 334.13L889.97 334.93L889.80 335.72L889.62 336.51L889.45 337.31L889.27 338.10L889.10 338.90L888.92 339.69L888.75 340.48L888.57 341.28L888.40 342.07L888.23 342.86L888.05 343.65L887.88 344.45L887.71 345.24L887.54 346.03L887.36 346.83L887.19 347.62L887.02 348.41L886.85 349.21L886.68 350.00L886.50 350.79L886.33 351.59L886.16 352.38L885.99 353.17L885.82 353.96L885.65 354.76L885.48 355.55L885.32 356.34L885.15 357.14L884.98 357.93L884.81 358.72L884.64 359.51L884.48 360.31L884.31 361.10L884.14 361.89L883.97 362.68L883.81 363.48L883.64 364.27L883.48 365.06L883.31 365.85L883.15 366.65L882.98 367.44L882.82 368.23L882.66 369.02L882.49 369.81L882.33 370.61L882.17 371.40L882.00 372.19L881.84 372.98L881.68 373.77L881.52 374.57L881.36 375.36L881.20 376.15L881.04 376.94L880.88 377.73L880.72 378.52L880.56 379.32L880.40 380.11L880.24 380.90L880.08 381.69L879.93 382.48L879.77 383.27L879.61 384.06L879.46 384.85L879.30 385.64L879.15 386.44L878.99 387.23L878.84 388.02L878.68 388.81L878.53 389.60L878.37 390.39L878.22 391.18L878.07 391.97L877.92 392.76L877.77 393.55L877.61 394.34L877.46 395.13L877.31 395.92L877.16 396.71L877.01 397.50L876.86 398.29L876.72 399.08L876.57 399.87L876.42 400.66L876.27 401.45L876.13 402.23L875.98 403.02L875.83 403.81L875.69 404.60L875.54 405.39L875.40 406.18L875.26 406.97L875.11 407.76L874.97 408.54L874.83 409.33L874.68 410.12L874.54 410.91L874.40 411.70L874.26 412.48L874.12 413.27L873.98 414.06L873.84 414.85L873.70 415.63L873.56 416.42L873.43 417.21L873.29 417.99L873.15 418.78L873.02 419.57L872.88 420.35L872.75 421.14L872.61 421.93L872.48 422.71L872.34 423.50L872.21 424.28L872.08 425.07L871.95 425.86L871.81 426.64L871.68 427.43L871.55 428.21L871.42 429.00L871.29 429.78L871.16 430.56L871.04 431.35L870.91 432.13L870.78 432.92L870.65 433.70L870.53 434.48L870.40 435.27L870.28 436.05L870.15 436.83L870.03 437.62L869.90 438.40L869.78 439.18L869.66 439.96L869.54 440.75L869.42 441.53L869.29 442.31L869.17 443.09L869.05 443.87L868.94 444.65L868.82 445.43L868.70 446.21L868.58 447.00L868.46 447.78L868.35 448.56L868.23 449.33L868.12 450.11L868.00 450.89L867.89 451.67L867.77 452.45L867.66 453.23L867.55 454.01L867.44 454.79L867.32 455.56L867.21 456.34L867.10 457.12L866.99 457.89L866.88 458.67L866.78 459.45L866.67 460.22L866.56 461.00L866.45 461.77L866.35 462.55L866.24 463.32L866.14 464.10L866.03 464.87L865.93 465.65L865.82 466.42L865.72 467.19L865.62 467.97L865.52 468.74L865.41 469.51L865.31 470.28L865.21 471.05L865.11 471.82L865.01 472.59L864.92 473.36L864.82 474.13L864.72 474.90L864.62 475.67" stroke="#606060" stroke-width="1.04" stroke-dasharray="1.04 1.8" fill="none"/><path d="M1097.96 195.93L1096.97 195.67L1095.99 195.41L1095.01 195.15L1094.03 194.90L1093.05 194.65L1092.08 194.41L1091.10 194.16L1090.13 193.92L1089.16 193.68L1088.19 193.44L1087.22 193.21L1086.26 192.98L1085.29 192.75L1084.33 192.52L1083.37 192.30L1082.42 192.08L1081.46 191.86L1080.51 191.65L1079.55 191.43L1078.60 191.22L1077.66 191.02L1076.71 190.81L1075.77 190.61L1074.82 190.41L1073.88 190.22L1072.94 190.02L1072.01 189.83L1071.07 189.65L1070.14 189.46L1069.21 189.28L1068.28 189.10L1067.36 188.93L1066.43 188.75L1065.51 188.58L1064.59 188.42L1063.67 188.25L1062.75 188.09L1061.84 187.93L1060.93 187.78L1060.02 187.62L1059.11 187.47L1058.20 187.33L1057.30 187.18L1056.40 187.04L1055.50 186.90L1054.60 186.77L1053.70 186.64L1052.81 186.51L1051.92 186.38L1051.03 186.26L1050.14 186.14L1049.26 186.02L1048.37 185.91L1047.49 185.80L1046.61 185.69L1045.73 185.59L1044.86 185.49L1043.99 185.39L1043.11 185.29L1042.24 185.20L1041.38 185.11L1040.51 185.03L1039.65 184.94L1038.79 184.86L1037.93 184.79L1037.07 184.71L1036.22 184.64L1035.36 184.58L1034.51 184.51L1033.66 184.45L1032.82 184.39L1031.97 184.34L1031.13 184.29L1030.29 184.24L1029.45 184.19L1028.61 184.15L1027.77 184.11L1026.94 184.08L1026.11 184.05L1025.28 184.02L1024.45 183.99L1023.62 183.97L1022.80 183.95L1021.98 183.93L1021.15 183.92L1020.34 183.91L1019.52 183.90L1018.70 183.90L1017.89 183.90L1017.08 183.90L1016.27 183.91L1015.46 183.92L1014.65 183.93L1013.85 183.94L1013.05 183.96L1012.24 183.98L1011.44 184.01L1010.65 184.04L1009.85 184.07L1009.05 184.10L1008.26 184.14L1007.47 184.18L1006.68 184.22L1005.89 184.27L1005.10 184.32L1004.32 184.38L1003.53 184.43L1002.75 184.49L1001.97 184.55L1001.19 184.62L1000.41 184.69L999.64 184.76L998.86 184.84L998.09 184.92L997.32 185.00L996.55 185.08L995.78 185.17L995.01 185.26L994.24 185.36L993.48 185.45L992.71 185.55L991.95 185.66L991.19 185.76L990.43 185.87L989.67 185.99L988.91 186.10L988.16 186.22L987.40 186.34L986.65 186.47L985.89 186.59L985.14 186.72L984.39 186.86L983.64 187.00L982.89 187.14L982.14 187.28L981.40 187.42L980.65 187.57L979.91 187.72L979.16 187.88L978.42 188.04L977.68 188.20L976.94 188.36L976.20 188.53L975.46 188.70L974.72 188.87L973.99 189.04L973.25 189.22L972.51 189.40L971.78 189.58L971.05 189.77L970.31 189.96L969.58 190.15L968.85 190.35L968.12 190.55L967.39 190.75L966.66 190.95L965.93 191.16L965.21 191.36L964.48 191.58L963.75 191.79L963.03 192.01L962.30 192.23L961.58 192.45L960.86 192.67L960.13 192.90L959.41 193.13L958.69 193.36L957.97 193.60L957.25 193.84L956.53 194.08L955.81 194.32L955.09 194.57L954.37 194.82L953.65 195.07L952.93 195.32L952.21 195.58L951.50 195.84L950.78 196.10L950.07 196.36L949.35 196.63L948.63 196.90L947.92 197.17L947.21 197.44L946.49 197.72L945.78 198.00L945.06 198.28L944.35 198.56L943.64 198.85L942.93 199.14L942.21 199.43L941.50 199.72L940.79 200.01L940.08 200.31L939.37 200.61L938.66 200.91L937.95 201.22L937.23 201.53L936.52 201.83L935.81 202.15L935.10 202.46L934.39 202.77L933.69 203.09L932.98 203.41L932.27 203.73L931.56 204.06L930.85 204.38L930.14 204.71L929.43 205.04L928.72 205.38L928.02 205.71L927.31 206.05L926.60 206.39L925.89 206.73L925.18 207.07L924.48 207.42L923.77 207.76L923.06 208.11L922.35 208.46L921.65 208.82L920.94 209.17L920.23 209.53L919.52 209.89L918.82 210.25L918.11 210.61L917.40 210.98L916.70 211.34L915.99 211.71L915.28 212.08L914.57 212.45L913.87 212.83L913.16 213.20L912.45 213.58L911.75 213.96L911.04 214.34L910.33 214.72L909.63 215.11L908.92 215.50L908.21 215.88L907.51 216.27L906.80 216.67L906.09 217.06L905.39 217.45L904.68 217.85L903.97 218.25L903.27 218.65L902.56 219.05L901.85 219.45L901.15 219.86L900.44 220.26L899.73 220.67L899.03 221.08L898.32 221.49L897.61 221.91L896.91 222.32L896.20 222.74L895.49 223.15L894.79 223.57L894.08 223.99L893.37 224.41L892.67 224.84L891.96 225.26L891.25 225.69L890.55 226.11L889.84 226.54L889.13 226.97L888.43 227.41L887.72 227.84L887.01 228.27L886.31 228.71L885.60 229.15L884.89 229.58L884.19 230.02L883.48 230.47L882.77 230.91L882.07 231.35L881.36 231.80L880.66 232.24L879.95 232.69L879.24 233.14L878.54 233.59L877.83 234.04L877.12 234.49L876.42 234.95L875.71 235.40L875.01 235.86L874.30 236.32L873.60 236.78L872.89 237.24L872.19 237.70L871.48 238.16L870.77 238.62L870.07 239.09L869.36 239.55L868.66 240.02L867.95 240.49L867.25 240.95L866.55 241.42L865.84 241.89L865.14 242.37L864.43 242.84L863.73 243.31L863.02 243.79L862.32 244.26L861.62 244.74L860.91 245.22L860.21 245.70L859.51 246.18L858.81 246.66L858.10 247.14L857.40 247.62L856.70 248.11L856.00 248.59L855.29 249.08L854.59 249.57L853.89 250.05L853.19 250.54L852.49 251.03L851.79 251.52L851.09 252.01L850.39 252.50L849.69 253.00L848.99 253.49L848.29 253.99L847.59 254.48L846.89 254.98L846.20 255.47L845.50 255.97L844.80 256.47L844.10 256.97L843.41 257.47L842.71 257.97L842.01 258.47L841.32 258.97L840.62 259.48L839.93 259.98L839.23 260.49L838.54 260.99L837.84 261.50L837.15 262.01L836.45 262.51L835.76 263.02L835.07 263.53L834.38 264.04L833.69 264.55L832.99 265.06L832.30 265.57L831.61 266.08L830.92 266.60L830.23 267.11L829.54 267.63L828.86 268.14L828.17 268.66L827.48 269.17L826.79 269.69L826.11 270.21L825.42 270.72L824.74 271.24L824.05 271.76L823.37 272.28L822.68 272.80L822.00 273.32L821.32 273.84L820.64 274.36L819.95 274.89L819.27 275.41L818.59 275.93L817.91 276.46L817.23 276.98L816.55 277.50L815.88 278.03L815.20 278.56L814.52 279.08L813.85 279.61L813.17 280.14L812.50 280.66L811.82 281.19L811.15 281.72L810.48 282.25L809.81 282.78L809.13 283.31L808.46 283.84L807.79 284.37L807.12 284.90L806.46 285.43L805.79 285.96L805.12 286.49L804.46 287.03L803.79 287.56L803.13 288.09L802.46 288.63L801.80 289.16L801.14 289.69L800.48 290.23L799.81 290.76M1072.17 274.62L1071.34 274.52L1070.51 274.42L1069.68 274.32L1068.86 274.22L1068.03 274.12L1067.20 274.02L1066.37 273.93L1065.54 273.83L1064.71 273.74L1063.89 273.64L1063.06 273.55L1062.23 273.46L1061.40 273.37L1060.58 273.28L1059.75 273.19L1058.92 273.10L1058.10 273.01L1057.27 272.93L1056.44 272.84L1055.62 272.76L1054.79 272.67L1053.97 272.59L1053.14 272.51L1052.32 272.43L1051.49 272.35L1050.66 272.27L1049.84 272.19L1049.02 272.12L1048.19 272.04L1047.37 271.97L1046.54 271.89L1045.72 271.82L1044.89 271.75L1044.07 271.67L1043.25 271.60L1042.42 271.53L1041.60 271.47L1040.78 271.40L1039.95 271.33L1039.13 271.26L1038.31 271.20L1037.49 271.14L1036.66 271.07L1035.84 271.01L1035.02 270.95L1034.20 270.89L1033.38 270.83L1032.55 270.77L1031.73 270.72L1030.91 270.66L1030.09 270.60L1029.27 270.55L1028.45 270.50L1027.63 270.44L1026.81 270.39L1025.99 270.34L1025.17 270.29L1024.35 270.24L1023.53 270.20L1022.71 270.15L1021.89 270.11L1021.07 270.06L1020.25 270.02L1019.43 269.97L1018.62 269.93L1017.80 269.89L1016.98 269.85L1016.16 269.81L1015.34 269.78L1014.53 269.74L1013.71 269.70L1012.89 269.67L1012.07 269.63L1011.26 269.60L1010.44 269.57L1009.62 269.54L1008.81 269.51L1007.99 269.48L1007.17 269.45L1006.36 269.43L1005.54 269.40L1004.73 269.38L1003.91 269.35L1003.09 269.33L1002.28 269.31L1001.46 269.29L1000.65 269.27L999.83 269.25L999.02 269.23L998.20 269.21L997.39 269.20L996.57 269.18L995.76 269.17L994.95 269.15L994.13 269.14L993.32 269.13L992.50 269.12L991.69 269.11L990.88 269.10L990.06 269.10L989.25 269.09L988.44 269.09L987.63 269.08L986.81 269.08L986.00 269.08L985.19 269.08L984.37 269.08L983.56 269.08L982.75 269.08L981.94 269.08L981.13 269.09L980.31 269.09L979.50 269.10L978.69 269.11L977.88 269.11L977.07 269.12L976.26 269.13L975.45 269.14L974.64 269.16L973.82 269.17L973.01 269.18L972.20 269.20L971.39 269.21L970.58 269.23L969.77 269.25L968.96 269.27L968.15 269.29L967.34 269.31L966.53 269.33L965.72 269.35L964.91 269.38L964.10 269.40L963.29 269.43L962.48 269.46L961.67 269.48L960.86 269.51L960.05 269.54L959.25 269.57L958.44 269.61L957.63 269.64L956.82 269.67L956.01 269.71L955.20 269.74L954.39 269.78L953.58 269.82L952.77 269.86L951.97 269.90L951.16 269.94L950.35 269.98L949.54 270.02L948.73 270.07L947.92 270.11L947.12 270.16L946.31 270.20L945.50 270.25L944.69 270.30L943.89 270.35L943.08 270.40L942.27 270.45L941.46 270.50L940.65 270.56L939.85 270.61L939.04 270.67L938.23 270.72L937.42 270.78L936.62 270.84L935.81 270.90L935.00 270.96L934.19 271.02L933.39 271.08L932.58 271.14L931.77 271.21L930.97 271.27L930.16 271.34L929.35 271.40L928.55 271.47L927.74 271.54L926.93 271.61L926.12 271.68L925.32 271.75L924.51 271.83L923.70 271.90L922.90 271.97L922.09 272.05L921.28 272.12L920.48 272.20L919.67 272.28L918.86 272.36L918.06 272.44L917.25 272.52L916.44 272.60L915.64 272.68L914.83 272.77L914.02 272.85L913.22 272.94L912.41 273.02L911.60 273.11L910.80 273.20L909.99 273.29L909.18 273.38L908.38 273.47L907.57 273.56L906.77 273.65L905.96 273.75L905.15 273.84L904.35 273.94L903.54 274.03L902.73 274.13L901.93 274.23L901.12 274.33L900.31 274.43L899.51 274.53L898.70 274.63L897.89 274.73L897.09 274.83L896.28 274.94L895.47 275.04L894.67 275.15L893.86 275.26L893.05 275.36L892.25 275.47L891.44 275.58L890.63 275.69L889.83 275.80L889.02 275.91L888.22 276.03L887.41 276.14L886.60 276.25L885.80 276.37L884.99 276.49L884.18 276.60L883.38 276.72L882.57 276.84L881.76 276.96L880.96 277.08L880.15 277.20L879.34 277.32L878.54 277.44L877.73 277.57L876.92 277.69L876.12 277.82L875.31 277.94L874.50 278.07L873.69 278.20L872.89 278.32L872.08 278.45L871.27 278.58L870.47 278.71L869.66 278.84L868.85 278.98L868.05 279.11L867.24 279.24L866.43 279.38L865.63 279.51L864.82 279.65L864.01 279.79L863.20 279.92L862.40 280.06L861.59 280.20L860.78 280.34L859.98 280.48L859.17 280.62L858.36 280.76L857.56 280.91L856.75 281.05L855.94 281.19L855.13 281.34L854.33 281.49L853.52 281.63L852.71 281.78L851.91 281.93L851.10 282.08L850.29 282.22L849.48 282.37L848.68 282.53L847.87 282.68L847.06 282.83L846.26 282.98L845.45 283.14L844.64 283.29L843.83 283.44L843.03 283.60L842.22 283.76L841.41 283.91L840.60 284.07L839.80 284.23L838.99 284.39L838.18 284.55L837.38 284.71L836.57 284.87L835.76 285.03L834.95 285.19L834.15 285.36L833.34 285.52L832.53 285.68L831.73 285.85L830.92 286.01L830.11 286.18L829.30 286.35L828.50 286.51L827.69 286.68L826.88 286.85L826.08 287.02L825.27 287.19L824.46 287.36L823.65 287.53L822.85 287.70L822.04 287.88L821.23 288.05L820.43 288.22L819.62 288.40L818.81 288.57L818.01 288.75L817.20 288.92L816.39 289.10L815.59 289.27L814.78 289.45L813.97 289.63L813.17 289.81L812.36 289.99L811.55 290.17L810.75 290.35L809.94 290.53L809.13 290.71L808.33 290.89L807.52 291.07L806.71 291.26L805.91 291.44L805.10 291.63L804.29 291.81L803.49 291.99L802.68 292.18L801.88 292.37L801.07 292.55L800.26 292.74" stroke="#3fbf5a" stroke-width="1.3" stroke-dasharray="1.3 2.1" fill="none"/><path d="M1082 192L1097.8 195.6M1026.7 270.2L1073.3 274.7" stroke="#4cc36a" stroke-width="1.6" fill="none"/><circle cx="1097.8" cy="195.6" r="1.3" fill="#ff5a3c"/><circle cx="1073.3" cy="274.7" r="1.3" fill="#ff5a3c"/><path d="M887.7 70.3L890.9 90L884 96M1002.7 75.6L1072.3 96.9M1020 171.1L1055.6 193.3M1078.5 220.5L1096.1 235" stroke="#7a7a7a" stroke-width="1.3" stroke-linecap="round" fill="none"/><text x="797.5" y="291.9" font-family="Liberation Sans, sans-serif" font-size="11" fill="#fff" text-anchor="middle">STA</text><path d="M795 293.4h7M798.5 289.9v7" stroke="#f00" stroke-width="1.5"/></svg></body></html>
